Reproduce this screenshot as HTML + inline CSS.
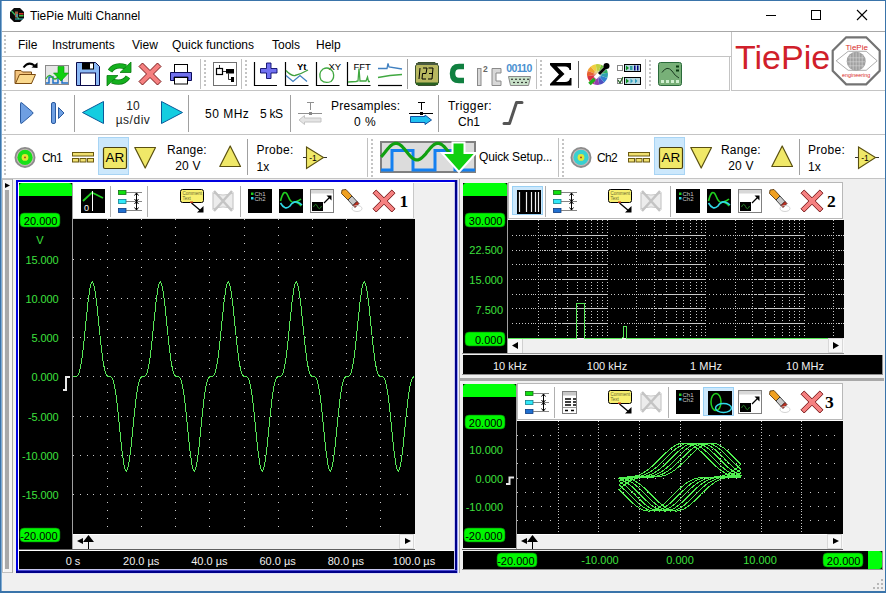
<!DOCTYPE html><html><head><meta charset="utf-8"><style>html,body{margin:0;padding:0;width:886px;height:593px;overflow:hidden;background:#f0f0f0}svg{display:block;font-family:"Liberation Sans",sans-serif}</style></head><body>
<svg width="886" height="593" viewBox="0 0 886 593">
<rect x="0" y="0" width="886" height="593" fill="#f0f0f0" />
<rect x="0" y="0" width="886" height="31" fill="#ffffff" />
<rect x="0" y="31" width="886" height="1" fill="#a8a8a8" />
<rect x="0" y="32" width="886" height="146" fill="#ffffff" />
<rect x="0" y="56" width="887" height="1" fill="#c4c4c4" />
<rect x="0" y="90" width="730" height="1" fill="#c4c4c4" />
<rect x="0" y="134" width="887" height="1" fill="#c4c4c4" />
<rect x="0" y="178" width="887" height="1" fill="#c4c4c4" />
<rect x="4" y="35" width="2" height="2" fill="#c4c4c4" />
<rect x="4" y="39" width="2" height="2" fill="#c4c4c4" />
<rect x="4" y="43" width="2" height="2" fill="#c4c4c4" />
<rect x="4" y="47" width="2" height="2" fill="#c4c4c4" />
<rect x="4" y="51" width="2" height="2" fill="#c4c4c4" />
<rect x="4" y="60" width="2" height="2" fill="#c4c4c4" />
<rect x="4" y="64" width="2" height="2" fill="#c4c4c4" />
<rect x="4" y="68" width="2" height="2" fill="#c4c4c4" />
<rect x="4" y="72" width="2" height="2" fill="#c4c4c4" />
<rect x="4" y="76" width="2" height="2" fill="#c4c4c4" />
<rect x="4" y="80" width="2" height="2" fill="#c4c4c4" />
<rect x="4" y="84" width="2" height="2" fill="#c4c4c4" />
<rect x="4" y="93" width="2" height="2" fill="#c4c4c4" />
<rect x="4" y="97" width="2" height="2" fill="#c4c4c4" />
<rect x="4" y="101" width="2" height="2" fill="#c4c4c4" />
<rect x="4" y="105" width="2" height="2" fill="#c4c4c4" />
<rect x="4" y="109" width="2" height="2" fill="#c4c4c4" />
<rect x="4" y="113" width="2" height="2" fill="#c4c4c4" />
<rect x="4" y="117" width="2" height="2" fill="#c4c4c4" />
<rect x="4" y="121" width="2" height="2" fill="#c4c4c4" />
<rect x="4" y="125" width="2" height="2" fill="#c4c4c4" />
<rect x="4" y="129" width="2" height="2" fill="#c4c4c4" />
<rect x="4" y="137" width="2" height="2" fill="#c4c4c4" />
<rect x="4" y="141" width="2" height="2" fill="#c4c4c4" />
<rect x="4" y="145" width="2" height="2" fill="#c4c4c4" />
<rect x="4" y="149" width="2" height="2" fill="#c4c4c4" />
<rect x="4" y="153" width="2" height="2" fill="#c4c4c4" />
<rect x="4" y="157" width="2" height="2" fill="#c4c4c4" />
<rect x="4" y="161" width="2" height="2" fill="#c4c4c4" />
<rect x="4" y="165" width="2" height="2" fill="#c4c4c4" />
<rect x="4" y="169" width="2" height="2" fill="#c4c4c4" />
<rect x="4" y="173" width="2" height="2" fill="#c4c4c4" />
<g transform="translate(10,8)"><polygon points="4,0 10,0 14,4 14,10 10,14 4,14 0,10 0,4" fill="#0a0a0a"/><path d="M1.5,3 L9,11" stroke="#30c060" stroke-width="1.2"/><rect x="5" y="3.5" width="3" height="6" fill="#a06040"/><rect x="6" y="6" width="2" height="3" fill="#5090a0"/><rect x="9" y="5" width="4.5" height="1.5" fill="#d03020"/><rect x="9" y="7" width="4.5" height="1.5" fill="#40c040"/><path d="M5,11 H13" stroke="#40c0c0" stroke-width="1"/></g>
<text x="30" y="20" font-size="12" fill="#000" text-anchor="start" >TiePie Multi Channel</text>
<rect x="766" y="15" width="10" height="1" fill="#000" />
<rect x="811.5" y="10.5" width="9" height="9" fill="none" stroke="#000" stroke-width="1"/>
<path d="M857,10 L867,20 M867,10 L857,20" stroke="#000" stroke-width="1.1"/>
<text x="18" y="49" font-size="12" fill="#000" text-anchor="start" >File</text>
<text x="52" y="49" font-size="12" fill="#000" text-anchor="start" >Instruments</text>
<text x="132" y="49" font-size="12" fill="#000" text-anchor="start" >View</text>
<text x="172" y="49" font-size="12" fill="#000" text-anchor="start" >Quick functions</text>
<text x="272" y="49" font-size="12" fill="#000" text-anchor="start" >Tools</text>
<text x="316" y="49" font-size="12" fill="#000" text-anchor="start" >Help</text>
<rect x="731" y="32" width="154" height="58" fill="#ffffff" />
<rect x="729" y="57" width="1" height="33" fill="#c4c4c4" />
<rect x="731" y="32" width="1" height="59" fill="#c4c4c4" />
<rect x="731" y="90" width="154" height="1" fill="#c4c4c4" />
<text x="735" y="69" font-size="34" fill="#d0202a" text-anchor="start" >TiePie</text>
<g transform="translate(856.2,60.8)"><polygon points="-10,-23.5 10,-23.5 23.5,-10 23.5,10 10,23.5 -10,23.5 -23.5,10 -23.5,-10" fill="#fff" stroke="#737373" stroke-width="2.2"/><path d="M-20,0 L-8,-9.5 L10,-9.5 L21,0 L10,9.5 L-8,9.5 Z" fill="none" stroke="#8a8a8a" stroke-width="0.7"/><circle cx="0" cy="0.5" r="9.5" fill="#a0a0a0"/><path d="M-6,-6 V7 M-3,-8 V9 M0,-8.5 V9.5 M3,-8 V9 M6,-6 V7 M-8,-3 H8 M-9,1 H9 M-8,5 H8" stroke="#d8d8d8" stroke-width="0.6"/><text x="0.5" y="-11" font-size="8" fill="#d82a2a" text-anchor="middle">TiePie</text><text x="0" y="16" font-size="5.4" fill="#d82a2a" text-anchor="middle">engineering</text></g>
<g transform="translate(14,62)"><path d="M1,8.5 H7 L8.5,10 H17.5 V21.5 H1 Z" fill="#f2c37e" stroke="#7a4a10" stroke-width="1"/><path d="M1.5,21.5 L5.5,12.5 H21.5 L17.5,21.5 Z" fill="#fad98e" stroke="#7a4a10" stroke-width="1"/><path d="M9.5,5.5 Q14.5,-1 20.5,3.5" fill="none" stroke="#000" stroke-width="2"/><path d="M17.5,5.5 L23.5,0.5 L23.5,6 Z" fill="#000"/></g>
<g transform="translate(45,65)"><rect x="0.5" y="0.5" width="23" height="19" fill="#e6e6e6" stroke="#8a8a8a"/><path d="M1,18 H4 V12 H8 V18 H13 V12 H17 V18 H23" fill="none" stroke="#2070c8" stroke-width="1.5"/><path d="M1,14 Q4,8 7,12 T13,12" fill="none" stroke="#30b030" stroke-width="1.3"/><path d="M13,1.5 H19 V8 H23.5 L16,16 L8.5,8 H13 Z" fill="#10d010" stroke="#0a900a" stroke-width="0.6"/></g>
<g transform="translate(76,62)"><path d="M0.5,0.5 H19.5 L23.5,4.5 V23.5 H0.5 Z" fill="#8ab8f4" stroke="#0a0a4a" stroke-width="1"/><rect x="6" y="0.5" width="12" height="7" fill="#000"/><rect x="14" y="1.5" width="3" height="5" fill="#fff"/><rect x="4.5" y="11" width="15" height="12.5" fill="#fff" stroke="#0a0a4a" stroke-width="1"/></g>
<g transform="translate(107,62)"><path d="M3,9 Q8,1.5 19,5" fill="none" stroke="#0a7a10" stroke-width="5.2"/><path d="M3,9 Q8,1.5 19,5" fill="none" stroke="#14b01e" stroke-width="3.6"/><path d="M13,10.5 L24,10.5 L24,0 Z" fill="#14b01e" stroke="#0a7a10" stroke-width="0.8"/><path d="M21,15 Q16,22.5 5,19" fill="none" stroke="#0a7a10" stroke-width="5.2"/><path d="M21,15 Q16,22.5 5,19" fill="none" stroke="#14b01e" stroke-width="3.6"/><path d="M11,13.5 L0,13.5 L0,24 Z" fill="#14b01e" stroke="#0a7a10" stroke-width="0.8"/></g>
<g transform="translate(139,63)"><path d="M0,3.5 L3.5,0 L11,7.5 L18.5,0 L22,3.5 L14.5,11 L22,18.5 L18.5,22 L11,14.5 L3.5,22 L0,18.5 L7.5,11 Z" fill="#f58080" stroke="#7a1a1a" stroke-width="1"/></g>
<g transform="translate(170,64)"><rect x="4.5" y="0.5" width="13" height="8" fill="#fff" stroke="#000"/><path d="M0.5,8.5 H21.5 V16.5 H18 V13 H4 V16.5 H0.5 Z" fill="#7070ec" stroke="#0a0a5a"/><rect x="4.5" y="13.5" width="13" height="6.5" fill="#fff" stroke="#000"/></g>
<rect x="200" y="59" width="1" height="30" fill="#c0c0c0" />
<rect x="204" y="60" width="2" height="2" fill="#c4c4c4" />
<rect x="204" y="64" width="2" height="2" fill="#c4c4c4" />
<rect x="204" y="68" width="2" height="2" fill="#c4c4c4" />
<rect x="204" y="72" width="2" height="2" fill="#c4c4c4" />
<rect x="204" y="76" width="2" height="2" fill="#c4c4c4" />
<rect x="204" y="80" width="2" height="2" fill="#c4c4c4" />
<rect x="204" y="84" width="2" height="2" fill="#c4c4c4" />
<g transform="translate(213,62)"><rect x="0.5" y="0.5" width="23" height="23" fill="#fff" stroke="#707070"/><rect x="3.5" y="6.5" width="6" height="6" fill="#fff" stroke="#000" stroke-width="1.2"/><path d="M6.5,3 V6.5 M9.5,9.5 H13 M15.5,11.5 V17.5 H18" fill="none" stroke="#000" stroke-width="0.8"/><rect x="13" y="7" width="8" height="4.5" fill="#000"/><rect x="18" y="15" width="3" height="5" fill="#000"/></g>
<rect x="241" y="59" width="1" height="30" fill="#c0c0c0" />
<rect x="245" y="60" width="2" height="2" fill="#c4c4c4" />
<rect x="245" y="64" width="2" height="2" fill="#c4c4c4" />
<rect x="245" y="68" width="2" height="2" fill="#c4c4c4" />
<rect x="245" y="72" width="2" height="2" fill="#c4c4c4" />
<rect x="245" y="76" width="2" height="2" fill="#c4c4c4" />
<rect x="245" y="80" width="2" height="2" fill="#c4c4c4" />
<rect x="245" y="84" width="2" height="2" fill="#c4c4c4" />
<g transform="translate(254,62)"><path d="M0.5,0 V23.5 H23" fill="none" stroke="#000" stroke-width="1.2"/><path d="M12.5,1 H17 V6.5 H23 V11 H17 V16.5 H12.5 V11 H6.5 V6.5 H12.5 Z" fill="#7070f0" stroke="#0a0a6a" stroke-width="0.9"/></g>
<g transform="translate(285,62)"><path d="M0.5,0 V23.5 H23.5" fill="none" stroke="#000" stroke-width="1.2"/><text x="12" y="7.5" font-size="9.5" font-weight="bold" fill="#000">Yt</text><path d="M1,8.5 Q6,14 10,13.5 Q16,12 23,8" fill="none" stroke="#40a040" stroke-width="1.3"/><path d="M1,13.5 L8,19.5 L15,13.5 L22,19.5" fill="none" stroke="#4080c0" stroke-width="1.3"/></g>
<g transform="translate(316,62)"><path d="M0.5,0 V23.5 H23.5" fill="none" stroke="#000" stroke-width="1.2"/><text x="12.5" y="7.5" font-size="9.5" fill="#000">XY</text><path d="M7,7 Q13,4 17,10 Q19,16 15,19.5 Q9,22 5,18 Q2,11 7,7 Z" fill="none" stroke="#40a840" stroke-width="1.3"/></g>
<g transform="translate(347,62)"><path d="M0.5,0 V23.5 H23.5" fill="none" stroke="#000" stroke-width="1.2"/><text x="6.5" y="7.5" font-size="9.5" fill="#000">FFT</text><path d="M1,20 L9,19.5 L11,19 L12,6.5 L13,19 L19,19 L20.5,15 L21.5,19.5 L23,19.5" fill="none" stroke="#40a840" stroke-width="1.3"/></g>
<g transform="translate(378,62)"><path d="M0,23.5 H24" stroke="#000" stroke-width="1.2"/><path d="M0,6.5 H9 L10,1.5 L11,5 L24,7" fill="none" stroke="#4080c0" stroke-width="1.3"/><path d="M0,15.5 Q12,13 24,12.5" fill="none" stroke="#40a840" stroke-width="1.3"/></g>
<rect x="407" y="59" width="1" height="30" fill="#a0a0a0" />
<g transform="translate(415,62)"><path d="M3,0.5 H20 L23.5,4 V21 L20.5,23.5 H3 L0.5,21 V4 Z" fill="#b8b860" stroke="#3a5030" stroke-width="1"/><rect x="1" y="1" width="22" height="2" fill="#4a5a40"/><rect x="1" y="20.5" width="22" height="2.5" fill="#2a6020"/><path d="M5,6 L4,17 M8,6 H12 L11,11.5 H7.5 L7,17 H11 M13.5,6 H18 L17,17 H13 M14,11.5 H17.5" fill="none" stroke="#000" stroke-width="1"/></g>
<g transform="translate(450,62)"><path d="M14,4.5 H9 Q2.5,4.5 2.5,11.5 Q2.5,18.5 9,18.5 H14" fill="none" stroke="#108040" stroke-width="5.5"/></g>
<g transform="translate(477,62)"><rect x="0.5" y="6.5" width="3.5" height="17" fill="#d8d8d8" stroke="#8a8a8a"/><text x="6" y="9.5" font-size="8.5" font-weight="bold" fill="#666">2</text><path d="M15,6.5 H24 V11 H19 V19 H24 V23.5 H15 Z" fill="#d8d8d8" stroke="#8a8a8a"/></g>
<g transform="translate(508,62)"><text x="11" y="10" font-size="10.5" font-weight="bold" fill="#4a90d0" text-anchor="middle" letter-spacing="-0.6">00110</text><path d="M0.5,14.5 H22.5 L20.5,23.5 H2.5 Z" fill="#c8e0c8" stroke="#8a8a8a"/><circle cx="4" cy="17.3" r="0.8" fill="#000"/><circle cx="8" cy="17.3" r="0.8" fill="#000"/><circle cx="12" cy="17.3" r="0.8" fill="#000"/><circle cx="16" cy="17.3" r="0.8" fill="#000"/><circle cx="20" cy="17.3" r="0.8" fill="#000"/><circle cx="6" cy="20.5" r="0.8" fill="#000"/><circle cx="10" cy="20.5" r="0.8" fill="#000"/><circle cx="14" cy="20.5" r="0.8" fill="#000"/><circle cx="18" cy="20.5" r="0.8" fill="#000"/></g>
<rect x="536" y="59" width="1" height="30" fill="#c0c0c0" />
<rect x="540" y="60" width="2" height="2" fill="#c4c4c4" />
<rect x="540" y="64" width="2" height="2" fill="#c4c4c4" />
<rect x="540" y="68" width="2" height="2" fill="#c4c4c4" />
<rect x="540" y="72" width="2" height="2" fill="#c4c4c4" />
<rect x="540" y="76" width="2" height="2" fill="#c4c4c4" />
<rect x="540" y="80" width="2" height="2" fill="#c4c4c4" />
<rect x="540" y="84" width="2" height="2" fill="#c4c4c4" />
<g transform="translate(549,62)"><path d="M1,1 H22 V8 H20.5 Q20,4.5 16,4.5 H8 L15.5,12 L7,20 H16 Q20.5,20 21,16 H22.5 V23.5 H1 V22 L10,12.5 L1,3 Z" fill="#000"/></g>
<rect x="578" y="61" width="1" height="27" fill="#606060" />
<g transform="translate(586,62)"><path d="M11.5,12.5 L9.68,2.16 A10.5,10.5 0 0 0 4.75,4.46 Z" fill="#f0d040"/><path d="M11.5,12.5 L4.75,4.46 A10.5,10.5 0 0 0 1.63,8.91 Z" fill="#f0a030"/><path d="M11.5,12.5 L1.63,8.91 A10.5,10.5 0 0 0 1.16,14.32 Z" fill="#e86030"/><path d="M11.5,12.5 L1.16,14.32 A10.5,10.5 0 0 0 3.46,19.25 Z" fill="#d83040"/><path d="M11.5,12.5 L3.46,19.25 A10.5,10.5 0 0 0 7.91,22.37 Z" fill="#c03080"/><path d="M11.5,12.5 L7.91,22.37 A10.5,10.5 0 0 0 13.32,22.84 Z" fill="#9040b0"/><path d="M11.5,12.5 L13.32,22.84 A10.5,10.5 0 0 0 18.25,20.54 Z" fill="#5050c0"/><path d="M11.5,12.5 L18.25,20.54 A10.5,10.5 0 0 0 21.37,16.09 Z" fill="#3080d0"/><path d="M11.5,12.5 L21.37,16.09 A10.5,10.5 0 0 0 21.84,10.68 Z" fill="#30a0b0"/><path d="M11.5,12.5 L21.84,10.68 A10.5,10.5 0 0 0 19.54,5.75 Z" fill="#30b060"/><path d="M11.5,12.5 L19.54,5.75 A10.5,10.5 0 0 0 15.09,2.63 Z" fill="#70c040"/><path d="M11.5,12.5 L15.09,2.63 A10.5,10.5 0 0 0 9.68,2.16 Z" fill="#c0d040"/><circle cx="11.5" cy="12.5" r="4" fill="#e0e0e0" opacity="0.4"/><path d="M9,16 L20,5" stroke="#fff" stroke-width="3.5"/><path d="M13,12 L20,5" stroke="#000" stroke-width="3"/><circle cx="20.5" cy="4" r="3" fill="#000"/><path d="M3.5,22 L8.5,17" stroke="#20b020" stroke-width="3.5"/></g>
<g transform="translate(617,62)"><rect x="0.5" y="3.5" width="5" height="5" fill="#fff" stroke="#888"/><rect x="7.5" y="2.5" width="16" height="7" fill="#b8d8e0" stroke="#000"/><path d="M9,3.5 L12,6 L9,8.5 Z" fill="#109020"/><rect x="13" y="4" width="2.5" height="4" fill="#30a0a0"/><rect x="17" y="3.5" width="1.5" height="5" fill="#000080"/><rect x="20" y="3.5" width="1.5" height="5" fill="#000080"/><rect x="0.5" y="16.5" width="5" height="5" fill="#fff" stroke="#888"/><path d="M1,18 L3,21 L6,15" fill="none" stroke="#206020" stroke-width="1.2"/><rect x="7.5" y="15.5" width="16" height="7" fill="#b8d8e0" stroke="#000"/><path d="M9,16.5 L12,19 L9,21.5 Z" fill="#109020"/><path d="M13.5,16.5 L16,19 L13.5,21.5 Z" fill="#30a0c0"/><path d="M18,16.5 L20.5,19 L18,21.5 Z" fill="#30a0c0"/></g>
<rect x="645" y="59" width="1" height="30" fill="#c0c0c0" />
<rect x="649" y="60" width="2" height="2" fill="#c4c4c4" />
<rect x="649" y="64" width="2" height="2" fill="#c4c4c4" />
<rect x="649" y="68" width="2" height="2" fill="#c4c4c4" />
<rect x="649" y="72" width="2" height="2" fill="#c4c4c4" />
<rect x="649" y="76" width="2" height="2" fill="#c4c4c4" />
<rect x="649" y="80" width="2" height="2" fill="#c4c4c4" />
<rect x="649" y="84" width="2" height="2" fill="#c4c4c4" />
<g transform="translate(658,62)"><rect x="0.5" y="0.5" width="23" height="23" rx="2" fill="#78b078" stroke="#2a6a3a"/><path d="M4,10.5 Q9,3 14,9 Q17,14 21,16" fill="none" stroke="#1a3a20" stroke-width="1"/><rect x="18" y="3.5" width="3" height="2" fill="#0a3a10"/><rect x="18" y="7.5" width="3" height="2" fill="#0a3a10"/><rect x="3" y="18" width="3" height="3" fill="#d0f0d0"/><rect x="8" y="18" width="3" height="3" fill="#d0f0d0"/><rect x="13" y="18" width="3" height="3" fill="#d0f0d0"/><rect x="18" y="18" width="3" height="3" fill="#d0f0d0"/></g>
<g transform="translate(20,102)"><path d="M0.5,1.5 Q0.5,0 2,1 L12.5,10 Q13.5,11 12.5,12 L2,21 Q0.5,22 0.5,20.5 Z" fill="#6e9fe2" stroke="#2a5aa0" stroke-width="1"/></g>
<g transform="translate(51,102)"><rect x="0.5" y="0.5" width="4" height="21" rx="1.5" fill="#6e9fe2" stroke="#2a5aa0"/><path d="M7.5,5.5 L13,11 L7.5,16.5 Z" fill="#6e9fe2" stroke="#2a5aa0"/></g>
<rect x="74" y="95" width="1" height="37" fill="#a0a0a0" />
<g transform="translate(82,101)"><path d="M0.5,11.5 L21.5,0.5 V22.5 Z" fill="#14cde0" stroke="#0a5a9a" stroke-width="1"/></g>
<text x="133" y="110" font-size="12" fill="#222" text-anchor="middle" >10</text>
<text x="133" y="124" font-size="12" fill="#222" text-anchor="middle" letter-spacing="0.5">µs/div</text>
<g transform="translate(161,101)"><path d="M21.5,11.5 L0.5,0.5 V22.5 Z" fill="#14cde0" stroke="#0a5a9a" stroke-width="1"/></g>
<rect x="188" y="95" width="1" height="37" fill="#a0a0a0" />
<text x="205" y="118" font-size="12" fill="#000" text-anchor="start" letter-spacing="0.5">50 MHz</text>
<text x="260" y="118" font-size="12" fill="#000" text-anchor="start" letter-spacing="-0.3">5 kS</text>
<rect x="290" y="95" width="1" height="37" fill="#a0a0a0" />
<g transform="translate(298,101)"><path d="M9,1.5 H16 M12.5,1.5 V9" stroke="#909090" stroke-width="1"/><path d="M0,12.5 H24" stroke="#909090" stroke-width="1"/><rect x="11" y="11" width="3" height="3" fill="#888"/><path d="M1,19 L6.5,14.5 V17 H23 V21 H6.5 V23.5 Z" fill="#e4e4e4" stroke="#c4c4c4" stroke-width="1"/></g>
<text x="331" y="110" font-size="12" fill="#000" text-anchor="start" letter-spacing="0.25">Presamples:</text>
<text x="365" y="126" font-size="12" fill="#000" text-anchor="middle" letter-spacing="0.5">0 %</text>
<g transform="translate(409,101)"><path d="M9,1.5 H16 M12.5,1.5 V9" stroke="#000" stroke-width="1"/><path d="M0,12.5 H24" stroke="#000" stroke-width="1"/><rect x="11" y="11" width="3" height="3" fill="#000"/><path d="M1.5,15.5 H16 V14 L22.5,19 L16,23.5 V21.5 H1.5 Z" fill="#20c0f0" stroke="#1050a0" stroke-width="1"/></g>
<rect x="438" y="95" width="1" height="37" fill="#a0a0a0" />
<text x="448" y="110" font-size="12" fill="#000" text-anchor="start" letter-spacing="0.4">Trigger:</text>
<text x="469" y="126" font-size="12" fill="#000" text-anchor="middle" >Ch1</text>
<g transform="translate(503,101)"><path d="M1,22.5 H6.5 L13.5,1.5 H19" fill="none" stroke="#555" stroke-width="3" stroke-linejoin="round" stroke-linecap="round"/></g>
<circle cx="25" cy="157.4" r="9.6" fill="#c8b8b8" stroke="#8c8c8c" stroke-width="1.8"/><circle cx="25" cy="157.4" r="7.6" fill="#18e018"/><circle cx="25" cy="157.4" r="3.4" fill="#e8e830" opacity="0.95"/><circle cx="25" cy="157.4" r="0.9" fill="#b03020"/>
<text x="42" y="162" font-size="12" fill="#000" text-anchor="start" letter-spacing="-0.7">Ch1</text>
<g transform="translate(72,152)"><rect x="0.5" y="0.5" width="21" height="3.5" fill="#f0e070" stroke="#6a5a10"/><rect x="0.5" y="6.5" width="6" height="3.5" fill="#f0e070" stroke="#6a5a10"/><rect x="8" y="6.5" width="6" height="3.5" fill="#f0e070" stroke="#6a5a10"/><rect x="15.5" y="6.5" width="6" height="3.5" fill="#f0e070" stroke="#6a5a10"/></g>
<rect x="98" y="137" width="31" height="38" fill="#cce8fc" />
<rect x="98.5" y="137.5" width="30" height="37" fill="none" stroke="#a8d4f4"/>
<g transform="translate(103,147)"><rect x="0.5" y="0.5" width="23" height="21" rx="1.5" fill="#f0e868" stroke="#4a4010" stroke-width="1.2"/><text x="12" y="15" font-size="13.5" fill="#000" text-anchor="middle">AR</text></g>
<g transform="translate(134,147)"><path d="M0.8,0.5 H21.5 L11.2,21 Z" fill="#f0e868" stroke="#5a5010" stroke-width="1.2" stroke-linejoin="round"/></g>
<text x="167" y="154" font-size="12" fill="#000" text-anchor="start" letter-spacing="0.2">Range:</text>
<text x="188" y="170" font-size="12" fill="#000" text-anchor="middle" letter-spacing="0.2">20 V</text>
<g transform="translate(219,145.5)"><path d="M0.8,21 H21.5 L11.2,0.5 Z" fill="#f0e868" stroke="#5a5010" stroke-width="1.2" stroke-linejoin="round"/></g>
<rect x="247" y="139" width="1" height="36" fill="#a0a0a0" />
<text x="256.5" y="154" font-size="12" fill="#000" text-anchor="start" letter-spacing="0.3">Probe:</text>
<text x="256.5" y="170.5" font-size="12" fill="#000" text-anchor="start" >1x</text>
<g transform="translate(303,146.5)"><path d="M0,11 H3.5 M20.5,11 H24" stroke="#333" stroke-width="1"/><path d="M3.5,0.5 L20.5,11 L3.5,22 Z" fill="#f0e868" stroke="#5a5010" stroke-width="1.1"/><text x="10" y="14.5" font-size="8.5" fill="#000" text-anchor="middle">-1</text></g>
<rect x="367" y="138" width="1" height="39" fill="#c0c0c0" />
<rect x="371" y="139" width="2" height="2" fill="#c4c4c4" />
<rect x="371" y="143" width="2" height="2" fill="#c4c4c4" />
<rect x="371" y="147" width="2" height="2" fill="#c4c4c4" />
<rect x="371" y="151" width="2" height="2" fill="#c4c4c4" />
<rect x="371" y="155" width="2" height="2" fill="#c4c4c4" />
<rect x="371" y="159" width="2" height="2" fill="#c4c4c4" />
<rect x="371" y="163" width="2" height="2" fill="#c4c4c4" />
<rect x="371" y="167" width="2" height="2" fill="#c4c4c4" />
<rect x="371" y="171" width="2" height="2" fill="#c4c4c4" />
<rect x="371" y="175" width="2" height="2" fill="#c4c4c4" />
<g transform="translate(380,141)"><rect x="1" y="1" width="94" height="30" fill="#dcdcdc" stroke="#808080" stroke-width="2"/><path d="M1,29 H12 V9.5 H33 V29 H55 V9.5 H75 V29 H95" fill="none" stroke="#1480f0" stroke-width="3"/><polyline points="1,15.8 2,14.8 3,13.7 4,12.5 5,11.3 6,10.0 7,8.8 8,7.6 9,6.5 10,5.4 11,4.5 12,3.7 13,3.1 14,2.7 15,2.4 16,2.3 17,2.4 18,2.7 19,3.1 20,3.7 21,4.5 22,5.4 23,6.5 24,7.6 25,8.8 26,10.0 27,11.3 28,12.5 29,13.7 30,14.8 31,15.8 32,16.7 33,17.5 34,18.1 35,18.5 36,18.8 37,18.9 38,18.8 39,18.5 40,18.0 41,17.4 42,16.6 43,15.7 44,14.7 45,13.6 46,12.4 47,11.1 48,9.9 49,8.7 50,7.5 51,6.4 52,5.3 53,4.4 54,3.7 55,3.1 56,2.6 57,2.4 58,2.3 59,2.4 60,2.7 61,3.2 62,3.8 63,4.6 64,5.5 65,6.6 66,7.7 67,8.9 68,10.1 69,11.4 70,12.6 71,13.8 72,14.9 73,15.9 74,16.8" fill="none" stroke="#10a010" stroke-width="3.2"/><path d="M72.5,1.5 H84.5 V12 H96 L79,31 L62,12 H72.5 Z" fill="#10d010" stroke="#fff" stroke-width="2"/></g>
<text x="479" y="160.5" font-size="12" fill="#000" text-anchor="start" letter-spacing="-0.15">Quick Setup...</text>
<rect x="558" y="138" width="1" height="39" fill="#c0c0c0" />
<rect x="562" y="139" width="2" height="2" fill="#c4c4c4" />
<rect x="562" y="143" width="2" height="2" fill="#c4c4c4" />
<rect x="562" y="147" width="2" height="2" fill="#c4c4c4" />
<rect x="562" y="151" width="2" height="2" fill="#c4c4c4" />
<rect x="562" y="155" width="2" height="2" fill="#c4c4c4" />
<rect x="562" y="159" width="2" height="2" fill="#c4c4c4" />
<rect x="562" y="163" width="2" height="2" fill="#c4c4c4" />
<rect x="562" y="167" width="2" height="2" fill="#c4c4c4" />
<rect x="562" y="171" width="2" height="2" fill="#c4c4c4" />
<rect x="562" y="175" width="2" height="2" fill="#c4c4c4" />
<circle cx="581" cy="157.4" r="9.6" fill="#c8b8b8" stroke="#8c8c8c" stroke-width="1.8"/><circle cx="581" cy="157.4" r="7.6" fill="#38d0d0"/><circle cx="581" cy="157.4" r="3.4" fill="#e8e830" opacity="0.95"/><circle cx="581" cy="157.4" r="0.9" fill="#b03020"/>
<text x="597" y="162" font-size="12" fill="#000" text-anchor="start" letter-spacing="-0.7">Ch2</text>
<g transform="translate(628,152)"><rect x="0.5" y="0.5" width="21" height="3.5" fill="#f0e070" stroke="#6a5a10"/><rect x="0.5" y="6.5" width="6" height="3.5" fill="#f0e070" stroke="#6a5a10"/><rect x="8" y="6.5" width="6" height="3.5" fill="#f0e070" stroke="#6a5a10"/><rect x="15.5" y="6.5" width="6" height="3.5" fill="#f0e070" stroke="#6a5a10"/></g>
<rect x="654" y="137" width="31" height="38" fill="#cce8fc" />
<rect x="654.5" y="137.5" width="30" height="37" fill="none" stroke="#a8d4f4"/>
<g transform="translate(659,147)"><rect x="0.5" y="0.5" width="23" height="21" rx="1.5" fill="#f0e868" stroke="#4a4010" stroke-width="1.2"/><text x="12" y="15" font-size="13.5" fill="#000" text-anchor="middle">AR</text></g>
<g transform="translate(690,147)"><path d="M0.8,0.5 H21.5 L11.2,21 Z" fill="#f0e868" stroke="#5a5010" stroke-width="1.2" stroke-linejoin="round"/></g>
<text x="721" y="154" font-size="12" fill="#000" text-anchor="start" letter-spacing="0.2">Range:</text>
<text x="741" y="170" font-size="12" fill="#000" text-anchor="middle" letter-spacing="0.2">20 V</text>
<g transform="translate(771,145.5)"><path d="M0.8,21 H21.5 L11.2,0.5 Z" fill="#f0e868" stroke="#5a5010" stroke-width="1.2" stroke-linejoin="round"/></g>
<rect x="799" y="139" width="1" height="36" fill="#a0a0a0" />
<text x="808" y="154" font-size="12" fill="#000" text-anchor="start" letter-spacing="0.3">Probe:</text>
<text x="808" y="170.5" font-size="12" fill="#000" text-anchor="start" >1x</text>
<g transform="translate(855,146.5)"><path d="M0,11 H3.5 M20.5,11 H24" stroke="#333" stroke-width="1"/><path d="M3.5,0.5 L20.5,11 L3.5,22 Z" fill="#f0e868" stroke="#5a5010" stroke-width="1.1"/><text x="10" y="14.5" font-size="8.5" fill="#000" text-anchor="middle">-1</text></g>
<rect x="2.5" y="179.5" width="10" height="393" fill="#f4f4f4" stroke="#c0c0c0" stroke-width="1"/>
<rect x="3" y="180" width="1" height="392" fill="#ffffff" />
<path d="M5,183 L10,185.5 L5,188 Z" fill="#000"/>
<rect x="5" y="190" width="4" height="379" fill="#a8a8a8" />
<rect x="12" y="179" width="1" height="394" fill="#a8a8a8" />
<rect x="16" y="180" width="441" height="2" fill="#0000e0" />
<rect x="16" y="180" width="2" height="393" fill="#0000e0" />
<rect x="455" y="180" width="2" height="393" fill="#000088" />
<rect x="16" y="571" width="441" height="2" fill="#000088" />
<rect x="18" y="570" width="439" height="1" fill="#4848d0" />
<rect x="457" y="180" width="1" height="394" fill="#98a0f8" />
<rect x="16" y="573" width="442" height="1" fill="#e0e0fa" />
<rect x="18" y="182" width="437" height="388" fill="#f0f0f0" />
<rect x="18" y="182" width="437" height="1" fill="#ffffff" />
<rect x="18" y="182" width="1" height="388" fill="#ffffff" />
<rect x="454" y="182" width="1" height="388" fill="#c8c8f0" />
<rect x="18" y="569" width="437" height="1" fill="#c8c8f0" />
<rect x="19" y="183" width="53" height="366" fill="#000000" />
<path d="M19,196 V186 Q19,183 22,183 H69 Q72,183 72,186 V196 Z" fill="#00ff08"/>
<rect x="72" y="183" width="1" height="366" fill="#a0a0a0" />
<rect x="73" y="183" width="341" height="36" fill="#ffffff" />
<rect x="413" y="183" width="1" height="36" fill="#c8c8c8" />
<rect x="73" y="218" width="341" height="1" fill="#e0e0e0" />
<rect x="73" y="219" width="342" height="315" fill="#000000" />
<rect x="107" y="219" width="1" height="1" fill="#c8c8c8" />
<rect x="107" y="227" width="1" height="1" fill="#c8c8c8" />
<rect x="107" y="235" width="1" height="1" fill="#c8c8c8" />
<rect x="107" y="243" width="1" height="1" fill="#c8c8c8" />
<rect x="107" y="251" width="1" height="1" fill="#c8c8c8" />
<rect x="107" y="259" width="1" height="1" fill="#c8c8c8" />
<rect x="107" y="267" width="1" height="1" fill="#c8c8c8" />
<rect x="107" y="275" width="1" height="1" fill="#c8c8c8" />
<rect x="107" y="282" width="1" height="1" fill="#c8c8c8" />
<rect x="107" y="290" width="1" height="1" fill="#c8c8c8" />
<rect x="107" y="298" width="1" height="1" fill="#c8c8c8" />
<rect x="107" y="306" width="1" height="1" fill="#c8c8c8" />
<rect x="107" y="314" width="1" height="1" fill="#c8c8c8" />
<rect x="107" y="321" width="1" height="1" fill="#c8c8c8" />
<rect x="107" y="329" width="1" height="1" fill="#c8c8c8" />
<rect x="107" y="337" width="1" height="1" fill="#c8c8c8" />
<rect x="107" y="345" width="1" height="1" fill="#c8c8c8" />
<rect x="107" y="353" width="1" height="1" fill="#c8c8c8" />
<rect x="107" y="360" width="1" height="1" fill="#c8c8c8" />
<rect x="107" y="368" width="1" height="1" fill="#c8c8c8" />
<rect x="107" y="376" width="1" height="1" fill="#c8c8c8" />
<rect x="107" y="384" width="1" height="1" fill="#c8c8c8" />
<rect x="107" y="392" width="1" height="1" fill="#c8c8c8" />
<rect x="107" y="400" width="1" height="1" fill="#c8c8c8" />
<rect x="107" y="408" width="1" height="1" fill="#c8c8c8" />
<rect x="107" y="416" width="1" height="1" fill="#c8c8c8" />
<rect x="107" y="424" width="1" height="1" fill="#c8c8c8" />
<rect x="107" y="432" width="1" height="1" fill="#c8c8c8" />
<rect x="107" y="439" width="1" height="1" fill="#c8c8c8" />
<rect x="107" y="447" width="1" height="1" fill="#c8c8c8" />
<rect x="107" y="455" width="1" height="1" fill="#c8c8c8" />
<rect x="107" y="463" width="1" height="1" fill="#c8c8c8" />
<rect x="107" y="471" width="1" height="1" fill="#c8c8c8" />
<rect x="107" y="478" width="1" height="1" fill="#c8c8c8" />
<rect x="107" y="486" width="1" height="1" fill="#c8c8c8" />
<rect x="107" y="494" width="1" height="1" fill="#c8c8c8" />
<rect x="107" y="502" width="1" height="1" fill="#c8c8c8" />
<rect x="107" y="510" width="1" height="1" fill="#c8c8c8" />
<rect x="107" y="518" width="1" height="1" fill="#c8c8c8" />
<rect x="107" y="526" width="1" height="1" fill="#c8c8c8" />
<rect x="141" y="219" width="1" height="1" fill="#c8c8c8" />
<rect x="141" y="227" width="1" height="1" fill="#c8c8c8" />
<rect x="141" y="235" width="1" height="1" fill="#c8c8c8" />
<rect x="141" y="243" width="1" height="1" fill="#c8c8c8" />
<rect x="141" y="251" width="1" height="1" fill="#c8c8c8" />
<rect x="141" y="259" width="1" height="1" fill="#c8c8c8" />
<rect x="141" y="267" width="1" height="1" fill="#c8c8c8" />
<rect x="141" y="275" width="1" height="1" fill="#c8c8c8" />
<rect x="141" y="282" width="1" height="1" fill="#c8c8c8" />
<rect x="141" y="290" width="1" height="1" fill="#c8c8c8" />
<rect x="141" y="298" width="1" height="1" fill="#c8c8c8" />
<rect x="141" y="306" width="1" height="1" fill="#c8c8c8" />
<rect x="141" y="314" width="1" height="1" fill="#c8c8c8" />
<rect x="141" y="321" width="1" height="1" fill="#c8c8c8" />
<rect x="141" y="329" width="1" height="1" fill="#c8c8c8" />
<rect x="141" y="337" width="1" height="1" fill="#c8c8c8" />
<rect x="141" y="345" width="1" height="1" fill="#c8c8c8" />
<rect x="141" y="353" width="1" height="1" fill="#c8c8c8" />
<rect x="141" y="360" width="1" height="1" fill="#c8c8c8" />
<rect x="141" y="368" width="1" height="1" fill="#c8c8c8" />
<rect x="141" y="376" width="1" height="1" fill="#c8c8c8" />
<rect x="141" y="384" width="1" height="1" fill="#c8c8c8" />
<rect x="141" y="392" width="1" height="1" fill="#c8c8c8" />
<rect x="141" y="400" width="1" height="1" fill="#c8c8c8" />
<rect x="141" y="408" width="1" height="1" fill="#c8c8c8" />
<rect x="141" y="416" width="1" height="1" fill="#c8c8c8" />
<rect x="141" y="424" width="1" height="1" fill="#c8c8c8" />
<rect x="141" y="432" width="1" height="1" fill="#c8c8c8" />
<rect x="141" y="439" width="1" height="1" fill="#c8c8c8" />
<rect x="141" y="447" width="1" height="1" fill="#c8c8c8" />
<rect x="141" y="455" width="1" height="1" fill="#c8c8c8" />
<rect x="141" y="463" width="1" height="1" fill="#c8c8c8" />
<rect x="141" y="471" width="1" height="1" fill="#c8c8c8" />
<rect x="141" y="478" width="1" height="1" fill="#c8c8c8" />
<rect x="141" y="486" width="1" height="1" fill="#c8c8c8" />
<rect x="141" y="494" width="1" height="1" fill="#c8c8c8" />
<rect x="141" y="502" width="1" height="1" fill="#c8c8c8" />
<rect x="141" y="510" width="1" height="1" fill="#c8c8c8" />
<rect x="141" y="518" width="1" height="1" fill="#c8c8c8" />
<rect x="141" y="526" width="1" height="1" fill="#c8c8c8" />
<rect x="175" y="219" width="1" height="1" fill="#c8c8c8" />
<rect x="175" y="227" width="1" height="1" fill="#c8c8c8" />
<rect x="175" y="235" width="1" height="1" fill="#c8c8c8" />
<rect x="175" y="243" width="1" height="1" fill="#c8c8c8" />
<rect x="175" y="251" width="1" height="1" fill="#c8c8c8" />
<rect x="175" y="259" width="1" height="1" fill="#c8c8c8" />
<rect x="175" y="267" width="1" height="1" fill="#c8c8c8" />
<rect x="175" y="275" width="1" height="1" fill="#c8c8c8" />
<rect x="175" y="282" width="1" height="1" fill="#c8c8c8" />
<rect x="175" y="290" width="1" height="1" fill="#c8c8c8" />
<rect x="175" y="298" width="1" height="1" fill="#c8c8c8" />
<rect x="175" y="306" width="1" height="1" fill="#c8c8c8" />
<rect x="175" y="314" width="1" height="1" fill="#c8c8c8" />
<rect x="175" y="321" width="1" height="1" fill="#c8c8c8" />
<rect x="175" y="329" width="1" height="1" fill="#c8c8c8" />
<rect x="175" y="337" width="1" height="1" fill="#c8c8c8" />
<rect x="175" y="345" width="1" height="1" fill="#c8c8c8" />
<rect x="175" y="353" width="1" height="1" fill="#c8c8c8" />
<rect x="175" y="360" width="1" height="1" fill="#c8c8c8" />
<rect x="175" y="368" width="1" height="1" fill="#c8c8c8" />
<rect x="175" y="376" width="1" height="1" fill="#c8c8c8" />
<rect x="175" y="384" width="1" height="1" fill="#c8c8c8" />
<rect x="175" y="392" width="1" height="1" fill="#c8c8c8" />
<rect x="175" y="400" width="1" height="1" fill="#c8c8c8" />
<rect x="175" y="408" width="1" height="1" fill="#c8c8c8" />
<rect x="175" y="416" width="1" height="1" fill="#c8c8c8" />
<rect x="175" y="424" width="1" height="1" fill="#c8c8c8" />
<rect x="175" y="432" width="1" height="1" fill="#c8c8c8" />
<rect x="175" y="439" width="1" height="1" fill="#c8c8c8" />
<rect x="175" y="447" width="1" height="1" fill="#c8c8c8" />
<rect x="175" y="455" width="1" height="1" fill="#c8c8c8" />
<rect x="175" y="463" width="1" height="1" fill="#c8c8c8" />
<rect x="175" y="471" width="1" height="1" fill="#c8c8c8" />
<rect x="175" y="478" width="1" height="1" fill="#c8c8c8" />
<rect x="175" y="486" width="1" height="1" fill="#c8c8c8" />
<rect x="175" y="494" width="1" height="1" fill="#c8c8c8" />
<rect x="175" y="502" width="1" height="1" fill="#c8c8c8" />
<rect x="175" y="510" width="1" height="1" fill="#c8c8c8" />
<rect x="175" y="518" width="1" height="1" fill="#c8c8c8" />
<rect x="175" y="526" width="1" height="1" fill="#c8c8c8" />
<rect x="209" y="219" width="1" height="1" fill="#c8c8c8" />
<rect x="209" y="227" width="1" height="1" fill="#c8c8c8" />
<rect x="209" y="235" width="1" height="1" fill="#c8c8c8" />
<rect x="209" y="243" width="1" height="1" fill="#c8c8c8" />
<rect x="209" y="251" width="1" height="1" fill="#c8c8c8" />
<rect x="209" y="259" width="1" height="1" fill="#c8c8c8" />
<rect x="209" y="267" width="1" height="1" fill="#c8c8c8" />
<rect x="209" y="275" width="1" height="1" fill="#c8c8c8" />
<rect x="209" y="282" width="1" height="1" fill="#c8c8c8" />
<rect x="209" y="290" width="1" height="1" fill="#c8c8c8" />
<rect x="209" y="298" width="1" height="1" fill="#c8c8c8" />
<rect x="209" y="306" width="1" height="1" fill="#c8c8c8" />
<rect x="209" y="314" width="1" height="1" fill="#c8c8c8" />
<rect x="209" y="321" width="1" height="1" fill="#c8c8c8" />
<rect x="209" y="329" width="1" height="1" fill="#c8c8c8" />
<rect x="209" y="337" width="1" height="1" fill="#c8c8c8" />
<rect x="209" y="345" width="1" height="1" fill="#c8c8c8" />
<rect x="209" y="353" width="1" height="1" fill="#c8c8c8" />
<rect x="209" y="360" width="1" height="1" fill="#c8c8c8" />
<rect x="209" y="368" width="1" height="1" fill="#c8c8c8" />
<rect x="209" y="376" width="1" height="1" fill="#c8c8c8" />
<rect x="209" y="384" width="1" height="1" fill="#c8c8c8" />
<rect x="209" y="392" width="1" height="1" fill="#c8c8c8" />
<rect x="209" y="400" width="1" height="1" fill="#c8c8c8" />
<rect x="209" y="408" width="1" height="1" fill="#c8c8c8" />
<rect x="209" y="416" width="1" height="1" fill="#c8c8c8" />
<rect x="209" y="424" width="1" height="1" fill="#c8c8c8" />
<rect x="209" y="432" width="1" height="1" fill="#c8c8c8" />
<rect x="209" y="439" width="1" height="1" fill="#c8c8c8" />
<rect x="209" y="447" width="1" height="1" fill="#c8c8c8" />
<rect x="209" y="455" width="1" height="1" fill="#c8c8c8" />
<rect x="209" y="463" width="1" height="1" fill="#c8c8c8" />
<rect x="209" y="471" width="1" height="1" fill="#c8c8c8" />
<rect x="209" y="478" width="1" height="1" fill="#c8c8c8" />
<rect x="209" y="486" width="1" height="1" fill="#c8c8c8" />
<rect x="209" y="494" width="1" height="1" fill="#c8c8c8" />
<rect x="209" y="502" width="1" height="1" fill="#c8c8c8" />
<rect x="209" y="510" width="1" height="1" fill="#c8c8c8" />
<rect x="209" y="518" width="1" height="1" fill="#c8c8c8" />
<rect x="209" y="526" width="1" height="1" fill="#c8c8c8" />
<rect x="244" y="219" width="1" height="1" fill="#c8c8c8" />
<rect x="244" y="227" width="1" height="1" fill="#c8c8c8" />
<rect x="244" y="235" width="1" height="1" fill="#c8c8c8" />
<rect x="244" y="243" width="1" height="1" fill="#c8c8c8" />
<rect x="244" y="251" width="1" height="1" fill="#c8c8c8" />
<rect x="244" y="259" width="1" height="1" fill="#c8c8c8" />
<rect x="244" y="267" width="1" height="1" fill="#c8c8c8" />
<rect x="244" y="275" width="1" height="1" fill="#c8c8c8" />
<rect x="244" y="282" width="1" height="1" fill="#c8c8c8" />
<rect x="244" y="290" width="1" height="1" fill="#c8c8c8" />
<rect x="244" y="298" width="1" height="1" fill="#c8c8c8" />
<rect x="244" y="306" width="1" height="1" fill="#c8c8c8" />
<rect x="244" y="314" width="1" height="1" fill="#c8c8c8" />
<rect x="244" y="321" width="1" height="1" fill="#c8c8c8" />
<rect x="244" y="329" width="1" height="1" fill="#c8c8c8" />
<rect x="244" y="337" width="1" height="1" fill="#c8c8c8" />
<rect x="244" y="345" width="1" height="1" fill="#c8c8c8" />
<rect x="244" y="353" width="1" height="1" fill="#c8c8c8" />
<rect x="244" y="360" width="1" height="1" fill="#c8c8c8" />
<rect x="244" y="368" width="1" height="1" fill="#c8c8c8" />
<rect x="244" y="376" width="1" height="1" fill="#c8c8c8" />
<rect x="244" y="384" width="1" height="1" fill="#c8c8c8" />
<rect x="244" y="392" width="1" height="1" fill="#c8c8c8" />
<rect x="244" y="400" width="1" height="1" fill="#c8c8c8" />
<rect x="244" y="408" width="1" height="1" fill="#c8c8c8" />
<rect x="244" y="416" width="1" height="1" fill="#c8c8c8" />
<rect x="244" y="424" width="1" height="1" fill="#c8c8c8" />
<rect x="244" y="432" width="1" height="1" fill="#c8c8c8" />
<rect x="244" y="439" width="1" height="1" fill="#c8c8c8" />
<rect x="244" y="447" width="1" height="1" fill="#c8c8c8" />
<rect x="244" y="455" width="1" height="1" fill="#c8c8c8" />
<rect x="244" y="463" width="1" height="1" fill="#c8c8c8" />
<rect x="244" y="471" width="1" height="1" fill="#c8c8c8" />
<rect x="244" y="478" width="1" height="1" fill="#c8c8c8" />
<rect x="244" y="486" width="1" height="1" fill="#c8c8c8" />
<rect x="244" y="494" width="1" height="1" fill="#c8c8c8" />
<rect x="244" y="502" width="1" height="1" fill="#c8c8c8" />
<rect x="244" y="510" width="1" height="1" fill="#c8c8c8" />
<rect x="244" y="518" width="1" height="1" fill="#c8c8c8" />
<rect x="244" y="526" width="1" height="1" fill="#c8c8c8" />
<rect x="278" y="219" width="1" height="1" fill="#c8c8c8" />
<rect x="278" y="227" width="1" height="1" fill="#c8c8c8" />
<rect x="278" y="235" width="1" height="1" fill="#c8c8c8" />
<rect x="278" y="243" width="1" height="1" fill="#c8c8c8" />
<rect x="278" y="251" width="1" height="1" fill="#c8c8c8" />
<rect x="278" y="259" width="1" height="1" fill="#c8c8c8" />
<rect x="278" y="267" width="1" height="1" fill="#c8c8c8" />
<rect x="278" y="275" width="1" height="1" fill="#c8c8c8" />
<rect x="278" y="282" width="1" height="1" fill="#c8c8c8" />
<rect x="278" y="290" width="1" height="1" fill="#c8c8c8" />
<rect x="278" y="298" width="1" height="1" fill="#c8c8c8" />
<rect x="278" y="306" width="1" height="1" fill="#c8c8c8" />
<rect x="278" y="314" width="1" height="1" fill="#c8c8c8" />
<rect x="278" y="321" width="1" height="1" fill="#c8c8c8" />
<rect x="278" y="329" width="1" height="1" fill="#c8c8c8" />
<rect x="278" y="337" width="1" height="1" fill="#c8c8c8" />
<rect x="278" y="345" width="1" height="1" fill="#c8c8c8" />
<rect x="278" y="353" width="1" height="1" fill="#c8c8c8" />
<rect x="278" y="360" width="1" height="1" fill="#c8c8c8" />
<rect x="278" y="368" width="1" height="1" fill="#c8c8c8" />
<rect x="278" y="376" width="1" height="1" fill="#c8c8c8" />
<rect x="278" y="384" width="1" height="1" fill="#c8c8c8" />
<rect x="278" y="392" width="1" height="1" fill="#c8c8c8" />
<rect x="278" y="400" width="1" height="1" fill="#c8c8c8" />
<rect x="278" y="408" width="1" height="1" fill="#c8c8c8" />
<rect x="278" y="416" width="1" height="1" fill="#c8c8c8" />
<rect x="278" y="424" width="1" height="1" fill="#c8c8c8" />
<rect x="278" y="432" width="1" height="1" fill="#c8c8c8" />
<rect x="278" y="439" width="1" height="1" fill="#c8c8c8" />
<rect x="278" y="447" width="1" height="1" fill="#c8c8c8" />
<rect x="278" y="455" width="1" height="1" fill="#c8c8c8" />
<rect x="278" y="463" width="1" height="1" fill="#c8c8c8" />
<rect x="278" y="471" width="1" height="1" fill="#c8c8c8" />
<rect x="278" y="478" width="1" height="1" fill="#c8c8c8" />
<rect x="278" y="486" width="1" height="1" fill="#c8c8c8" />
<rect x="278" y="494" width="1" height="1" fill="#c8c8c8" />
<rect x="278" y="502" width="1" height="1" fill="#c8c8c8" />
<rect x="278" y="510" width="1" height="1" fill="#c8c8c8" />
<rect x="278" y="518" width="1" height="1" fill="#c8c8c8" />
<rect x="278" y="526" width="1" height="1" fill="#c8c8c8" />
<rect x="312" y="219" width="1" height="1" fill="#c8c8c8" />
<rect x="312" y="227" width="1" height="1" fill="#c8c8c8" />
<rect x="312" y="235" width="1" height="1" fill="#c8c8c8" />
<rect x="312" y="243" width="1" height="1" fill="#c8c8c8" />
<rect x="312" y="251" width="1" height="1" fill="#c8c8c8" />
<rect x="312" y="259" width="1" height="1" fill="#c8c8c8" />
<rect x="312" y="267" width="1" height="1" fill="#c8c8c8" />
<rect x="312" y="275" width="1" height="1" fill="#c8c8c8" />
<rect x="312" y="282" width="1" height="1" fill="#c8c8c8" />
<rect x="312" y="290" width="1" height="1" fill="#c8c8c8" />
<rect x="312" y="298" width="1" height="1" fill="#c8c8c8" />
<rect x="312" y="306" width="1" height="1" fill="#c8c8c8" />
<rect x="312" y="314" width="1" height="1" fill="#c8c8c8" />
<rect x="312" y="321" width="1" height="1" fill="#c8c8c8" />
<rect x="312" y="329" width="1" height="1" fill="#c8c8c8" />
<rect x="312" y="337" width="1" height="1" fill="#c8c8c8" />
<rect x="312" y="345" width="1" height="1" fill="#c8c8c8" />
<rect x="312" y="353" width="1" height="1" fill="#c8c8c8" />
<rect x="312" y="360" width="1" height="1" fill="#c8c8c8" />
<rect x="312" y="368" width="1" height="1" fill="#c8c8c8" />
<rect x="312" y="376" width="1" height="1" fill="#c8c8c8" />
<rect x="312" y="384" width="1" height="1" fill="#c8c8c8" />
<rect x="312" y="392" width="1" height="1" fill="#c8c8c8" />
<rect x="312" y="400" width="1" height="1" fill="#c8c8c8" />
<rect x="312" y="408" width="1" height="1" fill="#c8c8c8" />
<rect x="312" y="416" width="1" height="1" fill="#c8c8c8" />
<rect x="312" y="424" width="1" height="1" fill="#c8c8c8" />
<rect x="312" y="432" width="1" height="1" fill="#c8c8c8" />
<rect x="312" y="439" width="1" height="1" fill="#c8c8c8" />
<rect x="312" y="447" width="1" height="1" fill="#c8c8c8" />
<rect x="312" y="455" width="1" height="1" fill="#c8c8c8" />
<rect x="312" y="463" width="1" height="1" fill="#c8c8c8" />
<rect x="312" y="471" width="1" height="1" fill="#c8c8c8" />
<rect x="312" y="478" width="1" height="1" fill="#c8c8c8" />
<rect x="312" y="486" width="1" height="1" fill="#c8c8c8" />
<rect x="312" y="494" width="1" height="1" fill="#c8c8c8" />
<rect x="312" y="502" width="1" height="1" fill="#c8c8c8" />
<rect x="312" y="510" width="1" height="1" fill="#c8c8c8" />
<rect x="312" y="518" width="1" height="1" fill="#c8c8c8" />
<rect x="312" y="526" width="1" height="1" fill="#c8c8c8" />
<rect x="346" y="219" width="1" height="1" fill="#c8c8c8" />
<rect x="346" y="227" width="1" height="1" fill="#c8c8c8" />
<rect x="346" y="235" width="1" height="1" fill="#c8c8c8" />
<rect x="346" y="243" width="1" height="1" fill="#c8c8c8" />
<rect x="346" y="251" width="1" height="1" fill="#c8c8c8" />
<rect x="346" y="259" width="1" height="1" fill="#c8c8c8" />
<rect x="346" y="267" width="1" height="1" fill="#c8c8c8" />
<rect x="346" y="275" width="1" height="1" fill="#c8c8c8" />
<rect x="346" y="282" width="1" height="1" fill="#c8c8c8" />
<rect x="346" y="290" width="1" height="1" fill="#c8c8c8" />
<rect x="346" y="298" width="1" height="1" fill="#c8c8c8" />
<rect x="346" y="306" width="1" height="1" fill="#c8c8c8" />
<rect x="346" y="314" width="1" height="1" fill="#c8c8c8" />
<rect x="346" y="321" width="1" height="1" fill="#c8c8c8" />
<rect x="346" y="329" width="1" height="1" fill="#c8c8c8" />
<rect x="346" y="337" width="1" height="1" fill="#c8c8c8" />
<rect x="346" y="345" width="1" height="1" fill="#c8c8c8" />
<rect x="346" y="353" width="1" height="1" fill="#c8c8c8" />
<rect x="346" y="360" width="1" height="1" fill="#c8c8c8" />
<rect x="346" y="368" width="1" height="1" fill="#c8c8c8" />
<rect x="346" y="376" width="1" height="1" fill="#c8c8c8" />
<rect x="346" y="384" width="1" height="1" fill="#c8c8c8" />
<rect x="346" y="392" width="1" height="1" fill="#c8c8c8" />
<rect x="346" y="400" width="1" height="1" fill="#c8c8c8" />
<rect x="346" y="408" width="1" height="1" fill="#c8c8c8" />
<rect x="346" y="416" width="1" height="1" fill="#c8c8c8" />
<rect x="346" y="424" width="1" height="1" fill="#c8c8c8" />
<rect x="346" y="432" width="1" height="1" fill="#c8c8c8" />
<rect x="346" y="439" width="1" height="1" fill="#c8c8c8" />
<rect x="346" y="447" width="1" height="1" fill="#c8c8c8" />
<rect x="346" y="455" width="1" height="1" fill="#c8c8c8" />
<rect x="346" y="463" width="1" height="1" fill="#c8c8c8" />
<rect x="346" y="471" width="1" height="1" fill="#c8c8c8" />
<rect x="346" y="478" width="1" height="1" fill="#c8c8c8" />
<rect x="346" y="486" width="1" height="1" fill="#c8c8c8" />
<rect x="346" y="494" width="1" height="1" fill="#c8c8c8" />
<rect x="346" y="502" width="1" height="1" fill="#c8c8c8" />
<rect x="346" y="510" width="1" height="1" fill="#c8c8c8" />
<rect x="346" y="518" width="1" height="1" fill="#c8c8c8" />
<rect x="346" y="526" width="1" height="1" fill="#c8c8c8" />
<rect x="380" y="219" width="1" height="1" fill="#c8c8c8" />
<rect x="380" y="227" width="1" height="1" fill="#c8c8c8" />
<rect x="380" y="235" width="1" height="1" fill="#c8c8c8" />
<rect x="380" y="243" width="1" height="1" fill="#c8c8c8" />
<rect x="380" y="251" width="1" height="1" fill="#c8c8c8" />
<rect x="380" y="259" width="1" height="1" fill="#c8c8c8" />
<rect x="380" y="267" width="1" height="1" fill="#c8c8c8" />
<rect x="380" y="275" width="1" height="1" fill="#c8c8c8" />
<rect x="380" y="282" width="1" height="1" fill="#c8c8c8" />
<rect x="380" y="290" width="1" height="1" fill="#c8c8c8" />
<rect x="380" y="298" width="1" height="1" fill="#c8c8c8" />
<rect x="380" y="306" width="1" height="1" fill="#c8c8c8" />
<rect x="380" y="314" width="1" height="1" fill="#c8c8c8" />
<rect x="380" y="321" width="1" height="1" fill="#c8c8c8" />
<rect x="380" y="329" width="1" height="1" fill="#c8c8c8" />
<rect x="380" y="337" width="1" height="1" fill="#c8c8c8" />
<rect x="380" y="345" width="1" height="1" fill="#c8c8c8" />
<rect x="380" y="353" width="1" height="1" fill="#c8c8c8" />
<rect x="380" y="360" width="1" height="1" fill="#c8c8c8" />
<rect x="380" y="368" width="1" height="1" fill="#c8c8c8" />
<rect x="380" y="376" width="1" height="1" fill="#c8c8c8" />
<rect x="380" y="384" width="1" height="1" fill="#c8c8c8" />
<rect x="380" y="392" width="1" height="1" fill="#c8c8c8" />
<rect x="380" y="400" width="1" height="1" fill="#c8c8c8" />
<rect x="380" y="408" width="1" height="1" fill="#c8c8c8" />
<rect x="380" y="416" width="1" height="1" fill="#c8c8c8" />
<rect x="380" y="424" width="1" height="1" fill="#c8c8c8" />
<rect x="380" y="432" width="1" height="1" fill="#c8c8c8" />
<rect x="380" y="439" width="1" height="1" fill="#c8c8c8" />
<rect x="380" y="447" width="1" height="1" fill="#c8c8c8" />
<rect x="380" y="455" width="1" height="1" fill="#c8c8c8" />
<rect x="380" y="463" width="1" height="1" fill="#c8c8c8" />
<rect x="380" y="471" width="1" height="1" fill="#c8c8c8" />
<rect x="380" y="478" width="1" height="1" fill="#c8c8c8" />
<rect x="380" y="486" width="1" height="1" fill="#c8c8c8" />
<rect x="380" y="494" width="1" height="1" fill="#c8c8c8" />
<rect x="380" y="502" width="1" height="1" fill="#c8c8c8" />
<rect x="380" y="510" width="1" height="1" fill="#c8c8c8" />
<rect x="380" y="518" width="1" height="1" fill="#c8c8c8" />
<rect x="380" y="526" width="1" height="1" fill="#c8c8c8" />
<rect x="73" y="259" width="1" height="1" fill="#c8c8c8" />
<rect x="80" y="259" width="1" height="1" fill="#c8c8c8" />
<rect x="87" y="259" width="1" height="1" fill="#c8c8c8" />
<rect x="93" y="259" width="1" height="1" fill="#c8c8c8" />
<rect x="100" y="259" width="1" height="1" fill="#c8c8c8" />
<rect x="107" y="259" width="1" height="1" fill="#c8c8c8" />
<rect x="114" y="259" width="1" height="1" fill="#c8c8c8" />
<rect x="121" y="259" width="1" height="1" fill="#c8c8c8" />
<rect x="127" y="259" width="1" height="1" fill="#c8c8c8" />
<rect x="134" y="259" width="1" height="1" fill="#c8c8c8" />
<rect x="141" y="259" width="1" height="1" fill="#c8c8c8" />
<rect x="148" y="259" width="1" height="1" fill="#c8c8c8" />
<rect x="155" y="259" width="1" height="1" fill="#c8c8c8" />
<rect x="161" y="259" width="1" height="1" fill="#c8c8c8" />
<rect x="168" y="259" width="1" height="1" fill="#c8c8c8" />
<rect x="175" y="259" width="1" height="1" fill="#c8c8c8" />
<rect x="182" y="259" width="1" height="1" fill="#c8c8c8" />
<rect x="189" y="259" width="1" height="1" fill="#c8c8c8" />
<rect x="195" y="259" width="1" height="1" fill="#c8c8c8" />
<rect x="202" y="259" width="1" height="1" fill="#c8c8c8" />
<rect x="209" y="259" width="1" height="1" fill="#c8c8c8" />
<rect x="216" y="259" width="1" height="1" fill="#c8c8c8" />
<rect x="223" y="259" width="1" height="1" fill="#c8c8c8" />
<rect x="230" y="259" width="1" height="1" fill="#c8c8c8" />
<rect x="237" y="259" width="1" height="1" fill="#c8c8c8" />
<rect x="244" y="259" width="1" height="1" fill="#c8c8c8" />
<rect x="251" y="259" width="1" height="1" fill="#c8c8c8" />
<rect x="258" y="259" width="1" height="1" fill="#c8c8c8" />
<rect x="264" y="259" width="1" height="1" fill="#c8c8c8" />
<rect x="271" y="259" width="1" height="1" fill="#c8c8c8" />
<rect x="278" y="259" width="1" height="1" fill="#c8c8c8" />
<rect x="285" y="259" width="1" height="1" fill="#c8c8c8" />
<rect x="292" y="259" width="1" height="1" fill="#c8c8c8" />
<rect x="298" y="259" width="1" height="1" fill="#c8c8c8" />
<rect x="305" y="259" width="1" height="1" fill="#c8c8c8" />
<rect x="312" y="259" width="1" height="1" fill="#c8c8c8" />
<rect x="319" y="259" width="1" height="1" fill="#c8c8c8" />
<rect x="326" y="259" width="1" height="1" fill="#c8c8c8" />
<rect x="332" y="259" width="1" height="1" fill="#c8c8c8" />
<rect x="339" y="259" width="1" height="1" fill="#c8c8c8" />
<rect x="346" y="259" width="1" height="1" fill="#c8c8c8" />
<rect x="353" y="259" width="1" height="1" fill="#c8c8c8" />
<rect x="360" y="259" width="1" height="1" fill="#c8c8c8" />
<rect x="366" y="259" width="1" height="1" fill="#c8c8c8" />
<rect x="373" y="259" width="1" height="1" fill="#c8c8c8" />
<rect x="380" y="259" width="1" height="1" fill="#c8c8c8" />
<rect x="387" y="259" width="1" height="1" fill="#c8c8c8" />
<rect x="394" y="259" width="1" height="1" fill="#c8c8c8" />
<rect x="400" y="259" width="1" height="1" fill="#c8c8c8" />
<rect x="407" y="259" width="1" height="1" fill="#c8c8c8" />
<rect x="73" y="298" width="1" height="1" fill="#c8c8c8" />
<rect x="80" y="298" width="1" height="1" fill="#c8c8c8" />
<rect x="87" y="298" width="1" height="1" fill="#c8c8c8" />
<rect x="93" y="298" width="1" height="1" fill="#c8c8c8" />
<rect x="100" y="298" width="1" height="1" fill="#c8c8c8" />
<rect x="107" y="298" width="1" height="1" fill="#c8c8c8" />
<rect x="114" y="298" width="1" height="1" fill="#c8c8c8" />
<rect x="121" y="298" width="1" height="1" fill="#c8c8c8" />
<rect x="127" y="298" width="1" height="1" fill="#c8c8c8" />
<rect x="134" y="298" width="1" height="1" fill="#c8c8c8" />
<rect x="141" y="298" width="1" height="1" fill="#c8c8c8" />
<rect x="148" y="298" width="1" height="1" fill="#c8c8c8" />
<rect x="155" y="298" width="1" height="1" fill="#c8c8c8" />
<rect x="161" y="298" width="1" height="1" fill="#c8c8c8" />
<rect x="168" y="298" width="1" height="1" fill="#c8c8c8" />
<rect x="175" y="298" width="1" height="1" fill="#c8c8c8" />
<rect x="182" y="298" width="1" height="1" fill="#c8c8c8" />
<rect x="189" y="298" width="1" height="1" fill="#c8c8c8" />
<rect x="195" y="298" width="1" height="1" fill="#c8c8c8" />
<rect x="202" y="298" width="1" height="1" fill="#c8c8c8" />
<rect x="209" y="298" width="1" height="1" fill="#c8c8c8" />
<rect x="216" y="298" width="1" height="1" fill="#c8c8c8" />
<rect x="223" y="298" width="1" height="1" fill="#c8c8c8" />
<rect x="230" y="298" width="1" height="1" fill="#c8c8c8" />
<rect x="237" y="298" width="1" height="1" fill="#c8c8c8" />
<rect x="244" y="298" width="1" height="1" fill="#c8c8c8" />
<rect x="251" y="298" width="1" height="1" fill="#c8c8c8" />
<rect x="258" y="298" width="1" height="1" fill="#c8c8c8" />
<rect x="264" y="298" width="1" height="1" fill="#c8c8c8" />
<rect x="271" y="298" width="1" height="1" fill="#c8c8c8" />
<rect x="278" y="298" width="1" height="1" fill="#c8c8c8" />
<rect x="285" y="298" width="1" height="1" fill="#c8c8c8" />
<rect x="292" y="298" width="1" height="1" fill="#c8c8c8" />
<rect x="298" y="298" width="1" height="1" fill="#c8c8c8" />
<rect x="305" y="298" width="1" height="1" fill="#c8c8c8" />
<rect x="312" y="298" width="1" height="1" fill="#c8c8c8" />
<rect x="319" y="298" width="1" height="1" fill="#c8c8c8" />
<rect x="326" y="298" width="1" height="1" fill="#c8c8c8" />
<rect x="332" y="298" width="1" height="1" fill="#c8c8c8" />
<rect x="339" y="298" width="1" height="1" fill="#c8c8c8" />
<rect x="346" y="298" width="1" height="1" fill="#c8c8c8" />
<rect x="353" y="298" width="1" height="1" fill="#c8c8c8" />
<rect x="360" y="298" width="1" height="1" fill="#c8c8c8" />
<rect x="366" y="298" width="1" height="1" fill="#c8c8c8" />
<rect x="373" y="298" width="1" height="1" fill="#c8c8c8" />
<rect x="380" y="298" width="1" height="1" fill="#c8c8c8" />
<rect x="387" y="298" width="1" height="1" fill="#c8c8c8" />
<rect x="394" y="298" width="1" height="1" fill="#c8c8c8" />
<rect x="400" y="298" width="1" height="1" fill="#c8c8c8" />
<rect x="407" y="298" width="1" height="1" fill="#c8c8c8" />
<rect x="73" y="337" width="1" height="1" fill="#c8c8c8" />
<rect x="80" y="337" width="1" height="1" fill="#c8c8c8" />
<rect x="87" y="337" width="1" height="1" fill="#c8c8c8" />
<rect x="93" y="337" width="1" height="1" fill="#c8c8c8" />
<rect x="100" y="337" width="1" height="1" fill="#c8c8c8" />
<rect x="107" y="337" width="1" height="1" fill="#c8c8c8" />
<rect x="114" y="337" width="1" height="1" fill="#c8c8c8" />
<rect x="121" y="337" width="1" height="1" fill="#c8c8c8" />
<rect x="127" y="337" width="1" height="1" fill="#c8c8c8" />
<rect x="134" y="337" width="1" height="1" fill="#c8c8c8" />
<rect x="141" y="337" width="1" height="1" fill="#c8c8c8" />
<rect x="148" y="337" width="1" height="1" fill="#c8c8c8" />
<rect x="155" y="337" width="1" height="1" fill="#c8c8c8" />
<rect x="161" y="337" width="1" height="1" fill="#c8c8c8" />
<rect x="168" y="337" width="1" height="1" fill="#c8c8c8" />
<rect x="175" y="337" width="1" height="1" fill="#c8c8c8" />
<rect x="182" y="337" width="1" height="1" fill="#c8c8c8" />
<rect x="189" y="337" width="1" height="1" fill="#c8c8c8" />
<rect x="195" y="337" width="1" height="1" fill="#c8c8c8" />
<rect x="202" y="337" width="1" height="1" fill="#c8c8c8" />
<rect x="209" y="337" width="1" height="1" fill="#c8c8c8" />
<rect x="216" y="337" width="1" height="1" fill="#c8c8c8" />
<rect x="223" y="337" width="1" height="1" fill="#c8c8c8" />
<rect x="230" y="337" width="1" height="1" fill="#c8c8c8" />
<rect x="237" y="337" width="1" height="1" fill="#c8c8c8" />
<rect x="244" y="337" width="1" height="1" fill="#c8c8c8" />
<rect x="251" y="337" width="1" height="1" fill="#c8c8c8" />
<rect x="258" y="337" width="1" height="1" fill="#c8c8c8" />
<rect x="264" y="337" width="1" height="1" fill="#c8c8c8" />
<rect x="271" y="337" width="1" height="1" fill="#c8c8c8" />
<rect x="278" y="337" width="1" height="1" fill="#c8c8c8" />
<rect x="285" y="337" width="1" height="1" fill="#c8c8c8" />
<rect x="292" y="337" width="1" height="1" fill="#c8c8c8" />
<rect x="298" y="337" width="1" height="1" fill="#c8c8c8" />
<rect x="305" y="337" width="1" height="1" fill="#c8c8c8" />
<rect x="312" y="337" width="1" height="1" fill="#c8c8c8" />
<rect x="319" y="337" width="1" height="1" fill="#c8c8c8" />
<rect x="326" y="337" width="1" height="1" fill="#c8c8c8" />
<rect x="332" y="337" width="1" height="1" fill="#c8c8c8" />
<rect x="339" y="337" width="1" height="1" fill="#c8c8c8" />
<rect x="346" y="337" width="1" height="1" fill="#c8c8c8" />
<rect x="353" y="337" width="1" height="1" fill="#c8c8c8" />
<rect x="360" y="337" width="1" height="1" fill="#c8c8c8" />
<rect x="366" y="337" width="1" height="1" fill="#c8c8c8" />
<rect x="373" y="337" width="1" height="1" fill="#c8c8c8" />
<rect x="380" y="337" width="1" height="1" fill="#c8c8c8" />
<rect x="387" y="337" width="1" height="1" fill="#c8c8c8" />
<rect x="394" y="337" width="1" height="1" fill="#c8c8c8" />
<rect x="400" y="337" width="1" height="1" fill="#c8c8c8" />
<rect x="407" y="337" width="1" height="1" fill="#c8c8c8" />
<rect x="73" y="376" width="1" height="1" fill="#c8c8c8" />
<rect x="80" y="376" width="1" height="1" fill="#c8c8c8" />
<rect x="87" y="376" width="1" height="1" fill="#c8c8c8" />
<rect x="93" y="376" width="1" height="1" fill="#c8c8c8" />
<rect x="100" y="376" width="1" height="1" fill="#c8c8c8" />
<rect x="107" y="376" width="1" height="1" fill="#c8c8c8" />
<rect x="114" y="376" width="1" height="1" fill="#c8c8c8" />
<rect x="121" y="376" width="1" height="1" fill="#c8c8c8" />
<rect x="127" y="376" width="1" height="1" fill="#c8c8c8" />
<rect x="134" y="376" width="1" height="1" fill="#c8c8c8" />
<rect x="141" y="376" width="1" height="1" fill="#c8c8c8" />
<rect x="148" y="376" width="1" height="1" fill="#c8c8c8" />
<rect x="155" y="376" width="1" height="1" fill="#c8c8c8" />
<rect x="161" y="376" width="1" height="1" fill="#c8c8c8" />
<rect x="168" y="376" width="1" height="1" fill="#c8c8c8" />
<rect x="175" y="376" width="1" height="1" fill="#c8c8c8" />
<rect x="182" y="376" width="1" height="1" fill="#c8c8c8" />
<rect x="189" y="376" width="1" height="1" fill="#c8c8c8" />
<rect x="195" y="376" width="1" height="1" fill="#c8c8c8" />
<rect x="202" y="376" width="1" height="1" fill="#c8c8c8" />
<rect x="209" y="376" width="1" height="1" fill="#c8c8c8" />
<rect x="216" y="376" width="1" height="1" fill="#c8c8c8" />
<rect x="223" y="376" width="1" height="1" fill="#c8c8c8" />
<rect x="230" y="376" width="1" height="1" fill="#c8c8c8" />
<rect x="237" y="376" width="1" height="1" fill="#c8c8c8" />
<rect x="244" y="376" width="1" height="1" fill="#c8c8c8" />
<rect x="251" y="376" width="1" height="1" fill="#c8c8c8" />
<rect x="258" y="376" width="1" height="1" fill="#c8c8c8" />
<rect x="264" y="376" width="1" height="1" fill="#c8c8c8" />
<rect x="271" y="376" width="1" height="1" fill="#c8c8c8" />
<rect x="278" y="376" width="1" height="1" fill="#c8c8c8" />
<rect x="285" y="376" width="1" height="1" fill="#c8c8c8" />
<rect x="292" y="376" width="1" height="1" fill="#c8c8c8" />
<rect x="298" y="376" width="1" height="1" fill="#c8c8c8" />
<rect x="305" y="376" width="1" height="1" fill="#c8c8c8" />
<rect x="312" y="376" width="1" height="1" fill="#c8c8c8" />
<rect x="319" y="376" width="1" height="1" fill="#c8c8c8" />
<rect x="326" y="376" width="1" height="1" fill="#c8c8c8" />
<rect x="332" y="376" width="1" height="1" fill="#c8c8c8" />
<rect x="339" y="376" width="1" height="1" fill="#c8c8c8" />
<rect x="346" y="376" width="1" height="1" fill="#c8c8c8" />
<rect x="353" y="376" width="1" height="1" fill="#c8c8c8" />
<rect x="360" y="376" width="1" height="1" fill="#c8c8c8" />
<rect x="366" y="376" width="1" height="1" fill="#c8c8c8" />
<rect x="373" y="376" width="1" height="1" fill="#c8c8c8" />
<rect x="380" y="376" width="1" height="1" fill="#c8c8c8" />
<rect x="387" y="376" width="1" height="1" fill="#c8c8c8" />
<rect x="394" y="376" width="1" height="1" fill="#c8c8c8" />
<rect x="400" y="376" width="1" height="1" fill="#c8c8c8" />
<rect x="407" y="376" width="1" height="1" fill="#c8c8c8" />
<rect x="73" y="416" width="1" height="1" fill="#c8c8c8" />
<rect x="80" y="416" width="1" height="1" fill="#c8c8c8" />
<rect x="87" y="416" width="1" height="1" fill="#c8c8c8" />
<rect x="93" y="416" width="1" height="1" fill="#c8c8c8" />
<rect x="100" y="416" width="1" height="1" fill="#c8c8c8" />
<rect x="107" y="416" width="1" height="1" fill="#c8c8c8" />
<rect x="114" y="416" width="1" height="1" fill="#c8c8c8" />
<rect x="121" y="416" width="1" height="1" fill="#c8c8c8" />
<rect x="127" y="416" width="1" height="1" fill="#c8c8c8" />
<rect x="134" y="416" width="1" height="1" fill="#c8c8c8" />
<rect x="141" y="416" width="1" height="1" fill="#c8c8c8" />
<rect x="148" y="416" width="1" height="1" fill="#c8c8c8" />
<rect x="155" y="416" width="1" height="1" fill="#c8c8c8" />
<rect x="161" y="416" width="1" height="1" fill="#c8c8c8" />
<rect x="168" y="416" width="1" height="1" fill="#c8c8c8" />
<rect x="175" y="416" width="1" height="1" fill="#c8c8c8" />
<rect x="182" y="416" width="1" height="1" fill="#c8c8c8" />
<rect x="189" y="416" width="1" height="1" fill="#c8c8c8" />
<rect x="195" y="416" width="1" height="1" fill="#c8c8c8" />
<rect x="202" y="416" width="1" height="1" fill="#c8c8c8" />
<rect x="209" y="416" width="1" height="1" fill="#c8c8c8" />
<rect x="216" y="416" width="1" height="1" fill="#c8c8c8" />
<rect x="223" y="416" width="1" height="1" fill="#c8c8c8" />
<rect x="230" y="416" width="1" height="1" fill="#c8c8c8" />
<rect x="237" y="416" width="1" height="1" fill="#c8c8c8" />
<rect x="244" y="416" width="1" height="1" fill="#c8c8c8" />
<rect x="251" y="416" width="1" height="1" fill="#c8c8c8" />
<rect x="258" y="416" width="1" height="1" fill="#c8c8c8" />
<rect x="264" y="416" width="1" height="1" fill="#c8c8c8" />
<rect x="271" y="416" width="1" height="1" fill="#c8c8c8" />
<rect x="278" y="416" width="1" height="1" fill="#c8c8c8" />
<rect x="285" y="416" width="1" height="1" fill="#c8c8c8" />
<rect x="292" y="416" width="1" height="1" fill="#c8c8c8" />
<rect x="298" y="416" width="1" height="1" fill="#c8c8c8" />
<rect x="305" y="416" width="1" height="1" fill="#c8c8c8" />
<rect x="312" y="416" width="1" height="1" fill="#c8c8c8" />
<rect x="319" y="416" width="1" height="1" fill="#c8c8c8" />
<rect x="326" y="416" width="1" height="1" fill="#c8c8c8" />
<rect x="332" y="416" width="1" height="1" fill="#c8c8c8" />
<rect x="339" y="416" width="1" height="1" fill="#c8c8c8" />
<rect x="346" y="416" width="1" height="1" fill="#c8c8c8" />
<rect x="353" y="416" width="1" height="1" fill="#c8c8c8" />
<rect x="360" y="416" width="1" height="1" fill="#c8c8c8" />
<rect x="366" y="416" width="1" height="1" fill="#c8c8c8" />
<rect x="373" y="416" width="1" height="1" fill="#c8c8c8" />
<rect x="380" y="416" width="1" height="1" fill="#c8c8c8" />
<rect x="387" y="416" width="1" height="1" fill="#c8c8c8" />
<rect x="394" y="416" width="1" height="1" fill="#c8c8c8" />
<rect x="400" y="416" width="1" height="1" fill="#c8c8c8" />
<rect x="407" y="416" width="1" height="1" fill="#c8c8c8" />
<rect x="73" y="455" width="1" height="1" fill="#c8c8c8" />
<rect x="80" y="455" width="1" height="1" fill="#c8c8c8" />
<rect x="87" y="455" width="1" height="1" fill="#c8c8c8" />
<rect x="93" y="455" width="1" height="1" fill="#c8c8c8" />
<rect x="100" y="455" width="1" height="1" fill="#c8c8c8" />
<rect x="107" y="455" width="1" height="1" fill="#c8c8c8" />
<rect x="114" y="455" width="1" height="1" fill="#c8c8c8" />
<rect x="121" y="455" width="1" height="1" fill="#c8c8c8" />
<rect x="127" y="455" width="1" height="1" fill="#c8c8c8" />
<rect x="134" y="455" width="1" height="1" fill="#c8c8c8" />
<rect x="141" y="455" width="1" height="1" fill="#c8c8c8" />
<rect x="148" y="455" width="1" height="1" fill="#c8c8c8" />
<rect x="155" y="455" width="1" height="1" fill="#c8c8c8" />
<rect x="161" y="455" width="1" height="1" fill="#c8c8c8" />
<rect x="168" y="455" width="1" height="1" fill="#c8c8c8" />
<rect x="175" y="455" width="1" height="1" fill="#c8c8c8" />
<rect x="182" y="455" width="1" height="1" fill="#c8c8c8" />
<rect x="189" y="455" width="1" height="1" fill="#c8c8c8" />
<rect x="195" y="455" width="1" height="1" fill="#c8c8c8" />
<rect x="202" y="455" width="1" height="1" fill="#c8c8c8" />
<rect x="209" y="455" width="1" height="1" fill="#c8c8c8" />
<rect x="216" y="455" width="1" height="1" fill="#c8c8c8" />
<rect x="223" y="455" width="1" height="1" fill="#c8c8c8" />
<rect x="230" y="455" width="1" height="1" fill="#c8c8c8" />
<rect x="237" y="455" width="1" height="1" fill="#c8c8c8" />
<rect x="244" y="455" width="1" height="1" fill="#c8c8c8" />
<rect x="251" y="455" width="1" height="1" fill="#c8c8c8" />
<rect x="258" y="455" width="1" height="1" fill="#c8c8c8" />
<rect x="264" y="455" width="1" height="1" fill="#c8c8c8" />
<rect x="271" y="455" width="1" height="1" fill="#c8c8c8" />
<rect x="278" y="455" width="1" height="1" fill="#c8c8c8" />
<rect x="285" y="455" width="1" height="1" fill="#c8c8c8" />
<rect x="292" y="455" width="1" height="1" fill="#c8c8c8" />
<rect x="298" y="455" width="1" height="1" fill="#c8c8c8" />
<rect x="305" y="455" width="1" height="1" fill="#c8c8c8" />
<rect x="312" y="455" width="1" height="1" fill="#c8c8c8" />
<rect x="319" y="455" width="1" height="1" fill="#c8c8c8" />
<rect x="326" y="455" width="1" height="1" fill="#c8c8c8" />
<rect x="332" y="455" width="1" height="1" fill="#c8c8c8" />
<rect x="339" y="455" width="1" height="1" fill="#c8c8c8" />
<rect x="346" y="455" width="1" height="1" fill="#c8c8c8" />
<rect x="353" y="455" width="1" height="1" fill="#c8c8c8" />
<rect x="360" y="455" width="1" height="1" fill="#c8c8c8" />
<rect x="366" y="455" width="1" height="1" fill="#c8c8c8" />
<rect x="373" y="455" width="1" height="1" fill="#c8c8c8" />
<rect x="380" y="455" width="1" height="1" fill="#c8c8c8" />
<rect x="387" y="455" width="1" height="1" fill="#c8c8c8" />
<rect x="394" y="455" width="1" height="1" fill="#c8c8c8" />
<rect x="400" y="455" width="1" height="1" fill="#c8c8c8" />
<rect x="407" y="455" width="1" height="1" fill="#c8c8c8" />
<rect x="73" y="494" width="1" height="1" fill="#c8c8c8" />
<rect x="80" y="494" width="1" height="1" fill="#c8c8c8" />
<rect x="87" y="494" width="1" height="1" fill="#c8c8c8" />
<rect x="93" y="494" width="1" height="1" fill="#c8c8c8" />
<rect x="100" y="494" width="1" height="1" fill="#c8c8c8" />
<rect x="107" y="494" width="1" height="1" fill="#c8c8c8" />
<rect x="114" y="494" width="1" height="1" fill="#c8c8c8" />
<rect x="121" y="494" width="1" height="1" fill="#c8c8c8" />
<rect x="127" y="494" width="1" height="1" fill="#c8c8c8" />
<rect x="134" y="494" width="1" height="1" fill="#c8c8c8" />
<rect x="141" y="494" width="1" height="1" fill="#c8c8c8" />
<rect x="148" y="494" width="1" height="1" fill="#c8c8c8" />
<rect x="155" y="494" width="1" height="1" fill="#c8c8c8" />
<rect x="161" y="494" width="1" height="1" fill="#c8c8c8" />
<rect x="168" y="494" width="1" height="1" fill="#c8c8c8" />
<rect x="175" y="494" width="1" height="1" fill="#c8c8c8" />
<rect x="182" y="494" width="1" height="1" fill="#c8c8c8" />
<rect x="189" y="494" width="1" height="1" fill="#c8c8c8" />
<rect x="195" y="494" width="1" height="1" fill="#c8c8c8" />
<rect x="202" y="494" width="1" height="1" fill="#c8c8c8" />
<rect x="209" y="494" width="1" height="1" fill="#c8c8c8" />
<rect x="216" y="494" width="1" height="1" fill="#c8c8c8" />
<rect x="223" y="494" width="1" height="1" fill="#c8c8c8" />
<rect x="230" y="494" width="1" height="1" fill="#c8c8c8" />
<rect x="237" y="494" width="1" height="1" fill="#c8c8c8" />
<rect x="244" y="494" width="1" height="1" fill="#c8c8c8" />
<rect x="251" y="494" width="1" height="1" fill="#c8c8c8" />
<rect x="258" y="494" width="1" height="1" fill="#c8c8c8" />
<rect x="264" y="494" width="1" height="1" fill="#c8c8c8" />
<rect x="271" y="494" width="1" height="1" fill="#c8c8c8" />
<rect x="278" y="494" width="1" height="1" fill="#c8c8c8" />
<rect x="285" y="494" width="1" height="1" fill="#c8c8c8" />
<rect x="292" y="494" width="1" height="1" fill="#c8c8c8" />
<rect x="298" y="494" width="1" height="1" fill="#c8c8c8" />
<rect x="305" y="494" width="1" height="1" fill="#c8c8c8" />
<rect x="312" y="494" width="1" height="1" fill="#c8c8c8" />
<rect x="319" y="494" width="1" height="1" fill="#c8c8c8" />
<rect x="326" y="494" width="1" height="1" fill="#c8c8c8" />
<rect x="332" y="494" width="1" height="1" fill="#c8c8c8" />
<rect x="339" y="494" width="1" height="1" fill="#c8c8c8" />
<rect x="346" y="494" width="1" height="1" fill="#c8c8c8" />
<rect x="353" y="494" width="1" height="1" fill="#c8c8c8" />
<rect x="360" y="494" width="1" height="1" fill="#c8c8c8" />
<rect x="366" y="494" width="1" height="1" fill="#c8c8c8" />
<rect x="373" y="494" width="1" height="1" fill="#c8c8c8" />
<rect x="380" y="494" width="1" height="1" fill="#c8c8c8" />
<rect x="387" y="494" width="1" height="1" fill="#c8c8c8" />
<rect x="394" y="494" width="1" height="1" fill="#c8c8c8" />
<rect x="400" y="494" width="1" height="1" fill="#c8c8c8" />
<rect x="407" y="494" width="1" height="1" fill="#c8c8c8" />
<polyline points="73.5,376.93 74.5,376.54 75.5,376.50 76.5,376.37 77.5,375.72 78.5,374.16 79.5,371.38 80.5,367.17 81.5,361.45 82.5,354.27 83.5,345.83 84.5,336.42 85.5,326.46 86.5,316.43 87.5,306.86 88.5,298.26 89.5,291.12 90.5,285.86 91.5,282.77 92.5,282.05 93.5,283.73 94.5,287.72 95.5,293.78 96.5,301.55 97.5,310.60 98.5,320.42 99.5,330.48 100.5,340.27 101.5,349.34 102.5,357.31 103.5,363.92 104.5,369.03 105.5,372.65 106.5,374.92 107.5,376.07 108.5,376.46 109.5,376.50 110.5,376.63 111.5,377.28 112.5,378.84 113.5,381.62 114.5,385.83 115.5,391.55 116.5,398.73 117.5,407.17 118.5,416.58 119.5,426.54 120.5,436.57 121.5,446.14 122.5,454.74 123.5,461.88 124.5,467.14 125.5,470.23 126.5,470.95 127.5,469.27 128.5,465.28 129.5,459.22 130.5,451.45 131.5,442.40 132.5,432.58 133.5,422.52 134.5,412.73 135.5,403.66 136.5,395.69 137.5,389.08 138.5,383.97 139.5,380.35 140.5,378.08 141.5,376.93 142.5,376.54 143.5,376.50 144.5,376.37 145.5,375.72 146.5,374.16 147.5,371.38 148.5,367.17 149.5,361.45 150.5,354.27 151.5,345.83 152.5,336.42 153.5,326.46 154.5,316.43 155.5,306.86 156.5,298.26 157.5,291.12 158.5,285.86 159.5,282.77 160.5,282.05 161.5,283.73 162.5,287.72 163.5,293.78 164.5,301.55 165.5,310.60 166.5,320.42 167.5,330.48 168.5,340.27 169.5,349.34 170.5,357.31 171.5,363.92 172.5,369.03 173.5,372.65 174.5,374.92 175.5,376.07 176.5,376.46 177.5,376.50 178.5,376.63 179.5,377.28 180.5,378.84 181.5,381.62 182.5,385.83 183.5,391.55 184.5,398.73 185.5,407.17 186.5,416.58 187.5,426.54 188.5,436.57 189.5,446.14 190.5,454.74 191.5,461.88 192.5,467.14 193.5,470.23 194.5,470.95 195.5,469.27 196.5,465.28 197.5,459.22 198.5,451.45 199.5,442.40 200.5,432.58 201.5,422.52 202.5,412.73 203.5,403.66 204.5,395.69 205.5,389.08 206.5,383.97 207.5,380.35 208.5,378.08 209.5,376.93 210.5,376.54 211.5,376.50 212.5,376.37 213.5,375.72 214.5,374.16 215.5,371.38 216.5,367.17 217.5,361.45 218.5,354.27 219.5,345.83 220.5,336.42 221.5,326.46 222.5,316.43 223.5,306.86 224.5,298.26 225.5,291.12 226.5,285.86 227.5,282.77 228.5,282.05 229.5,283.73 230.5,287.72 231.5,293.78 232.5,301.55 233.5,310.60 234.5,320.42 235.5,330.48 236.5,340.27 237.5,349.34 238.5,357.31 239.5,363.92 240.5,369.03 241.5,372.65 242.5,374.92 243.5,376.07 244.5,376.46 245.5,376.50 246.5,376.63 247.5,377.28 248.5,378.84 249.5,381.62 250.5,385.83 251.5,391.55 252.5,398.73 253.5,407.17 254.5,416.58 255.5,426.54 256.5,436.57 257.5,446.14 258.5,454.74 259.5,461.88 260.5,467.14 261.5,470.23 262.5,470.95 263.5,469.27 264.5,465.28 265.5,459.22 266.5,451.45 267.5,442.40 268.5,432.58 269.5,422.52 270.5,412.73 271.5,403.66 272.5,395.69 273.5,389.08 274.5,383.97 275.5,380.35 276.5,378.08 277.5,376.93 278.5,376.54 279.5,376.50 280.5,376.37 281.5,375.72 282.5,374.16 283.5,371.38 284.5,367.17 285.5,361.45 286.5,354.27 287.5,345.83 288.5,336.42 289.5,326.46 290.5,316.43 291.5,306.86 292.5,298.26 293.5,291.12 294.5,285.86 295.5,282.77 296.5,282.05 297.5,283.73 298.5,287.72 299.5,293.78 300.5,301.55 301.5,310.60 302.5,320.42 303.5,330.48 304.5,340.27 305.5,349.34 306.5,357.31 307.5,363.92 308.5,369.03 309.5,372.65 310.5,374.92 311.5,376.07 312.5,376.46 313.5,376.50 314.5,376.63 315.5,377.28 316.5,378.84 317.5,381.62 318.5,385.83 319.5,391.55 320.5,398.73 321.5,407.17 322.5,416.58 323.5,426.54 324.5,436.57 325.5,446.14 326.5,454.74 327.5,461.88 328.5,467.14 329.5,470.23 330.5,470.95 331.5,469.27 332.5,465.28 333.5,459.22 334.5,451.45 335.5,442.40 336.5,432.58 337.5,422.52 338.5,412.73 339.5,403.66 340.5,395.69 341.5,389.08 342.5,383.97 343.5,380.35 344.5,378.08 345.5,376.93 346.5,376.54 347.5,376.50 348.5,376.37 349.5,375.72 350.5,374.16 351.5,371.38 352.5,367.17 353.5,361.45 354.5,354.27 355.5,345.83 356.5,336.42 357.5,326.46 358.5,316.43 359.5,306.86 360.5,298.26 361.5,291.12 362.5,285.86 363.5,282.77 364.5,282.05 365.5,283.73 366.5,287.72 367.5,293.78 368.5,301.55 369.5,310.60 370.5,320.42 371.5,330.48 372.5,340.27 373.5,349.34 374.5,357.31 375.5,363.92 376.5,369.03 377.5,372.65 378.5,374.92 379.5,376.07 380.5,376.46 381.5,376.50 382.5,376.63 383.5,377.28 384.5,378.84 385.5,381.62 386.5,385.83 387.5,391.55 388.5,398.73 389.5,407.17 390.5,416.58 391.5,426.54 392.5,436.57 393.5,446.14 394.5,454.74 395.5,461.88 396.5,467.14 397.5,470.23 398.5,470.95 399.5,469.27 400.5,465.28 401.5,459.22 402.5,451.45 403.5,442.40 404.5,432.58 405.5,422.52 406.5,412.73 407.5,403.66 408.5,395.69 409.5,389.08 410.5,383.97 411.5,380.35 412.5,378.08 413.5,376.93 414.5,376.54" fill="none" stroke="#58e858" stroke-width="1" shape-rendering="crispEdges"/>
<rect x="73" y="534" width="342" height="15" fill="#f0f0f0" />
<rect x="73" y="534" width="342" height="1" fill="#ffffff" />
<path d="M77,541 L83,538 L83,544 Z" fill="#000"/>
<path d="M83,542 L88.5,535 L94,542 Z" fill="#000"/>
<rect x="88" y="541" width="1" height="8" fill="#000" />
<rect x="19" y="549" width="396" height="1" fill="#606060" />
<rect x="400" y="535" width="15" height="14" fill="#f8f8f8" />
<rect x="399" y="535" width="1" height="14" fill="#d0d0d0" />
<path d="M405,538 L411,541 L405,544 Z" fill="#000"/>
<rect x="19" y="551" width="435" height="18" fill="#000000" />
<rect x="19" y="550" width="435" height="1" fill="#ffffff" />
<text x="73.0" y="565" font-size="11" fill="#f0f0f0" text-anchor="middle" >0 s</text>
<text x="141.2" y="565" font-size="11" fill="#f0f0f0" text-anchor="middle" >20.0 µs</text>
<text x="209.4" y="565" font-size="11" fill="#f0f0f0" text-anchor="middle" >40.0 µs</text>
<text x="277.6" y="565" font-size="11" fill="#f0f0f0" text-anchor="middle" >60.0 µs</text>
<text x="345.8" y="565" font-size="11" fill="#f0f0f0" text-anchor="middle" >80.0 µs</text>
<text x="414.0" y="565" font-size="11" fill="#f0f0f0" text-anchor="middle" >100.0 µs</text>
<rect x="20.0" y="213" width="40" height="14" rx="4" fill="#00f800" stroke="#0a6a0a" stroke-width="0.6"/>
<text x="57.5" y="224.5" font-size="11" fill="#000" text-anchor="end" >20.000</text>
<text x="40" y="244" font-size="11" fill="#3ee03e" text-anchor="middle" >V</text>
<text x="58.5" y="264" font-size="11" fill="#3ee03e" text-anchor="end" letter-spacing="-0.1">15.000</text>
<text x="58.5" y="303" font-size="11" fill="#3ee03e" text-anchor="end" letter-spacing="-0.1">10.000</text>
<text x="58.5" y="342" font-size="11" fill="#3ee03e" text-anchor="end" letter-spacing="-0.1">5.000</text>
<text x="58.5" y="381" font-size="11" fill="#3ee03e" text-anchor="end" letter-spacing="-0.1">0.000</text>
<text x="58.5" y="421" font-size="11" fill="#3ee03e" text-anchor="end" letter-spacing="-0.1">-5.000</text>
<text x="58.5" y="460" font-size="11" fill="#3ee03e" text-anchor="end" letter-spacing="-0.1">-10.000</text>
<text x="58.5" y="499" font-size="11" fill="#3ee03e" text-anchor="end" letter-spacing="-0.1">-15.000</text>
<rect x="20.0" y="528" width="40" height="14" rx="4" fill="#00f800" stroke="#0a6a0a" stroke-width="0.6"/>
<text x="57.5" y="539.5" font-size="11" fill="#000" text-anchor="end" >-20.000</text>
<path d="M63,390 H66 V377 H70" fill="none" stroke="#e8e8e8" stroke-width="2"/>
<rect x="459" y="179" width="1" height="394" fill="#a8a8a8" />
<rect x="459" y="378" width="425" height="3" fill="#a8a8a8" />
<rect x="463" y="183" width="44" height="170" fill="#000" />
<path d="M463,196 V186 Q463,183 466,183 H504 Q507,183 507,186 V196 Z" fill="#00ff08"/>
<rect x="507" y="183" width="1" height="170" fill="#a0a0a0" />
<rect x="508" y="183" width="335" height="37" fill="#ffffff" />
<rect x="508.5" y="182.5" width="334" height="36" fill="none" stroke="#b8b8b8" stroke-width="1"/>
<rect x="508" y="220" width="336" height="118" fill="#000" />
<rect x="538" y="220" width="1" height="1" fill="#c8c8c8" />
<rect x="538" y="223" width="1" height="1" fill="#c8c8c8" />
<rect x="538" y="226" width="1" height="1" fill="#c8c8c8" />
<rect x="538" y="229" width="1" height="1" fill="#c8c8c8" />
<rect x="538" y="232" width="1" height="1" fill="#c8c8c8" />
<rect x="538" y="235" width="1" height="1" fill="#c8c8c8" />
<rect x="538" y="238" width="1" height="1" fill="#c8c8c8" />
<rect x="538" y="241" width="1" height="1" fill="#c8c8c8" />
<rect x="538" y="244" width="1" height="1" fill="#c8c8c8" />
<rect x="538" y="247" width="1" height="1" fill="#c8c8c8" />
<rect x="538" y="250" width="1" height="1" fill="#c8c8c8" />
<rect x="538" y="252" width="1" height="1" fill="#c8c8c8" />
<rect x="538" y="255" width="1" height="1" fill="#c8c8c8" />
<rect x="538" y="258" width="1" height="1" fill="#c8c8c8" />
<rect x="538" y="261" width="1" height="1" fill="#c8c8c8" />
<rect x="538" y="264" width="1" height="1" fill="#c8c8c8" />
<rect x="538" y="267" width="1" height="1" fill="#c8c8c8" />
<rect x="538" y="270" width="1" height="1" fill="#c8c8c8" />
<rect x="538" y="273" width="1" height="1" fill="#c8c8c8" />
<rect x="538" y="276" width="1" height="1" fill="#c8c8c8" />
<rect x="538" y="279" width="1" height="1" fill="#c8c8c8" />
<rect x="538" y="282" width="1" height="1" fill="#c8c8c8" />
<rect x="538" y="285" width="1" height="1" fill="#c8c8c8" />
<rect x="538" y="288" width="1" height="1" fill="#c8c8c8" />
<rect x="538" y="291" width="1" height="1" fill="#c8c8c8" />
<rect x="538" y="294" width="1" height="1" fill="#c8c8c8" />
<rect x="538" y="297" width="1" height="1" fill="#c8c8c8" />
<rect x="538" y="300" width="1" height="1" fill="#c8c8c8" />
<rect x="538" y="303" width="1" height="1" fill="#c8c8c8" />
<rect x="538" y="306" width="1" height="1" fill="#c8c8c8" />
<rect x="538" y="308" width="1" height="1" fill="#c8c8c8" />
<rect x="538" y="311" width="1" height="1" fill="#c8c8c8" />
<rect x="538" y="314" width="1" height="1" fill="#c8c8c8" />
<rect x="538" y="317" width="1" height="1" fill="#c8c8c8" />
<rect x="538" y="320" width="1" height="1" fill="#c8c8c8" />
<rect x="538" y="323" width="1" height="1" fill="#c8c8c8" />
<rect x="538" y="326" width="1" height="1" fill="#c8c8c8" />
<rect x="538" y="329" width="1" height="1" fill="#c8c8c8" />
<rect x="538" y="332" width="1" height="1" fill="#c8c8c8" />
<rect x="538" y="335" width="1" height="1" fill="#c8c8c8" />
<rect x="555" y="220" width="1" height="1" fill="#c8c8c8" />
<rect x="555" y="223" width="1" height="1" fill="#c8c8c8" />
<rect x="555" y="226" width="1" height="1" fill="#c8c8c8" />
<rect x="555" y="229" width="1" height="1" fill="#c8c8c8" />
<rect x="555" y="232" width="1" height="1" fill="#c8c8c8" />
<rect x="555" y="235" width="1" height="1" fill="#c8c8c8" />
<rect x="555" y="238" width="1" height="1" fill="#c8c8c8" />
<rect x="555" y="241" width="1" height="1" fill="#c8c8c8" />
<rect x="555" y="244" width="1" height="1" fill="#c8c8c8" />
<rect x="555" y="247" width="1" height="1" fill="#c8c8c8" />
<rect x="555" y="250" width="1" height="1" fill="#c8c8c8" />
<rect x="555" y="252" width="1" height="1" fill="#c8c8c8" />
<rect x="555" y="255" width="1" height="1" fill="#c8c8c8" />
<rect x="555" y="258" width="1" height="1" fill="#c8c8c8" />
<rect x="555" y="261" width="1" height="1" fill="#c8c8c8" />
<rect x="555" y="264" width="1" height="1" fill="#c8c8c8" />
<rect x="555" y="267" width="1" height="1" fill="#c8c8c8" />
<rect x="555" y="270" width="1" height="1" fill="#c8c8c8" />
<rect x="555" y="273" width="1" height="1" fill="#c8c8c8" />
<rect x="555" y="276" width="1" height="1" fill="#c8c8c8" />
<rect x="555" y="279" width="1" height="1" fill="#c8c8c8" />
<rect x="555" y="282" width="1" height="1" fill="#c8c8c8" />
<rect x="555" y="285" width="1" height="1" fill="#c8c8c8" />
<rect x="555" y="288" width="1" height="1" fill="#c8c8c8" />
<rect x="555" y="291" width="1" height="1" fill="#c8c8c8" />
<rect x="555" y="294" width="1" height="1" fill="#c8c8c8" />
<rect x="555" y="297" width="1" height="1" fill="#c8c8c8" />
<rect x="555" y="300" width="1" height="1" fill="#c8c8c8" />
<rect x="555" y="303" width="1" height="1" fill="#c8c8c8" />
<rect x="555" y="306" width="1" height="1" fill="#c8c8c8" />
<rect x="555" y="308" width="1" height="1" fill="#c8c8c8" />
<rect x="555" y="311" width="1" height="1" fill="#c8c8c8" />
<rect x="555" y="314" width="1" height="1" fill="#c8c8c8" />
<rect x="555" y="317" width="1" height="1" fill="#c8c8c8" />
<rect x="555" y="320" width="1" height="1" fill="#c8c8c8" />
<rect x="555" y="323" width="1" height="1" fill="#c8c8c8" />
<rect x="555" y="326" width="1" height="1" fill="#c8c8c8" />
<rect x="555" y="329" width="1" height="1" fill="#c8c8c8" />
<rect x="555" y="332" width="1" height="1" fill="#c8c8c8" />
<rect x="555" y="335" width="1" height="1" fill="#c8c8c8" />
<rect x="567" y="220" width="1" height="1" fill="#c8c8c8" />
<rect x="567" y="223" width="1" height="1" fill="#c8c8c8" />
<rect x="567" y="226" width="1" height="1" fill="#c8c8c8" />
<rect x="567" y="229" width="1" height="1" fill="#c8c8c8" />
<rect x="567" y="232" width="1" height="1" fill="#c8c8c8" />
<rect x="567" y="235" width="1" height="1" fill="#c8c8c8" />
<rect x="567" y="238" width="1" height="1" fill="#c8c8c8" />
<rect x="567" y="241" width="1" height="1" fill="#c8c8c8" />
<rect x="567" y="244" width="1" height="1" fill="#c8c8c8" />
<rect x="567" y="247" width="1" height="1" fill="#c8c8c8" />
<rect x="567" y="250" width="1" height="1" fill="#c8c8c8" />
<rect x="567" y="252" width="1" height="1" fill="#c8c8c8" />
<rect x="567" y="255" width="1" height="1" fill="#c8c8c8" />
<rect x="567" y="258" width="1" height="1" fill="#c8c8c8" />
<rect x="567" y="261" width="1" height="1" fill="#c8c8c8" />
<rect x="567" y="264" width="1" height="1" fill="#c8c8c8" />
<rect x="567" y="267" width="1" height="1" fill="#c8c8c8" />
<rect x="567" y="270" width="1" height="1" fill="#c8c8c8" />
<rect x="567" y="273" width="1" height="1" fill="#c8c8c8" />
<rect x="567" y="276" width="1" height="1" fill="#c8c8c8" />
<rect x="567" y="279" width="1" height="1" fill="#c8c8c8" />
<rect x="567" y="282" width="1" height="1" fill="#c8c8c8" />
<rect x="567" y="285" width="1" height="1" fill="#c8c8c8" />
<rect x="567" y="288" width="1" height="1" fill="#c8c8c8" />
<rect x="567" y="291" width="1" height="1" fill="#c8c8c8" />
<rect x="567" y="294" width="1" height="1" fill="#c8c8c8" />
<rect x="567" y="297" width="1" height="1" fill="#c8c8c8" />
<rect x="567" y="300" width="1" height="1" fill="#c8c8c8" />
<rect x="567" y="303" width="1" height="1" fill="#c8c8c8" />
<rect x="567" y="306" width="1" height="1" fill="#c8c8c8" />
<rect x="567" y="308" width="1" height="1" fill="#c8c8c8" />
<rect x="567" y="311" width="1" height="1" fill="#c8c8c8" />
<rect x="567" y="314" width="1" height="1" fill="#c8c8c8" />
<rect x="567" y="317" width="1" height="1" fill="#c8c8c8" />
<rect x="567" y="320" width="1" height="1" fill="#c8c8c8" />
<rect x="567" y="323" width="1" height="1" fill="#c8c8c8" />
<rect x="567" y="326" width="1" height="1" fill="#c8c8c8" />
<rect x="567" y="329" width="1" height="1" fill="#c8c8c8" />
<rect x="567" y="332" width="1" height="1" fill="#c8c8c8" />
<rect x="567" y="335" width="1" height="1" fill="#c8c8c8" />
<rect x="577" y="220" width="1" height="1" fill="#c8c8c8" />
<rect x="577" y="223" width="1" height="1" fill="#c8c8c8" />
<rect x="577" y="226" width="1" height="1" fill="#c8c8c8" />
<rect x="577" y="229" width="1" height="1" fill="#c8c8c8" />
<rect x="577" y="232" width="1" height="1" fill="#c8c8c8" />
<rect x="577" y="235" width="1" height="1" fill="#c8c8c8" />
<rect x="577" y="238" width="1" height="1" fill="#c8c8c8" />
<rect x="577" y="241" width="1" height="1" fill="#c8c8c8" />
<rect x="577" y="244" width="1" height="1" fill="#c8c8c8" />
<rect x="577" y="247" width="1" height="1" fill="#c8c8c8" />
<rect x="577" y="250" width="1" height="1" fill="#c8c8c8" />
<rect x="577" y="252" width="1" height="1" fill="#c8c8c8" />
<rect x="577" y="255" width="1" height="1" fill="#c8c8c8" />
<rect x="577" y="258" width="1" height="1" fill="#c8c8c8" />
<rect x="577" y="261" width="1" height="1" fill="#c8c8c8" />
<rect x="577" y="264" width="1" height="1" fill="#c8c8c8" />
<rect x="577" y="267" width="1" height="1" fill="#c8c8c8" />
<rect x="577" y="270" width="1" height="1" fill="#c8c8c8" />
<rect x="577" y="273" width="1" height="1" fill="#c8c8c8" />
<rect x="577" y="276" width="1" height="1" fill="#c8c8c8" />
<rect x="577" y="279" width="1" height="1" fill="#c8c8c8" />
<rect x="577" y="282" width="1" height="1" fill="#c8c8c8" />
<rect x="577" y="285" width="1" height="1" fill="#c8c8c8" />
<rect x="577" y="288" width="1" height="1" fill="#c8c8c8" />
<rect x="577" y="291" width="1" height="1" fill="#c8c8c8" />
<rect x="577" y="294" width="1" height="1" fill="#c8c8c8" />
<rect x="577" y="297" width="1" height="1" fill="#c8c8c8" />
<rect x="577" y="300" width="1" height="1" fill="#c8c8c8" />
<rect x="577" y="303" width="1" height="1" fill="#c8c8c8" />
<rect x="577" y="306" width="1" height="1" fill="#c8c8c8" />
<rect x="577" y="308" width="1" height="1" fill="#c8c8c8" />
<rect x="577" y="311" width="1" height="1" fill="#c8c8c8" />
<rect x="577" y="314" width="1" height="1" fill="#c8c8c8" />
<rect x="577" y="317" width="1" height="1" fill="#c8c8c8" />
<rect x="577" y="320" width="1" height="1" fill="#c8c8c8" />
<rect x="577" y="323" width="1" height="1" fill="#c8c8c8" />
<rect x="577" y="326" width="1" height="1" fill="#c8c8c8" />
<rect x="577" y="329" width="1" height="1" fill="#c8c8c8" />
<rect x="577" y="332" width="1" height="1" fill="#c8c8c8" />
<rect x="577" y="335" width="1" height="1" fill="#c8c8c8" />
<rect x="585" y="220" width="1" height="1" fill="#c8c8c8" />
<rect x="585" y="223" width="1" height="1" fill="#c8c8c8" />
<rect x="585" y="226" width="1" height="1" fill="#c8c8c8" />
<rect x="585" y="229" width="1" height="1" fill="#c8c8c8" />
<rect x="585" y="232" width="1" height="1" fill="#c8c8c8" />
<rect x="585" y="235" width="1" height="1" fill="#c8c8c8" />
<rect x="585" y="238" width="1" height="1" fill="#c8c8c8" />
<rect x="585" y="241" width="1" height="1" fill="#c8c8c8" />
<rect x="585" y="244" width="1" height="1" fill="#c8c8c8" />
<rect x="585" y="247" width="1" height="1" fill="#c8c8c8" />
<rect x="585" y="250" width="1" height="1" fill="#c8c8c8" />
<rect x="585" y="252" width="1" height="1" fill="#c8c8c8" />
<rect x="585" y="255" width="1" height="1" fill="#c8c8c8" />
<rect x="585" y="258" width="1" height="1" fill="#c8c8c8" />
<rect x="585" y="261" width="1" height="1" fill="#c8c8c8" />
<rect x="585" y="264" width="1" height="1" fill="#c8c8c8" />
<rect x="585" y="267" width="1" height="1" fill="#c8c8c8" />
<rect x="585" y="270" width="1" height="1" fill="#c8c8c8" />
<rect x="585" y="273" width="1" height="1" fill="#c8c8c8" />
<rect x="585" y="276" width="1" height="1" fill="#c8c8c8" />
<rect x="585" y="279" width="1" height="1" fill="#c8c8c8" />
<rect x="585" y="282" width="1" height="1" fill="#c8c8c8" />
<rect x="585" y="285" width="1" height="1" fill="#c8c8c8" />
<rect x="585" y="288" width="1" height="1" fill="#c8c8c8" />
<rect x="585" y="291" width="1" height="1" fill="#c8c8c8" />
<rect x="585" y="294" width="1" height="1" fill="#c8c8c8" />
<rect x="585" y="297" width="1" height="1" fill="#c8c8c8" />
<rect x="585" y="300" width="1" height="1" fill="#c8c8c8" />
<rect x="585" y="303" width="1" height="1" fill="#c8c8c8" />
<rect x="585" y="306" width="1" height="1" fill="#c8c8c8" />
<rect x="585" y="308" width="1" height="1" fill="#c8c8c8" />
<rect x="585" y="311" width="1" height="1" fill="#c8c8c8" />
<rect x="585" y="314" width="1" height="1" fill="#c8c8c8" />
<rect x="585" y="317" width="1" height="1" fill="#c8c8c8" />
<rect x="585" y="320" width="1" height="1" fill="#c8c8c8" />
<rect x="585" y="323" width="1" height="1" fill="#c8c8c8" />
<rect x="585" y="326" width="1" height="1" fill="#c8c8c8" />
<rect x="585" y="329" width="1" height="1" fill="#c8c8c8" />
<rect x="585" y="332" width="1" height="1" fill="#c8c8c8" />
<rect x="585" y="335" width="1" height="1" fill="#c8c8c8" />
<rect x="591" y="220" width="1" height="1" fill="#c8c8c8" />
<rect x="591" y="223" width="1" height="1" fill="#c8c8c8" />
<rect x="591" y="226" width="1" height="1" fill="#c8c8c8" />
<rect x="591" y="229" width="1" height="1" fill="#c8c8c8" />
<rect x="591" y="232" width="1" height="1" fill="#c8c8c8" />
<rect x="591" y="235" width="1" height="1" fill="#c8c8c8" />
<rect x="591" y="238" width="1" height="1" fill="#c8c8c8" />
<rect x="591" y="241" width="1" height="1" fill="#c8c8c8" />
<rect x="591" y="244" width="1" height="1" fill="#c8c8c8" />
<rect x="591" y="247" width="1" height="1" fill="#c8c8c8" />
<rect x="591" y="250" width="1" height="1" fill="#c8c8c8" />
<rect x="591" y="252" width="1" height="1" fill="#c8c8c8" />
<rect x="591" y="255" width="1" height="1" fill="#c8c8c8" />
<rect x="591" y="258" width="1" height="1" fill="#c8c8c8" />
<rect x="591" y="261" width="1" height="1" fill="#c8c8c8" />
<rect x="591" y="264" width="1" height="1" fill="#c8c8c8" />
<rect x="591" y="267" width="1" height="1" fill="#c8c8c8" />
<rect x="591" y="270" width="1" height="1" fill="#c8c8c8" />
<rect x="591" y="273" width="1" height="1" fill="#c8c8c8" />
<rect x="591" y="276" width="1" height="1" fill="#c8c8c8" />
<rect x="591" y="279" width="1" height="1" fill="#c8c8c8" />
<rect x="591" y="282" width="1" height="1" fill="#c8c8c8" />
<rect x="591" y="285" width="1" height="1" fill="#c8c8c8" />
<rect x="591" y="288" width="1" height="1" fill="#c8c8c8" />
<rect x="591" y="291" width="1" height="1" fill="#c8c8c8" />
<rect x="591" y="294" width="1" height="1" fill="#c8c8c8" />
<rect x="591" y="297" width="1" height="1" fill="#c8c8c8" />
<rect x="591" y="300" width="1" height="1" fill="#c8c8c8" />
<rect x="591" y="303" width="1" height="1" fill="#c8c8c8" />
<rect x="591" y="306" width="1" height="1" fill="#c8c8c8" />
<rect x="591" y="308" width="1" height="1" fill="#c8c8c8" />
<rect x="591" y="311" width="1" height="1" fill="#c8c8c8" />
<rect x="591" y="314" width="1" height="1" fill="#c8c8c8" />
<rect x="591" y="317" width="1" height="1" fill="#c8c8c8" />
<rect x="591" y="320" width="1" height="1" fill="#c8c8c8" />
<rect x="591" y="323" width="1" height="1" fill="#c8c8c8" />
<rect x="591" y="326" width="1" height="1" fill="#c8c8c8" />
<rect x="591" y="329" width="1" height="1" fill="#c8c8c8" />
<rect x="591" y="332" width="1" height="1" fill="#c8c8c8" />
<rect x="591" y="335" width="1" height="1" fill="#c8c8c8" />
<rect x="597" y="220" width="1" height="1" fill="#c8c8c8" />
<rect x="597" y="223" width="1" height="1" fill="#c8c8c8" />
<rect x="597" y="226" width="1" height="1" fill="#c8c8c8" />
<rect x="597" y="229" width="1" height="1" fill="#c8c8c8" />
<rect x="597" y="232" width="1" height="1" fill="#c8c8c8" />
<rect x="597" y="235" width="1" height="1" fill="#c8c8c8" />
<rect x="597" y="238" width="1" height="1" fill="#c8c8c8" />
<rect x="597" y="241" width="1" height="1" fill="#c8c8c8" />
<rect x="597" y="244" width="1" height="1" fill="#c8c8c8" />
<rect x="597" y="247" width="1" height="1" fill="#c8c8c8" />
<rect x="597" y="250" width="1" height="1" fill="#c8c8c8" />
<rect x="597" y="252" width="1" height="1" fill="#c8c8c8" />
<rect x="597" y="255" width="1" height="1" fill="#c8c8c8" />
<rect x="597" y="258" width="1" height="1" fill="#c8c8c8" />
<rect x="597" y="261" width="1" height="1" fill="#c8c8c8" />
<rect x="597" y="264" width="1" height="1" fill="#c8c8c8" />
<rect x="597" y="267" width="1" height="1" fill="#c8c8c8" />
<rect x="597" y="270" width="1" height="1" fill="#c8c8c8" />
<rect x="597" y="273" width="1" height="1" fill="#c8c8c8" />
<rect x="597" y="276" width="1" height="1" fill="#c8c8c8" />
<rect x="597" y="279" width="1" height="1" fill="#c8c8c8" />
<rect x="597" y="282" width="1" height="1" fill="#c8c8c8" />
<rect x="597" y="285" width="1" height="1" fill="#c8c8c8" />
<rect x="597" y="288" width="1" height="1" fill="#c8c8c8" />
<rect x="597" y="291" width="1" height="1" fill="#c8c8c8" />
<rect x="597" y="294" width="1" height="1" fill="#c8c8c8" />
<rect x="597" y="297" width="1" height="1" fill="#c8c8c8" />
<rect x="597" y="300" width="1" height="1" fill="#c8c8c8" />
<rect x="597" y="303" width="1" height="1" fill="#c8c8c8" />
<rect x="597" y="306" width="1" height="1" fill="#c8c8c8" />
<rect x="597" y="308" width="1" height="1" fill="#c8c8c8" />
<rect x="597" y="311" width="1" height="1" fill="#c8c8c8" />
<rect x="597" y="314" width="1" height="1" fill="#c8c8c8" />
<rect x="597" y="317" width="1" height="1" fill="#c8c8c8" />
<rect x="597" y="320" width="1" height="1" fill="#c8c8c8" />
<rect x="597" y="323" width="1" height="1" fill="#c8c8c8" />
<rect x="597" y="326" width="1" height="1" fill="#c8c8c8" />
<rect x="597" y="329" width="1" height="1" fill="#c8c8c8" />
<rect x="597" y="332" width="1" height="1" fill="#c8c8c8" />
<rect x="597" y="335" width="1" height="1" fill="#c8c8c8" />
<rect x="602" y="220" width="1" height="1" fill="#c8c8c8" />
<rect x="602" y="223" width="1" height="1" fill="#c8c8c8" />
<rect x="602" y="226" width="1" height="1" fill="#c8c8c8" />
<rect x="602" y="229" width="1" height="1" fill="#c8c8c8" />
<rect x="602" y="232" width="1" height="1" fill="#c8c8c8" />
<rect x="602" y="235" width="1" height="1" fill="#c8c8c8" />
<rect x="602" y="238" width="1" height="1" fill="#c8c8c8" />
<rect x="602" y="241" width="1" height="1" fill="#c8c8c8" />
<rect x="602" y="244" width="1" height="1" fill="#c8c8c8" />
<rect x="602" y="247" width="1" height="1" fill="#c8c8c8" />
<rect x="602" y="250" width="1" height="1" fill="#c8c8c8" />
<rect x="602" y="252" width="1" height="1" fill="#c8c8c8" />
<rect x="602" y="255" width="1" height="1" fill="#c8c8c8" />
<rect x="602" y="258" width="1" height="1" fill="#c8c8c8" />
<rect x="602" y="261" width="1" height="1" fill="#c8c8c8" />
<rect x="602" y="264" width="1" height="1" fill="#c8c8c8" />
<rect x="602" y="267" width="1" height="1" fill="#c8c8c8" />
<rect x="602" y="270" width="1" height="1" fill="#c8c8c8" />
<rect x="602" y="273" width="1" height="1" fill="#c8c8c8" />
<rect x="602" y="276" width="1" height="1" fill="#c8c8c8" />
<rect x="602" y="279" width="1" height="1" fill="#c8c8c8" />
<rect x="602" y="282" width="1" height="1" fill="#c8c8c8" />
<rect x="602" y="285" width="1" height="1" fill="#c8c8c8" />
<rect x="602" y="288" width="1" height="1" fill="#c8c8c8" />
<rect x="602" y="291" width="1" height="1" fill="#c8c8c8" />
<rect x="602" y="294" width="1" height="1" fill="#c8c8c8" />
<rect x="602" y="297" width="1" height="1" fill="#c8c8c8" />
<rect x="602" y="300" width="1" height="1" fill="#c8c8c8" />
<rect x="602" y="303" width="1" height="1" fill="#c8c8c8" />
<rect x="602" y="306" width="1" height="1" fill="#c8c8c8" />
<rect x="602" y="308" width="1" height="1" fill="#c8c8c8" />
<rect x="602" y="311" width="1" height="1" fill="#c8c8c8" />
<rect x="602" y="314" width="1" height="1" fill="#c8c8c8" />
<rect x="602" y="317" width="1" height="1" fill="#c8c8c8" />
<rect x="602" y="320" width="1" height="1" fill="#c8c8c8" />
<rect x="602" y="323" width="1" height="1" fill="#c8c8c8" />
<rect x="602" y="326" width="1" height="1" fill="#c8c8c8" />
<rect x="602" y="329" width="1" height="1" fill="#c8c8c8" />
<rect x="602" y="332" width="1" height="1" fill="#c8c8c8" />
<rect x="602" y="335" width="1" height="1" fill="#c8c8c8" />
<rect x="607" y="220" width="1" height="1" fill="#c8c8c8" />
<rect x="607" y="223" width="1" height="1" fill="#c8c8c8" />
<rect x="607" y="226" width="1" height="1" fill="#c8c8c8" />
<rect x="607" y="229" width="1" height="1" fill="#c8c8c8" />
<rect x="607" y="232" width="1" height="1" fill="#c8c8c8" />
<rect x="607" y="235" width="1" height="1" fill="#c8c8c8" />
<rect x="607" y="238" width="1" height="1" fill="#c8c8c8" />
<rect x="607" y="241" width="1" height="1" fill="#c8c8c8" />
<rect x="607" y="244" width="1" height="1" fill="#c8c8c8" />
<rect x="607" y="247" width="1" height="1" fill="#c8c8c8" />
<rect x="607" y="250" width="1" height="1" fill="#c8c8c8" />
<rect x="607" y="252" width="1" height="1" fill="#c8c8c8" />
<rect x="607" y="255" width="1" height="1" fill="#c8c8c8" />
<rect x="607" y="258" width="1" height="1" fill="#c8c8c8" />
<rect x="607" y="261" width="1" height="1" fill="#c8c8c8" />
<rect x="607" y="264" width="1" height="1" fill="#c8c8c8" />
<rect x="607" y="267" width="1" height="1" fill="#c8c8c8" />
<rect x="607" y="270" width="1" height="1" fill="#c8c8c8" />
<rect x="607" y="273" width="1" height="1" fill="#c8c8c8" />
<rect x="607" y="276" width="1" height="1" fill="#c8c8c8" />
<rect x="607" y="279" width="1" height="1" fill="#c8c8c8" />
<rect x="607" y="282" width="1" height="1" fill="#c8c8c8" />
<rect x="607" y="285" width="1" height="1" fill="#c8c8c8" />
<rect x="607" y="288" width="1" height="1" fill="#c8c8c8" />
<rect x="607" y="291" width="1" height="1" fill="#c8c8c8" />
<rect x="607" y="294" width="1" height="1" fill="#c8c8c8" />
<rect x="607" y="297" width="1" height="1" fill="#c8c8c8" />
<rect x="607" y="300" width="1" height="1" fill="#c8c8c8" />
<rect x="607" y="303" width="1" height="1" fill="#c8c8c8" />
<rect x="607" y="306" width="1" height="1" fill="#c8c8c8" />
<rect x="607" y="308" width="1" height="1" fill="#c8c8c8" />
<rect x="607" y="311" width="1" height="1" fill="#c8c8c8" />
<rect x="607" y="314" width="1" height="1" fill="#c8c8c8" />
<rect x="607" y="317" width="1" height="1" fill="#c8c8c8" />
<rect x="607" y="320" width="1" height="1" fill="#c8c8c8" />
<rect x="607" y="323" width="1" height="1" fill="#c8c8c8" />
<rect x="607" y="326" width="1" height="1" fill="#c8c8c8" />
<rect x="607" y="329" width="1" height="1" fill="#c8c8c8" />
<rect x="607" y="332" width="1" height="1" fill="#c8c8c8" />
<rect x="607" y="335" width="1" height="1" fill="#c8c8c8" />
<rect x="636" y="220" width="1" height="1" fill="#c8c8c8" />
<rect x="636" y="223" width="1" height="1" fill="#c8c8c8" />
<rect x="636" y="226" width="1" height="1" fill="#c8c8c8" />
<rect x="636" y="229" width="1" height="1" fill="#c8c8c8" />
<rect x="636" y="232" width="1" height="1" fill="#c8c8c8" />
<rect x="636" y="235" width="1" height="1" fill="#c8c8c8" />
<rect x="636" y="238" width="1" height="1" fill="#c8c8c8" />
<rect x="636" y="241" width="1" height="1" fill="#c8c8c8" />
<rect x="636" y="244" width="1" height="1" fill="#c8c8c8" />
<rect x="636" y="247" width="1" height="1" fill="#c8c8c8" />
<rect x="636" y="250" width="1" height="1" fill="#c8c8c8" />
<rect x="636" y="252" width="1" height="1" fill="#c8c8c8" />
<rect x="636" y="255" width="1" height="1" fill="#c8c8c8" />
<rect x="636" y="258" width="1" height="1" fill="#c8c8c8" />
<rect x="636" y="261" width="1" height="1" fill="#c8c8c8" />
<rect x="636" y="264" width="1" height="1" fill="#c8c8c8" />
<rect x="636" y="267" width="1" height="1" fill="#c8c8c8" />
<rect x="636" y="270" width="1" height="1" fill="#c8c8c8" />
<rect x="636" y="273" width="1" height="1" fill="#c8c8c8" />
<rect x="636" y="276" width="1" height="1" fill="#c8c8c8" />
<rect x="636" y="279" width="1" height="1" fill="#c8c8c8" />
<rect x="636" y="282" width="1" height="1" fill="#c8c8c8" />
<rect x="636" y="285" width="1" height="1" fill="#c8c8c8" />
<rect x="636" y="288" width="1" height="1" fill="#c8c8c8" />
<rect x="636" y="291" width="1" height="1" fill="#c8c8c8" />
<rect x="636" y="294" width="1" height="1" fill="#c8c8c8" />
<rect x="636" y="297" width="1" height="1" fill="#c8c8c8" />
<rect x="636" y="300" width="1" height="1" fill="#c8c8c8" />
<rect x="636" y="303" width="1" height="1" fill="#c8c8c8" />
<rect x="636" y="306" width="1" height="1" fill="#c8c8c8" />
<rect x="636" y="308" width="1" height="1" fill="#c8c8c8" />
<rect x="636" y="311" width="1" height="1" fill="#c8c8c8" />
<rect x="636" y="314" width="1" height="1" fill="#c8c8c8" />
<rect x="636" y="317" width="1" height="1" fill="#c8c8c8" />
<rect x="636" y="320" width="1" height="1" fill="#c8c8c8" />
<rect x="636" y="323" width="1" height="1" fill="#c8c8c8" />
<rect x="636" y="326" width="1" height="1" fill="#c8c8c8" />
<rect x="636" y="329" width="1" height="1" fill="#c8c8c8" />
<rect x="636" y="332" width="1" height="1" fill="#c8c8c8" />
<rect x="636" y="335" width="1" height="1" fill="#c8c8c8" />
<rect x="654" y="220" width="1" height="1" fill="#c8c8c8" />
<rect x="654" y="223" width="1" height="1" fill="#c8c8c8" />
<rect x="654" y="226" width="1" height="1" fill="#c8c8c8" />
<rect x="654" y="229" width="1" height="1" fill="#c8c8c8" />
<rect x="654" y="232" width="1" height="1" fill="#c8c8c8" />
<rect x="654" y="235" width="1" height="1" fill="#c8c8c8" />
<rect x="654" y="238" width="1" height="1" fill="#c8c8c8" />
<rect x="654" y="241" width="1" height="1" fill="#c8c8c8" />
<rect x="654" y="244" width="1" height="1" fill="#c8c8c8" />
<rect x="654" y="247" width="1" height="1" fill="#c8c8c8" />
<rect x="654" y="250" width="1" height="1" fill="#c8c8c8" />
<rect x="654" y="252" width="1" height="1" fill="#c8c8c8" />
<rect x="654" y="255" width="1" height="1" fill="#c8c8c8" />
<rect x="654" y="258" width="1" height="1" fill="#c8c8c8" />
<rect x="654" y="261" width="1" height="1" fill="#c8c8c8" />
<rect x="654" y="264" width="1" height="1" fill="#c8c8c8" />
<rect x="654" y="267" width="1" height="1" fill="#c8c8c8" />
<rect x="654" y="270" width="1" height="1" fill="#c8c8c8" />
<rect x="654" y="273" width="1" height="1" fill="#c8c8c8" />
<rect x="654" y="276" width="1" height="1" fill="#c8c8c8" />
<rect x="654" y="279" width="1" height="1" fill="#c8c8c8" />
<rect x="654" y="282" width="1" height="1" fill="#c8c8c8" />
<rect x="654" y="285" width="1" height="1" fill="#c8c8c8" />
<rect x="654" y="288" width="1" height="1" fill="#c8c8c8" />
<rect x="654" y="291" width="1" height="1" fill="#c8c8c8" />
<rect x="654" y="294" width="1" height="1" fill="#c8c8c8" />
<rect x="654" y="297" width="1" height="1" fill="#c8c8c8" />
<rect x="654" y="300" width="1" height="1" fill="#c8c8c8" />
<rect x="654" y="303" width="1" height="1" fill="#c8c8c8" />
<rect x="654" y="306" width="1" height="1" fill="#c8c8c8" />
<rect x="654" y="308" width="1" height="1" fill="#c8c8c8" />
<rect x="654" y="311" width="1" height="1" fill="#c8c8c8" />
<rect x="654" y="314" width="1" height="1" fill="#c8c8c8" />
<rect x="654" y="317" width="1" height="1" fill="#c8c8c8" />
<rect x="654" y="320" width="1" height="1" fill="#c8c8c8" />
<rect x="654" y="323" width="1" height="1" fill="#c8c8c8" />
<rect x="654" y="326" width="1" height="1" fill="#c8c8c8" />
<rect x="654" y="329" width="1" height="1" fill="#c8c8c8" />
<rect x="654" y="332" width="1" height="1" fill="#c8c8c8" />
<rect x="654" y="335" width="1" height="1" fill="#c8c8c8" />
<rect x="666" y="220" width="1" height="1" fill="#c8c8c8" />
<rect x="666" y="223" width="1" height="1" fill="#c8c8c8" />
<rect x="666" y="226" width="1" height="1" fill="#c8c8c8" />
<rect x="666" y="229" width="1" height="1" fill="#c8c8c8" />
<rect x="666" y="232" width="1" height="1" fill="#c8c8c8" />
<rect x="666" y="235" width="1" height="1" fill="#c8c8c8" />
<rect x="666" y="238" width="1" height="1" fill="#c8c8c8" />
<rect x="666" y="241" width="1" height="1" fill="#c8c8c8" />
<rect x="666" y="244" width="1" height="1" fill="#c8c8c8" />
<rect x="666" y="247" width="1" height="1" fill="#c8c8c8" />
<rect x="666" y="250" width="1" height="1" fill="#c8c8c8" />
<rect x="666" y="252" width="1" height="1" fill="#c8c8c8" />
<rect x="666" y="255" width="1" height="1" fill="#c8c8c8" />
<rect x="666" y="258" width="1" height="1" fill="#c8c8c8" />
<rect x="666" y="261" width="1" height="1" fill="#c8c8c8" />
<rect x="666" y="264" width="1" height="1" fill="#c8c8c8" />
<rect x="666" y="267" width="1" height="1" fill="#c8c8c8" />
<rect x="666" y="270" width="1" height="1" fill="#c8c8c8" />
<rect x="666" y="273" width="1" height="1" fill="#c8c8c8" />
<rect x="666" y="276" width="1" height="1" fill="#c8c8c8" />
<rect x="666" y="279" width="1" height="1" fill="#c8c8c8" />
<rect x="666" y="282" width="1" height="1" fill="#c8c8c8" />
<rect x="666" y="285" width="1" height="1" fill="#c8c8c8" />
<rect x="666" y="288" width="1" height="1" fill="#c8c8c8" />
<rect x="666" y="291" width="1" height="1" fill="#c8c8c8" />
<rect x="666" y="294" width="1" height="1" fill="#c8c8c8" />
<rect x="666" y="297" width="1" height="1" fill="#c8c8c8" />
<rect x="666" y="300" width="1" height="1" fill="#c8c8c8" />
<rect x="666" y="303" width="1" height="1" fill="#c8c8c8" />
<rect x="666" y="306" width="1" height="1" fill="#c8c8c8" />
<rect x="666" y="308" width="1" height="1" fill="#c8c8c8" />
<rect x="666" y="311" width="1" height="1" fill="#c8c8c8" />
<rect x="666" y="314" width="1" height="1" fill="#c8c8c8" />
<rect x="666" y="317" width="1" height="1" fill="#c8c8c8" />
<rect x="666" y="320" width="1" height="1" fill="#c8c8c8" />
<rect x="666" y="323" width="1" height="1" fill="#c8c8c8" />
<rect x="666" y="326" width="1" height="1" fill="#c8c8c8" />
<rect x="666" y="329" width="1" height="1" fill="#c8c8c8" />
<rect x="666" y="332" width="1" height="1" fill="#c8c8c8" />
<rect x="666" y="335" width="1" height="1" fill="#c8c8c8" />
<rect x="676" y="220" width="1" height="1" fill="#c8c8c8" />
<rect x="676" y="223" width="1" height="1" fill="#c8c8c8" />
<rect x="676" y="226" width="1" height="1" fill="#c8c8c8" />
<rect x="676" y="229" width="1" height="1" fill="#c8c8c8" />
<rect x="676" y="232" width="1" height="1" fill="#c8c8c8" />
<rect x="676" y="235" width="1" height="1" fill="#c8c8c8" />
<rect x="676" y="238" width="1" height="1" fill="#c8c8c8" />
<rect x="676" y="241" width="1" height="1" fill="#c8c8c8" />
<rect x="676" y="244" width="1" height="1" fill="#c8c8c8" />
<rect x="676" y="247" width="1" height="1" fill="#c8c8c8" />
<rect x="676" y="250" width="1" height="1" fill="#c8c8c8" />
<rect x="676" y="252" width="1" height="1" fill="#c8c8c8" />
<rect x="676" y="255" width="1" height="1" fill="#c8c8c8" />
<rect x="676" y="258" width="1" height="1" fill="#c8c8c8" />
<rect x="676" y="261" width="1" height="1" fill="#c8c8c8" />
<rect x="676" y="264" width="1" height="1" fill="#c8c8c8" />
<rect x="676" y="267" width="1" height="1" fill="#c8c8c8" />
<rect x="676" y="270" width="1" height="1" fill="#c8c8c8" />
<rect x="676" y="273" width="1" height="1" fill="#c8c8c8" />
<rect x="676" y="276" width="1" height="1" fill="#c8c8c8" />
<rect x="676" y="279" width="1" height="1" fill="#c8c8c8" />
<rect x="676" y="282" width="1" height="1" fill="#c8c8c8" />
<rect x="676" y="285" width="1" height="1" fill="#c8c8c8" />
<rect x="676" y="288" width="1" height="1" fill="#c8c8c8" />
<rect x="676" y="291" width="1" height="1" fill="#c8c8c8" />
<rect x="676" y="294" width="1" height="1" fill="#c8c8c8" />
<rect x="676" y="297" width="1" height="1" fill="#c8c8c8" />
<rect x="676" y="300" width="1" height="1" fill="#c8c8c8" />
<rect x="676" y="303" width="1" height="1" fill="#c8c8c8" />
<rect x="676" y="306" width="1" height="1" fill="#c8c8c8" />
<rect x="676" y="308" width="1" height="1" fill="#c8c8c8" />
<rect x="676" y="311" width="1" height="1" fill="#c8c8c8" />
<rect x="676" y="314" width="1" height="1" fill="#c8c8c8" />
<rect x="676" y="317" width="1" height="1" fill="#c8c8c8" />
<rect x="676" y="320" width="1" height="1" fill="#c8c8c8" />
<rect x="676" y="323" width="1" height="1" fill="#c8c8c8" />
<rect x="676" y="326" width="1" height="1" fill="#c8c8c8" />
<rect x="676" y="329" width="1" height="1" fill="#c8c8c8" />
<rect x="676" y="332" width="1" height="1" fill="#c8c8c8" />
<rect x="676" y="335" width="1" height="1" fill="#c8c8c8" />
<rect x="683" y="220" width="1" height="1" fill="#c8c8c8" />
<rect x="683" y="223" width="1" height="1" fill="#c8c8c8" />
<rect x="683" y="226" width="1" height="1" fill="#c8c8c8" />
<rect x="683" y="229" width="1" height="1" fill="#c8c8c8" />
<rect x="683" y="232" width="1" height="1" fill="#c8c8c8" />
<rect x="683" y="235" width="1" height="1" fill="#c8c8c8" />
<rect x="683" y="238" width="1" height="1" fill="#c8c8c8" />
<rect x="683" y="241" width="1" height="1" fill="#c8c8c8" />
<rect x="683" y="244" width="1" height="1" fill="#c8c8c8" />
<rect x="683" y="247" width="1" height="1" fill="#c8c8c8" />
<rect x="683" y="250" width="1" height="1" fill="#c8c8c8" />
<rect x="683" y="252" width="1" height="1" fill="#c8c8c8" />
<rect x="683" y="255" width="1" height="1" fill="#c8c8c8" />
<rect x="683" y="258" width="1" height="1" fill="#c8c8c8" />
<rect x="683" y="261" width="1" height="1" fill="#c8c8c8" />
<rect x="683" y="264" width="1" height="1" fill="#c8c8c8" />
<rect x="683" y="267" width="1" height="1" fill="#c8c8c8" />
<rect x="683" y="270" width="1" height="1" fill="#c8c8c8" />
<rect x="683" y="273" width="1" height="1" fill="#c8c8c8" />
<rect x="683" y="276" width="1" height="1" fill="#c8c8c8" />
<rect x="683" y="279" width="1" height="1" fill="#c8c8c8" />
<rect x="683" y="282" width="1" height="1" fill="#c8c8c8" />
<rect x="683" y="285" width="1" height="1" fill="#c8c8c8" />
<rect x="683" y="288" width="1" height="1" fill="#c8c8c8" />
<rect x="683" y="291" width="1" height="1" fill="#c8c8c8" />
<rect x="683" y="294" width="1" height="1" fill="#c8c8c8" />
<rect x="683" y="297" width="1" height="1" fill="#c8c8c8" />
<rect x="683" y="300" width="1" height="1" fill="#c8c8c8" />
<rect x="683" y="303" width="1" height="1" fill="#c8c8c8" />
<rect x="683" y="306" width="1" height="1" fill="#c8c8c8" />
<rect x="683" y="308" width="1" height="1" fill="#c8c8c8" />
<rect x="683" y="311" width="1" height="1" fill="#c8c8c8" />
<rect x="683" y="314" width="1" height="1" fill="#c8c8c8" />
<rect x="683" y="317" width="1" height="1" fill="#c8c8c8" />
<rect x="683" y="320" width="1" height="1" fill="#c8c8c8" />
<rect x="683" y="323" width="1" height="1" fill="#c8c8c8" />
<rect x="683" y="326" width="1" height="1" fill="#c8c8c8" />
<rect x="683" y="329" width="1" height="1" fill="#c8c8c8" />
<rect x="683" y="332" width="1" height="1" fill="#c8c8c8" />
<rect x="683" y="335" width="1" height="1" fill="#c8c8c8" />
<rect x="690" y="220" width="1" height="1" fill="#c8c8c8" />
<rect x="690" y="223" width="1" height="1" fill="#c8c8c8" />
<rect x="690" y="226" width="1" height="1" fill="#c8c8c8" />
<rect x="690" y="229" width="1" height="1" fill="#c8c8c8" />
<rect x="690" y="232" width="1" height="1" fill="#c8c8c8" />
<rect x="690" y="235" width="1" height="1" fill="#c8c8c8" />
<rect x="690" y="238" width="1" height="1" fill="#c8c8c8" />
<rect x="690" y="241" width="1" height="1" fill="#c8c8c8" />
<rect x="690" y="244" width="1" height="1" fill="#c8c8c8" />
<rect x="690" y="247" width="1" height="1" fill="#c8c8c8" />
<rect x="690" y="250" width="1" height="1" fill="#c8c8c8" />
<rect x="690" y="252" width="1" height="1" fill="#c8c8c8" />
<rect x="690" y="255" width="1" height="1" fill="#c8c8c8" />
<rect x="690" y="258" width="1" height="1" fill="#c8c8c8" />
<rect x="690" y="261" width="1" height="1" fill="#c8c8c8" />
<rect x="690" y="264" width="1" height="1" fill="#c8c8c8" />
<rect x="690" y="267" width="1" height="1" fill="#c8c8c8" />
<rect x="690" y="270" width="1" height="1" fill="#c8c8c8" />
<rect x="690" y="273" width="1" height="1" fill="#c8c8c8" />
<rect x="690" y="276" width="1" height="1" fill="#c8c8c8" />
<rect x="690" y="279" width="1" height="1" fill="#c8c8c8" />
<rect x="690" y="282" width="1" height="1" fill="#c8c8c8" />
<rect x="690" y="285" width="1" height="1" fill="#c8c8c8" />
<rect x="690" y="288" width="1" height="1" fill="#c8c8c8" />
<rect x="690" y="291" width="1" height="1" fill="#c8c8c8" />
<rect x="690" y="294" width="1" height="1" fill="#c8c8c8" />
<rect x="690" y="297" width="1" height="1" fill="#c8c8c8" />
<rect x="690" y="300" width="1" height="1" fill="#c8c8c8" />
<rect x="690" y="303" width="1" height="1" fill="#c8c8c8" />
<rect x="690" y="306" width="1" height="1" fill="#c8c8c8" />
<rect x="690" y="308" width="1" height="1" fill="#c8c8c8" />
<rect x="690" y="311" width="1" height="1" fill="#c8c8c8" />
<rect x="690" y="314" width="1" height="1" fill="#c8c8c8" />
<rect x="690" y="317" width="1" height="1" fill="#c8c8c8" />
<rect x="690" y="320" width="1" height="1" fill="#c8c8c8" />
<rect x="690" y="323" width="1" height="1" fill="#c8c8c8" />
<rect x="690" y="326" width="1" height="1" fill="#c8c8c8" />
<rect x="690" y="329" width="1" height="1" fill="#c8c8c8" />
<rect x="690" y="332" width="1" height="1" fill="#c8c8c8" />
<rect x="690" y="335" width="1" height="1" fill="#c8c8c8" />
<rect x="696" y="220" width="1" height="1" fill="#c8c8c8" />
<rect x="696" y="223" width="1" height="1" fill="#c8c8c8" />
<rect x="696" y="226" width="1" height="1" fill="#c8c8c8" />
<rect x="696" y="229" width="1" height="1" fill="#c8c8c8" />
<rect x="696" y="232" width="1" height="1" fill="#c8c8c8" />
<rect x="696" y="235" width="1" height="1" fill="#c8c8c8" />
<rect x="696" y="238" width="1" height="1" fill="#c8c8c8" />
<rect x="696" y="241" width="1" height="1" fill="#c8c8c8" />
<rect x="696" y="244" width="1" height="1" fill="#c8c8c8" />
<rect x="696" y="247" width="1" height="1" fill="#c8c8c8" />
<rect x="696" y="250" width="1" height="1" fill="#c8c8c8" />
<rect x="696" y="252" width="1" height="1" fill="#c8c8c8" />
<rect x="696" y="255" width="1" height="1" fill="#c8c8c8" />
<rect x="696" y="258" width="1" height="1" fill="#c8c8c8" />
<rect x="696" y="261" width="1" height="1" fill="#c8c8c8" />
<rect x="696" y="264" width="1" height="1" fill="#c8c8c8" />
<rect x="696" y="267" width="1" height="1" fill="#c8c8c8" />
<rect x="696" y="270" width="1" height="1" fill="#c8c8c8" />
<rect x="696" y="273" width="1" height="1" fill="#c8c8c8" />
<rect x="696" y="276" width="1" height="1" fill="#c8c8c8" />
<rect x="696" y="279" width="1" height="1" fill="#c8c8c8" />
<rect x="696" y="282" width="1" height="1" fill="#c8c8c8" />
<rect x="696" y="285" width="1" height="1" fill="#c8c8c8" />
<rect x="696" y="288" width="1" height="1" fill="#c8c8c8" />
<rect x="696" y="291" width="1" height="1" fill="#c8c8c8" />
<rect x="696" y="294" width="1" height="1" fill="#c8c8c8" />
<rect x="696" y="297" width="1" height="1" fill="#c8c8c8" />
<rect x="696" y="300" width="1" height="1" fill="#c8c8c8" />
<rect x="696" y="303" width="1" height="1" fill="#c8c8c8" />
<rect x="696" y="306" width="1" height="1" fill="#c8c8c8" />
<rect x="696" y="308" width="1" height="1" fill="#c8c8c8" />
<rect x="696" y="311" width="1" height="1" fill="#c8c8c8" />
<rect x="696" y="314" width="1" height="1" fill="#c8c8c8" />
<rect x="696" y="317" width="1" height="1" fill="#c8c8c8" />
<rect x="696" y="320" width="1" height="1" fill="#c8c8c8" />
<rect x="696" y="323" width="1" height="1" fill="#c8c8c8" />
<rect x="696" y="326" width="1" height="1" fill="#c8c8c8" />
<rect x="696" y="329" width="1" height="1" fill="#c8c8c8" />
<rect x="696" y="332" width="1" height="1" fill="#c8c8c8" />
<rect x="696" y="335" width="1" height="1" fill="#c8c8c8" />
<rect x="701" y="220" width="1" height="1" fill="#c8c8c8" />
<rect x="701" y="223" width="1" height="1" fill="#c8c8c8" />
<rect x="701" y="226" width="1" height="1" fill="#c8c8c8" />
<rect x="701" y="229" width="1" height="1" fill="#c8c8c8" />
<rect x="701" y="232" width="1" height="1" fill="#c8c8c8" />
<rect x="701" y="235" width="1" height="1" fill="#c8c8c8" />
<rect x="701" y="238" width="1" height="1" fill="#c8c8c8" />
<rect x="701" y="241" width="1" height="1" fill="#c8c8c8" />
<rect x="701" y="244" width="1" height="1" fill="#c8c8c8" />
<rect x="701" y="247" width="1" height="1" fill="#c8c8c8" />
<rect x="701" y="250" width="1" height="1" fill="#c8c8c8" />
<rect x="701" y="252" width="1" height="1" fill="#c8c8c8" />
<rect x="701" y="255" width="1" height="1" fill="#c8c8c8" />
<rect x="701" y="258" width="1" height="1" fill="#c8c8c8" />
<rect x="701" y="261" width="1" height="1" fill="#c8c8c8" />
<rect x="701" y="264" width="1" height="1" fill="#c8c8c8" />
<rect x="701" y="267" width="1" height="1" fill="#c8c8c8" />
<rect x="701" y="270" width="1" height="1" fill="#c8c8c8" />
<rect x="701" y="273" width="1" height="1" fill="#c8c8c8" />
<rect x="701" y="276" width="1" height="1" fill="#c8c8c8" />
<rect x="701" y="279" width="1" height="1" fill="#c8c8c8" />
<rect x="701" y="282" width="1" height="1" fill="#c8c8c8" />
<rect x="701" y="285" width="1" height="1" fill="#c8c8c8" />
<rect x="701" y="288" width="1" height="1" fill="#c8c8c8" />
<rect x="701" y="291" width="1" height="1" fill="#c8c8c8" />
<rect x="701" y="294" width="1" height="1" fill="#c8c8c8" />
<rect x="701" y="297" width="1" height="1" fill="#c8c8c8" />
<rect x="701" y="300" width="1" height="1" fill="#c8c8c8" />
<rect x="701" y="303" width="1" height="1" fill="#c8c8c8" />
<rect x="701" y="306" width="1" height="1" fill="#c8c8c8" />
<rect x="701" y="308" width="1" height="1" fill="#c8c8c8" />
<rect x="701" y="311" width="1" height="1" fill="#c8c8c8" />
<rect x="701" y="314" width="1" height="1" fill="#c8c8c8" />
<rect x="701" y="317" width="1" height="1" fill="#c8c8c8" />
<rect x="701" y="320" width="1" height="1" fill="#c8c8c8" />
<rect x="701" y="323" width="1" height="1" fill="#c8c8c8" />
<rect x="701" y="326" width="1" height="1" fill="#c8c8c8" />
<rect x="701" y="329" width="1" height="1" fill="#c8c8c8" />
<rect x="701" y="332" width="1" height="1" fill="#c8c8c8" />
<rect x="701" y="335" width="1" height="1" fill="#c8c8c8" />
<rect x="705" y="220" width="1" height="1" fill="#c8c8c8" />
<rect x="705" y="223" width="1" height="1" fill="#c8c8c8" />
<rect x="705" y="226" width="1" height="1" fill="#c8c8c8" />
<rect x="705" y="229" width="1" height="1" fill="#c8c8c8" />
<rect x="705" y="232" width="1" height="1" fill="#c8c8c8" />
<rect x="705" y="235" width="1" height="1" fill="#c8c8c8" />
<rect x="705" y="238" width="1" height="1" fill="#c8c8c8" />
<rect x="705" y="241" width="1" height="1" fill="#c8c8c8" />
<rect x="705" y="244" width="1" height="1" fill="#c8c8c8" />
<rect x="705" y="247" width="1" height="1" fill="#c8c8c8" />
<rect x="705" y="250" width="1" height="1" fill="#c8c8c8" />
<rect x="705" y="252" width="1" height="1" fill="#c8c8c8" />
<rect x="705" y="255" width="1" height="1" fill="#c8c8c8" />
<rect x="705" y="258" width="1" height="1" fill="#c8c8c8" />
<rect x="705" y="261" width="1" height="1" fill="#c8c8c8" />
<rect x="705" y="264" width="1" height="1" fill="#c8c8c8" />
<rect x="705" y="267" width="1" height="1" fill="#c8c8c8" />
<rect x="705" y="270" width="1" height="1" fill="#c8c8c8" />
<rect x="705" y="273" width="1" height="1" fill="#c8c8c8" />
<rect x="705" y="276" width="1" height="1" fill="#c8c8c8" />
<rect x="705" y="279" width="1" height="1" fill="#c8c8c8" />
<rect x="705" y="282" width="1" height="1" fill="#c8c8c8" />
<rect x="705" y="285" width="1" height="1" fill="#c8c8c8" />
<rect x="705" y="288" width="1" height="1" fill="#c8c8c8" />
<rect x="705" y="291" width="1" height="1" fill="#c8c8c8" />
<rect x="705" y="294" width="1" height="1" fill="#c8c8c8" />
<rect x="705" y="297" width="1" height="1" fill="#c8c8c8" />
<rect x="705" y="300" width="1" height="1" fill="#c8c8c8" />
<rect x="705" y="303" width="1" height="1" fill="#c8c8c8" />
<rect x="705" y="306" width="1" height="1" fill="#c8c8c8" />
<rect x="705" y="308" width="1" height="1" fill="#c8c8c8" />
<rect x="705" y="311" width="1" height="1" fill="#c8c8c8" />
<rect x="705" y="314" width="1" height="1" fill="#c8c8c8" />
<rect x="705" y="317" width="1" height="1" fill="#c8c8c8" />
<rect x="705" y="320" width="1" height="1" fill="#c8c8c8" />
<rect x="705" y="323" width="1" height="1" fill="#c8c8c8" />
<rect x="705" y="326" width="1" height="1" fill="#c8c8c8" />
<rect x="705" y="329" width="1" height="1" fill="#c8c8c8" />
<rect x="705" y="332" width="1" height="1" fill="#c8c8c8" />
<rect x="705" y="335" width="1" height="1" fill="#c8c8c8" />
<rect x="735" y="220" width="1" height="1" fill="#c8c8c8" />
<rect x="735" y="223" width="1" height="1" fill="#c8c8c8" />
<rect x="735" y="226" width="1" height="1" fill="#c8c8c8" />
<rect x="735" y="229" width="1" height="1" fill="#c8c8c8" />
<rect x="735" y="232" width="1" height="1" fill="#c8c8c8" />
<rect x="735" y="235" width="1" height="1" fill="#c8c8c8" />
<rect x="735" y="238" width="1" height="1" fill="#c8c8c8" />
<rect x="735" y="241" width="1" height="1" fill="#c8c8c8" />
<rect x="735" y="244" width="1" height="1" fill="#c8c8c8" />
<rect x="735" y="247" width="1" height="1" fill="#c8c8c8" />
<rect x="735" y="250" width="1" height="1" fill="#c8c8c8" />
<rect x="735" y="252" width="1" height="1" fill="#c8c8c8" />
<rect x="735" y="255" width="1" height="1" fill="#c8c8c8" />
<rect x="735" y="258" width="1" height="1" fill="#c8c8c8" />
<rect x="735" y="261" width="1" height="1" fill="#c8c8c8" />
<rect x="735" y="264" width="1" height="1" fill="#c8c8c8" />
<rect x="735" y="267" width="1" height="1" fill="#c8c8c8" />
<rect x="735" y="270" width="1" height="1" fill="#c8c8c8" />
<rect x="735" y="273" width="1" height="1" fill="#c8c8c8" />
<rect x="735" y="276" width="1" height="1" fill="#c8c8c8" />
<rect x="735" y="279" width="1" height="1" fill="#c8c8c8" />
<rect x="735" y="282" width="1" height="1" fill="#c8c8c8" />
<rect x="735" y="285" width="1" height="1" fill="#c8c8c8" />
<rect x="735" y="288" width="1" height="1" fill="#c8c8c8" />
<rect x="735" y="291" width="1" height="1" fill="#c8c8c8" />
<rect x="735" y="294" width="1" height="1" fill="#c8c8c8" />
<rect x="735" y="297" width="1" height="1" fill="#c8c8c8" />
<rect x="735" y="300" width="1" height="1" fill="#c8c8c8" />
<rect x="735" y="303" width="1" height="1" fill="#c8c8c8" />
<rect x="735" y="306" width="1" height="1" fill="#c8c8c8" />
<rect x="735" y="308" width="1" height="1" fill="#c8c8c8" />
<rect x="735" y="311" width="1" height="1" fill="#c8c8c8" />
<rect x="735" y="314" width="1" height="1" fill="#c8c8c8" />
<rect x="735" y="317" width="1" height="1" fill="#c8c8c8" />
<rect x="735" y="320" width="1" height="1" fill="#c8c8c8" />
<rect x="735" y="323" width="1" height="1" fill="#c8c8c8" />
<rect x="735" y="326" width="1" height="1" fill="#c8c8c8" />
<rect x="735" y="329" width="1" height="1" fill="#c8c8c8" />
<rect x="735" y="332" width="1" height="1" fill="#c8c8c8" />
<rect x="735" y="335" width="1" height="1" fill="#c8c8c8" />
<rect x="752" y="220" width="1" height="1" fill="#c8c8c8" />
<rect x="752" y="223" width="1" height="1" fill="#c8c8c8" />
<rect x="752" y="226" width="1" height="1" fill="#c8c8c8" />
<rect x="752" y="229" width="1" height="1" fill="#c8c8c8" />
<rect x="752" y="232" width="1" height="1" fill="#c8c8c8" />
<rect x="752" y="235" width="1" height="1" fill="#c8c8c8" />
<rect x="752" y="238" width="1" height="1" fill="#c8c8c8" />
<rect x="752" y="241" width="1" height="1" fill="#c8c8c8" />
<rect x="752" y="244" width="1" height="1" fill="#c8c8c8" />
<rect x="752" y="247" width="1" height="1" fill="#c8c8c8" />
<rect x="752" y="250" width="1" height="1" fill="#c8c8c8" />
<rect x="752" y="252" width="1" height="1" fill="#c8c8c8" />
<rect x="752" y="255" width="1" height="1" fill="#c8c8c8" />
<rect x="752" y="258" width="1" height="1" fill="#c8c8c8" />
<rect x="752" y="261" width="1" height="1" fill="#c8c8c8" />
<rect x="752" y="264" width="1" height="1" fill="#c8c8c8" />
<rect x="752" y="267" width="1" height="1" fill="#c8c8c8" />
<rect x="752" y="270" width="1" height="1" fill="#c8c8c8" />
<rect x="752" y="273" width="1" height="1" fill="#c8c8c8" />
<rect x="752" y="276" width="1" height="1" fill="#c8c8c8" />
<rect x="752" y="279" width="1" height="1" fill="#c8c8c8" />
<rect x="752" y="282" width="1" height="1" fill="#c8c8c8" />
<rect x="752" y="285" width="1" height="1" fill="#c8c8c8" />
<rect x="752" y="288" width="1" height="1" fill="#c8c8c8" />
<rect x="752" y="291" width="1" height="1" fill="#c8c8c8" />
<rect x="752" y="294" width="1" height="1" fill="#c8c8c8" />
<rect x="752" y="297" width="1" height="1" fill="#c8c8c8" />
<rect x="752" y="300" width="1" height="1" fill="#c8c8c8" />
<rect x="752" y="303" width="1" height="1" fill="#c8c8c8" />
<rect x="752" y="306" width="1" height="1" fill="#c8c8c8" />
<rect x="752" y="308" width="1" height="1" fill="#c8c8c8" />
<rect x="752" y="311" width="1" height="1" fill="#c8c8c8" />
<rect x="752" y="314" width="1" height="1" fill="#c8c8c8" />
<rect x="752" y="317" width="1" height="1" fill="#c8c8c8" />
<rect x="752" y="320" width="1" height="1" fill="#c8c8c8" />
<rect x="752" y="323" width="1" height="1" fill="#c8c8c8" />
<rect x="752" y="326" width="1" height="1" fill="#c8c8c8" />
<rect x="752" y="329" width="1" height="1" fill="#c8c8c8" />
<rect x="752" y="332" width="1" height="1" fill="#c8c8c8" />
<rect x="752" y="335" width="1" height="1" fill="#c8c8c8" />
<rect x="765" y="220" width="1" height="1" fill="#c8c8c8" />
<rect x="765" y="223" width="1" height="1" fill="#c8c8c8" />
<rect x="765" y="226" width="1" height="1" fill="#c8c8c8" />
<rect x="765" y="229" width="1" height="1" fill="#c8c8c8" />
<rect x="765" y="232" width="1" height="1" fill="#c8c8c8" />
<rect x="765" y="235" width="1" height="1" fill="#c8c8c8" />
<rect x="765" y="238" width="1" height="1" fill="#c8c8c8" />
<rect x="765" y="241" width="1" height="1" fill="#c8c8c8" />
<rect x="765" y="244" width="1" height="1" fill="#c8c8c8" />
<rect x="765" y="247" width="1" height="1" fill="#c8c8c8" />
<rect x="765" y="250" width="1" height="1" fill="#c8c8c8" />
<rect x="765" y="252" width="1" height="1" fill="#c8c8c8" />
<rect x="765" y="255" width="1" height="1" fill="#c8c8c8" />
<rect x="765" y="258" width="1" height="1" fill="#c8c8c8" />
<rect x="765" y="261" width="1" height="1" fill="#c8c8c8" />
<rect x="765" y="264" width="1" height="1" fill="#c8c8c8" />
<rect x="765" y="267" width="1" height="1" fill="#c8c8c8" />
<rect x="765" y="270" width="1" height="1" fill="#c8c8c8" />
<rect x="765" y="273" width="1" height="1" fill="#c8c8c8" />
<rect x="765" y="276" width="1" height="1" fill="#c8c8c8" />
<rect x="765" y="279" width="1" height="1" fill="#c8c8c8" />
<rect x="765" y="282" width="1" height="1" fill="#c8c8c8" />
<rect x="765" y="285" width="1" height="1" fill="#c8c8c8" />
<rect x="765" y="288" width="1" height="1" fill="#c8c8c8" />
<rect x="765" y="291" width="1" height="1" fill="#c8c8c8" />
<rect x="765" y="294" width="1" height="1" fill="#c8c8c8" />
<rect x="765" y="297" width="1" height="1" fill="#c8c8c8" />
<rect x="765" y="300" width="1" height="1" fill="#c8c8c8" />
<rect x="765" y="303" width="1" height="1" fill="#c8c8c8" />
<rect x="765" y="306" width="1" height="1" fill="#c8c8c8" />
<rect x="765" y="308" width="1" height="1" fill="#c8c8c8" />
<rect x="765" y="311" width="1" height="1" fill="#c8c8c8" />
<rect x="765" y="314" width="1" height="1" fill="#c8c8c8" />
<rect x="765" y="317" width="1" height="1" fill="#c8c8c8" />
<rect x="765" y="320" width="1" height="1" fill="#c8c8c8" />
<rect x="765" y="323" width="1" height="1" fill="#c8c8c8" />
<rect x="765" y="326" width="1" height="1" fill="#c8c8c8" />
<rect x="765" y="329" width="1" height="1" fill="#c8c8c8" />
<rect x="765" y="332" width="1" height="1" fill="#c8c8c8" />
<rect x="765" y="335" width="1" height="1" fill="#c8c8c8" />
<rect x="774" y="220" width="1" height="1" fill="#c8c8c8" />
<rect x="774" y="223" width="1" height="1" fill="#c8c8c8" />
<rect x="774" y="226" width="1" height="1" fill="#c8c8c8" />
<rect x="774" y="229" width="1" height="1" fill="#c8c8c8" />
<rect x="774" y="232" width="1" height="1" fill="#c8c8c8" />
<rect x="774" y="235" width="1" height="1" fill="#c8c8c8" />
<rect x="774" y="238" width="1" height="1" fill="#c8c8c8" />
<rect x="774" y="241" width="1" height="1" fill="#c8c8c8" />
<rect x="774" y="244" width="1" height="1" fill="#c8c8c8" />
<rect x="774" y="247" width="1" height="1" fill="#c8c8c8" />
<rect x="774" y="250" width="1" height="1" fill="#c8c8c8" />
<rect x="774" y="252" width="1" height="1" fill="#c8c8c8" />
<rect x="774" y="255" width="1" height="1" fill="#c8c8c8" />
<rect x="774" y="258" width="1" height="1" fill="#c8c8c8" />
<rect x="774" y="261" width="1" height="1" fill="#c8c8c8" />
<rect x="774" y="264" width="1" height="1" fill="#c8c8c8" />
<rect x="774" y="267" width="1" height="1" fill="#c8c8c8" />
<rect x="774" y="270" width="1" height="1" fill="#c8c8c8" />
<rect x="774" y="273" width="1" height="1" fill="#c8c8c8" />
<rect x="774" y="276" width="1" height="1" fill="#c8c8c8" />
<rect x="774" y="279" width="1" height="1" fill="#c8c8c8" />
<rect x="774" y="282" width="1" height="1" fill="#c8c8c8" />
<rect x="774" y="285" width="1" height="1" fill="#c8c8c8" />
<rect x="774" y="288" width="1" height="1" fill="#c8c8c8" />
<rect x="774" y="291" width="1" height="1" fill="#c8c8c8" />
<rect x="774" y="294" width="1" height="1" fill="#c8c8c8" />
<rect x="774" y="297" width="1" height="1" fill="#c8c8c8" />
<rect x="774" y="300" width="1" height="1" fill="#c8c8c8" />
<rect x="774" y="303" width="1" height="1" fill="#c8c8c8" />
<rect x="774" y="306" width="1" height="1" fill="#c8c8c8" />
<rect x="774" y="308" width="1" height="1" fill="#c8c8c8" />
<rect x="774" y="311" width="1" height="1" fill="#c8c8c8" />
<rect x="774" y="314" width="1" height="1" fill="#c8c8c8" />
<rect x="774" y="317" width="1" height="1" fill="#c8c8c8" />
<rect x="774" y="320" width="1" height="1" fill="#c8c8c8" />
<rect x="774" y="323" width="1" height="1" fill="#c8c8c8" />
<rect x="774" y="326" width="1" height="1" fill="#c8c8c8" />
<rect x="774" y="329" width="1" height="1" fill="#c8c8c8" />
<rect x="774" y="332" width="1" height="1" fill="#c8c8c8" />
<rect x="774" y="335" width="1" height="1" fill="#c8c8c8" />
<rect x="782" y="220" width="1" height="1" fill="#c8c8c8" />
<rect x="782" y="223" width="1" height="1" fill="#c8c8c8" />
<rect x="782" y="226" width="1" height="1" fill="#c8c8c8" />
<rect x="782" y="229" width="1" height="1" fill="#c8c8c8" />
<rect x="782" y="232" width="1" height="1" fill="#c8c8c8" />
<rect x="782" y="235" width="1" height="1" fill="#c8c8c8" />
<rect x="782" y="238" width="1" height="1" fill="#c8c8c8" />
<rect x="782" y="241" width="1" height="1" fill="#c8c8c8" />
<rect x="782" y="244" width="1" height="1" fill="#c8c8c8" />
<rect x="782" y="247" width="1" height="1" fill="#c8c8c8" />
<rect x="782" y="250" width="1" height="1" fill="#c8c8c8" />
<rect x="782" y="252" width="1" height="1" fill="#c8c8c8" />
<rect x="782" y="255" width="1" height="1" fill="#c8c8c8" />
<rect x="782" y="258" width="1" height="1" fill="#c8c8c8" />
<rect x="782" y="261" width="1" height="1" fill="#c8c8c8" />
<rect x="782" y="264" width="1" height="1" fill="#c8c8c8" />
<rect x="782" y="267" width="1" height="1" fill="#c8c8c8" />
<rect x="782" y="270" width="1" height="1" fill="#c8c8c8" />
<rect x="782" y="273" width="1" height="1" fill="#c8c8c8" />
<rect x="782" y="276" width="1" height="1" fill="#c8c8c8" />
<rect x="782" y="279" width="1" height="1" fill="#c8c8c8" />
<rect x="782" y="282" width="1" height="1" fill="#c8c8c8" />
<rect x="782" y="285" width="1" height="1" fill="#c8c8c8" />
<rect x="782" y="288" width="1" height="1" fill="#c8c8c8" />
<rect x="782" y="291" width="1" height="1" fill="#c8c8c8" />
<rect x="782" y="294" width="1" height="1" fill="#c8c8c8" />
<rect x="782" y="297" width="1" height="1" fill="#c8c8c8" />
<rect x="782" y="300" width="1" height="1" fill="#c8c8c8" />
<rect x="782" y="303" width="1" height="1" fill="#c8c8c8" />
<rect x="782" y="306" width="1" height="1" fill="#c8c8c8" />
<rect x="782" y="308" width="1" height="1" fill="#c8c8c8" />
<rect x="782" y="311" width="1" height="1" fill="#c8c8c8" />
<rect x="782" y="314" width="1" height="1" fill="#c8c8c8" />
<rect x="782" y="317" width="1" height="1" fill="#c8c8c8" />
<rect x="782" y="320" width="1" height="1" fill="#c8c8c8" />
<rect x="782" y="323" width="1" height="1" fill="#c8c8c8" />
<rect x="782" y="326" width="1" height="1" fill="#c8c8c8" />
<rect x="782" y="329" width="1" height="1" fill="#c8c8c8" />
<rect x="782" y="332" width="1" height="1" fill="#c8c8c8" />
<rect x="782" y="335" width="1" height="1" fill="#c8c8c8" />
<rect x="789" y="220" width="1" height="1" fill="#c8c8c8" />
<rect x="789" y="223" width="1" height="1" fill="#c8c8c8" />
<rect x="789" y="226" width="1" height="1" fill="#c8c8c8" />
<rect x="789" y="229" width="1" height="1" fill="#c8c8c8" />
<rect x="789" y="232" width="1" height="1" fill="#c8c8c8" />
<rect x="789" y="235" width="1" height="1" fill="#c8c8c8" />
<rect x="789" y="238" width="1" height="1" fill="#c8c8c8" />
<rect x="789" y="241" width="1" height="1" fill="#c8c8c8" />
<rect x="789" y="244" width="1" height="1" fill="#c8c8c8" />
<rect x="789" y="247" width="1" height="1" fill="#c8c8c8" />
<rect x="789" y="250" width="1" height="1" fill="#c8c8c8" />
<rect x="789" y="252" width="1" height="1" fill="#c8c8c8" />
<rect x="789" y="255" width="1" height="1" fill="#c8c8c8" />
<rect x="789" y="258" width="1" height="1" fill="#c8c8c8" />
<rect x="789" y="261" width="1" height="1" fill="#c8c8c8" />
<rect x="789" y="264" width="1" height="1" fill="#c8c8c8" />
<rect x="789" y="267" width="1" height="1" fill="#c8c8c8" />
<rect x="789" y="270" width="1" height="1" fill="#c8c8c8" />
<rect x="789" y="273" width="1" height="1" fill="#c8c8c8" />
<rect x="789" y="276" width="1" height="1" fill="#c8c8c8" />
<rect x="789" y="279" width="1" height="1" fill="#c8c8c8" />
<rect x="789" y="282" width="1" height="1" fill="#c8c8c8" />
<rect x="789" y="285" width="1" height="1" fill="#c8c8c8" />
<rect x="789" y="288" width="1" height="1" fill="#c8c8c8" />
<rect x="789" y="291" width="1" height="1" fill="#c8c8c8" />
<rect x="789" y="294" width="1" height="1" fill="#c8c8c8" />
<rect x="789" y="297" width="1" height="1" fill="#c8c8c8" />
<rect x="789" y="300" width="1" height="1" fill="#c8c8c8" />
<rect x="789" y="303" width="1" height="1" fill="#c8c8c8" />
<rect x="789" y="306" width="1" height="1" fill="#c8c8c8" />
<rect x="789" y="308" width="1" height="1" fill="#c8c8c8" />
<rect x="789" y="311" width="1" height="1" fill="#c8c8c8" />
<rect x="789" y="314" width="1" height="1" fill="#c8c8c8" />
<rect x="789" y="317" width="1" height="1" fill="#c8c8c8" />
<rect x="789" y="320" width="1" height="1" fill="#c8c8c8" />
<rect x="789" y="323" width="1" height="1" fill="#c8c8c8" />
<rect x="789" y="326" width="1" height="1" fill="#c8c8c8" />
<rect x="789" y="329" width="1" height="1" fill="#c8c8c8" />
<rect x="789" y="332" width="1" height="1" fill="#c8c8c8" />
<rect x="789" y="335" width="1" height="1" fill="#c8c8c8" />
<rect x="794" y="220" width="1" height="1" fill="#c8c8c8" />
<rect x="794" y="223" width="1" height="1" fill="#c8c8c8" />
<rect x="794" y="226" width="1" height="1" fill="#c8c8c8" />
<rect x="794" y="229" width="1" height="1" fill="#c8c8c8" />
<rect x="794" y="232" width="1" height="1" fill="#c8c8c8" />
<rect x="794" y="235" width="1" height="1" fill="#c8c8c8" />
<rect x="794" y="238" width="1" height="1" fill="#c8c8c8" />
<rect x="794" y="241" width="1" height="1" fill="#c8c8c8" />
<rect x="794" y="244" width="1" height="1" fill="#c8c8c8" />
<rect x="794" y="247" width="1" height="1" fill="#c8c8c8" />
<rect x="794" y="250" width="1" height="1" fill="#c8c8c8" />
<rect x="794" y="252" width="1" height="1" fill="#c8c8c8" />
<rect x="794" y="255" width="1" height="1" fill="#c8c8c8" />
<rect x="794" y="258" width="1" height="1" fill="#c8c8c8" />
<rect x="794" y="261" width="1" height="1" fill="#c8c8c8" />
<rect x="794" y="264" width="1" height="1" fill="#c8c8c8" />
<rect x="794" y="267" width="1" height="1" fill="#c8c8c8" />
<rect x="794" y="270" width="1" height="1" fill="#c8c8c8" />
<rect x="794" y="273" width="1" height="1" fill="#c8c8c8" />
<rect x="794" y="276" width="1" height="1" fill="#c8c8c8" />
<rect x="794" y="279" width="1" height="1" fill="#c8c8c8" />
<rect x="794" y="282" width="1" height="1" fill="#c8c8c8" />
<rect x="794" y="285" width="1" height="1" fill="#c8c8c8" />
<rect x="794" y="288" width="1" height="1" fill="#c8c8c8" />
<rect x="794" y="291" width="1" height="1" fill="#c8c8c8" />
<rect x="794" y="294" width="1" height="1" fill="#c8c8c8" />
<rect x="794" y="297" width="1" height="1" fill="#c8c8c8" />
<rect x="794" y="300" width="1" height="1" fill="#c8c8c8" />
<rect x="794" y="303" width="1" height="1" fill="#c8c8c8" />
<rect x="794" y="306" width="1" height="1" fill="#c8c8c8" />
<rect x="794" y="308" width="1" height="1" fill="#c8c8c8" />
<rect x="794" y="311" width="1" height="1" fill="#c8c8c8" />
<rect x="794" y="314" width="1" height="1" fill="#c8c8c8" />
<rect x="794" y="317" width="1" height="1" fill="#c8c8c8" />
<rect x="794" y="320" width="1" height="1" fill="#c8c8c8" />
<rect x="794" y="323" width="1" height="1" fill="#c8c8c8" />
<rect x="794" y="326" width="1" height="1" fill="#c8c8c8" />
<rect x="794" y="329" width="1" height="1" fill="#c8c8c8" />
<rect x="794" y="332" width="1" height="1" fill="#c8c8c8" />
<rect x="794" y="335" width="1" height="1" fill="#c8c8c8" />
<rect x="799" y="220" width="1" height="1" fill="#c8c8c8" />
<rect x="799" y="223" width="1" height="1" fill="#c8c8c8" />
<rect x="799" y="226" width="1" height="1" fill="#c8c8c8" />
<rect x="799" y="229" width="1" height="1" fill="#c8c8c8" />
<rect x="799" y="232" width="1" height="1" fill="#c8c8c8" />
<rect x="799" y="235" width="1" height="1" fill="#c8c8c8" />
<rect x="799" y="238" width="1" height="1" fill="#c8c8c8" />
<rect x="799" y="241" width="1" height="1" fill="#c8c8c8" />
<rect x="799" y="244" width="1" height="1" fill="#c8c8c8" />
<rect x="799" y="247" width="1" height="1" fill="#c8c8c8" />
<rect x="799" y="250" width="1" height="1" fill="#c8c8c8" />
<rect x="799" y="252" width="1" height="1" fill="#c8c8c8" />
<rect x="799" y="255" width="1" height="1" fill="#c8c8c8" />
<rect x="799" y="258" width="1" height="1" fill="#c8c8c8" />
<rect x="799" y="261" width="1" height="1" fill="#c8c8c8" />
<rect x="799" y="264" width="1" height="1" fill="#c8c8c8" />
<rect x="799" y="267" width="1" height="1" fill="#c8c8c8" />
<rect x="799" y="270" width="1" height="1" fill="#c8c8c8" />
<rect x="799" y="273" width="1" height="1" fill="#c8c8c8" />
<rect x="799" y="276" width="1" height="1" fill="#c8c8c8" />
<rect x="799" y="279" width="1" height="1" fill="#c8c8c8" />
<rect x="799" y="282" width="1" height="1" fill="#c8c8c8" />
<rect x="799" y="285" width="1" height="1" fill="#c8c8c8" />
<rect x="799" y="288" width="1" height="1" fill="#c8c8c8" />
<rect x="799" y="291" width="1" height="1" fill="#c8c8c8" />
<rect x="799" y="294" width="1" height="1" fill="#c8c8c8" />
<rect x="799" y="297" width="1" height="1" fill="#c8c8c8" />
<rect x="799" y="300" width="1" height="1" fill="#c8c8c8" />
<rect x="799" y="303" width="1" height="1" fill="#c8c8c8" />
<rect x="799" y="306" width="1" height="1" fill="#c8c8c8" />
<rect x="799" y="308" width="1" height="1" fill="#c8c8c8" />
<rect x="799" y="311" width="1" height="1" fill="#c8c8c8" />
<rect x="799" y="314" width="1" height="1" fill="#c8c8c8" />
<rect x="799" y="317" width="1" height="1" fill="#c8c8c8" />
<rect x="799" y="320" width="1" height="1" fill="#c8c8c8" />
<rect x="799" y="323" width="1" height="1" fill="#c8c8c8" />
<rect x="799" y="326" width="1" height="1" fill="#c8c8c8" />
<rect x="799" y="329" width="1" height="1" fill="#c8c8c8" />
<rect x="799" y="332" width="1" height="1" fill="#c8c8c8" />
<rect x="799" y="335" width="1" height="1" fill="#c8c8c8" />
<rect x="804" y="220" width="1" height="1" fill="#c8c8c8" />
<rect x="804" y="223" width="1" height="1" fill="#c8c8c8" />
<rect x="804" y="226" width="1" height="1" fill="#c8c8c8" />
<rect x="804" y="229" width="1" height="1" fill="#c8c8c8" />
<rect x="804" y="232" width="1" height="1" fill="#c8c8c8" />
<rect x="804" y="235" width="1" height="1" fill="#c8c8c8" />
<rect x="804" y="238" width="1" height="1" fill="#c8c8c8" />
<rect x="804" y="241" width="1" height="1" fill="#c8c8c8" />
<rect x="804" y="244" width="1" height="1" fill="#c8c8c8" />
<rect x="804" y="247" width="1" height="1" fill="#c8c8c8" />
<rect x="804" y="250" width="1" height="1" fill="#c8c8c8" />
<rect x="804" y="252" width="1" height="1" fill="#c8c8c8" />
<rect x="804" y="255" width="1" height="1" fill="#c8c8c8" />
<rect x="804" y="258" width="1" height="1" fill="#c8c8c8" />
<rect x="804" y="261" width="1" height="1" fill="#c8c8c8" />
<rect x="804" y="264" width="1" height="1" fill="#c8c8c8" />
<rect x="804" y="267" width="1" height="1" fill="#c8c8c8" />
<rect x="804" y="270" width="1" height="1" fill="#c8c8c8" />
<rect x="804" y="273" width="1" height="1" fill="#c8c8c8" />
<rect x="804" y="276" width="1" height="1" fill="#c8c8c8" />
<rect x="804" y="279" width="1" height="1" fill="#c8c8c8" />
<rect x="804" y="282" width="1" height="1" fill="#c8c8c8" />
<rect x="804" y="285" width="1" height="1" fill="#c8c8c8" />
<rect x="804" y="288" width="1" height="1" fill="#c8c8c8" />
<rect x="804" y="291" width="1" height="1" fill="#c8c8c8" />
<rect x="804" y="294" width="1" height="1" fill="#c8c8c8" />
<rect x="804" y="297" width="1" height="1" fill="#c8c8c8" />
<rect x="804" y="300" width="1" height="1" fill="#c8c8c8" />
<rect x="804" y="303" width="1" height="1" fill="#c8c8c8" />
<rect x="804" y="306" width="1" height="1" fill="#c8c8c8" />
<rect x="804" y="308" width="1" height="1" fill="#c8c8c8" />
<rect x="804" y="311" width="1" height="1" fill="#c8c8c8" />
<rect x="804" y="314" width="1" height="1" fill="#c8c8c8" />
<rect x="804" y="317" width="1" height="1" fill="#c8c8c8" />
<rect x="804" y="320" width="1" height="1" fill="#c8c8c8" />
<rect x="804" y="323" width="1" height="1" fill="#c8c8c8" />
<rect x="804" y="326" width="1" height="1" fill="#c8c8c8" />
<rect x="804" y="329" width="1" height="1" fill="#c8c8c8" />
<rect x="804" y="332" width="1" height="1" fill="#c8c8c8" />
<rect x="804" y="335" width="1" height="1" fill="#c8c8c8" />
<rect x="833" y="220" width="1" height="1" fill="#c8c8c8" />
<rect x="833" y="223" width="1" height="1" fill="#c8c8c8" />
<rect x="833" y="226" width="1" height="1" fill="#c8c8c8" />
<rect x="833" y="229" width="1" height="1" fill="#c8c8c8" />
<rect x="833" y="232" width="1" height="1" fill="#c8c8c8" />
<rect x="833" y="235" width="1" height="1" fill="#c8c8c8" />
<rect x="833" y="238" width="1" height="1" fill="#c8c8c8" />
<rect x="833" y="241" width="1" height="1" fill="#c8c8c8" />
<rect x="833" y="244" width="1" height="1" fill="#c8c8c8" />
<rect x="833" y="247" width="1" height="1" fill="#c8c8c8" />
<rect x="833" y="250" width="1" height="1" fill="#c8c8c8" />
<rect x="833" y="252" width="1" height="1" fill="#c8c8c8" />
<rect x="833" y="255" width="1" height="1" fill="#c8c8c8" />
<rect x="833" y="258" width="1" height="1" fill="#c8c8c8" />
<rect x="833" y="261" width="1" height="1" fill="#c8c8c8" />
<rect x="833" y="264" width="1" height="1" fill="#c8c8c8" />
<rect x="833" y="267" width="1" height="1" fill="#c8c8c8" />
<rect x="833" y="270" width="1" height="1" fill="#c8c8c8" />
<rect x="833" y="273" width="1" height="1" fill="#c8c8c8" />
<rect x="833" y="276" width="1" height="1" fill="#c8c8c8" />
<rect x="833" y="279" width="1" height="1" fill="#c8c8c8" />
<rect x="833" y="282" width="1" height="1" fill="#c8c8c8" />
<rect x="833" y="285" width="1" height="1" fill="#c8c8c8" />
<rect x="833" y="288" width="1" height="1" fill="#c8c8c8" />
<rect x="833" y="291" width="1" height="1" fill="#c8c8c8" />
<rect x="833" y="294" width="1" height="1" fill="#c8c8c8" />
<rect x="833" y="297" width="1" height="1" fill="#c8c8c8" />
<rect x="833" y="300" width="1" height="1" fill="#c8c8c8" />
<rect x="833" y="303" width="1" height="1" fill="#c8c8c8" />
<rect x="833" y="306" width="1" height="1" fill="#c8c8c8" />
<rect x="833" y="308" width="1" height="1" fill="#c8c8c8" />
<rect x="833" y="311" width="1" height="1" fill="#c8c8c8" />
<rect x="833" y="314" width="1" height="1" fill="#c8c8c8" />
<rect x="833" y="317" width="1" height="1" fill="#c8c8c8" />
<rect x="833" y="320" width="1" height="1" fill="#c8c8c8" />
<rect x="833" y="323" width="1" height="1" fill="#c8c8c8" />
<rect x="833" y="326" width="1" height="1" fill="#c8c8c8" />
<rect x="833" y="329" width="1" height="1" fill="#c8c8c8" />
<rect x="833" y="332" width="1" height="1" fill="#c8c8c8" />
<rect x="833" y="335" width="1" height="1" fill="#c8c8c8" />
<rect x="512" y="235" width="1" height="1" fill="#c8c8c8" />
<rect x="516" y="235" width="1" height="1" fill="#c8c8c8" />
<rect x="519" y="235" width="1" height="1" fill="#c8c8c8" />
<rect x="522" y="235" width="1" height="1" fill="#c8c8c8" />
<rect x="525" y="235" width="1" height="1" fill="#c8c8c8" />
<rect x="528" y="235" width="1" height="1" fill="#c8c8c8" />
<rect x="531" y="235" width="1" height="1" fill="#c8c8c8" />
<rect x="533" y="235" width="1" height="1" fill="#c8c8c8" />
<rect x="535" y="235" width="1" height="1" fill="#c8c8c8" />
<rect x="538" y="235" width="1" height="1" fill="#c8c8c8" />
<rect x="540" y="235" width="1" height="1" fill="#c8c8c8" />
<rect x="542" y="235" width="1" height="1" fill="#c8c8c8" />
<rect x="544" y="235" width="1" height="1" fill="#c8c8c8" />
<rect x="545" y="235" width="1" height="1" fill="#c8c8c8" />
<rect x="547" y="235" width="1" height="1" fill="#c8c8c8" />
<rect x="549" y="235" width="1" height="1" fill="#c8c8c8" />
<rect x="551" y="235" width="1" height="1" fill="#c8c8c8" />
<rect x="552" y="235" width="1" height="1" fill="#c8c8c8" />
<rect x="554" y="235" width="1" height="1" fill="#c8c8c8" />
<rect x="555" y="235" width="1" height="1" fill="#c8c8c8" />
<rect x="556" y="235" width="1" height="1" fill="#c8c8c8" />
<rect x="558" y="235" width="1" height="1" fill="#c8c8c8" />
<rect x="559" y="235" width="1" height="1" fill="#c8c8c8" />
<rect x="560" y="235" width="1" height="1" fill="#c8c8c8" />
<rect x="562" y="235" width="1" height="1" fill="#c8c8c8" />
<rect x="563" y="235" width="1" height="1" fill="#c8c8c8" />
<rect x="564" y="235" width="1" height="1" fill="#c8c8c8" />
<rect x="565" y="235" width="1" height="1" fill="#c8c8c8" />
<rect x="566" y="235" width="1" height="1" fill="#c8c8c8" />
<rect x="567" y="235" width="1" height="1" fill="#c8c8c8" />
<rect x="568" y="235" width="1" height="1" fill="#c8c8c8" />
<rect x="569" y="235" width="1" height="1" fill="#c8c8c8" />
<rect x="570" y="235" width="1" height="1" fill="#c8c8c8" />
<rect x="571" y="235" width="1" height="1" fill="#c8c8c8" />
<rect x="572" y="235" width="1" height="1" fill="#c8c8c8" />
<rect x="573" y="235" width="1" height="1" fill="#c8c8c8" />
<rect x="574" y="235" width="1" height="1" fill="#c8c8c8" />
<rect x="575" y="235" width="1" height="1" fill="#c8c8c8" />
<rect x="576" y="235" width="1" height="1" fill="#c8c8c8" />
<rect x="577" y="235" width="1" height="1" fill="#c8c8c8" />
<rect x="578" y="235" width="1" height="1" fill="#c8c8c8" />
<rect x="579" y="235" width="1" height="1" fill="#c8c8c8" />
<rect x="580" y="235" width="1" height="1" fill="#c8c8c8" />
<rect x="581" y="235" width="1" height="1" fill="#c8c8c8" />
<rect x="582" y="235" width="1" height="1" fill="#c8c8c8" />
<rect x="583" y="235" width="1" height="1" fill="#c8c8c8" />
<rect x="584" y="235" width="1" height="1" fill="#c8c8c8" />
<rect x="585" y="235" width="1" height="1" fill="#c8c8c8" />
<rect x="586" y="235" width="1" height="1" fill="#c8c8c8" />
<rect x="587" y="235" width="1" height="1" fill="#c8c8c8" />
<rect x="588" y="235" width="1" height="1" fill="#c8c8c8" />
<rect x="589" y="235" width="1" height="1" fill="#c8c8c8" />
<rect x="590" y="235" width="1" height="1" fill="#c8c8c8" />
<rect x="591" y="235" width="1" height="1" fill="#c8c8c8" />
<rect x="592" y="235" width="1" height="1" fill="#c8c8c8" />
<rect x="593" y="235" width="1" height="1" fill="#c8c8c8" />
<rect x="594" y="235" width="1" height="1" fill="#c8c8c8" />
<rect x="595" y="235" width="1" height="1" fill="#c8c8c8" />
<rect x="596" y="235" width="1" height="1" fill="#c8c8c8" />
<rect x="597" y="235" width="1" height="1" fill="#c8c8c8" />
<rect x="598" y="235" width="1" height="1" fill="#c8c8c8" />
<rect x="599" y="235" width="1" height="1" fill="#c8c8c8" />
<rect x="600" y="235" width="1" height="1" fill="#c8c8c8" />
<rect x="601" y="235" width="1" height="1" fill="#c8c8c8" />
<rect x="602" y="235" width="1" height="1" fill="#c8c8c8" />
<rect x="603" y="235" width="1" height="1" fill="#c8c8c8" />
<rect x="604" y="235" width="1" height="1" fill="#c8c8c8" />
<rect x="605" y="235" width="1" height="1" fill="#c8c8c8" />
<rect x="606" y="235" width="1" height="1" fill="#c8c8c8" />
<rect x="607" y="235" width="1" height="1" fill="#c8c8c8" />
<rect x="611" y="235" width="1" height="1" fill="#c8c8c8" />
<rect x="614" y="235" width="1" height="1" fill="#c8c8c8" />
<rect x="618" y="235" width="1" height="1" fill="#c8c8c8" />
<rect x="621" y="235" width="1" height="1" fill="#c8c8c8" />
<rect x="624" y="235" width="1" height="1" fill="#c8c8c8" />
<rect x="627" y="235" width="1" height="1" fill="#c8c8c8" />
<rect x="629" y="235" width="1" height="1" fill="#c8c8c8" />
<rect x="632" y="235" width="1" height="1" fill="#c8c8c8" />
<rect x="634" y="235" width="1" height="1" fill="#c8c8c8" />
<rect x="636" y="235" width="1" height="1" fill="#c8c8c8" />
<rect x="638" y="235" width="1" height="1" fill="#c8c8c8" />
<rect x="640" y="235" width="1" height="1" fill="#c8c8c8" />
<rect x="642" y="235" width="1" height="1" fill="#c8c8c8" />
<rect x="644" y="235" width="1" height="1" fill="#c8c8c8" />
<rect x="646" y="235" width="1" height="1" fill="#c8c8c8" />
<rect x="648" y="235" width="1" height="1" fill="#c8c8c8" />
<rect x="649" y="235" width="1" height="1" fill="#c8c8c8" />
<rect x="651" y="235" width="1" height="1" fill="#c8c8c8" />
<rect x="652" y="235" width="1" height="1" fill="#c8c8c8" />
<rect x="654" y="235" width="1" height="1" fill="#c8c8c8" />
<rect x="655" y="235" width="1" height="1" fill="#c8c8c8" />
<rect x="656" y="235" width="1" height="1" fill="#c8c8c8" />
<rect x="658" y="235" width="1" height="1" fill="#c8c8c8" />
<rect x="659" y="235" width="1" height="1" fill="#c8c8c8" />
<rect x="660" y="235" width="1" height="1" fill="#c8c8c8" />
<rect x="661" y="235" width="1" height="1" fill="#c8c8c8" />
<rect x="663" y="235" width="1" height="1" fill="#c8c8c8" />
<rect x="664" y="235" width="1" height="1" fill="#c8c8c8" />
<rect x="665" y="235" width="1" height="1" fill="#c8c8c8" />
<rect x="666" y="235" width="1" height="1" fill="#c8c8c8" />
<rect x="667" y="235" width="1" height="1" fill="#c8c8c8" />
<rect x="668" y="235" width="1" height="1" fill="#c8c8c8" />
<rect x="669" y="235" width="1" height="1" fill="#c8c8c8" />
<rect x="670" y="235" width="1" height="1" fill="#c8c8c8" />
<rect x="671" y="235" width="1" height="1" fill="#c8c8c8" />
<rect x="672" y="235" width="1" height="1" fill="#c8c8c8" />
<rect x="673" y="235" width="1" height="1" fill="#c8c8c8" />
<rect x="674" y="235" width="1" height="1" fill="#c8c8c8" />
<rect x="675" y="235" width="1" height="1" fill="#c8c8c8" />
<rect x="676" y="235" width="1" height="1" fill="#c8c8c8" />
<rect x="677" y="235" width="1" height="1" fill="#c8c8c8" />
<rect x="678" y="235" width="1" height="1" fill="#c8c8c8" />
<rect x="679" y="235" width="1" height="1" fill="#c8c8c8" />
<rect x="680" y="235" width="1" height="1" fill="#c8c8c8" />
<rect x="681" y="235" width="1" height="1" fill="#c8c8c8" />
<rect x="682" y="235" width="1" height="1" fill="#c8c8c8" />
<rect x="683" y="235" width="1" height="1" fill="#c8c8c8" />
<rect x="684" y="235" width="1" height="1" fill="#c8c8c8" />
<rect x="685" y="235" width="1" height="1" fill="#c8c8c8" />
<rect x="686" y="235" width="1" height="1" fill="#c8c8c8" />
<rect x="687" y="235" width="1" height="1" fill="#c8c8c8" />
<rect x="688" y="235" width="1" height="1" fill="#c8c8c8" />
<rect x="689" y="235" width="1" height="1" fill="#c8c8c8" />
<rect x="690" y="235" width="1" height="1" fill="#c8c8c8" />
<rect x="691" y="235" width="1" height="1" fill="#c8c8c8" />
<rect x="692" y="235" width="1" height="1" fill="#c8c8c8" />
<rect x="693" y="235" width="1" height="1" fill="#c8c8c8" />
<rect x="694" y="235" width="1" height="1" fill="#c8c8c8" />
<rect x="695" y="235" width="1" height="1" fill="#c8c8c8" />
<rect x="696" y="235" width="1" height="1" fill="#c8c8c8" />
<rect x="697" y="235" width="1" height="1" fill="#c8c8c8" />
<rect x="698" y="235" width="1" height="1" fill="#c8c8c8" />
<rect x="699" y="235" width="1" height="1" fill="#c8c8c8" />
<rect x="700" y="235" width="1" height="1" fill="#c8c8c8" />
<rect x="701" y="235" width="1" height="1" fill="#c8c8c8" />
<rect x="702" y="235" width="1" height="1" fill="#c8c8c8" />
<rect x="703" y="235" width="1" height="1" fill="#c8c8c8" />
<rect x="704" y="235" width="1" height="1" fill="#c8c8c8" />
<rect x="705" y="235" width="1" height="1" fill="#c8c8c8" />
<rect x="709" y="235" width="1" height="1" fill="#c8c8c8" />
<rect x="713" y="235" width="1" height="1" fill="#c8c8c8" />
<rect x="716" y="235" width="1" height="1" fill="#c8c8c8" />
<rect x="720" y="235" width="1" height="1" fill="#c8c8c8" />
<rect x="723" y="235" width="1" height="1" fill="#c8c8c8" />
<rect x="725" y="235" width="1" height="1" fill="#c8c8c8" />
<rect x="728" y="235" width="1" height="1" fill="#c8c8c8" />
<rect x="730" y="235" width="1" height="1" fill="#c8c8c8" />
<rect x="733" y="235" width="1" height="1" fill="#c8c8c8" />
<rect x="735" y="235" width="1" height="1" fill="#c8c8c8" />
<rect x="737" y="235" width="1" height="1" fill="#c8c8c8" />
<rect x="739" y="235" width="1" height="1" fill="#c8c8c8" />
<rect x="741" y="235" width="1" height="1" fill="#c8c8c8" />
<rect x="743" y="235" width="1" height="1" fill="#c8c8c8" />
<rect x="744" y="235" width="1" height="1" fill="#c8c8c8" />
<rect x="746" y="235" width="1" height="1" fill="#c8c8c8" />
<rect x="748" y="235" width="1" height="1" fill="#c8c8c8" />
<rect x="749" y="235" width="1" height="1" fill="#c8c8c8" />
<rect x="751" y="235" width="1" height="1" fill="#c8c8c8" />
<rect x="752" y="235" width="1" height="1" fill="#c8c8c8" />
<rect x="754" y="235" width="1" height="1" fill="#c8c8c8" />
<rect x="755" y="235" width="1" height="1" fill="#c8c8c8" />
<rect x="756" y="235" width="1" height="1" fill="#c8c8c8" />
<rect x="758" y="235" width="1" height="1" fill="#c8c8c8" />
<rect x="759" y="235" width="1" height="1" fill="#c8c8c8" />
<rect x="760" y="235" width="1" height="1" fill="#c8c8c8" />
<rect x="761" y="235" width="1" height="1" fill="#c8c8c8" />
<rect x="762" y="235" width="1" height="1" fill="#c8c8c8" />
<rect x="763" y="235" width="1" height="1" fill="#c8c8c8" />
<rect x="765" y="235" width="1" height="1" fill="#c8c8c8" />
<rect x="766" y="235" width="1" height="1" fill="#c8c8c8" />
<rect x="767" y="235" width="1" height="1" fill="#c8c8c8" />
<rect x="768" y="235" width="1" height="1" fill="#c8c8c8" />
<rect x="769" y="235" width="1" height="1" fill="#c8c8c8" />
<rect x="770" y="235" width="1" height="1" fill="#c8c8c8" />
<rect x="771" y="235" width="1" height="1" fill="#c8c8c8" />
<rect x="772" y="235" width="1" height="1" fill="#c8c8c8" />
<rect x="773" y="235" width="1" height="1" fill="#c8c8c8" />
<rect x="774" y="235" width="1" height="1" fill="#c8c8c8" />
<rect x="775" y="235" width="1" height="1" fill="#c8c8c8" />
<rect x="776" y="235" width="1" height="1" fill="#c8c8c8" />
<rect x="777" y="235" width="1" height="1" fill="#c8c8c8" />
<rect x="778" y="235" width="1" height="1" fill="#c8c8c8" />
<rect x="779" y="235" width="1" height="1" fill="#c8c8c8" />
<rect x="780" y="235" width="1" height="1" fill="#c8c8c8" />
<rect x="781" y="235" width="1" height="1" fill="#c8c8c8" />
<rect x="782" y="235" width="1" height="1" fill="#c8c8c8" />
<rect x="783" y="235" width="1" height="1" fill="#c8c8c8" />
<rect x="784" y="235" width="1" height="1" fill="#c8c8c8" />
<rect x="785" y="235" width="1" height="1" fill="#c8c8c8" />
<rect x="786" y="235" width="1" height="1" fill="#c8c8c8" />
<rect x="787" y="235" width="1" height="1" fill="#c8c8c8" />
<rect x="788" y="235" width="1" height="1" fill="#c8c8c8" />
<rect x="789" y="235" width="1" height="1" fill="#c8c8c8" />
<rect x="790" y="235" width="1" height="1" fill="#c8c8c8" />
<rect x="791" y="235" width="1" height="1" fill="#c8c8c8" />
<rect x="792" y="235" width="1" height="1" fill="#c8c8c8" />
<rect x="793" y="235" width="1" height="1" fill="#c8c8c8" />
<rect x="794" y="235" width="1" height="1" fill="#c8c8c8" />
<rect x="795" y="235" width="1" height="1" fill="#c8c8c8" />
<rect x="796" y="235" width="1" height="1" fill="#c8c8c8" />
<rect x="797" y="235" width="1" height="1" fill="#c8c8c8" />
<rect x="798" y="235" width="1" height="1" fill="#c8c8c8" />
<rect x="799" y="235" width="1" height="1" fill="#c8c8c8" />
<rect x="800" y="235" width="1" height="1" fill="#c8c8c8" />
<rect x="801" y="235" width="1" height="1" fill="#c8c8c8" />
<rect x="802" y="235" width="1" height="1" fill="#c8c8c8" />
<rect x="803" y="235" width="1" height="1" fill="#c8c8c8" />
<rect x="804" y="235" width="1" height="1" fill="#c8c8c8" />
<rect x="808" y="235" width="1" height="1" fill="#c8c8c8" />
<rect x="812" y="235" width="1" height="1" fill="#c8c8c8" />
<rect x="815" y="235" width="1" height="1" fill="#c8c8c8" />
<rect x="818" y="235" width="1" height="1" fill="#c8c8c8" />
<rect x="821" y="235" width="1" height="1" fill="#c8c8c8" />
<rect x="824" y="235" width="1" height="1" fill="#c8c8c8" />
<rect x="827" y="235" width="1" height="1" fill="#c8c8c8" />
<rect x="829" y="235" width="1" height="1" fill="#c8c8c8" />
<rect x="831" y="235" width="1" height="1" fill="#c8c8c8" />
<rect x="833" y="235" width="1" height="1" fill="#c8c8c8" />
<rect x="836" y="235" width="1" height="1" fill="#c8c8c8" />
<rect x="838" y="235" width="1" height="1" fill="#c8c8c8" />
<rect x="839" y="235" width="1" height="1" fill="#c8c8c8" />
<rect x="841" y="235" width="1" height="1" fill="#c8c8c8" />
<rect x="843" y="235" width="1" height="1" fill="#c8c8c8" />
<rect x="512" y="250" width="1" height="1" fill="#c8c8c8" />
<rect x="516" y="250" width="1" height="1" fill="#c8c8c8" />
<rect x="519" y="250" width="1" height="1" fill="#c8c8c8" />
<rect x="522" y="250" width="1" height="1" fill="#c8c8c8" />
<rect x="525" y="250" width="1" height="1" fill="#c8c8c8" />
<rect x="528" y="250" width="1" height="1" fill="#c8c8c8" />
<rect x="531" y="250" width="1" height="1" fill="#c8c8c8" />
<rect x="533" y="250" width="1" height="1" fill="#c8c8c8" />
<rect x="535" y="250" width="1" height="1" fill="#c8c8c8" />
<rect x="538" y="250" width="1" height="1" fill="#c8c8c8" />
<rect x="540" y="250" width="1" height="1" fill="#c8c8c8" />
<rect x="542" y="250" width="1" height="1" fill="#c8c8c8" />
<rect x="544" y="250" width="1" height="1" fill="#c8c8c8" />
<rect x="545" y="250" width="1" height="1" fill="#c8c8c8" />
<rect x="547" y="250" width="1" height="1" fill="#c8c8c8" />
<rect x="549" y="250" width="1" height="1" fill="#c8c8c8" />
<rect x="551" y="250" width="1" height="1" fill="#c8c8c8" />
<rect x="552" y="250" width="1" height="1" fill="#c8c8c8" />
<rect x="554" y="250" width="1" height="1" fill="#c8c8c8" />
<rect x="555" y="250" width="1" height="1" fill="#c8c8c8" />
<rect x="556" y="250" width="1" height="1" fill="#c8c8c8" />
<rect x="558" y="250" width="1" height="1" fill="#c8c8c8" />
<rect x="559" y="250" width="1" height="1" fill="#c8c8c8" />
<rect x="560" y="250" width="1" height="1" fill="#c8c8c8" />
<rect x="562" y="250" width="1" height="1" fill="#c8c8c8" />
<rect x="563" y="250" width="1" height="1" fill="#c8c8c8" />
<rect x="564" y="250" width="1" height="1" fill="#c8c8c8" />
<rect x="565" y="250" width="1" height="1" fill="#c8c8c8" />
<rect x="566" y="250" width="1" height="1" fill="#c8c8c8" />
<rect x="567" y="250" width="1" height="1" fill="#c8c8c8" />
<rect x="568" y="250" width="1" height="1" fill="#c8c8c8" />
<rect x="569" y="250" width="1" height="1" fill="#c8c8c8" />
<rect x="570" y="250" width="1" height="1" fill="#c8c8c8" />
<rect x="571" y="250" width="1" height="1" fill="#c8c8c8" />
<rect x="572" y="250" width="1" height="1" fill="#c8c8c8" />
<rect x="573" y="250" width="1" height="1" fill="#c8c8c8" />
<rect x="574" y="250" width="1" height="1" fill="#c8c8c8" />
<rect x="575" y="250" width="1" height="1" fill="#c8c8c8" />
<rect x="576" y="250" width="1" height="1" fill="#c8c8c8" />
<rect x="577" y="250" width="1" height="1" fill="#c8c8c8" />
<rect x="578" y="250" width="1" height="1" fill="#c8c8c8" />
<rect x="579" y="250" width="1" height="1" fill="#c8c8c8" />
<rect x="580" y="250" width="1" height="1" fill="#c8c8c8" />
<rect x="581" y="250" width="1" height="1" fill="#c8c8c8" />
<rect x="582" y="250" width="1" height="1" fill="#c8c8c8" />
<rect x="583" y="250" width="1" height="1" fill="#c8c8c8" />
<rect x="584" y="250" width="1" height="1" fill="#c8c8c8" />
<rect x="585" y="250" width="1" height="1" fill="#c8c8c8" />
<rect x="586" y="250" width="1" height="1" fill="#c8c8c8" />
<rect x="587" y="250" width="1" height="1" fill="#c8c8c8" />
<rect x="588" y="250" width="1" height="1" fill="#c8c8c8" />
<rect x="589" y="250" width="1" height="1" fill="#c8c8c8" />
<rect x="590" y="250" width="1" height="1" fill="#c8c8c8" />
<rect x="591" y="250" width="1" height="1" fill="#c8c8c8" />
<rect x="592" y="250" width="1" height="1" fill="#c8c8c8" />
<rect x="593" y="250" width="1" height="1" fill="#c8c8c8" />
<rect x="594" y="250" width="1" height="1" fill="#c8c8c8" />
<rect x="595" y="250" width="1" height="1" fill="#c8c8c8" />
<rect x="596" y="250" width="1" height="1" fill="#c8c8c8" />
<rect x="597" y="250" width="1" height="1" fill="#c8c8c8" />
<rect x="598" y="250" width="1" height="1" fill="#c8c8c8" />
<rect x="599" y="250" width="1" height="1" fill="#c8c8c8" />
<rect x="600" y="250" width="1" height="1" fill="#c8c8c8" />
<rect x="601" y="250" width="1" height="1" fill="#c8c8c8" />
<rect x="602" y="250" width="1" height="1" fill="#c8c8c8" />
<rect x="603" y="250" width="1" height="1" fill="#c8c8c8" />
<rect x="604" y="250" width="1" height="1" fill="#c8c8c8" />
<rect x="605" y="250" width="1" height="1" fill="#c8c8c8" />
<rect x="606" y="250" width="1" height="1" fill="#c8c8c8" />
<rect x="607" y="250" width="1" height="1" fill="#c8c8c8" />
<rect x="611" y="250" width="1" height="1" fill="#c8c8c8" />
<rect x="614" y="250" width="1" height="1" fill="#c8c8c8" />
<rect x="618" y="250" width="1" height="1" fill="#c8c8c8" />
<rect x="621" y="250" width="1" height="1" fill="#c8c8c8" />
<rect x="624" y="250" width="1" height="1" fill="#c8c8c8" />
<rect x="627" y="250" width="1" height="1" fill="#c8c8c8" />
<rect x="629" y="250" width="1" height="1" fill="#c8c8c8" />
<rect x="632" y="250" width="1" height="1" fill="#c8c8c8" />
<rect x="634" y="250" width="1" height="1" fill="#c8c8c8" />
<rect x="636" y="250" width="1" height="1" fill="#c8c8c8" />
<rect x="638" y="250" width="1" height="1" fill="#c8c8c8" />
<rect x="640" y="250" width="1" height="1" fill="#c8c8c8" />
<rect x="642" y="250" width="1" height="1" fill="#c8c8c8" />
<rect x="644" y="250" width="1" height="1" fill="#c8c8c8" />
<rect x="646" y="250" width="1" height="1" fill="#c8c8c8" />
<rect x="648" y="250" width="1" height="1" fill="#c8c8c8" />
<rect x="649" y="250" width="1" height="1" fill="#c8c8c8" />
<rect x="651" y="250" width="1" height="1" fill="#c8c8c8" />
<rect x="652" y="250" width="1" height="1" fill="#c8c8c8" />
<rect x="654" y="250" width="1" height="1" fill="#c8c8c8" />
<rect x="655" y="250" width="1" height="1" fill="#c8c8c8" />
<rect x="656" y="250" width="1" height="1" fill="#c8c8c8" />
<rect x="658" y="250" width="1" height="1" fill="#c8c8c8" />
<rect x="659" y="250" width="1" height="1" fill="#c8c8c8" />
<rect x="660" y="250" width="1" height="1" fill="#c8c8c8" />
<rect x="661" y="250" width="1" height="1" fill="#c8c8c8" />
<rect x="663" y="250" width="1" height="1" fill="#c8c8c8" />
<rect x="664" y="250" width="1" height="1" fill="#c8c8c8" />
<rect x="665" y="250" width="1" height="1" fill="#c8c8c8" />
<rect x="666" y="250" width="1" height="1" fill="#c8c8c8" />
<rect x="667" y="250" width="1" height="1" fill="#c8c8c8" />
<rect x="668" y="250" width="1" height="1" fill="#c8c8c8" />
<rect x="669" y="250" width="1" height="1" fill="#c8c8c8" />
<rect x="670" y="250" width="1" height="1" fill="#c8c8c8" />
<rect x="671" y="250" width="1" height="1" fill="#c8c8c8" />
<rect x="672" y="250" width="1" height="1" fill="#c8c8c8" />
<rect x="673" y="250" width="1" height="1" fill="#c8c8c8" />
<rect x="674" y="250" width="1" height="1" fill="#c8c8c8" />
<rect x="675" y="250" width="1" height="1" fill="#c8c8c8" />
<rect x="676" y="250" width="1" height="1" fill="#c8c8c8" />
<rect x="677" y="250" width="1" height="1" fill="#c8c8c8" />
<rect x="678" y="250" width="1" height="1" fill="#c8c8c8" />
<rect x="679" y="250" width="1" height="1" fill="#c8c8c8" />
<rect x="680" y="250" width="1" height="1" fill="#c8c8c8" />
<rect x="681" y="250" width="1" height="1" fill="#c8c8c8" />
<rect x="682" y="250" width="1" height="1" fill="#c8c8c8" />
<rect x="683" y="250" width="1" height="1" fill="#c8c8c8" />
<rect x="684" y="250" width="1" height="1" fill="#c8c8c8" />
<rect x="685" y="250" width="1" height="1" fill="#c8c8c8" />
<rect x="686" y="250" width="1" height="1" fill="#c8c8c8" />
<rect x="687" y="250" width="1" height="1" fill="#c8c8c8" />
<rect x="688" y="250" width="1" height="1" fill="#c8c8c8" />
<rect x="689" y="250" width="1" height="1" fill="#c8c8c8" />
<rect x="690" y="250" width="1" height="1" fill="#c8c8c8" />
<rect x="691" y="250" width="1" height="1" fill="#c8c8c8" />
<rect x="692" y="250" width="1" height="1" fill="#c8c8c8" />
<rect x="693" y="250" width="1" height="1" fill="#c8c8c8" />
<rect x="694" y="250" width="1" height="1" fill="#c8c8c8" />
<rect x="695" y="250" width="1" height="1" fill="#c8c8c8" />
<rect x="696" y="250" width="1" height="1" fill="#c8c8c8" />
<rect x="697" y="250" width="1" height="1" fill="#c8c8c8" />
<rect x="698" y="250" width="1" height="1" fill="#c8c8c8" />
<rect x="699" y="250" width="1" height="1" fill="#c8c8c8" />
<rect x="700" y="250" width="1" height="1" fill="#c8c8c8" />
<rect x="701" y="250" width="1" height="1" fill="#c8c8c8" />
<rect x="702" y="250" width="1" height="1" fill="#c8c8c8" />
<rect x="703" y="250" width="1" height="1" fill="#c8c8c8" />
<rect x="704" y="250" width="1" height="1" fill="#c8c8c8" />
<rect x="705" y="250" width="1" height="1" fill="#c8c8c8" />
<rect x="709" y="250" width="1" height="1" fill="#c8c8c8" />
<rect x="713" y="250" width="1" height="1" fill="#c8c8c8" />
<rect x="716" y="250" width="1" height="1" fill="#c8c8c8" />
<rect x="720" y="250" width="1" height="1" fill="#c8c8c8" />
<rect x="723" y="250" width="1" height="1" fill="#c8c8c8" />
<rect x="725" y="250" width="1" height="1" fill="#c8c8c8" />
<rect x="728" y="250" width="1" height="1" fill="#c8c8c8" />
<rect x="730" y="250" width="1" height="1" fill="#c8c8c8" />
<rect x="733" y="250" width="1" height="1" fill="#c8c8c8" />
<rect x="735" y="250" width="1" height="1" fill="#c8c8c8" />
<rect x="737" y="250" width="1" height="1" fill="#c8c8c8" />
<rect x="739" y="250" width="1" height="1" fill="#c8c8c8" />
<rect x="741" y="250" width="1" height="1" fill="#c8c8c8" />
<rect x="743" y="250" width="1" height="1" fill="#c8c8c8" />
<rect x="744" y="250" width="1" height="1" fill="#c8c8c8" />
<rect x="746" y="250" width="1" height="1" fill="#c8c8c8" />
<rect x="748" y="250" width="1" height="1" fill="#c8c8c8" />
<rect x="749" y="250" width="1" height="1" fill="#c8c8c8" />
<rect x="751" y="250" width="1" height="1" fill="#c8c8c8" />
<rect x="752" y="250" width="1" height="1" fill="#c8c8c8" />
<rect x="754" y="250" width="1" height="1" fill="#c8c8c8" />
<rect x="755" y="250" width="1" height="1" fill="#c8c8c8" />
<rect x="756" y="250" width="1" height="1" fill="#c8c8c8" />
<rect x="758" y="250" width="1" height="1" fill="#c8c8c8" />
<rect x="759" y="250" width="1" height="1" fill="#c8c8c8" />
<rect x="760" y="250" width="1" height="1" fill="#c8c8c8" />
<rect x="761" y="250" width="1" height="1" fill="#c8c8c8" />
<rect x="762" y="250" width="1" height="1" fill="#c8c8c8" />
<rect x="763" y="250" width="1" height="1" fill="#c8c8c8" />
<rect x="765" y="250" width="1" height="1" fill="#c8c8c8" />
<rect x="766" y="250" width="1" height="1" fill="#c8c8c8" />
<rect x="767" y="250" width="1" height="1" fill="#c8c8c8" />
<rect x="768" y="250" width="1" height="1" fill="#c8c8c8" />
<rect x="769" y="250" width="1" height="1" fill="#c8c8c8" />
<rect x="770" y="250" width="1" height="1" fill="#c8c8c8" />
<rect x="771" y="250" width="1" height="1" fill="#c8c8c8" />
<rect x="772" y="250" width="1" height="1" fill="#c8c8c8" />
<rect x="773" y="250" width="1" height="1" fill="#c8c8c8" />
<rect x="774" y="250" width="1" height="1" fill="#c8c8c8" />
<rect x="775" y="250" width="1" height="1" fill="#c8c8c8" />
<rect x="776" y="250" width="1" height="1" fill="#c8c8c8" />
<rect x="777" y="250" width="1" height="1" fill="#c8c8c8" />
<rect x="778" y="250" width="1" height="1" fill="#c8c8c8" />
<rect x="779" y="250" width="1" height="1" fill="#c8c8c8" />
<rect x="780" y="250" width="1" height="1" fill="#c8c8c8" />
<rect x="781" y="250" width="1" height="1" fill="#c8c8c8" />
<rect x="782" y="250" width="1" height="1" fill="#c8c8c8" />
<rect x="783" y="250" width="1" height="1" fill="#c8c8c8" />
<rect x="784" y="250" width="1" height="1" fill="#c8c8c8" />
<rect x="785" y="250" width="1" height="1" fill="#c8c8c8" />
<rect x="786" y="250" width="1" height="1" fill="#c8c8c8" />
<rect x="787" y="250" width="1" height="1" fill="#c8c8c8" />
<rect x="788" y="250" width="1" height="1" fill="#c8c8c8" />
<rect x="789" y="250" width="1" height="1" fill="#c8c8c8" />
<rect x="790" y="250" width="1" height="1" fill="#c8c8c8" />
<rect x="791" y="250" width="1" height="1" fill="#c8c8c8" />
<rect x="792" y="250" width="1" height="1" fill="#c8c8c8" />
<rect x="793" y="250" width="1" height="1" fill="#c8c8c8" />
<rect x="794" y="250" width="1" height="1" fill="#c8c8c8" />
<rect x="795" y="250" width="1" height="1" fill="#c8c8c8" />
<rect x="796" y="250" width="1" height="1" fill="#c8c8c8" />
<rect x="797" y="250" width="1" height="1" fill="#c8c8c8" />
<rect x="798" y="250" width="1" height="1" fill="#c8c8c8" />
<rect x="799" y="250" width="1" height="1" fill="#c8c8c8" />
<rect x="800" y="250" width="1" height="1" fill="#c8c8c8" />
<rect x="801" y="250" width="1" height="1" fill="#c8c8c8" />
<rect x="802" y="250" width="1" height="1" fill="#c8c8c8" />
<rect x="803" y="250" width="1" height="1" fill="#c8c8c8" />
<rect x="804" y="250" width="1" height="1" fill="#c8c8c8" />
<rect x="808" y="250" width="1" height="1" fill="#c8c8c8" />
<rect x="812" y="250" width="1" height="1" fill="#c8c8c8" />
<rect x="815" y="250" width="1" height="1" fill="#c8c8c8" />
<rect x="818" y="250" width="1" height="1" fill="#c8c8c8" />
<rect x="821" y="250" width="1" height="1" fill="#c8c8c8" />
<rect x="824" y="250" width="1" height="1" fill="#c8c8c8" />
<rect x="827" y="250" width="1" height="1" fill="#c8c8c8" />
<rect x="829" y="250" width="1" height="1" fill="#c8c8c8" />
<rect x="831" y="250" width="1" height="1" fill="#c8c8c8" />
<rect x="833" y="250" width="1" height="1" fill="#c8c8c8" />
<rect x="836" y="250" width="1" height="1" fill="#c8c8c8" />
<rect x="838" y="250" width="1" height="1" fill="#c8c8c8" />
<rect x="839" y="250" width="1" height="1" fill="#c8c8c8" />
<rect x="841" y="250" width="1" height="1" fill="#c8c8c8" />
<rect x="843" y="250" width="1" height="1" fill="#c8c8c8" />
<rect x="512" y="264" width="1" height="1" fill="#c8c8c8" />
<rect x="516" y="264" width="1" height="1" fill="#c8c8c8" />
<rect x="519" y="264" width="1" height="1" fill="#c8c8c8" />
<rect x="522" y="264" width="1" height="1" fill="#c8c8c8" />
<rect x="525" y="264" width="1" height="1" fill="#c8c8c8" />
<rect x="528" y="264" width="1" height="1" fill="#c8c8c8" />
<rect x="531" y="264" width="1" height="1" fill="#c8c8c8" />
<rect x="533" y="264" width="1" height="1" fill="#c8c8c8" />
<rect x="535" y="264" width="1" height="1" fill="#c8c8c8" />
<rect x="538" y="264" width="1" height="1" fill="#c8c8c8" />
<rect x="540" y="264" width="1" height="1" fill="#c8c8c8" />
<rect x="542" y="264" width="1" height="1" fill="#c8c8c8" />
<rect x="544" y="264" width="1" height="1" fill="#c8c8c8" />
<rect x="545" y="264" width="1" height="1" fill="#c8c8c8" />
<rect x="547" y="264" width="1" height="1" fill="#c8c8c8" />
<rect x="549" y="264" width="1" height="1" fill="#c8c8c8" />
<rect x="551" y="264" width="1" height="1" fill="#c8c8c8" />
<rect x="552" y="264" width="1" height="1" fill="#c8c8c8" />
<rect x="554" y="264" width="1" height="1" fill="#c8c8c8" />
<rect x="555" y="264" width="1" height="1" fill="#c8c8c8" />
<rect x="556" y="264" width="1" height="1" fill="#c8c8c8" />
<rect x="558" y="264" width="1" height="1" fill="#c8c8c8" />
<rect x="559" y="264" width="1" height="1" fill="#c8c8c8" />
<rect x="560" y="264" width="1" height="1" fill="#c8c8c8" />
<rect x="562" y="264" width="1" height="1" fill="#c8c8c8" />
<rect x="563" y="264" width="1" height="1" fill="#c8c8c8" />
<rect x="564" y="264" width="1" height="1" fill="#c8c8c8" />
<rect x="565" y="264" width="1" height="1" fill="#c8c8c8" />
<rect x="566" y="264" width="1" height="1" fill="#c8c8c8" />
<rect x="567" y="264" width="1" height="1" fill="#c8c8c8" />
<rect x="568" y="264" width="1" height="1" fill="#c8c8c8" />
<rect x="569" y="264" width="1" height="1" fill="#c8c8c8" />
<rect x="570" y="264" width="1" height="1" fill="#c8c8c8" />
<rect x="571" y="264" width="1" height="1" fill="#c8c8c8" />
<rect x="572" y="264" width="1" height="1" fill="#c8c8c8" />
<rect x="573" y="264" width="1" height="1" fill="#c8c8c8" />
<rect x="574" y="264" width="1" height="1" fill="#c8c8c8" />
<rect x="575" y="264" width="1" height="1" fill="#c8c8c8" />
<rect x="576" y="264" width="1" height="1" fill="#c8c8c8" />
<rect x="577" y="264" width="1" height="1" fill="#c8c8c8" />
<rect x="578" y="264" width="1" height="1" fill="#c8c8c8" />
<rect x="579" y="264" width="1" height="1" fill="#c8c8c8" />
<rect x="580" y="264" width="1" height="1" fill="#c8c8c8" />
<rect x="581" y="264" width="1" height="1" fill="#c8c8c8" />
<rect x="582" y="264" width="1" height="1" fill="#c8c8c8" />
<rect x="583" y="264" width="1" height="1" fill="#c8c8c8" />
<rect x="584" y="264" width="1" height="1" fill="#c8c8c8" />
<rect x="585" y="264" width="1" height="1" fill="#c8c8c8" />
<rect x="586" y="264" width="1" height="1" fill="#c8c8c8" />
<rect x="587" y="264" width="1" height="1" fill="#c8c8c8" />
<rect x="588" y="264" width="1" height="1" fill="#c8c8c8" />
<rect x="589" y="264" width="1" height="1" fill="#c8c8c8" />
<rect x="590" y="264" width="1" height="1" fill="#c8c8c8" />
<rect x="591" y="264" width="1" height="1" fill="#c8c8c8" />
<rect x="592" y="264" width="1" height="1" fill="#c8c8c8" />
<rect x="593" y="264" width="1" height="1" fill="#c8c8c8" />
<rect x="594" y="264" width="1" height="1" fill="#c8c8c8" />
<rect x="595" y="264" width="1" height="1" fill="#c8c8c8" />
<rect x="596" y="264" width="1" height="1" fill="#c8c8c8" />
<rect x="597" y="264" width="1" height="1" fill="#c8c8c8" />
<rect x="598" y="264" width="1" height="1" fill="#c8c8c8" />
<rect x="599" y="264" width="1" height="1" fill="#c8c8c8" />
<rect x="600" y="264" width="1" height="1" fill="#c8c8c8" />
<rect x="601" y="264" width="1" height="1" fill="#c8c8c8" />
<rect x="602" y="264" width="1" height="1" fill="#c8c8c8" />
<rect x="603" y="264" width="1" height="1" fill="#c8c8c8" />
<rect x="604" y="264" width="1" height="1" fill="#c8c8c8" />
<rect x="605" y="264" width="1" height="1" fill="#c8c8c8" />
<rect x="606" y="264" width="1" height="1" fill="#c8c8c8" />
<rect x="607" y="264" width="1" height="1" fill="#c8c8c8" />
<rect x="611" y="264" width="1" height="1" fill="#c8c8c8" />
<rect x="614" y="264" width="1" height="1" fill="#c8c8c8" />
<rect x="618" y="264" width="1" height="1" fill="#c8c8c8" />
<rect x="621" y="264" width="1" height="1" fill="#c8c8c8" />
<rect x="624" y="264" width="1" height="1" fill="#c8c8c8" />
<rect x="627" y="264" width="1" height="1" fill="#c8c8c8" />
<rect x="629" y="264" width="1" height="1" fill="#c8c8c8" />
<rect x="632" y="264" width="1" height="1" fill="#c8c8c8" />
<rect x="634" y="264" width="1" height="1" fill="#c8c8c8" />
<rect x="636" y="264" width="1" height="1" fill="#c8c8c8" />
<rect x="638" y="264" width="1" height="1" fill="#c8c8c8" />
<rect x="640" y="264" width="1" height="1" fill="#c8c8c8" />
<rect x="642" y="264" width="1" height="1" fill="#c8c8c8" />
<rect x="644" y="264" width="1" height="1" fill="#c8c8c8" />
<rect x="646" y="264" width="1" height="1" fill="#c8c8c8" />
<rect x="648" y="264" width="1" height="1" fill="#c8c8c8" />
<rect x="649" y="264" width="1" height="1" fill="#c8c8c8" />
<rect x="651" y="264" width="1" height="1" fill="#c8c8c8" />
<rect x="652" y="264" width="1" height="1" fill="#c8c8c8" />
<rect x="654" y="264" width="1" height="1" fill="#c8c8c8" />
<rect x="655" y="264" width="1" height="1" fill="#c8c8c8" />
<rect x="656" y="264" width="1" height="1" fill="#c8c8c8" />
<rect x="658" y="264" width="1" height="1" fill="#c8c8c8" />
<rect x="659" y="264" width="1" height="1" fill="#c8c8c8" />
<rect x="660" y="264" width="1" height="1" fill="#c8c8c8" />
<rect x="661" y="264" width="1" height="1" fill="#c8c8c8" />
<rect x="663" y="264" width="1" height="1" fill="#c8c8c8" />
<rect x="664" y="264" width="1" height="1" fill="#c8c8c8" />
<rect x="665" y="264" width="1" height="1" fill="#c8c8c8" />
<rect x="666" y="264" width="1" height="1" fill="#c8c8c8" />
<rect x="667" y="264" width="1" height="1" fill="#c8c8c8" />
<rect x="668" y="264" width="1" height="1" fill="#c8c8c8" />
<rect x="669" y="264" width="1" height="1" fill="#c8c8c8" />
<rect x="670" y="264" width="1" height="1" fill="#c8c8c8" />
<rect x="671" y="264" width="1" height="1" fill="#c8c8c8" />
<rect x="672" y="264" width="1" height="1" fill="#c8c8c8" />
<rect x="673" y="264" width="1" height="1" fill="#c8c8c8" />
<rect x="674" y="264" width="1" height="1" fill="#c8c8c8" />
<rect x="675" y="264" width="1" height="1" fill="#c8c8c8" />
<rect x="676" y="264" width="1" height="1" fill="#c8c8c8" />
<rect x="677" y="264" width="1" height="1" fill="#c8c8c8" />
<rect x="678" y="264" width="1" height="1" fill="#c8c8c8" />
<rect x="679" y="264" width="1" height="1" fill="#c8c8c8" />
<rect x="680" y="264" width="1" height="1" fill="#c8c8c8" />
<rect x="681" y="264" width="1" height="1" fill="#c8c8c8" />
<rect x="682" y="264" width="1" height="1" fill="#c8c8c8" />
<rect x="683" y="264" width="1" height="1" fill="#c8c8c8" />
<rect x="684" y="264" width="1" height="1" fill="#c8c8c8" />
<rect x="685" y="264" width="1" height="1" fill="#c8c8c8" />
<rect x="686" y="264" width="1" height="1" fill="#c8c8c8" />
<rect x="687" y="264" width="1" height="1" fill="#c8c8c8" />
<rect x="688" y="264" width="1" height="1" fill="#c8c8c8" />
<rect x="689" y="264" width="1" height="1" fill="#c8c8c8" />
<rect x="690" y="264" width="1" height="1" fill="#c8c8c8" />
<rect x="691" y="264" width="1" height="1" fill="#c8c8c8" />
<rect x="692" y="264" width="1" height="1" fill="#c8c8c8" />
<rect x="693" y="264" width="1" height="1" fill="#c8c8c8" />
<rect x="694" y="264" width="1" height="1" fill="#c8c8c8" />
<rect x="695" y="264" width="1" height="1" fill="#c8c8c8" />
<rect x="696" y="264" width="1" height="1" fill="#c8c8c8" />
<rect x="697" y="264" width="1" height="1" fill="#c8c8c8" />
<rect x="698" y="264" width="1" height="1" fill="#c8c8c8" />
<rect x="699" y="264" width="1" height="1" fill="#c8c8c8" />
<rect x="700" y="264" width="1" height="1" fill="#c8c8c8" />
<rect x="701" y="264" width="1" height="1" fill="#c8c8c8" />
<rect x="702" y="264" width="1" height="1" fill="#c8c8c8" />
<rect x="703" y="264" width="1" height="1" fill="#c8c8c8" />
<rect x="704" y="264" width="1" height="1" fill="#c8c8c8" />
<rect x="705" y="264" width="1" height="1" fill="#c8c8c8" />
<rect x="709" y="264" width="1" height="1" fill="#c8c8c8" />
<rect x="713" y="264" width="1" height="1" fill="#c8c8c8" />
<rect x="716" y="264" width="1" height="1" fill="#c8c8c8" />
<rect x="720" y="264" width="1" height="1" fill="#c8c8c8" />
<rect x="723" y="264" width="1" height="1" fill="#c8c8c8" />
<rect x="725" y="264" width="1" height="1" fill="#c8c8c8" />
<rect x="728" y="264" width="1" height="1" fill="#c8c8c8" />
<rect x="730" y="264" width="1" height="1" fill="#c8c8c8" />
<rect x="733" y="264" width="1" height="1" fill="#c8c8c8" />
<rect x="735" y="264" width="1" height="1" fill="#c8c8c8" />
<rect x="737" y="264" width="1" height="1" fill="#c8c8c8" />
<rect x="739" y="264" width="1" height="1" fill="#c8c8c8" />
<rect x="741" y="264" width="1" height="1" fill="#c8c8c8" />
<rect x="743" y="264" width="1" height="1" fill="#c8c8c8" />
<rect x="744" y="264" width="1" height="1" fill="#c8c8c8" />
<rect x="746" y="264" width="1" height="1" fill="#c8c8c8" />
<rect x="748" y="264" width="1" height="1" fill="#c8c8c8" />
<rect x="749" y="264" width="1" height="1" fill="#c8c8c8" />
<rect x="751" y="264" width="1" height="1" fill="#c8c8c8" />
<rect x="752" y="264" width="1" height="1" fill="#c8c8c8" />
<rect x="754" y="264" width="1" height="1" fill="#c8c8c8" />
<rect x="755" y="264" width="1" height="1" fill="#c8c8c8" />
<rect x="756" y="264" width="1" height="1" fill="#c8c8c8" />
<rect x="758" y="264" width="1" height="1" fill="#c8c8c8" />
<rect x="759" y="264" width="1" height="1" fill="#c8c8c8" />
<rect x="760" y="264" width="1" height="1" fill="#c8c8c8" />
<rect x="761" y="264" width="1" height="1" fill="#c8c8c8" />
<rect x="762" y="264" width="1" height="1" fill="#c8c8c8" />
<rect x="763" y="264" width="1" height="1" fill="#c8c8c8" />
<rect x="765" y="264" width="1" height="1" fill="#c8c8c8" />
<rect x="766" y="264" width="1" height="1" fill="#c8c8c8" />
<rect x="767" y="264" width="1" height="1" fill="#c8c8c8" />
<rect x="768" y="264" width="1" height="1" fill="#c8c8c8" />
<rect x="769" y="264" width="1" height="1" fill="#c8c8c8" />
<rect x="770" y="264" width="1" height="1" fill="#c8c8c8" />
<rect x="771" y="264" width="1" height="1" fill="#c8c8c8" />
<rect x="772" y="264" width="1" height="1" fill="#c8c8c8" />
<rect x="773" y="264" width="1" height="1" fill="#c8c8c8" />
<rect x="774" y="264" width="1" height="1" fill="#c8c8c8" />
<rect x="775" y="264" width="1" height="1" fill="#c8c8c8" />
<rect x="776" y="264" width="1" height="1" fill="#c8c8c8" />
<rect x="777" y="264" width="1" height="1" fill="#c8c8c8" />
<rect x="778" y="264" width="1" height="1" fill="#c8c8c8" />
<rect x="779" y="264" width="1" height="1" fill="#c8c8c8" />
<rect x="780" y="264" width="1" height="1" fill="#c8c8c8" />
<rect x="781" y="264" width="1" height="1" fill="#c8c8c8" />
<rect x="782" y="264" width="1" height="1" fill="#c8c8c8" />
<rect x="783" y="264" width="1" height="1" fill="#c8c8c8" />
<rect x="784" y="264" width="1" height="1" fill="#c8c8c8" />
<rect x="785" y="264" width="1" height="1" fill="#c8c8c8" />
<rect x="786" y="264" width="1" height="1" fill="#c8c8c8" />
<rect x="787" y="264" width="1" height="1" fill="#c8c8c8" />
<rect x="788" y="264" width="1" height="1" fill="#c8c8c8" />
<rect x="789" y="264" width="1" height="1" fill="#c8c8c8" />
<rect x="790" y="264" width="1" height="1" fill="#c8c8c8" />
<rect x="791" y="264" width="1" height="1" fill="#c8c8c8" />
<rect x="792" y="264" width="1" height="1" fill="#c8c8c8" />
<rect x="793" y="264" width="1" height="1" fill="#c8c8c8" />
<rect x="794" y="264" width="1" height="1" fill="#c8c8c8" />
<rect x="795" y="264" width="1" height="1" fill="#c8c8c8" />
<rect x="796" y="264" width="1" height="1" fill="#c8c8c8" />
<rect x="797" y="264" width="1" height="1" fill="#c8c8c8" />
<rect x="798" y="264" width="1" height="1" fill="#c8c8c8" />
<rect x="799" y="264" width="1" height="1" fill="#c8c8c8" />
<rect x="800" y="264" width="1" height="1" fill="#c8c8c8" />
<rect x="801" y="264" width="1" height="1" fill="#c8c8c8" />
<rect x="802" y="264" width="1" height="1" fill="#c8c8c8" />
<rect x="803" y="264" width="1" height="1" fill="#c8c8c8" />
<rect x="804" y="264" width="1" height="1" fill="#c8c8c8" />
<rect x="808" y="264" width="1" height="1" fill="#c8c8c8" />
<rect x="812" y="264" width="1" height="1" fill="#c8c8c8" />
<rect x="815" y="264" width="1" height="1" fill="#c8c8c8" />
<rect x="818" y="264" width="1" height="1" fill="#c8c8c8" />
<rect x="821" y="264" width="1" height="1" fill="#c8c8c8" />
<rect x="824" y="264" width="1" height="1" fill="#c8c8c8" />
<rect x="827" y="264" width="1" height="1" fill="#c8c8c8" />
<rect x="829" y="264" width="1" height="1" fill="#c8c8c8" />
<rect x="831" y="264" width="1" height="1" fill="#c8c8c8" />
<rect x="833" y="264" width="1" height="1" fill="#c8c8c8" />
<rect x="836" y="264" width="1" height="1" fill="#c8c8c8" />
<rect x="838" y="264" width="1" height="1" fill="#c8c8c8" />
<rect x="839" y="264" width="1" height="1" fill="#c8c8c8" />
<rect x="841" y="264" width="1" height="1" fill="#c8c8c8" />
<rect x="843" y="264" width="1" height="1" fill="#c8c8c8" />
<rect x="512" y="279" width="1" height="1" fill="#c8c8c8" />
<rect x="516" y="279" width="1" height="1" fill="#c8c8c8" />
<rect x="519" y="279" width="1" height="1" fill="#c8c8c8" />
<rect x="522" y="279" width="1" height="1" fill="#c8c8c8" />
<rect x="525" y="279" width="1" height="1" fill="#c8c8c8" />
<rect x="528" y="279" width="1" height="1" fill="#c8c8c8" />
<rect x="531" y="279" width="1" height="1" fill="#c8c8c8" />
<rect x="533" y="279" width="1" height="1" fill="#c8c8c8" />
<rect x="535" y="279" width="1" height="1" fill="#c8c8c8" />
<rect x="538" y="279" width="1" height="1" fill="#c8c8c8" />
<rect x="540" y="279" width="1" height="1" fill="#c8c8c8" />
<rect x="542" y="279" width="1" height="1" fill="#c8c8c8" />
<rect x="544" y="279" width="1" height="1" fill="#c8c8c8" />
<rect x="545" y="279" width="1" height="1" fill="#c8c8c8" />
<rect x="547" y="279" width="1" height="1" fill="#c8c8c8" />
<rect x="549" y="279" width="1" height="1" fill="#c8c8c8" />
<rect x="551" y="279" width="1" height="1" fill="#c8c8c8" />
<rect x="552" y="279" width="1" height="1" fill="#c8c8c8" />
<rect x="554" y="279" width="1" height="1" fill="#c8c8c8" />
<rect x="555" y="279" width="1" height="1" fill="#c8c8c8" />
<rect x="556" y="279" width="1" height="1" fill="#c8c8c8" />
<rect x="558" y="279" width="1" height="1" fill="#c8c8c8" />
<rect x="559" y="279" width="1" height="1" fill="#c8c8c8" />
<rect x="560" y="279" width="1" height="1" fill="#c8c8c8" />
<rect x="562" y="279" width="1" height="1" fill="#c8c8c8" />
<rect x="563" y="279" width="1" height="1" fill="#c8c8c8" />
<rect x="564" y="279" width="1" height="1" fill="#c8c8c8" />
<rect x="565" y="279" width="1" height="1" fill="#c8c8c8" />
<rect x="566" y="279" width="1" height="1" fill="#c8c8c8" />
<rect x="567" y="279" width="1" height="1" fill="#c8c8c8" />
<rect x="568" y="279" width="1" height="1" fill="#c8c8c8" />
<rect x="569" y="279" width="1" height="1" fill="#c8c8c8" />
<rect x="570" y="279" width="1" height="1" fill="#c8c8c8" />
<rect x="571" y="279" width="1" height="1" fill="#c8c8c8" />
<rect x="572" y="279" width="1" height="1" fill="#c8c8c8" />
<rect x="573" y="279" width="1" height="1" fill="#c8c8c8" />
<rect x="574" y="279" width="1" height="1" fill="#c8c8c8" />
<rect x="575" y="279" width="1" height="1" fill="#c8c8c8" />
<rect x="576" y="279" width="1" height="1" fill="#c8c8c8" />
<rect x="577" y="279" width="1" height="1" fill="#c8c8c8" />
<rect x="578" y="279" width="1" height="1" fill="#c8c8c8" />
<rect x="579" y="279" width="1" height="1" fill="#c8c8c8" />
<rect x="580" y="279" width="1" height="1" fill="#c8c8c8" />
<rect x="581" y="279" width="1" height="1" fill="#c8c8c8" />
<rect x="582" y="279" width="1" height="1" fill="#c8c8c8" />
<rect x="583" y="279" width="1" height="1" fill="#c8c8c8" />
<rect x="584" y="279" width="1" height="1" fill="#c8c8c8" />
<rect x="585" y="279" width="1" height="1" fill="#c8c8c8" />
<rect x="586" y="279" width="1" height="1" fill="#c8c8c8" />
<rect x="587" y="279" width="1" height="1" fill="#c8c8c8" />
<rect x="588" y="279" width="1" height="1" fill="#c8c8c8" />
<rect x="589" y="279" width="1" height="1" fill="#c8c8c8" />
<rect x="590" y="279" width="1" height="1" fill="#c8c8c8" />
<rect x="591" y="279" width="1" height="1" fill="#c8c8c8" />
<rect x="592" y="279" width="1" height="1" fill="#c8c8c8" />
<rect x="593" y="279" width="1" height="1" fill="#c8c8c8" />
<rect x="594" y="279" width="1" height="1" fill="#c8c8c8" />
<rect x="595" y="279" width="1" height="1" fill="#c8c8c8" />
<rect x="596" y="279" width="1" height="1" fill="#c8c8c8" />
<rect x="597" y="279" width="1" height="1" fill="#c8c8c8" />
<rect x="598" y="279" width="1" height="1" fill="#c8c8c8" />
<rect x="599" y="279" width="1" height="1" fill="#c8c8c8" />
<rect x="600" y="279" width="1" height="1" fill="#c8c8c8" />
<rect x="601" y="279" width="1" height="1" fill="#c8c8c8" />
<rect x="602" y="279" width="1" height="1" fill="#c8c8c8" />
<rect x="603" y="279" width="1" height="1" fill="#c8c8c8" />
<rect x="604" y="279" width="1" height="1" fill="#c8c8c8" />
<rect x="605" y="279" width="1" height="1" fill="#c8c8c8" />
<rect x="606" y="279" width="1" height="1" fill="#c8c8c8" />
<rect x="607" y="279" width="1" height="1" fill="#c8c8c8" />
<rect x="611" y="279" width="1" height="1" fill="#c8c8c8" />
<rect x="614" y="279" width="1" height="1" fill="#c8c8c8" />
<rect x="618" y="279" width="1" height="1" fill="#c8c8c8" />
<rect x="621" y="279" width="1" height="1" fill="#c8c8c8" />
<rect x="624" y="279" width="1" height="1" fill="#c8c8c8" />
<rect x="627" y="279" width="1" height="1" fill="#c8c8c8" />
<rect x="629" y="279" width="1" height="1" fill="#c8c8c8" />
<rect x="632" y="279" width="1" height="1" fill="#c8c8c8" />
<rect x="634" y="279" width="1" height="1" fill="#c8c8c8" />
<rect x="636" y="279" width="1" height="1" fill="#c8c8c8" />
<rect x="638" y="279" width="1" height="1" fill="#c8c8c8" />
<rect x="640" y="279" width="1" height="1" fill="#c8c8c8" />
<rect x="642" y="279" width="1" height="1" fill="#c8c8c8" />
<rect x="644" y="279" width="1" height="1" fill="#c8c8c8" />
<rect x="646" y="279" width="1" height="1" fill="#c8c8c8" />
<rect x="648" y="279" width="1" height="1" fill="#c8c8c8" />
<rect x="649" y="279" width="1" height="1" fill="#c8c8c8" />
<rect x="651" y="279" width="1" height="1" fill="#c8c8c8" />
<rect x="652" y="279" width="1" height="1" fill="#c8c8c8" />
<rect x="654" y="279" width="1" height="1" fill="#c8c8c8" />
<rect x="655" y="279" width="1" height="1" fill="#c8c8c8" />
<rect x="656" y="279" width="1" height="1" fill="#c8c8c8" />
<rect x="658" y="279" width="1" height="1" fill="#c8c8c8" />
<rect x="659" y="279" width="1" height="1" fill="#c8c8c8" />
<rect x="660" y="279" width="1" height="1" fill="#c8c8c8" />
<rect x="661" y="279" width="1" height="1" fill="#c8c8c8" />
<rect x="663" y="279" width="1" height="1" fill="#c8c8c8" />
<rect x="664" y="279" width="1" height="1" fill="#c8c8c8" />
<rect x="665" y="279" width="1" height="1" fill="#c8c8c8" />
<rect x="666" y="279" width="1" height="1" fill="#c8c8c8" />
<rect x="667" y="279" width="1" height="1" fill="#c8c8c8" />
<rect x="668" y="279" width="1" height="1" fill="#c8c8c8" />
<rect x="669" y="279" width="1" height="1" fill="#c8c8c8" />
<rect x="670" y="279" width="1" height="1" fill="#c8c8c8" />
<rect x="671" y="279" width="1" height="1" fill="#c8c8c8" />
<rect x="672" y="279" width="1" height="1" fill="#c8c8c8" />
<rect x="673" y="279" width="1" height="1" fill="#c8c8c8" />
<rect x="674" y="279" width="1" height="1" fill="#c8c8c8" />
<rect x="675" y="279" width="1" height="1" fill="#c8c8c8" />
<rect x="676" y="279" width="1" height="1" fill="#c8c8c8" />
<rect x="677" y="279" width="1" height="1" fill="#c8c8c8" />
<rect x="678" y="279" width="1" height="1" fill="#c8c8c8" />
<rect x="679" y="279" width="1" height="1" fill="#c8c8c8" />
<rect x="680" y="279" width="1" height="1" fill="#c8c8c8" />
<rect x="681" y="279" width="1" height="1" fill="#c8c8c8" />
<rect x="682" y="279" width="1" height="1" fill="#c8c8c8" />
<rect x="683" y="279" width="1" height="1" fill="#c8c8c8" />
<rect x="684" y="279" width="1" height="1" fill="#c8c8c8" />
<rect x="685" y="279" width="1" height="1" fill="#c8c8c8" />
<rect x="686" y="279" width="1" height="1" fill="#c8c8c8" />
<rect x="687" y="279" width="1" height="1" fill="#c8c8c8" />
<rect x="688" y="279" width="1" height="1" fill="#c8c8c8" />
<rect x="689" y="279" width="1" height="1" fill="#c8c8c8" />
<rect x="690" y="279" width="1" height="1" fill="#c8c8c8" />
<rect x="691" y="279" width="1" height="1" fill="#c8c8c8" />
<rect x="692" y="279" width="1" height="1" fill="#c8c8c8" />
<rect x="693" y="279" width="1" height="1" fill="#c8c8c8" />
<rect x="694" y="279" width="1" height="1" fill="#c8c8c8" />
<rect x="695" y="279" width="1" height="1" fill="#c8c8c8" />
<rect x="696" y="279" width="1" height="1" fill="#c8c8c8" />
<rect x="697" y="279" width="1" height="1" fill="#c8c8c8" />
<rect x="698" y="279" width="1" height="1" fill="#c8c8c8" />
<rect x="699" y="279" width="1" height="1" fill="#c8c8c8" />
<rect x="700" y="279" width="1" height="1" fill="#c8c8c8" />
<rect x="701" y="279" width="1" height="1" fill="#c8c8c8" />
<rect x="702" y="279" width="1" height="1" fill="#c8c8c8" />
<rect x="703" y="279" width="1" height="1" fill="#c8c8c8" />
<rect x="704" y="279" width="1" height="1" fill="#c8c8c8" />
<rect x="705" y="279" width="1" height="1" fill="#c8c8c8" />
<rect x="709" y="279" width="1" height="1" fill="#c8c8c8" />
<rect x="713" y="279" width="1" height="1" fill="#c8c8c8" />
<rect x="716" y="279" width="1" height="1" fill="#c8c8c8" />
<rect x="720" y="279" width="1" height="1" fill="#c8c8c8" />
<rect x="723" y="279" width="1" height="1" fill="#c8c8c8" />
<rect x="725" y="279" width="1" height="1" fill="#c8c8c8" />
<rect x="728" y="279" width="1" height="1" fill="#c8c8c8" />
<rect x="730" y="279" width="1" height="1" fill="#c8c8c8" />
<rect x="733" y="279" width="1" height="1" fill="#c8c8c8" />
<rect x="735" y="279" width="1" height="1" fill="#c8c8c8" />
<rect x="737" y="279" width="1" height="1" fill="#c8c8c8" />
<rect x="739" y="279" width="1" height="1" fill="#c8c8c8" />
<rect x="741" y="279" width="1" height="1" fill="#c8c8c8" />
<rect x="743" y="279" width="1" height="1" fill="#c8c8c8" />
<rect x="744" y="279" width="1" height="1" fill="#c8c8c8" />
<rect x="746" y="279" width="1" height="1" fill="#c8c8c8" />
<rect x="748" y="279" width="1" height="1" fill="#c8c8c8" />
<rect x="749" y="279" width="1" height="1" fill="#c8c8c8" />
<rect x="751" y="279" width="1" height="1" fill="#c8c8c8" />
<rect x="752" y="279" width="1" height="1" fill="#c8c8c8" />
<rect x="754" y="279" width="1" height="1" fill="#c8c8c8" />
<rect x="755" y="279" width="1" height="1" fill="#c8c8c8" />
<rect x="756" y="279" width="1" height="1" fill="#c8c8c8" />
<rect x="758" y="279" width="1" height="1" fill="#c8c8c8" />
<rect x="759" y="279" width="1" height="1" fill="#c8c8c8" />
<rect x="760" y="279" width="1" height="1" fill="#c8c8c8" />
<rect x="761" y="279" width="1" height="1" fill="#c8c8c8" />
<rect x="762" y="279" width="1" height="1" fill="#c8c8c8" />
<rect x="763" y="279" width="1" height="1" fill="#c8c8c8" />
<rect x="765" y="279" width="1" height="1" fill="#c8c8c8" />
<rect x="766" y="279" width="1" height="1" fill="#c8c8c8" />
<rect x="767" y="279" width="1" height="1" fill="#c8c8c8" />
<rect x="768" y="279" width="1" height="1" fill="#c8c8c8" />
<rect x="769" y="279" width="1" height="1" fill="#c8c8c8" />
<rect x="770" y="279" width="1" height="1" fill="#c8c8c8" />
<rect x="771" y="279" width="1" height="1" fill="#c8c8c8" />
<rect x="772" y="279" width="1" height="1" fill="#c8c8c8" />
<rect x="773" y="279" width="1" height="1" fill="#c8c8c8" />
<rect x="774" y="279" width="1" height="1" fill="#c8c8c8" />
<rect x="775" y="279" width="1" height="1" fill="#c8c8c8" />
<rect x="776" y="279" width="1" height="1" fill="#c8c8c8" />
<rect x="777" y="279" width="1" height="1" fill="#c8c8c8" />
<rect x="778" y="279" width="1" height="1" fill="#c8c8c8" />
<rect x="779" y="279" width="1" height="1" fill="#c8c8c8" />
<rect x="780" y="279" width="1" height="1" fill="#c8c8c8" />
<rect x="781" y="279" width="1" height="1" fill="#c8c8c8" />
<rect x="782" y="279" width="1" height="1" fill="#c8c8c8" />
<rect x="783" y="279" width="1" height="1" fill="#c8c8c8" />
<rect x="784" y="279" width="1" height="1" fill="#c8c8c8" />
<rect x="785" y="279" width="1" height="1" fill="#c8c8c8" />
<rect x="786" y="279" width="1" height="1" fill="#c8c8c8" />
<rect x="787" y="279" width="1" height="1" fill="#c8c8c8" />
<rect x="788" y="279" width="1" height="1" fill="#c8c8c8" />
<rect x="789" y="279" width="1" height="1" fill="#c8c8c8" />
<rect x="790" y="279" width="1" height="1" fill="#c8c8c8" />
<rect x="791" y="279" width="1" height="1" fill="#c8c8c8" />
<rect x="792" y="279" width="1" height="1" fill="#c8c8c8" />
<rect x="793" y="279" width="1" height="1" fill="#c8c8c8" />
<rect x="794" y="279" width="1" height="1" fill="#c8c8c8" />
<rect x="795" y="279" width="1" height="1" fill="#c8c8c8" />
<rect x="796" y="279" width="1" height="1" fill="#c8c8c8" />
<rect x="797" y="279" width="1" height="1" fill="#c8c8c8" />
<rect x="798" y="279" width="1" height="1" fill="#c8c8c8" />
<rect x="799" y="279" width="1" height="1" fill="#c8c8c8" />
<rect x="800" y="279" width="1" height="1" fill="#c8c8c8" />
<rect x="801" y="279" width="1" height="1" fill="#c8c8c8" />
<rect x="802" y="279" width="1" height="1" fill="#c8c8c8" />
<rect x="803" y="279" width="1" height="1" fill="#c8c8c8" />
<rect x="804" y="279" width="1" height="1" fill="#c8c8c8" />
<rect x="808" y="279" width="1" height="1" fill="#c8c8c8" />
<rect x="812" y="279" width="1" height="1" fill="#c8c8c8" />
<rect x="815" y="279" width="1" height="1" fill="#c8c8c8" />
<rect x="818" y="279" width="1" height="1" fill="#c8c8c8" />
<rect x="821" y="279" width="1" height="1" fill="#c8c8c8" />
<rect x="824" y="279" width="1" height="1" fill="#c8c8c8" />
<rect x="827" y="279" width="1" height="1" fill="#c8c8c8" />
<rect x="829" y="279" width="1" height="1" fill="#c8c8c8" />
<rect x="831" y="279" width="1" height="1" fill="#c8c8c8" />
<rect x="833" y="279" width="1" height="1" fill="#c8c8c8" />
<rect x="836" y="279" width="1" height="1" fill="#c8c8c8" />
<rect x="838" y="279" width="1" height="1" fill="#c8c8c8" />
<rect x="839" y="279" width="1" height="1" fill="#c8c8c8" />
<rect x="841" y="279" width="1" height="1" fill="#c8c8c8" />
<rect x="843" y="279" width="1" height="1" fill="#c8c8c8" />
<rect x="512" y="294" width="1" height="1" fill="#c8c8c8" />
<rect x="516" y="294" width="1" height="1" fill="#c8c8c8" />
<rect x="519" y="294" width="1" height="1" fill="#c8c8c8" />
<rect x="522" y="294" width="1" height="1" fill="#c8c8c8" />
<rect x="525" y="294" width="1" height="1" fill="#c8c8c8" />
<rect x="528" y="294" width="1" height="1" fill="#c8c8c8" />
<rect x="531" y="294" width="1" height="1" fill="#c8c8c8" />
<rect x="533" y="294" width="1" height="1" fill="#c8c8c8" />
<rect x="535" y="294" width="1" height="1" fill="#c8c8c8" />
<rect x="538" y="294" width="1" height="1" fill="#c8c8c8" />
<rect x="540" y="294" width="1" height="1" fill="#c8c8c8" />
<rect x="542" y="294" width="1" height="1" fill="#c8c8c8" />
<rect x="544" y="294" width="1" height="1" fill="#c8c8c8" />
<rect x="545" y="294" width="1" height="1" fill="#c8c8c8" />
<rect x="547" y="294" width="1" height="1" fill="#c8c8c8" />
<rect x="549" y="294" width="1" height="1" fill="#c8c8c8" />
<rect x="551" y="294" width="1" height="1" fill="#c8c8c8" />
<rect x="552" y="294" width="1" height="1" fill="#c8c8c8" />
<rect x="554" y="294" width="1" height="1" fill="#c8c8c8" />
<rect x="555" y="294" width="1" height="1" fill="#c8c8c8" />
<rect x="556" y="294" width="1" height="1" fill="#c8c8c8" />
<rect x="558" y="294" width="1" height="1" fill="#c8c8c8" />
<rect x="559" y="294" width="1" height="1" fill="#c8c8c8" />
<rect x="560" y="294" width="1" height="1" fill="#c8c8c8" />
<rect x="562" y="294" width="1" height="1" fill="#c8c8c8" />
<rect x="563" y="294" width="1" height="1" fill="#c8c8c8" />
<rect x="564" y="294" width="1" height="1" fill="#c8c8c8" />
<rect x="565" y="294" width="1" height="1" fill="#c8c8c8" />
<rect x="566" y="294" width="1" height="1" fill="#c8c8c8" />
<rect x="567" y="294" width="1" height="1" fill="#c8c8c8" />
<rect x="568" y="294" width="1" height="1" fill="#c8c8c8" />
<rect x="569" y="294" width="1" height="1" fill="#c8c8c8" />
<rect x="570" y="294" width="1" height="1" fill="#c8c8c8" />
<rect x="571" y="294" width="1" height="1" fill="#c8c8c8" />
<rect x="572" y="294" width="1" height="1" fill="#c8c8c8" />
<rect x="573" y="294" width="1" height="1" fill="#c8c8c8" />
<rect x="574" y="294" width="1" height="1" fill="#c8c8c8" />
<rect x="575" y="294" width="1" height="1" fill="#c8c8c8" />
<rect x="576" y="294" width="1" height="1" fill="#c8c8c8" />
<rect x="577" y="294" width="1" height="1" fill="#c8c8c8" />
<rect x="578" y="294" width="1" height="1" fill="#c8c8c8" />
<rect x="579" y="294" width="1" height="1" fill="#c8c8c8" />
<rect x="580" y="294" width="1" height="1" fill="#c8c8c8" />
<rect x="581" y="294" width="1" height="1" fill="#c8c8c8" />
<rect x="582" y="294" width="1" height="1" fill="#c8c8c8" />
<rect x="583" y="294" width="1" height="1" fill="#c8c8c8" />
<rect x="584" y="294" width="1" height="1" fill="#c8c8c8" />
<rect x="585" y="294" width="1" height="1" fill="#c8c8c8" />
<rect x="586" y="294" width="1" height="1" fill="#c8c8c8" />
<rect x="587" y="294" width="1" height="1" fill="#c8c8c8" />
<rect x="588" y="294" width="1" height="1" fill="#c8c8c8" />
<rect x="589" y="294" width="1" height="1" fill="#c8c8c8" />
<rect x="590" y="294" width="1" height="1" fill="#c8c8c8" />
<rect x="591" y="294" width="1" height="1" fill="#c8c8c8" />
<rect x="592" y="294" width="1" height="1" fill="#c8c8c8" />
<rect x="593" y="294" width="1" height="1" fill="#c8c8c8" />
<rect x="594" y="294" width="1" height="1" fill="#c8c8c8" />
<rect x="595" y="294" width="1" height="1" fill="#c8c8c8" />
<rect x="596" y="294" width="1" height="1" fill="#c8c8c8" />
<rect x="597" y="294" width="1" height="1" fill="#c8c8c8" />
<rect x="598" y="294" width="1" height="1" fill="#c8c8c8" />
<rect x="599" y="294" width="1" height="1" fill="#c8c8c8" />
<rect x="600" y="294" width="1" height="1" fill="#c8c8c8" />
<rect x="601" y="294" width="1" height="1" fill="#c8c8c8" />
<rect x="602" y="294" width="1" height="1" fill="#c8c8c8" />
<rect x="603" y="294" width="1" height="1" fill="#c8c8c8" />
<rect x="604" y="294" width="1" height="1" fill="#c8c8c8" />
<rect x="605" y="294" width="1" height="1" fill="#c8c8c8" />
<rect x="606" y="294" width="1" height="1" fill="#c8c8c8" />
<rect x="607" y="294" width="1" height="1" fill="#c8c8c8" />
<rect x="611" y="294" width="1" height="1" fill="#c8c8c8" />
<rect x="614" y="294" width="1" height="1" fill="#c8c8c8" />
<rect x="618" y="294" width="1" height="1" fill="#c8c8c8" />
<rect x="621" y="294" width="1" height="1" fill="#c8c8c8" />
<rect x="624" y="294" width="1" height="1" fill="#c8c8c8" />
<rect x="627" y="294" width="1" height="1" fill="#c8c8c8" />
<rect x="629" y="294" width="1" height="1" fill="#c8c8c8" />
<rect x="632" y="294" width="1" height="1" fill="#c8c8c8" />
<rect x="634" y="294" width="1" height="1" fill="#c8c8c8" />
<rect x="636" y="294" width="1" height="1" fill="#c8c8c8" />
<rect x="638" y="294" width="1" height="1" fill="#c8c8c8" />
<rect x="640" y="294" width="1" height="1" fill="#c8c8c8" />
<rect x="642" y="294" width="1" height="1" fill="#c8c8c8" />
<rect x="644" y="294" width="1" height="1" fill="#c8c8c8" />
<rect x="646" y="294" width="1" height="1" fill="#c8c8c8" />
<rect x="648" y="294" width="1" height="1" fill="#c8c8c8" />
<rect x="649" y="294" width="1" height="1" fill="#c8c8c8" />
<rect x="651" y="294" width="1" height="1" fill="#c8c8c8" />
<rect x="652" y="294" width="1" height="1" fill="#c8c8c8" />
<rect x="654" y="294" width="1" height="1" fill="#c8c8c8" />
<rect x="655" y="294" width="1" height="1" fill="#c8c8c8" />
<rect x="656" y="294" width="1" height="1" fill="#c8c8c8" />
<rect x="658" y="294" width="1" height="1" fill="#c8c8c8" />
<rect x="659" y="294" width="1" height="1" fill="#c8c8c8" />
<rect x="660" y="294" width="1" height="1" fill="#c8c8c8" />
<rect x="661" y="294" width="1" height="1" fill="#c8c8c8" />
<rect x="663" y="294" width="1" height="1" fill="#c8c8c8" />
<rect x="664" y="294" width="1" height="1" fill="#c8c8c8" />
<rect x="665" y="294" width="1" height="1" fill="#c8c8c8" />
<rect x="666" y="294" width="1" height="1" fill="#c8c8c8" />
<rect x="667" y="294" width="1" height="1" fill="#c8c8c8" />
<rect x="668" y="294" width="1" height="1" fill="#c8c8c8" />
<rect x="669" y="294" width="1" height="1" fill="#c8c8c8" />
<rect x="670" y="294" width="1" height="1" fill="#c8c8c8" />
<rect x="671" y="294" width="1" height="1" fill="#c8c8c8" />
<rect x="672" y="294" width="1" height="1" fill="#c8c8c8" />
<rect x="673" y="294" width="1" height="1" fill="#c8c8c8" />
<rect x="674" y="294" width="1" height="1" fill="#c8c8c8" />
<rect x="675" y="294" width="1" height="1" fill="#c8c8c8" />
<rect x="676" y="294" width="1" height="1" fill="#c8c8c8" />
<rect x="677" y="294" width="1" height="1" fill="#c8c8c8" />
<rect x="678" y="294" width="1" height="1" fill="#c8c8c8" />
<rect x="679" y="294" width="1" height="1" fill="#c8c8c8" />
<rect x="680" y="294" width="1" height="1" fill="#c8c8c8" />
<rect x="681" y="294" width="1" height="1" fill="#c8c8c8" />
<rect x="682" y="294" width="1" height="1" fill="#c8c8c8" />
<rect x="683" y="294" width="1" height="1" fill="#c8c8c8" />
<rect x="684" y="294" width="1" height="1" fill="#c8c8c8" />
<rect x="685" y="294" width="1" height="1" fill="#c8c8c8" />
<rect x="686" y="294" width="1" height="1" fill="#c8c8c8" />
<rect x="687" y="294" width="1" height="1" fill="#c8c8c8" />
<rect x="688" y="294" width="1" height="1" fill="#c8c8c8" />
<rect x="689" y="294" width="1" height="1" fill="#c8c8c8" />
<rect x="690" y="294" width="1" height="1" fill="#c8c8c8" />
<rect x="691" y="294" width="1" height="1" fill="#c8c8c8" />
<rect x="692" y="294" width="1" height="1" fill="#c8c8c8" />
<rect x="693" y="294" width="1" height="1" fill="#c8c8c8" />
<rect x="694" y="294" width="1" height="1" fill="#c8c8c8" />
<rect x="695" y="294" width="1" height="1" fill="#c8c8c8" />
<rect x="696" y="294" width="1" height="1" fill="#c8c8c8" />
<rect x="697" y="294" width="1" height="1" fill="#c8c8c8" />
<rect x="698" y="294" width="1" height="1" fill="#c8c8c8" />
<rect x="699" y="294" width="1" height="1" fill="#c8c8c8" />
<rect x="700" y="294" width="1" height="1" fill="#c8c8c8" />
<rect x="701" y="294" width="1" height="1" fill="#c8c8c8" />
<rect x="702" y="294" width="1" height="1" fill="#c8c8c8" />
<rect x="703" y="294" width="1" height="1" fill="#c8c8c8" />
<rect x="704" y="294" width="1" height="1" fill="#c8c8c8" />
<rect x="705" y="294" width="1" height="1" fill="#c8c8c8" />
<rect x="709" y="294" width="1" height="1" fill="#c8c8c8" />
<rect x="713" y="294" width="1" height="1" fill="#c8c8c8" />
<rect x="716" y="294" width="1" height="1" fill="#c8c8c8" />
<rect x="720" y="294" width="1" height="1" fill="#c8c8c8" />
<rect x="723" y="294" width="1" height="1" fill="#c8c8c8" />
<rect x="725" y="294" width="1" height="1" fill="#c8c8c8" />
<rect x="728" y="294" width="1" height="1" fill="#c8c8c8" />
<rect x="730" y="294" width="1" height="1" fill="#c8c8c8" />
<rect x="733" y="294" width="1" height="1" fill="#c8c8c8" />
<rect x="735" y="294" width="1" height="1" fill="#c8c8c8" />
<rect x="737" y="294" width="1" height="1" fill="#c8c8c8" />
<rect x="739" y="294" width="1" height="1" fill="#c8c8c8" />
<rect x="741" y="294" width="1" height="1" fill="#c8c8c8" />
<rect x="743" y="294" width="1" height="1" fill="#c8c8c8" />
<rect x="744" y="294" width="1" height="1" fill="#c8c8c8" />
<rect x="746" y="294" width="1" height="1" fill="#c8c8c8" />
<rect x="748" y="294" width="1" height="1" fill="#c8c8c8" />
<rect x="749" y="294" width="1" height="1" fill="#c8c8c8" />
<rect x="751" y="294" width="1" height="1" fill="#c8c8c8" />
<rect x="752" y="294" width="1" height="1" fill="#c8c8c8" />
<rect x="754" y="294" width="1" height="1" fill="#c8c8c8" />
<rect x="755" y="294" width="1" height="1" fill="#c8c8c8" />
<rect x="756" y="294" width="1" height="1" fill="#c8c8c8" />
<rect x="758" y="294" width="1" height="1" fill="#c8c8c8" />
<rect x="759" y="294" width="1" height="1" fill="#c8c8c8" />
<rect x="760" y="294" width="1" height="1" fill="#c8c8c8" />
<rect x="761" y="294" width="1" height="1" fill="#c8c8c8" />
<rect x="762" y="294" width="1" height="1" fill="#c8c8c8" />
<rect x="763" y="294" width="1" height="1" fill="#c8c8c8" />
<rect x="765" y="294" width="1" height="1" fill="#c8c8c8" />
<rect x="766" y="294" width="1" height="1" fill="#c8c8c8" />
<rect x="767" y="294" width="1" height="1" fill="#c8c8c8" />
<rect x="768" y="294" width="1" height="1" fill="#c8c8c8" />
<rect x="769" y="294" width="1" height="1" fill="#c8c8c8" />
<rect x="770" y="294" width="1" height="1" fill="#c8c8c8" />
<rect x="771" y="294" width="1" height="1" fill="#c8c8c8" />
<rect x="772" y="294" width="1" height="1" fill="#c8c8c8" />
<rect x="773" y="294" width="1" height="1" fill="#c8c8c8" />
<rect x="774" y="294" width="1" height="1" fill="#c8c8c8" />
<rect x="775" y="294" width="1" height="1" fill="#c8c8c8" />
<rect x="776" y="294" width="1" height="1" fill="#c8c8c8" />
<rect x="777" y="294" width="1" height="1" fill="#c8c8c8" />
<rect x="778" y="294" width="1" height="1" fill="#c8c8c8" />
<rect x="779" y="294" width="1" height="1" fill="#c8c8c8" />
<rect x="780" y="294" width="1" height="1" fill="#c8c8c8" />
<rect x="781" y="294" width="1" height="1" fill="#c8c8c8" />
<rect x="782" y="294" width="1" height="1" fill="#c8c8c8" />
<rect x="783" y="294" width="1" height="1" fill="#c8c8c8" />
<rect x="784" y="294" width="1" height="1" fill="#c8c8c8" />
<rect x="785" y="294" width="1" height="1" fill="#c8c8c8" />
<rect x="786" y="294" width="1" height="1" fill="#c8c8c8" />
<rect x="787" y="294" width="1" height="1" fill="#c8c8c8" />
<rect x="788" y="294" width="1" height="1" fill="#c8c8c8" />
<rect x="789" y="294" width="1" height="1" fill="#c8c8c8" />
<rect x="790" y="294" width="1" height="1" fill="#c8c8c8" />
<rect x="791" y="294" width="1" height="1" fill="#c8c8c8" />
<rect x="792" y="294" width="1" height="1" fill="#c8c8c8" />
<rect x="793" y="294" width="1" height="1" fill="#c8c8c8" />
<rect x="794" y="294" width="1" height="1" fill="#c8c8c8" />
<rect x="795" y="294" width="1" height="1" fill="#c8c8c8" />
<rect x="796" y="294" width="1" height="1" fill="#c8c8c8" />
<rect x="797" y="294" width="1" height="1" fill="#c8c8c8" />
<rect x="798" y="294" width="1" height="1" fill="#c8c8c8" />
<rect x="799" y="294" width="1" height="1" fill="#c8c8c8" />
<rect x="800" y="294" width="1" height="1" fill="#c8c8c8" />
<rect x="801" y="294" width="1" height="1" fill="#c8c8c8" />
<rect x="802" y="294" width="1" height="1" fill="#c8c8c8" />
<rect x="803" y="294" width="1" height="1" fill="#c8c8c8" />
<rect x="804" y="294" width="1" height="1" fill="#c8c8c8" />
<rect x="808" y="294" width="1" height="1" fill="#c8c8c8" />
<rect x="812" y="294" width="1" height="1" fill="#c8c8c8" />
<rect x="815" y="294" width="1" height="1" fill="#c8c8c8" />
<rect x="818" y="294" width="1" height="1" fill="#c8c8c8" />
<rect x="821" y="294" width="1" height="1" fill="#c8c8c8" />
<rect x="824" y="294" width="1" height="1" fill="#c8c8c8" />
<rect x="827" y="294" width="1" height="1" fill="#c8c8c8" />
<rect x="829" y="294" width="1" height="1" fill="#c8c8c8" />
<rect x="831" y="294" width="1" height="1" fill="#c8c8c8" />
<rect x="833" y="294" width="1" height="1" fill="#c8c8c8" />
<rect x="836" y="294" width="1" height="1" fill="#c8c8c8" />
<rect x="838" y="294" width="1" height="1" fill="#c8c8c8" />
<rect x="839" y="294" width="1" height="1" fill="#c8c8c8" />
<rect x="841" y="294" width="1" height="1" fill="#c8c8c8" />
<rect x="843" y="294" width="1" height="1" fill="#c8c8c8" />
<rect x="512" y="308" width="1" height="1" fill="#c8c8c8" />
<rect x="516" y="308" width="1" height="1" fill="#c8c8c8" />
<rect x="519" y="308" width="1" height="1" fill="#c8c8c8" />
<rect x="522" y="308" width="1" height="1" fill="#c8c8c8" />
<rect x="525" y="308" width="1" height="1" fill="#c8c8c8" />
<rect x="528" y="308" width="1" height="1" fill="#c8c8c8" />
<rect x="531" y="308" width="1" height="1" fill="#c8c8c8" />
<rect x="533" y="308" width="1" height="1" fill="#c8c8c8" />
<rect x="535" y="308" width="1" height="1" fill="#c8c8c8" />
<rect x="538" y="308" width="1" height="1" fill="#c8c8c8" />
<rect x="540" y="308" width="1" height="1" fill="#c8c8c8" />
<rect x="542" y="308" width="1" height="1" fill="#c8c8c8" />
<rect x="544" y="308" width="1" height="1" fill="#c8c8c8" />
<rect x="545" y="308" width="1" height="1" fill="#c8c8c8" />
<rect x="547" y="308" width="1" height="1" fill="#c8c8c8" />
<rect x="549" y="308" width="1" height="1" fill="#c8c8c8" />
<rect x="551" y="308" width="1" height="1" fill="#c8c8c8" />
<rect x="552" y="308" width="1" height="1" fill="#c8c8c8" />
<rect x="554" y="308" width="1" height="1" fill="#c8c8c8" />
<rect x="555" y="308" width="1" height="1" fill="#c8c8c8" />
<rect x="556" y="308" width="1" height="1" fill="#c8c8c8" />
<rect x="558" y="308" width="1" height="1" fill="#c8c8c8" />
<rect x="559" y="308" width="1" height="1" fill="#c8c8c8" />
<rect x="560" y="308" width="1" height="1" fill="#c8c8c8" />
<rect x="562" y="308" width="1" height="1" fill="#c8c8c8" />
<rect x="563" y="308" width="1" height="1" fill="#c8c8c8" />
<rect x="564" y="308" width="1" height="1" fill="#c8c8c8" />
<rect x="565" y="308" width="1" height="1" fill="#c8c8c8" />
<rect x="566" y="308" width="1" height="1" fill="#c8c8c8" />
<rect x="567" y="308" width="1" height="1" fill="#c8c8c8" />
<rect x="568" y="308" width="1" height="1" fill="#c8c8c8" />
<rect x="569" y="308" width="1" height="1" fill="#c8c8c8" />
<rect x="570" y="308" width="1" height="1" fill="#c8c8c8" />
<rect x="571" y="308" width="1" height="1" fill="#c8c8c8" />
<rect x="572" y="308" width="1" height="1" fill="#c8c8c8" />
<rect x="573" y="308" width="1" height="1" fill="#c8c8c8" />
<rect x="574" y="308" width="1" height="1" fill="#c8c8c8" />
<rect x="575" y="308" width="1" height="1" fill="#c8c8c8" />
<rect x="576" y="308" width="1" height="1" fill="#c8c8c8" />
<rect x="577" y="308" width="1" height="1" fill="#c8c8c8" />
<rect x="578" y="308" width="1" height="1" fill="#c8c8c8" />
<rect x="579" y="308" width="1" height="1" fill="#c8c8c8" />
<rect x="580" y="308" width="1" height="1" fill="#c8c8c8" />
<rect x="581" y="308" width="1" height="1" fill="#c8c8c8" />
<rect x="582" y="308" width="1" height="1" fill="#c8c8c8" />
<rect x="583" y="308" width="1" height="1" fill="#c8c8c8" />
<rect x="584" y="308" width="1" height="1" fill="#c8c8c8" />
<rect x="585" y="308" width="1" height="1" fill="#c8c8c8" />
<rect x="586" y="308" width="1" height="1" fill="#c8c8c8" />
<rect x="587" y="308" width="1" height="1" fill="#c8c8c8" />
<rect x="588" y="308" width="1" height="1" fill="#c8c8c8" />
<rect x="589" y="308" width="1" height="1" fill="#c8c8c8" />
<rect x="590" y="308" width="1" height="1" fill="#c8c8c8" />
<rect x="591" y="308" width="1" height="1" fill="#c8c8c8" />
<rect x="592" y="308" width="1" height="1" fill="#c8c8c8" />
<rect x="593" y="308" width="1" height="1" fill="#c8c8c8" />
<rect x="594" y="308" width="1" height="1" fill="#c8c8c8" />
<rect x="595" y="308" width="1" height="1" fill="#c8c8c8" />
<rect x="596" y="308" width="1" height="1" fill="#c8c8c8" />
<rect x="597" y="308" width="1" height="1" fill="#c8c8c8" />
<rect x="598" y="308" width="1" height="1" fill="#c8c8c8" />
<rect x="599" y="308" width="1" height="1" fill="#c8c8c8" />
<rect x="600" y="308" width="1" height="1" fill="#c8c8c8" />
<rect x="601" y="308" width="1" height="1" fill="#c8c8c8" />
<rect x="602" y="308" width="1" height="1" fill="#c8c8c8" />
<rect x="603" y="308" width="1" height="1" fill="#c8c8c8" />
<rect x="604" y="308" width="1" height="1" fill="#c8c8c8" />
<rect x="605" y="308" width="1" height="1" fill="#c8c8c8" />
<rect x="606" y="308" width="1" height="1" fill="#c8c8c8" />
<rect x="607" y="308" width="1" height="1" fill="#c8c8c8" />
<rect x="611" y="308" width="1" height="1" fill="#c8c8c8" />
<rect x="614" y="308" width="1" height="1" fill="#c8c8c8" />
<rect x="618" y="308" width="1" height="1" fill="#c8c8c8" />
<rect x="621" y="308" width="1" height="1" fill="#c8c8c8" />
<rect x="624" y="308" width="1" height="1" fill="#c8c8c8" />
<rect x="627" y="308" width="1" height="1" fill="#c8c8c8" />
<rect x="629" y="308" width="1" height="1" fill="#c8c8c8" />
<rect x="632" y="308" width="1" height="1" fill="#c8c8c8" />
<rect x="634" y="308" width="1" height="1" fill="#c8c8c8" />
<rect x="636" y="308" width="1" height="1" fill="#c8c8c8" />
<rect x="638" y="308" width="1" height="1" fill="#c8c8c8" />
<rect x="640" y="308" width="1" height="1" fill="#c8c8c8" />
<rect x="642" y="308" width="1" height="1" fill="#c8c8c8" />
<rect x="644" y="308" width="1" height="1" fill="#c8c8c8" />
<rect x="646" y="308" width="1" height="1" fill="#c8c8c8" />
<rect x="648" y="308" width="1" height="1" fill="#c8c8c8" />
<rect x="649" y="308" width="1" height="1" fill="#c8c8c8" />
<rect x="651" y="308" width="1" height="1" fill="#c8c8c8" />
<rect x="652" y="308" width="1" height="1" fill="#c8c8c8" />
<rect x="654" y="308" width="1" height="1" fill="#c8c8c8" />
<rect x="655" y="308" width="1" height="1" fill="#c8c8c8" />
<rect x="656" y="308" width="1" height="1" fill="#c8c8c8" />
<rect x="658" y="308" width="1" height="1" fill="#c8c8c8" />
<rect x="659" y="308" width="1" height="1" fill="#c8c8c8" />
<rect x="660" y="308" width="1" height="1" fill="#c8c8c8" />
<rect x="661" y="308" width="1" height="1" fill="#c8c8c8" />
<rect x="663" y="308" width="1" height="1" fill="#c8c8c8" />
<rect x="664" y="308" width="1" height="1" fill="#c8c8c8" />
<rect x="665" y="308" width="1" height="1" fill="#c8c8c8" />
<rect x="666" y="308" width="1" height="1" fill="#c8c8c8" />
<rect x="667" y="308" width="1" height="1" fill="#c8c8c8" />
<rect x="668" y="308" width="1" height="1" fill="#c8c8c8" />
<rect x="669" y="308" width="1" height="1" fill="#c8c8c8" />
<rect x="670" y="308" width="1" height="1" fill="#c8c8c8" />
<rect x="671" y="308" width="1" height="1" fill="#c8c8c8" />
<rect x="672" y="308" width="1" height="1" fill="#c8c8c8" />
<rect x="673" y="308" width="1" height="1" fill="#c8c8c8" />
<rect x="674" y="308" width="1" height="1" fill="#c8c8c8" />
<rect x="675" y="308" width="1" height="1" fill="#c8c8c8" />
<rect x="676" y="308" width="1" height="1" fill="#c8c8c8" />
<rect x="677" y="308" width="1" height="1" fill="#c8c8c8" />
<rect x="678" y="308" width="1" height="1" fill="#c8c8c8" />
<rect x="679" y="308" width="1" height="1" fill="#c8c8c8" />
<rect x="680" y="308" width="1" height="1" fill="#c8c8c8" />
<rect x="681" y="308" width="1" height="1" fill="#c8c8c8" />
<rect x="682" y="308" width="1" height="1" fill="#c8c8c8" />
<rect x="683" y="308" width="1" height="1" fill="#c8c8c8" />
<rect x="684" y="308" width="1" height="1" fill="#c8c8c8" />
<rect x="685" y="308" width="1" height="1" fill="#c8c8c8" />
<rect x="686" y="308" width="1" height="1" fill="#c8c8c8" />
<rect x="687" y="308" width="1" height="1" fill="#c8c8c8" />
<rect x="688" y="308" width="1" height="1" fill="#c8c8c8" />
<rect x="689" y="308" width="1" height="1" fill="#c8c8c8" />
<rect x="690" y="308" width="1" height="1" fill="#c8c8c8" />
<rect x="691" y="308" width="1" height="1" fill="#c8c8c8" />
<rect x="692" y="308" width="1" height="1" fill="#c8c8c8" />
<rect x="693" y="308" width="1" height="1" fill="#c8c8c8" />
<rect x="694" y="308" width="1" height="1" fill="#c8c8c8" />
<rect x="695" y="308" width="1" height="1" fill="#c8c8c8" />
<rect x="696" y="308" width="1" height="1" fill="#c8c8c8" />
<rect x="697" y="308" width="1" height="1" fill="#c8c8c8" />
<rect x="698" y="308" width="1" height="1" fill="#c8c8c8" />
<rect x="699" y="308" width="1" height="1" fill="#c8c8c8" />
<rect x="700" y="308" width="1" height="1" fill="#c8c8c8" />
<rect x="701" y="308" width="1" height="1" fill="#c8c8c8" />
<rect x="702" y="308" width="1" height="1" fill="#c8c8c8" />
<rect x="703" y="308" width="1" height="1" fill="#c8c8c8" />
<rect x="704" y="308" width="1" height="1" fill="#c8c8c8" />
<rect x="705" y="308" width="1" height="1" fill="#c8c8c8" />
<rect x="709" y="308" width="1" height="1" fill="#c8c8c8" />
<rect x="713" y="308" width="1" height="1" fill="#c8c8c8" />
<rect x="716" y="308" width="1" height="1" fill="#c8c8c8" />
<rect x="720" y="308" width="1" height="1" fill="#c8c8c8" />
<rect x="723" y="308" width="1" height="1" fill="#c8c8c8" />
<rect x="725" y="308" width="1" height="1" fill="#c8c8c8" />
<rect x="728" y="308" width="1" height="1" fill="#c8c8c8" />
<rect x="730" y="308" width="1" height="1" fill="#c8c8c8" />
<rect x="733" y="308" width="1" height="1" fill="#c8c8c8" />
<rect x="735" y="308" width="1" height="1" fill="#c8c8c8" />
<rect x="737" y="308" width="1" height="1" fill="#c8c8c8" />
<rect x="739" y="308" width="1" height="1" fill="#c8c8c8" />
<rect x="741" y="308" width="1" height="1" fill="#c8c8c8" />
<rect x="743" y="308" width="1" height="1" fill="#c8c8c8" />
<rect x="744" y="308" width="1" height="1" fill="#c8c8c8" />
<rect x="746" y="308" width="1" height="1" fill="#c8c8c8" />
<rect x="748" y="308" width="1" height="1" fill="#c8c8c8" />
<rect x="749" y="308" width="1" height="1" fill="#c8c8c8" />
<rect x="751" y="308" width="1" height="1" fill="#c8c8c8" />
<rect x="752" y="308" width="1" height="1" fill="#c8c8c8" />
<rect x="754" y="308" width="1" height="1" fill="#c8c8c8" />
<rect x="755" y="308" width="1" height="1" fill="#c8c8c8" />
<rect x="756" y="308" width="1" height="1" fill="#c8c8c8" />
<rect x="758" y="308" width="1" height="1" fill="#c8c8c8" />
<rect x="759" y="308" width="1" height="1" fill="#c8c8c8" />
<rect x="760" y="308" width="1" height="1" fill="#c8c8c8" />
<rect x="761" y="308" width="1" height="1" fill="#c8c8c8" />
<rect x="762" y="308" width="1" height="1" fill="#c8c8c8" />
<rect x="763" y="308" width="1" height="1" fill="#c8c8c8" />
<rect x="765" y="308" width="1" height="1" fill="#c8c8c8" />
<rect x="766" y="308" width="1" height="1" fill="#c8c8c8" />
<rect x="767" y="308" width="1" height="1" fill="#c8c8c8" />
<rect x="768" y="308" width="1" height="1" fill="#c8c8c8" />
<rect x="769" y="308" width="1" height="1" fill="#c8c8c8" />
<rect x="770" y="308" width="1" height="1" fill="#c8c8c8" />
<rect x="771" y="308" width="1" height="1" fill="#c8c8c8" />
<rect x="772" y="308" width="1" height="1" fill="#c8c8c8" />
<rect x="773" y="308" width="1" height="1" fill="#c8c8c8" />
<rect x="774" y="308" width="1" height="1" fill="#c8c8c8" />
<rect x="775" y="308" width="1" height="1" fill="#c8c8c8" />
<rect x="776" y="308" width="1" height="1" fill="#c8c8c8" />
<rect x="777" y="308" width="1" height="1" fill="#c8c8c8" />
<rect x="778" y="308" width="1" height="1" fill="#c8c8c8" />
<rect x="779" y="308" width="1" height="1" fill="#c8c8c8" />
<rect x="780" y="308" width="1" height="1" fill="#c8c8c8" />
<rect x="781" y="308" width="1" height="1" fill="#c8c8c8" />
<rect x="782" y="308" width="1" height="1" fill="#c8c8c8" />
<rect x="783" y="308" width="1" height="1" fill="#c8c8c8" />
<rect x="784" y="308" width="1" height="1" fill="#c8c8c8" />
<rect x="785" y="308" width="1" height="1" fill="#c8c8c8" />
<rect x="786" y="308" width="1" height="1" fill="#c8c8c8" />
<rect x="787" y="308" width="1" height="1" fill="#c8c8c8" />
<rect x="788" y="308" width="1" height="1" fill="#c8c8c8" />
<rect x="789" y="308" width="1" height="1" fill="#c8c8c8" />
<rect x="790" y="308" width="1" height="1" fill="#c8c8c8" />
<rect x="791" y="308" width="1" height="1" fill="#c8c8c8" />
<rect x="792" y="308" width="1" height="1" fill="#c8c8c8" />
<rect x="793" y="308" width="1" height="1" fill="#c8c8c8" />
<rect x="794" y="308" width="1" height="1" fill="#c8c8c8" />
<rect x="795" y="308" width="1" height="1" fill="#c8c8c8" />
<rect x="796" y="308" width="1" height="1" fill="#c8c8c8" />
<rect x="797" y="308" width="1" height="1" fill="#c8c8c8" />
<rect x="798" y="308" width="1" height="1" fill="#c8c8c8" />
<rect x="799" y="308" width="1" height="1" fill="#c8c8c8" />
<rect x="800" y="308" width="1" height="1" fill="#c8c8c8" />
<rect x="801" y="308" width="1" height="1" fill="#c8c8c8" />
<rect x="802" y="308" width="1" height="1" fill="#c8c8c8" />
<rect x="803" y="308" width="1" height="1" fill="#c8c8c8" />
<rect x="804" y="308" width="1" height="1" fill="#c8c8c8" />
<rect x="808" y="308" width="1" height="1" fill="#c8c8c8" />
<rect x="812" y="308" width="1" height="1" fill="#c8c8c8" />
<rect x="815" y="308" width="1" height="1" fill="#c8c8c8" />
<rect x="818" y="308" width="1" height="1" fill="#c8c8c8" />
<rect x="821" y="308" width="1" height="1" fill="#c8c8c8" />
<rect x="824" y="308" width="1" height="1" fill="#c8c8c8" />
<rect x="827" y="308" width="1" height="1" fill="#c8c8c8" />
<rect x="829" y="308" width="1" height="1" fill="#c8c8c8" />
<rect x="831" y="308" width="1" height="1" fill="#c8c8c8" />
<rect x="833" y="308" width="1" height="1" fill="#c8c8c8" />
<rect x="836" y="308" width="1" height="1" fill="#c8c8c8" />
<rect x="838" y="308" width="1" height="1" fill="#c8c8c8" />
<rect x="839" y="308" width="1" height="1" fill="#c8c8c8" />
<rect x="841" y="308" width="1" height="1" fill="#c8c8c8" />
<rect x="843" y="308" width="1" height="1" fill="#c8c8c8" />
<rect x="512" y="323" width="1" height="1" fill="#c8c8c8" />
<rect x="516" y="323" width="1" height="1" fill="#c8c8c8" />
<rect x="519" y="323" width="1" height="1" fill="#c8c8c8" />
<rect x="522" y="323" width="1" height="1" fill="#c8c8c8" />
<rect x="525" y="323" width="1" height="1" fill="#c8c8c8" />
<rect x="528" y="323" width="1" height="1" fill="#c8c8c8" />
<rect x="531" y="323" width="1" height="1" fill="#c8c8c8" />
<rect x="533" y="323" width="1" height="1" fill="#c8c8c8" />
<rect x="535" y="323" width="1" height="1" fill="#c8c8c8" />
<rect x="538" y="323" width="1" height="1" fill="#c8c8c8" />
<rect x="540" y="323" width="1" height="1" fill="#c8c8c8" />
<rect x="542" y="323" width="1" height="1" fill="#c8c8c8" />
<rect x="544" y="323" width="1" height="1" fill="#c8c8c8" />
<rect x="545" y="323" width="1" height="1" fill="#c8c8c8" />
<rect x="547" y="323" width="1" height="1" fill="#c8c8c8" />
<rect x="549" y="323" width="1" height="1" fill="#c8c8c8" />
<rect x="551" y="323" width="1" height="1" fill="#c8c8c8" />
<rect x="552" y="323" width="1" height="1" fill="#c8c8c8" />
<rect x="554" y="323" width="1" height="1" fill="#c8c8c8" />
<rect x="555" y="323" width="1" height="1" fill="#c8c8c8" />
<rect x="556" y="323" width="1" height="1" fill="#c8c8c8" />
<rect x="558" y="323" width="1" height="1" fill="#c8c8c8" />
<rect x="559" y="323" width="1" height="1" fill="#c8c8c8" />
<rect x="560" y="323" width="1" height="1" fill="#c8c8c8" />
<rect x="562" y="323" width="1" height="1" fill="#c8c8c8" />
<rect x="563" y="323" width="1" height="1" fill="#c8c8c8" />
<rect x="564" y="323" width="1" height="1" fill="#c8c8c8" />
<rect x="565" y="323" width="1" height="1" fill="#c8c8c8" />
<rect x="566" y="323" width="1" height="1" fill="#c8c8c8" />
<rect x="567" y="323" width="1" height="1" fill="#c8c8c8" />
<rect x="568" y="323" width="1" height="1" fill="#c8c8c8" />
<rect x="569" y="323" width="1" height="1" fill="#c8c8c8" />
<rect x="570" y="323" width="1" height="1" fill="#c8c8c8" />
<rect x="571" y="323" width="1" height="1" fill="#c8c8c8" />
<rect x="572" y="323" width="1" height="1" fill="#c8c8c8" />
<rect x="573" y="323" width="1" height="1" fill="#c8c8c8" />
<rect x="574" y="323" width="1" height="1" fill="#c8c8c8" />
<rect x="575" y="323" width="1" height="1" fill="#c8c8c8" />
<rect x="576" y="323" width="1" height="1" fill="#c8c8c8" />
<rect x="577" y="323" width="1" height="1" fill="#c8c8c8" />
<rect x="578" y="323" width="1" height="1" fill="#c8c8c8" />
<rect x="579" y="323" width="1" height="1" fill="#c8c8c8" />
<rect x="580" y="323" width="1" height="1" fill="#c8c8c8" />
<rect x="581" y="323" width="1" height="1" fill="#c8c8c8" />
<rect x="582" y="323" width="1" height="1" fill="#c8c8c8" />
<rect x="583" y="323" width="1" height="1" fill="#c8c8c8" />
<rect x="584" y="323" width="1" height="1" fill="#c8c8c8" />
<rect x="585" y="323" width="1" height="1" fill="#c8c8c8" />
<rect x="586" y="323" width="1" height="1" fill="#c8c8c8" />
<rect x="587" y="323" width="1" height="1" fill="#c8c8c8" />
<rect x="588" y="323" width="1" height="1" fill="#c8c8c8" />
<rect x="589" y="323" width="1" height="1" fill="#c8c8c8" />
<rect x="590" y="323" width="1" height="1" fill="#c8c8c8" />
<rect x="591" y="323" width="1" height="1" fill="#c8c8c8" />
<rect x="592" y="323" width="1" height="1" fill="#c8c8c8" />
<rect x="593" y="323" width="1" height="1" fill="#c8c8c8" />
<rect x="594" y="323" width="1" height="1" fill="#c8c8c8" />
<rect x="595" y="323" width="1" height="1" fill="#c8c8c8" />
<rect x="596" y="323" width="1" height="1" fill="#c8c8c8" />
<rect x="597" y="323" width="1" height="1" fill="#c8c8c8" />
<rect x="598" y="323" width="1" height="1" fill="#c8c8c8" />
<rect x="599" y="323" width="1" height="1" fill="#c8c8c8" />
<rect x="600" y="323" width="1" height="1" fill="#c8c8c8" />
<rect x="601" y="323" width="1" height="1" fill="#c8c8c8" />
<rect x="602" y="323" width="1" height="1" fill="#c8c8c8" />
<rect x="603" y="323" width="1" height="1" fill="#c8c8c8" />
<rect x="604" y="323" width="1" height="1" fill="#c8c8c8" />
<rect x="605" y="323" width="1" height="1" fill="#c8c8c8" />
<rect x="606" y="323" width="1" height="1" fill="#c8c8c8" />
<rect x="607" y="323" width="1" height="1" fill="#c8c8c8" />
<rect x="611" y="323" width="1" height="1" fill="#c8c8c8" />
<rect x="614" y="323" width="1" height="1" fill="#c8c8c8" />
<rect x="618" y="323" width="1" height="1" fill="#c8c8c8" />
<rect x="621" y="323" width="1" height="1" fill="#c8c8c8" />
<rect x="624" y="323" width="1" height="1" fill="#c8c8c8" />
<rect x="627" y="323" width="1" height="1" fill="#c8c8c8" />
<rect x="629" y="323" width="1" height="1" fill="#c8c8c8" />
<rect x="632" y="323" width="1" height="1" fill="#c8c8c8" />
<rect x="634" y="323" width="1" height="1" fill="#c8c8c8" />
<rect x="636" y="323" width="1" height="1" fill="#c8c8c8" />
<rect x="638" y="323" width="1" height="1" fill="#c8c8c8" />
<rect x="640" y="323" width="1" height="1" fill="#c8c8c8" />
<rect x="642" y="323" width="1" height="1" fill="#c8c8c8" />
<rect x="644" y="323" width="1" height="1" fill="#c8c8c8" />
<rect x="646" y="323" width="1" height="1" fill="#c8c8c8" />
<rect x="648" y="323" width="1" height="1" fill="#c8c8c8" />
<rect x="649" y="323" width="1" height="1" fill="#c8c8c8" />
<rect x="651" y="323" width="1" height="1" fill="#c8c8c8" />
<rect x="652" y="323" width="1" height="1" fill="#c8c8c8" />
<rect x="654" y="323" width="1" height="1" fill="#c8c8c8" />
<rect x="655" y="323" width="1" height="1" fill="#c8c8c8" />
<rect x="656" y="323" width="1" height="1" fill="#c8c8c8" />
<rect x="658" y="323" width="1" height="1" fill="#c8c8c8" />
<rect x="659" y="323" width="1" height="1" fill="#c8c8c8" />
<rect x="660" y="323" width="1" height="1" fill="#c8c8c8" />
<rect x="661" y="323" width="1" height="1" fill="#c8c8c8" />
<rect x="663" y="323" width="1" height="1" fill="#c8c8c8" />
<rect x="664" y="323" width="1" height="1" fill="#c8c8c8" />
<rect x="665" y="323" width="1" height="1" fill="#c8c8c8" />
<rect x="666" y="323" width="1" height="1" fill="#c8c8c8" />
<rect x="667" y="323" width="1" height="1" fill="#c8c8c8" />
<rect x="668" y="323" width="1" height="1" fill="#c8c8c8" />
<rect x="669" y="323" width="1" height="1" fill="#c8c8c8" />
<rect x="670" y="323" width="1" height="1" fill="#c8c8c8" />
<rect x="671" y="323" width="1" height="1" fill="#c8c8c8" />
<rect x="672" y="323" width="1" height="1" fill="#c8c8c8" />
<rect x="673" y="323" width="1" height="1" fill="#c8c8c8" />
<rect x="674" y="323" width="1" height="1" fill="#c8c8c8" />
<rect x="675" y="323" width="1" height="1" fill="#c8c8c8" />
<rect x="676" y="323" width="1" height="1" fill="#c8c8c8" />
<rect x="677" y="323" width="1" height="1" fill="#c8c8c8" />
<rect x="678" y="323" width="1" height="1" fill="#c8c8c8" />
<rect x="679" y="323" width="1" height="1" fill="#c8c8c8" />
<rect x="680" y="323" width="1" height="1" fill="#c8c8c8" />
<rect x="681" y="323" width="1" height="1" fill="#c8c8c8" />
<rect x="682" y="323" width="1" height="1" fill="#c8c8c8" />
<rect x="683" y="323" width="1" height="1" fill="#c8c8c8" />
<rect x="684" y="323" width="1" height="1" fill="#c8c8c8" />
<rect x="685" y="323" width="1" height="1" fill="#c8c8c8" />
<rect x="686" y="323" width="1" height="1" fill="#c8c8c8" />
<rect x="687" y="323" width="1" height="1" fill="#c8c8c8" />
<rect x="688" y="323" width="1" height="1" fill="#c8c8c8" />
<rect x="689" y="323" width="1" height="1" fill="#c8c8c8" />
<rect x="690" y="323" width="1" height="1" fill="#c8c8c8" />
<rect x="691" y="323" width="1" height="1" fill="#c8c8c8" />
<rect x="692" y="323" width="1" height="1" fill="#c8c8c8" />
<rect x="693" y="323" width="1" height="1" fill="#c8c8c8" />
<rect x="694" y="323" width="1" height="1" fill="#c8c8c8" />
<rect x="695" y="323" width="1" height="1" fill="#c8c8c8" />
<rect x="696" y="323" width="1" height="1" fill="#c8c8c8" />
<rect x="697" y="323" width="1" height="1" fill="#c8c8c8" />
<rect x="698" y="323" width="1" height="1" fill="#c8c8c8" />
<rect x="699" y="323" width="1" height="1" fill="#c8c8c8" />
<rect x="700" y="323" width="1" height="1" fill="#c8c8c8" />
<rect x="701" y="323" width="1" height="1" fill="#c8c8c8" />
<rect x="702" y="323" width="1" height="1" fill="#c8c8c8" />
<rect x="703" y="323" width="1" height="1" fill="#c8c8c8" />
<rect x="704" y="323" width="1" height="1" fill="#c8c8c8" />
<rect x="705" y="323" width="1" height="1" fill="#c8c8c8" />
<rect x="709" y="323" width="1" height="1" fill="#c8c8c8" />
<rect x="713" y="323" width="1" height="1" fill="#c8c8c8" />
<rect x="716" y="323" width="1" height="1" fill="#c8c8c8" />
<rect x="720" y="323" width="1" height="1" fill="#c8c8c8" />
<rect x="723" y="323" width="1" height="1" fill="#c8c8c8" />
<rect x="725" y="323" width="1" height="1" fill="#c8c8c8" />
<rect x="728" y="323" width="1" height="1" fill="#c8c8c8" />
<rect x="730" y="323" width="1" height="1" fill="#c8c8c8" />
<rect x="733" y="323" width="1" height="1" fill="#c8c8c8" />
<rect x="735" y="323" width="1" height="1" fill="#c8c8c8" />
<rect x="737" y="323" width="1" height="1" fill="#c8c8c8" />
<rect x="739" y="323" width="1" height="1" fill="#c8c8c8" />
<rect x="741" y="323" width="1" height="1" fill="#c8c8c8" />
<rect x="743" y="323" width="1" height="1" fill="#c8c8c8" />
<rect x="744" y="323" width="1" height="1" fill="#c8c8c8" />
<rect x="746" y="323" width="1" height="1" fill="#c8c8c8" />
<rect x="748" y="323" width="1" height="1" fill="#c8c8c8" />
<rect x="749" y="323" width="1" height="1" fill="#c8c8c8" />
<rect x="751" y="323" width="1" height="1" fill="#c8c8c8" />
<rect x="752" y="323" width="1" height="1" fill="#c8c8c8" />
<rect x="754" y="323" width="1" height="1" fill="#c8c8c8" />
<rect x="755" y="323" width="1" height="1" fill="#c8c8c8" />
<rect x="756" y="323" width="1" height="1" fill="#c8c8c8" />
<rect x="758" y="323" width="1" height="1" fill="#c8c8c8" />
<rect x="759" y="323" width="1" height="1" fill="#c8c8c8" />
<rect x="760" y="323" width="1" height="1" fill="#c8c8c8" />
<rect x="761" y="323" width="1" height="1" fill="#c8c8c8" />
<rect x="762" y="323" width="1" height="1" fill="#c8c8c8" />
<rect x="763" y="323" width="1" height="1" fill="#c8c8c8" />
<rect x="765" y="323" width="1" height="1" fill="#c8c8c8" />
<rect x="766" y="323" width="1" height="1" fill="#c8c8c8" />
<rect x="767" y="323" width="1" height="1" fill="#c8c8c8" />
<rect x="768" y="323" width="1" height="1" fill="#c8c8c8" />
<rect x="769" y="323" width="1" height="1" fill="#c8c8c8" />
<rect x="770" y="323" width="1" height="1" fill="#c8c8c8" />
<rect x="771" y="323" width="1" height="1" fill="#c8c8c8" />
<rect x="772" y="323" width="1" height="1" fill="#c8c8c8" />
<rect x="773" y="323" width="1" height="1" fill="#c8c8c8" />
<rect x="774" y="323" width="1" height="1" fill="#c8c8c8" />
<rect x="775" y="323" width="1" height="1" fill="#c8c8c8" />
<rect x="776" y="323" width="1" height="1" fill="#c8c8c8" />
<rect x="777" y="323" width="1" height="1" fill="#c8c8c8" />
<rect x="778" y="323" width="1" height="1" fill="#c8c8c8" />
<rect x="779" y="323" width="1" height="1" fill="#c8c8c8" />
<rect x="780" y="323" width="1" height="1" fill="#c8c8c8" />
<rect x="781" y="323" width="1" height="1" fill="#c8c8c8" />
<rect x="782" y="323" width="1" height="1" fill="#c8c8c8" />
<rect x="783" y="323" width="1" height="1" fill="#c8c8c8" />
<rect x="784" y="323" width="1" height="1" fill="#c8c8c8" />
<rect x="785" y="323" width="1" height="1" fill="#c8c8c8" />
<rect x="786" y="323" width="1" height="1" fill="#c8c8c8" />
<rect x="787" y="323" width="1" height="1" fill="#c8c8c8" />
<rect x="788" y="323" width="1" height="1" fill="#c8c8c8" />
<rect x="789" y="323" width="1" height="1" fill="#c8c8c8" />
<rect x="790" y="323" width="1" height="1" fill="#c8c8c8" />
<rect x="791" y="323" width="1" height="1" fill="#c8c8c8" />
<rect x="792" y="323" width="1" height="1" fill="#c8c8c8" />
<rect x="793" y="323" width="1" height="1" fill="#c8c8c8" />
<rect x="794" y="323" width="1" height="1" fill="#c8c8c8" />
<rect x="795" y="323" width="1" height="1" fill="#c8c8c8" />
<rect x="796" y="323" width="1" height="1" fill="#c8c8c8" />
<rect x="797" y="323" width="1" height="1" fill="#c8c8c8" />
<rect x="798" y="323" width="1" height="1" fill="#c8c8c8" />
<rect x="799" y="323" width="1" height="1" fill="#c8c8c8" />
<rect x="800" y="323" width="1" height="1" fill="#c8c8c8" />
<rect x="801" y="323" width="1" height="1" fill="#c8c8c8" />
<rect x="802" y="323" width="1" height="1" fill="#c8c8c8" />
<rect x="803" y="323" width="1" height="1" fill="#c8c8c8" />
<rect x="804" y="323" width="1" height="1" fill="#c8c8c8" />
<rect x="808" y="323" width="1" height="1" fill="#c8c8c8" />
<rect x="812" y="323" width="1" height="1" fill="#c8c8c8" />
<rect x="815" y="323" width="1" height="1" fill="#c8c8c8" />
<rect x="818" y="323" width="1" height="1" fill="#c8c8c8" />
<rect x="821" y="323" width="1" height="1" fill="#c8c8c8" />
<rect x="824" y="323" width="1" height="1" fill="#c8c8c8" />
<rect x="827" y="323" width="1" height="1" fill="#c8c8c8" />
<rect x="829" y="323" width="1" height="1" fill="#c8c8c8" />
<rect x="831" y="323" width="1" height="1" fill="#c8c8c8" />
<rect x="833" y="323" width="1" height="1" fill="#c8c8c8" />
<rect x="836" y="323" width="1" height="1" fill="#c8c8c8" />
<rect x="838" y="323" width="1" height="1" fill="#c8c8c8" />
<rect x="839" y="323" width="1" height="1" fill="#c8c8c8" />
<rect x="841" y="323" width="1" height="1" fill="#c8c8c8" />
<rect x="843" y="323" width="1" height="1" fill="#c8c8c8" />
<path d="M508,338.5 H576.5 V303.5 H584.5 V338.5 H620.5 L623.5,337.5 V326.5 H626.5 V338.5 H843" fill="none" stroke="#58e858" stroke-width="1" shape-rendering="crispEdges"/>
<rect x="508" y="339" width="336" height="14" fill="#f0f0f0" />
<rect x="508" y="339" width="14" height="14" fill="#f8f8f8" />
<rect x="522" y="339" width="1" height="14" fill="#d0d0d0" />
<path d="M512,345.5 L518,342 L518,349 Z" fill="#000"/>
<rect x="829" y="339" width="15" height="14" fill="#f8f8f8" />
<rect x="828" y="339" width="1" height="14" fill="#d0d0d0" />
<path d="M833,342 L839,345.5 L833,349 Z" fill="#000"/>
<rect x="462" y="353" width="382" height="1" fill="#909090" />
<rect x="463" y="355" width="419" height="19" fill="#000" />
<rect x="882" y="355" width="1" height="20" fill="#909090" />
<rect x="462" y="374" width="421" height="1" fill="#909090" />
<text x="510" y="370" font-size="11" fill="#f0f0f0" text-anchor="middle" >10 kHz</text>
<text x="607" y="370" font-size="11" fill="#f0f0f0" text-anchor="middle" >100 kHz</text>
<text x="706" y="370" font-size="11" fill="#f0f0f0" text-anchor="middle" >1 MHz</text>
<text x="805" y="370" font-size="11" fill="#f0f0f0" text-anchor="middle" >10 MHz</text>
<rect x="465.0" y="213" width="40" height="14" rx="4" fill="#00f800" stroke="#0a6a0a" stroke-width="0.6"/>
<text x="502.5" y="224.5" font-size="11" fill="#000" text-anchor="end" >30.000</text>
<text x="503" y="254.0" font-size="11" fill="#3ee03e" text-anchor="end" >22.500</text>
<text x="503" y="283.75" font-size="11" fill="#3ee03e" text-anchor="end" >15.000</text>
<text x="503" y="313.5" font-size="11" fill="#3ee03e" text-anchor="end" >7.500</text>
<rect x="465.0" y="332" width="40" height="14" rx="4" fill="#00f800" stroke="#0a6a0a" stroke-width="0.6"/>
<text x="502.5" y="343.5" font-size="11" fill="#000" text-anchor="end" >0.000</text>
<rect x="463" y="384" width="53" height="164" fill="#000" />
<path d="M463,397 V387 Q463,384 466,384 H513 Q516,384 516,387 V397 Z" fill="#00ff08"/>
<rect x="516" y="384" width="1" height="165" fill="#a0a0a0" />
<rect x="517" y="384" width="326" height="37" fill="#ffffff" />
<rect x="517.5" y="383.5" width="325" height="36" fill="none" stroke="#b8b8b8" stroke-width="1"/>
<rect x="517" y="421" width="326" height="113" fill="#000" />
<rect x="558" y="421" width="1" height="1" fill="#c8c8c8" />
<rect x="558" y="424" width="1" height="1" fill="#c8c8c8" />
<rect x="558" y="427" width="1" height="1" fill="#c8c8c8" />
<rect x="558" y="429" width="1" height="1" fill="#c8c8c8" />
<rect x="558" y="432" width="1" height="1" fill="#c8c8c8" />
<rect x="558" y="435" width="1" height="1" fill="#c8c8c8" />
<rect x="558" y="438" width="1" height="1" fill="#c8c8c8" />
<rect x="558" y="441" width="1" height="1" fill="#c8c8c8" />
<rect x="558" y="444" width="1" height="1" fill="#c8c8c8" />
<rect x="558" y="446" width="1" height="1" fill="#c8c8c8" />
<rect x="558" y="449" width="1" height="1" fill="#c8c8c8" />
<rect x="558" y="452" width="1" height="1" fill="#c8c8c8" />
<rect x="558" y="455" width="1" height="1" fill="#c8c8c8" />
<rect x="558" y="458" width="1" height="1" fill="#c8c8c8" />
<rect x="558" y="461" width="1" height="1" fill="#c8c8c8" />
<rect x="558" y="463" width="1" height="1" fill="#c8c8c8" />
<rect x="558" y="466" width="1" height="1" fill="#c8c8c8" />
<rect x="558" y="469" width="1" height="1" fill="#c8c8c8" />
<rect x="558" y="472" width="1" height="1" fill="#c8c8c8" />
<rect x="558" y="475" width="1" height="1" fill="#c8c8c8" />
<rect x="558" y="478" width="1" height="1" fill="#c8c8c8" />
<rect x="558" y="480" width="1" height="1" fill="#c8c8c8" />
<rect x="558" y="483" width="1" height="1" fill="#c8c8c8" />
<rect x="558" y="486" width="1" height="1" fill="#c8c8c8" />
<rect x="558" y="489" width="1" height="1" fill="#c8c8c8" />
<rect x="558" y="492" width="1" height="1" fill="#c8c8c8" />
<rect x="558" y="494" width="1" height="1" fill="#c8c8c8" />
<rect x="558" y="497" width="1" height="1" fill="#c8c8c8" />
<rect x="558" y="500" width="1" height="1" fill="#c8c8c8" />
<rect x="558" y="503" width="1" height="1" fill="#c8c8c8" />
<rect x="558" y="506" width="1" height="1" fill="#c8c8c8" />
<rect x="558" y="509" width="1" height="1" fill="#c8c8c8" />
<rect x="558" y="511" width="1" height="1" fill="#c8c8c8" />
<rect x="558" y="514" width="1" height="1" fill="#c8c8c8" />
<rect x="558" y="517" width="1" height="1" fill="#c8c8c8" />
<rect x="558" y="520" width="1" height="1" fill="#c8c8c8" />
<rect x="558" y="523" width="1" height="1" fill="#c8c8c8" />
<rect x="558" y="526" width="1" height="1" fill="#c8c8c8" />
<rect x="558" y="528" width="1" height="1" fill="#c8c8c8" />
<rect x="558" y="531" width="1" height="1" fill="#c8c8c8" />
<rect x="598" y="421" width="1" height="1" fill="#c8c8c8" />
<rect x="598" y="424" width="1" height="1" fill="#c8c8c8" />
<rect x="598" y="427" width="1" height="1" fill="#c8c8c8" />
<rect x="598" y="429" width="1" height="1" fill="#c8c8c8" />
<rect x="598" y="432" width="1" height="1" fill="#c8c8c8" />
<rect x="598" y="435" width="1" height="1" fill="#c8c8c8" />
<rect x="598" y="438" width="1" height="1" fill="#c8c8c8" />
<rect x="598" y="441" width="1" height="1" fill="#c8c8c8" />
<rect x="598" y="444" width="1" height="1" fill="#c8c8c8" />
<rect x="598" y="446" width="1" height="1" fill="#c8c8c8" />
<rect x="598" y="449" width="1" height="1" fill="#c8c8c8" />
<rect x="598" y="452" width="1" height="1" fill="#c8c8c8" />
<rect x="598" y="455" width="1" height="1" fill="#c8c8c8" />
<rect x="598" y="458" width="1" height="1" fill="#c8c8c8" />
<rect x="598" y="461" width="1" height="1" fill="#c8c8c8" />
<rect x="598" y="463" width="1" height="1" fill="#c8c8c8" />
<rect x="598" y="466" width="1" height="1" fill="#c8c8c8" />
<rect x="598" y="469" width="1" height="1" fill="#c8c8c8" />
<rect x="598" y="472" width="1" height="1" fill="#c8c8c8" />
<rect x="598" y="475" width="1" height="1" fill="#c8c8c8" />
<rect x="598" y="478" width="1" height="1" fill="#c8c8c8" />
<rect x="598" y="480" width="1" height="1" fill="#c8c8c8" />
<rect x="598" y="483" width="1" height="1" fill="#c8c8c8" />
<rect x="598" y="486" width="1" height="1" fill="#c8c8c8" />
<rect x="598" y="489" width="1" height="1" fill="#c8c8c8" />
<rect x="598" y="492" width="1" height="1" fill="#c8c8c8" />
<rect x="598" y="494" width="1" height="1" fill="#c8c8c8" />
<rect x="598" y="497" width="1" height="1" fill="#c8c8c8" />
<rect x="598" y="500" width="1" height="1" fill="#c8c8c8" />
<rect x="598" y="503" width="1" height="1" fill="#c8c8c8" />
<rect x="598" y="506" width="1" height="1" fill="#c8c8c8" />
<rect x="598" y="509" width="1" height="1" fill="#c8c8c8" />
<rect x="598" y="511" width="1" height="1" fill="#c8c8c8" />
<rect x="598" y="514" width="1" height="1" fill="#c8c8c8" />
<rect x="598" y="517" width="1" height="1" fill="#c8c8c8" />
<rect x="598" y="520" width="1" height="1" fill="#c8c8c8" />
<rect x="598" y="523" width="1" height="1" fill="#c8c8c8" />
<rect x="598" y="526" width="1" height="1" fill="#c8c8c8" />
<rect x="598" y="528" width="1" height="1" fill="#c8c8c8" />
<rect x="598" y="531" width="1" height="1" fill="#c8c8c8" />
<rect x="639" y="421" width="1" height="1" fill="#c8c8c8" />
<rect x="639" y="424" width="1" height="1" fill="#c8c8c8" />
<rect x="639" y="427" width="1" height="1" fill="#c8c8c8" />
<rect x="639" y="429" width="1" height="1" fill="#c8c8c8" />
<rect x="639" y="432" width="1" height="1" fill="#c8c8c8" />
<rect x="639" y="435" width="1" height="1" fill="#c8c8c8" />
<rect x="639" y="438" width="1" height="1" fill="#c8c8c8" />
<rect x="639" y="441" width="1" height="1" fill="#c8c8c8" />
<rect x="639" y="444" width="1" height="1" fill="#c8c8c8" />
<rect x="639" y="446" width="1" height="1" fill="#c8c8c8" />
<rect x="639" y="449" width="1" height="1" fill="#c8c8c8" />
<rect x="639" y="452" width="1" height="1" fill="#c8c8c8" />
<rect x="639" y="455" width="1" height="1" fill="#c8c8c8" />
<rect x="639" y="458" width="1" height="1" fill="#c8c8c8" />
<rect x="639" y="461" width="1" height="1" fill="#c8c8c8" />
<rect x="639" y="463" width="1" height="1" fill="#c8c8c8" />
<rect x="639" y="466" width="1" height="1" fill="#c8c8c8" />
<rect x="639" y="469" width="1" height="1" fill="#c8c8c8" />
<rect x="639" y="472" width="1" height="1" fill="#c8c8c8" />
<rect x="639" y="475" width="1" height="1" fill="#c8c8c8" />
<rect x="639" y="478" width="1" height="1" fill="#c8c8c8" />
<rect x="639" y="480" width="1" height="1" fill="#c8c8c8" />
<rect x="639" y="483" width="1" height="1" fill="#c8c8c8" />
<rect x="639" y="486" width="1" height="1" fill="#c8c8c8" />
<rect x="639" y="489" width="1" height="1" fill="#c8c8c8" />
<rect x="639" y="492" width="1" height="1" fill="#c8c8c8" />
<rect x="639" y="494" width="1" height="1" fill="#c8c8c8" />
<rect x="639" y="497" width="1" height="1" fill="#c8c8c8" />
<rect x="639" y="500" width="1" height="1" fill="#c8c8c8" />
<rect x="639" y="503" width="1" height="1" fill="#c8c8c8" />
<rect x="639" y="506" width="1" height="1" fill="#c8c8c8" />
<rect x="639" y="509" width="1" height="1" fill="#c8c8c8" />
<rect x="639" y="511" width="1" height="1" fill="#c8c8c8" />
<rect x="639" y="514" width="1" height="1" fill="#c8c8c8" />
<rect x="639" y="517" width="1" height="1" fill="#c8c8c8" />
<rect x="639" y="520" width="1" height="1" fill="#c8c8c8" />
<rect x="639" y="523" width="1" height="1" fill="#c8c8c8" />
<rect x="639" y="526" width="1" height="1" fill="#c8c8c8" />
<rect x="639" y="528" width="1" height="1" fill="#c8c8c8" />
<rect x="639" y="531" width="1" height="1" fill="#c8c8c8" />
<rect x="680" y="421" width="1" height="1" fill="#c8c8c8" />
<rect x="680" y="424" width="1" height="1" fill="#c8c8c8" />
<rect x="680" y="427" width="1" height="1" fill="#c8c8c8" />
<rect x="680" y="429" width="1" height="1" fill="#c8c8c8" />
<rect x="680" y="432" width="1" height="1" fill="#c8c8c8" />
<rect x="680" y="435" width="1" height="1" fill="#c8c8c8" />
<rect x="680" y="438" width="1" height="1" fill="#c8c8c8" />
<rect x="680" y="441" width="1" height="1" fill="#c8c8c8" />
<rect x="680" y="444" width="1" height="1" fill="#c8c8c8" />
<rect x="680" y="446" width="1" height="1" fill="#c8c8c8" />
<rect x="680" y="449" width="1" height="1" fill="#c8c8c8" />
<rect x="680" y="452" width="1" height="1" fill="#c8c8c8" />
<rect x="680" y="455" width="1" height="1" fill="#c8c8c8" />
<rect x="680" y="458" width="1" height="1" fill="#c8c8c8" />
<rect x="680" y="461" width="1" height="1" fill="#c8c8c8" />
<rect x="680" y="463" width="1" height="1" fill="#c8c8c8" />
<rect x="680" y="466" width="1" height="1" fill="#c8c8c8" />
<rect x="680" y="469" width="1" height="1" fill="#c8c8c8" />
<rect x="680" y="472" width="1" height="1" fill="#c8c8c8" />
<rect x="680" y="475" width="1" height="1" fill="#c8c8c8" />
<rect x="680" y="478" width="1" height="1" fill="#c8c8c8" />
<rect x="680" y="480" width="1" height="1" fill="#c8c8c8" />
<rect x="680" y="483" width="1" height="1" fill="#c8c8c8" />
<rect x="680" y="486" width="1" height="1" fill="#c8c8c8" />
<rect x="680" y="489" width="1" height="1" fill="#c8c8c8" />
<rect x="680" y="492" width="1" height="1" fill="#c8c8c8" />
<rect x="680" y="494" width="1" height="1" fill="#c8c8c8" />
<rect x="680" y="497" width="1" height="1" fill="#c8c8c8" />
<rect x="680" y="500" width="1" height="1" fill="#c8c8c8" />
<rect x="680" y="503" width="1" height="1" fill="#c8c8c8" />
<rect x="680" y="506" width="1" height="1" fill="#c8c8c8" />
<rect x="680" y="509" width="1" height="1" fill="#c8c8c8" />
<rect x="680" y="511" width="1" height="1" fill="#c8c8c8" />
<rect x="680" y="514" width="1" height="1" fill="#c8c8c8" />
<rect x="680" y="517" width="1" height="1" fill="#c8c8c8" />
<rect x="680" y="520" width="1" height="1" fill="#c8c8c8" />
<rect x="680" y="523" width="1" height="1" fill="#c8c8c8" />
<rect x="680" y="526" width="1" height="1" fill="#c8c8c8" />
<rect x="680" y="528" width="1" height="1" fill="#c8c8c8" />
<rect x="680" y="531" width="1" height="1" fill="#c8c8c8" />
<rect x="720" y="421" width="1" height="1" fill="#c8c8c8" />
<rect x="720" y="424" width="1" height="1" fill="#c8c8c8" />
<rect x="720" y="427" width="1" height="1" fill="#c8c8c8" />
<rect x="720" y="429" width="1" height="1" fill="#c8c8c8" />
<rect x="720" y="432" width="1" height="1" fill="#c8c8c8" />
<rect x="720" y="435" width="1" height="1" fill="#c8c8c8" />
<rect x="720" y="438" width="1" height="1" fill="#c8c8c8" />
<rect x="720" y="441" width="1" height="1" fill="#c8c8c8" />
<rect x="720" y="444" width="1" height="1" fill="#c8c8c8" />
<rect x="720" y="446" width="1" height="1" fill="#c8c8c8" />
<rect x="720" y="449" width="1" height="1" fill="#c8c8c8" />
<rect x="720" y="452" width="1" height="1" fill="#c8c8c8" />
<rect x="720" y="455" width="1" height="1" fill="#c8c8c8" />
<rect x="720" y="458" width="1" height="1" fill="#c8c8c8" />
<rect x="720" y="461" width="1" height="1" fill="#c8c8c8" />
<rect x="720" y="463" width="1" height="1" fill="#c8c8c8" />
<rect x="720" y="466" width="1" height="1" fill="#c8c8c8" />
<rect x="720" y="469" width="1" height="1" fill="#c8c8c8" />
<rect x="720" y="472" width="1" height="1" fill="#c8c8c8" />
<rect x="720" y="475" width="1" height="1" fill="#c8c8c8" />
<rect x="720" y="478" width="1" height="1" fill="#c8c8c8" />
<rect x="720" y="480" width="1" height="1" fill="#c8c8c8" />
<rect x="720" y="483" width="1" height="1" fill="#c8c8c8" />
<rect x="720" y="486" width="1" height="1" fill="#c8c8c8" />
<rect x="720" y="489" width="1" height="1" fill="#c8c8c8" />
<rect x="720" y="492" width="1" height="1" fill="#c8c8c8" />
<rect x="720" y="494" width="1" height="1" fill="#c8c8c8" />
<rect x="720" y="497" width="1" height="1" fill="#c8c8c8" />
<rect x="720" y="500" width="1" height="1" fill="#c8c8c8" />
<rect x="720" y="503" width="1" height="1" fill="#c8c8c8" />
<rect x="720" y="506" width="1" height="1" fill="#c8c8c8" />
<rect x="720" y="509" width="1" height="1" fill="#c8c8c8" />
<rect x="720" y="511" width="1" height="1" fill="#c8c8c8" />
<rect x="720" y="514" width="1" height="1" fill="#c8c8c8" />
<rect x="720" y="517" width="1" height="1" fill="#c8c8c8" />
<rect x="720" y="520" width="1" height="1" fill="#c8c8c8" />
<rect x="720" y="523" width="1" height="1" fill="#c8c8c8" />
<rect x="720" y="526" width="1" height="1" fill="#c8c8c8" />
<rect x="720" y="528" width="1" height="1" fill="#c8c8c8" />
<rect x="720" y="531" width="1" height="1" fill="#c8c8c8" />
<rect x="761" y="421" width="1" height="1" fill="#c8c8c8" />
<rect x="761" y="424" width="1" height="1" fill="#c8c8c8" />
<rect x="761" y="427" width="1" height="1" fill="#c8c8c8" />
<rect x="761" y="429" width="1" height="1" fill="#c8c8c8" />
<rect x="761" y="432" width="1" height="1" fill="#c8c8c8" />
<rect x="761" y="435" width="1" height="1" fill="#c8c8c8" />
<rect x="761" y="438" width="1" height="1" fill="#c8c8c8" />
<rect x="761" y="441" width="1" height="1" fill="#c8c8c8" />
<rect x="761" y="444" width="1" height="1" fill="#c8c8c8" />
<rect x="761" y="446" width="1" height="1" fill="#c8c8c8" />
<rect x="761" y="449" width="1" height="1" fill="#c8c8c8" />
<rect x="761" y="452" width="1" height="1" fill="#c8c8c8" />
<rect x="761" y="455" width="1" height="1" fill="#c8c8c8" />
<rect x="761" y="458" width="1" height="1" fill="#c8c8c8" />
<rect x="761" y="461" width="1" height="1" fill="#c8c8c8" />
<rect x="761" y="463" width="1" height="1" fill="#c8c8c8" />
<rect x="761" y="466" width="1" height="1" fill="#c8c8c8" />
<rect x="761" y="469" width="1" height="1" fill="#c8c8c8" />
<rect x="761" y="472" width="1" height="1" fill="#c8c8c8" />
<rect x="761" y="475" width="1" height="1" fill="#c8c8c8" />
<rect x="761" y="478" width="1" height="1" fill="#c8c8c8" />
<rect x="761" y="480" width="1" height="1" fill="#c8c8c8" />
<rect x="761" y="483" width="1" height="1" fill="#c8c8c8" />
<rect x="761" y="486" width="1" height="1" fill="#c8c8c8" />
<rect x="761" y="489" width="1" height="1" fill="#c8c8c8" />
<rect x="761" y="492" width="1" height="1" fill="#c8c8c8" />
<rect x="761" y="494" width="1" height="1" fill="#c8c8c8" />
<rect x="761" y="497" width="1" height="1" fill="#c8c8c8" />
<rect x="761" y="500" width="1" height="1" fill="#c8c8c8" />
<rect x="761" y="503" width="1" height="1" fill="#c8c8c8" />
<rect x="761" y="506" width="1" height="1" fill="#c8c8c8" />
<rect x="761" y="509" width="1" height="1" fill="#c8c8c8" />
<rect x="761" y="511" width="1" height="1" fill="#c8c8c8" />
<rect x="761" y="514" width="1" height="1" fill="#c8c8c8" />
<rect x="761" y="517" width="1" height="1" fill="#c8c8c8" />
<rect x="761" y="520" width="1" height="1" fill="#c8c8c8" />
<rect x="761" y="523" width="1" height="1" fill="#c8c8c8" />
<rect x="761" y="526" width="1" height="1" fill="#c8c8c8" />
<rect x="761" y="528" width="1" height="1" fill="#c8c8c8" />
<rect x="761" y="531" width="1" height="1" fill="#c8c8c8" />
<rect x="801" y="421" width="1" height="1" fill="#c8c8c8" />
<rect x="801" y="424" width="1" height="1" fill="#c8c8c8" />
<rect x="801" y="427" width="1" height="1" fill="#c8c8c8" />
<rect x="801" y="429" width="1" height="1" fill="#c8c8c8" />
<rect x="801" y="432" width="1" height="1" fill="#c8c8c8" />
<rect x="801" y="435" width="1" height="1" fill="#c8c8c8" />
<rect x="801" y="438" width="1" height="1" fill="#c8c8c8" />
<rect x="801" y="441" width="1" height="1" fill="#c8c8c8" />
<rect x="801" y="444" width="1" height="1" fill="#c8c8c8" />
<rect x="801" y="446" width="1" height="1" fill="#c8c8c8" />
<rect x="801" y="449" width="1" height="1" fill="#c8c8c8" />
<rect x="801" y="452" width="1" height="1" fill="#c8c8c8" />
<rect x="801" y="455" width="1" height="1" fill="#c8c8c8" />
<rect x="801" y="458" width="1" height="1" fill="#c8c8c8" />
<rect x="801" y="461" width="1" height="1" fill="#c8c8c8" />
<rect x="801" y="463" width="1" height="1" fill="#c8c8c8" />
<rect x="801" y="466" width="1" height="1" fill="#c8c8c8" />
<rect x="801" y="469" width="1" height="1" fill="#c8c8c8" />
<rect x="801" y="472" width="1" height="1" fill="#c8c8c8" />
<rect x="801" y="475" width="1" height="1" fill="#c8c8c8" />
<rect x="801" y="478" width="1" height="1" fill="#c8c8c8" />
<rect x="801" y="480" width="1" height="1" fill="#c8c8c8" />
<rect x="801" y="483" width="1" height="1" fill="#c8c8c8" />
<rect x="801" y="486" width="1" height="1" fill="#c8c8c8" />
<rect x="801" y="489" width="1" height="1" fill="#c8c8c8" />
<rect x="801" y="492" width="1" height="1" fill="#c8c8c8" />
<rect x="801" y="494" width="1" height="1" fill="#c8c8c8" />
<rect x="801" y="497" width="1" height="1" fill="#c8c8c8" />
<rect x="801" y="500" width="1" height="1" fill="#c8c8c8" />
<rect x="801" y="503" width="1" height="1" fill="#c8c8c8" />
<rect x="801" y="506" width="1" height="1" fill="#c8c8c8" />
<rect x="801" y="509" width="1" height="1" fill="#c8c8c8" />
<rect x="801" y="511" width="1" height="1" fill="#c8c8c8" />
<rect x="801" y="514" width="1" height="1" fill="#c8c8c8" />
<rect x="801" y="517" width="1" height="1" fill="#c8c8c8" />
<rect x="801" y="520" width="1" height="1" fill="#c8c8c8" />
<rect x="801" y="523" width="1" height="1" fill="#c8c8c8" />
<rect x="801" y="526" width="1" height="1" fill="#c8c8c8" />
<rect x="801" y="528" width="1" height="1" fill="#c8c8c8" />
<rect x="801" y="531" width="1" height="1" fill="#c8c8c8" />
<rect x="517" y="435" width="1" height="1" fill="#c8c8c8" />
<rect x="525" y="435" width="1" height="1" fill="#c8c8c8" />
<rect x="533" y="435" width="1" height="1" fill="#c8c8c8" />
<rect x="541" y="435" width="1" height="1" fill="#c8c8c8" />
<rect x="550" y="435" width="1" height="1" fill="#c8c8c8" />
<rect x="558" y="435" width="1" height="1" fill="#c8c8c8" />
<rect x="566" y="435" width="1" height="1" fill="#c8c8c8" />
<rect x="574" y="435" width="1" height="1" fill="#c8c8c8" />
<rect x="582" y="435" width="1" height="1" fill="#c8c8c8" />
<rect x="590" y="435" width="1" height="1" fill="#c8c8c8" />
<rect x="598" y="435" width="1" height="1" fill="#c8c8c8" />
<rect x="606" y="435" width="1" height="1" fill="#c8c8c8" />
<rect x="614" y="435" width="1" height="1" fill="#c8c8c8" />
<rect x="623" y="435" width="1" height="1" fill="#c8c8c8" />
<rect x="631" y="435" width="1" height="1" fill="#c8c8c8" />
<rect x="639" y="435" width="1" height="1" fill="#c8c8c8" />
<rect x="647" y="435" width="1" height="1" fill="#c8c8c8" />
<rect x="655" y="435" width="1" height="1" fill="#c8c8c8" />
<rect x="663" y="435" width="1" height="1" fill="#c8c8c8" />
<rect x="671" y="435" width="1" height="1" fill="#c8c8c8" />
<rect x="680" y="435" width="1" height="1" fill="#c8c8c8" />
<rect x="688" y="435" width="1" height="1" fill="#c8c8c8" />
<rect x="696" y="435" width="1" height="1" fill="#c8c8c8" />
<rect x="704" y="435" width="1" height="1" fill="#c8c8c8" />
<rect x="712" y="435" width="1" height="1" fill="#c8c8c8" />
<rect x="720" y="435" width="1" height="1" fill="#c8c8c8" />
<rect x="728" y="435" width="1" height="1" fill="#c8c8c8" />
<rect x="736" y="435" width="1" height="1" fill="#c8c8c8" />
<rect x="744" y="435" width="1" height="1" fill="#c8c8c8" />
<rect x="753" y="435" width="1" height="1" fill="#c8c8c8" />
<rect x="761" y="435" width="1" height="1" fill="#c8c8c8" />
<rect x="769" y="435" width="1" height="1" fill="#c8c8c8" />
<rect x="777" y="435" width="1" height="1" fill="#c8c8c8" />
<rect x="785" y="435" width="1" height="1" fill="#c8c8c8" />
<rect x="793" y="435" width="1" height="1" fill="#c8c8c8" />
<rect x="801" y="435" width="1" height="1" fill="#c8c8c8" />
<rect x="810" y="435" width="1" height="1" fill="#c8c8c8" />
<rect x="818" y="435" width="1" height="1" fill="#c8c8c8" />
<rect x="826" y="435" width="1" height="1" fill="#c8c8c8" />
<rect x="834" y="435" width="1" height="1" fill="#c8c8c8" />
<rect x="517" y="449" width="1" height="1" fill="#c8c8c8" />
<rect x="525" y="449" width="1" height="1" fill="#c8c8c8" />
<rect x="533" y="449" width="1" height="1" fill="#c8c8c8" />
<rect x="541" y="449" width="1" height="1" fill="#c8c8c8" />
<rect x="550" y="449" width="1" height="1" fill="#c8c8c8" />
<rect x="558" y="449" width="1" height="1" fill="#c8c8c8" />
<rect x="566" y="449" width="1" height="1" fill="#c8c8c8" />
<rect x="574" y="449" width="1" height="1" fill="#c8c8c8" />
<rect x="582" y="449" width="1" height="1" fill="#c8c8c8" />
<rect x="590" y="449" width="1" height="1" fill="#c8c8c8" />
<rect x="598" y="449" width="1" height="1" fill="#c8c8c8" />
<rect x="606" y="449" width="1" height="1" fill="#c8c8c8" />
<rect x="614" y="449" width="1" height="1" fill="#c8c8c8" />
<rect x="623" y="449" width="1" height="1" fill="#c8c8c8" />
<rect x="631" y="449" width="1" height="1" fill="#c8c8c8" />
<rect x="639" y="449" width="1" height="1" fill="#c8c8c8" />
<rect x="647" y="449" width="1" height="1" fill="#c8c8c8" />
<rect x="655" y="449" width="1" height="1" fill="#c8c8c8" />
<rect x="663" y="449" width="1" height="1" fill="#c8c8c8" />
<rect x="671" y="449" width="1" height="1" fill="#c8c8c8" />
<rect x="680" y="449" width="1" height="1" fill="#c8c8c8" />
<rect x="688" y="449" width="1" height="1" fill="#c8c8c8" />
<rect x="696" y="449" width="1" height="1" fill="#c8c8c8" />
<rect x="704" y="449" width="1" height="1" fill="#c8c8c8" />
<rect x="712" y="449" width="1" height="1" fill="#c8c8c8" />
<rect x="720" y="449" width="1" height="1" fill="#c8c8c8" />
<rect x="728" y="449" width="1" height="1" fill="#c8c8c8" />
<rect x="736" y="449" width="1" height="1" fill="#c8c8c8" />
<rect x="744" y="449" width="1" height="1" fill="#c8c8c8" />
<rect x="753" y="449" width="1" height="1" fill="#c8c8c8" />
<rect x="761" y="449" width="1" height="1" fill="#c8c8c8" />
<rect x="769" y="449" width="1" height="1" fill="#c8c8c8" />
<rect x="777" y="449" width="1" height="1" fill="#c8c8c8" />
<rect x="785" y="449" width="1" height="1" fill="#c8c8c8" />
<rect x="793" y="449" width="1" height="1" fill="#c8c8c8" />
<rect x="801" y="449" width="1" height="1" fill="#c8c8c8" />
<rect x="810" y="449" width="1" height="1" fill="#c8c8c8" />
<rect x="818" y="449" width="1" height="1" fill="#c8c8c8" />
<rect x="826" y="449" width="1" height="1" fill="#c8c8c8" />
<rect x="834" y="449" width="1" height="1" fill="#c8c8c8" />
<rect x="517" y="463" width="1" height="1" fill="#c8c8c8" />
<rect x="525" y="463" width="1" height="1" fill="#c8c8c8" />
<rect x="533" y="463" width="1" height="1" fill="#c8c8c8" />
<rect x="541" y="463" width="1" height="1" fill="#c8c8c8" />
<rect x="550" y="463" width="1" height="1" fill="#c8c8c8" />
<rect x="558" y="463" width="1" height="1" fill="#c8c8c8" />
<rect x="566" y="463" width="1" height="1" fill="#c8c8c8" />
<rect x="574" y="463" width="1" height="1" fill="#c8c8c8" />
<rect x="582" y="463" width="1" height="1" fill="#c8c8c8" />
<rect x="590" y="463" width="1" height="1" fill="#c8c8c8" />
<rect x="598" y="463" width="1" height="1" fill="#c8c8c8" />
<rect x="606" y="463" width="1" height="1" fill="#c8c8c8" />
<rect x="614" y="463" width="1" height="1" fill="#c8c8c8" />
<rect x="623" y="463" width="1" height="1" fill="#c8c8c8" />
<rect x="631" y="463" width="1" height="1" fill="#c8c8c8" />
<rect x="639" y="463" width="1" height="1" fill="#c8c8c8" />
<rect x="647" y="463" width="1" height="1" fill="#c8c8c8" />
<rect x="655" y="463" width="1" height="1" fill="#c8c8c8" />
<rect x="663" y="463" width="1" height="1" fill="#c8c8c8" />
<rect x="671" y="463" width="1" height="1" fill="#c8c8c8" />
<rect x="680" y="463" width="1" height="1" fill="#c8c8c8" />
<rect x="688" y="463" width="1" height="1" fill="#c8c8c8" />
<rect x="696" y="463" width="1" height="1" fill="#c8c8c8" />
<rect x="704" y="463" width="1" height="1" fill="#c8c8c8" />
<rect x="712" y="463" width="1" height="1" fill="#c8c8c8" />
<rect x="720" y="463" width="1" height="1" fill="#c8c8c8" />
<rect x="728" y="463" width="1" height="1" fill="#c8c8c8" />
<rect x="736" y="463" width="1" height="1" fill="#c8c8c8" />
<rect x="744" y="463" width="1" height="1" fill="#c8c8c8" />
<rect x="753" y="463" width="1" height="1" fill="#c8c8c8" />
<rect x="761" y="463" width="1" height="1" fill="#c8c8c8" />
<rect x="769" y="463" width="1" height="1" fill="#c8c8c8" />
<rect x="777" y="463" width="1" height="1" fill="#c8c8c8" />
<rect x="785" y="463" width="1" height="1" fill="#c8c8c8" />
<rect x="793" y="463" width="1" height="1" fill="#c8c8c8" />
<rect x="801" y="463" width="1" height="1" fill="#c8c8c8" />
<rect x="810" y="463" width="1" height="1" fill="#c8c8c8" />
<rect x="818" y="463" width="1" height="1" fill="#c8c8c8" />
<rect x="826" y="463" width="1" height="1" fill="#c8c8c8" />
<rect x="834" y="463" width="1" height="1" fill="#c8c8c8" />
<rect x="517" y="478" width="1" height="1" fill="#c8c8c8" />
<rect x="525" y="478" width="1" height="1" fill="#c8c8c8" />
<rect x="533" y="478" width="1" height="1" fill="#c8c8c8" />
<rect x="541" y="478" width="1" height="1" fill="#c8c8c8" />
<rect x="550" y="478" width="1" height="1" fill="#c8c8c8" />
<rect x="558" y="478" width="1" height="1" fill="#c8c8c8" />
<rect x="566" y="478" width="1" height="1" fill="#c8c8c8" />
<rect x="574" y="478" width="1" height="1" fill="#c8c8c8" />
<rect x="582" y="478" width="1" height="1" fill="#c8c8c8" />
<rect x="590" y="478" width="1" height="1" fill="#c8c8c8" />
<rect x="598" y="478" width="1" height="1" fill="#c8c8c8" />
<rect x="606" y="478" width="1" height="1" fill="#c8c8c8" />
<rect x="614" y="478" width="1" height="1" fill="#c8c8c8" />
<rect x="623" y="478" width="1" height="1" fill="#c8c8c8" />
<rect x="631" y="478" width="1" height="1" fill="#c8c8c8" />
<rect x="639" y="478" width="1" height="1" fill="#c8c8c8" />
<rect x="647" y="478" width="1" height="1" fill="#c8c8c8" />
<rect x="655" y="478" width="1" height="1" fill="#c8c8c8" />
<rect x="663" y="478" width="1" height="1" fill="#c8c8c8" />
<rect x="671" y="478" width="1" height="1" fill="#c8c8c8" />
<rect x="680" y="478" width="1" height="1" fill="#c8c8c8" />
<rect x="688" y="478" width="1" height="1" fill="#c8c8c8" />
<rect x="696" y="478" width="1" height="1" fill="#c8c8c8" />
<rect x="704" y="478" width="1" height="1" fill="#c8c8c8" />
<rect x="712" y="478" width="1" height="1" fill="#c8c8c8" />
<rect x="720" y="478" width="1" height="1" fill="#c8c8c8" />
<rect x="728" y="478" width="1" height="1" fill="#c8c8c8" />
<rect x="736" y="478" width="1" height="1" fill="#c8c8c8" />
<rect x="744" y="478" width="1" height="1" fill="#c8c8c8" />
<rect x="753" y="478" width="1" height="1" fill="#c8c8c8" />
<rect x="761" y="478" width="1" height="1" fill="#c8c8c8" />
<rect x="769" y="478" width="1" height="1" fill="#c8c8c8" />
<rect x="777" y="478" width="1" height="1" fill="#c8c8c8" />
<rect x="785" y="478" width="1" height="1" fill="#c8c8c8" />
<rect x="793" y="478" width="1" height="1" fill="#c8c8c8" />
<rect x="801" y="478" width="1" height="1" fill="#c8c8c8" />
<rect x="810" y="478" width="1" height="1" fill="#c8c8c8" />
<rect x="818" y="478" width="1" height="1" fill="#c8c8c8" />
<rect x="826" y="478" width="1" height="1" fill="#c8c8c8" />
<rect x="834" y="478" width="1" height="1" fill="#c8c8c8" />
<rect x="517" y="492" width="1" height="1" fill="#c8c8c8" />
<rect x="525" y="492" width="1" height="1" fill="#c8c8c8" />
<rect x="533" y="492" width="1" height="1" fill="#c8c8c8" />
<rect x="541" y="492" width="1" height="1" fill="#c8c8c8" />
<rect x="550" y="492" width="1" height="1" fill="#c8c8c8" />
<rect x="558" y="492" width="1" height="1" fill="#c8c8c8" />
<rect x="566" y="492" width="1" height="1" fill="#c8c8c8" />
<rect x="574" y="492" width="1" height="1" fill="#c8c8c8" />
<rect x="582" y="492" width="1" height="1" fill="#c8c8c8" />
<rect x="590" y="492" width="1" height="1" fill="#c8c8c8" />
<rect x="598" y="492" width="1" height="1" fill="#c8c8c8" />
<rect x="606" y="492" width="1" height="1" fill="#c8c8c8" />
<rect x="614" y="492" width="1" height="1" fill="#c8c8c8" />
<rect x="623" y="492" width="1" height="1" fill="#c8c8c8" />
<rect x="631" y="492" width="1" height="1" fill="#c8c8c8" />
<rect x="639" y="492" width="1" height="1" fill="#c8c8c8" />
<rect x="647" y="492" width="1" height="1" fill="#c8c8c8" />
<rect x="655" y="492" width="1" height="1" fill="#c8c8c8" />
<rect x="663" y="492" width="1" height="1" fill="#c8c8c8" />
<rect x="671" y="492" width="1" height="1" fill="#c8c8c8" />
<rect x="680" y="492" width="1" height="1" fill="#c8c8c8" />
<rect x="688" y="492" width="1" height="1" fill="#c8c8c8" />
<rect x="696" y="492" width="1" height="1" fill="#c8c8c8" />
<rect x="704" y="492" width="1" height="1" fill="#c8c8c8" />
<rect x="712" y="492" width="1" height="1" fill="#c8c8c8" />
<rect x="720" y="492" width="1" height="1" fill="#c8c8c8" />
<rect x="728" y="492" width="1" height="1" fill="#c8c8c8" />
<rect x="736" y="492" width="1" height="1" fill="#c8c8c8" />
<rect x="744" y="492" width="1" height="1" fill="#c8c8c8" />
<rect x="753" y="492" width="1" height="1" fill="#c8c8c8" />
<rect x="761" y="492" width="1" height="1" fill="#c8c8c8" />
<rect x="769" y="492" width="1" height="1" fill="#c8c8c8" />
<rect x="777" y="492" width="1" height="1" fill="#c8c8c8" />
<rect x="785" y="492" width="1" height="1" fill="#c8c8c8" />
<rect x="793" y="492" width="1" height="1" fill="#c8c8c8" />
<rect x="801" y="492" width="1" height="1" fill="#c8c8c8" />
<rect x="810" y="492" width="1" height="1" fill="#c8c8c8" />
<rect x="818" y="492" width="1" height="1" fill="#c8c8c8" />
<rect x="826" y="492" width="1" height="1" fill="#c8c8c8" />
<rect x="834" y="492" width="1" height="1" fill="#c8c8c8" />
<rect x="517" y="506" width="1" height="1" fill="#c8c8c8" />
<rect x="525" y="506" width="1" height="1" fill="#c8c8c8" />
<rect x="533" y="506" width="1" height="1" fill="#c8c8c8" />
<rect x="541" y="506" width="1" height="1" fill="#c8c8c8" />
<rect x="550" y="506" width="1" height="1" fill="#c8c8c8" />
<rect x="558" y="506" width="1" height="1" fill="#c8c8c8" />
<rect x="566" y="506" width="1" height="1" fill="#c8c8c8" />
<rect x="574" y="506" width="1" height="1" fill="#c8c8c8" />
<rect x="582" y="506" width="1" height="1" fill="#c8c8c8" />
<rect x="590" y="506" width="1" height="1" fill="#c8c8c8" />
<rect x="598" y="506" width="1" height="1" fill="#c8c8c8" />
<rect x="606" y="506" width="1" height="1" fill="#c8c8c8" />
<rect x="614" y="506" width="1" height="1" fill="#c8c8c8" />
<rect x="623" y="506" width="1" height="1" fill="#c8c8c8" />
<rect x="631" y="506" width="1" height="1" fill="#c8c8c8" />
<rect x="639" y="506" width="1" height="1" fill="#c8c8c8" />
<rect x="647" y="506" width="1" height="1" fill="#c8c8c8" />
<rect x="655" y="506" width="1" height="1" fill="#c8c8c8" />
<rect x="663" y="506" width="1" height="1" fill="#c8c8c8" />
<rect x="671" y="506" width="1" height="1" fill="#c8c8c8" />
<rect x="680" y="506" width="1" height="1" fill="#c8c8c8" />
<rect x="688" y="506" width="1" height="1" fill="#c8c8c8" />
<rect x="696" y="506" width="1" height="1" fill="#c8c8c8" />
<rect x="704" y="506" width="1" height="1" fill="#c8c8c8" />
<rect x="712" y="506" width="1" height="1" fill="#c8c8c8" />
<rect x="720" y="506" width="1" height="1" fill="#c8c8c8" />
<rect x="728" y="506" width="1" height="1" fill="#c8c8c8" />
<rect x="736" y="506" width="1" height="1" fill="#c8c8c8" />
<rect x="744" y="506" width="1" height="1" fill="#c8c8c8" />
<rect x="753" y="506" width="1" height="1" fill="#c8c8c8" />
<rect x="761" y="506" width="1" height="1" fill="#c8c8c8" />
<rect x="769" y="506" width="1" height="1" fill="#c8c8c8" />
<rect x="777" y="506" width="1" height="1" fill="#c8c8c8" />
<rect x="785" y="506" width="1" height="1" fill="#c8c8c8" />
<rect x="793" y="506" width="1" height="1" fill="#c8c8c8" />
<rect x="801" y="506" width="1" height="1" fill="#c8c8c8" />
<rect x="810" y="506" width="1" height="1" fill="#c8c8c8" />
<rect x="818" y="506" width="1" height="1" fill="#c8c8c8" />
<rect x="826" y="506" width="1" height="1" fill="#c8c8c8" />
<rect x="834" y="506" width="1" height="1" fill="#c8c8c8" />
<rect x="517" y="520" width="1" height="1" fill="#c8c8c8" />
<rect x="525" y="520" width="1" height="1" fill="#c8c8c8" />
<rect x="533" y="520" width="1" height="1" fill="#c8c8c8" />
<rect x="541" y="520" width="1" height="1" fill="#c8c8c8" />
<rect x="550" y="520" width="1" height="1" fill="#c8c8c8" />
<rect x="558" y="520" width="1" height="1" fill="#c8c8c8" />
<rect x="566" y="520" width="1" height="1" fill="#c8c8c8" />
<rect x="574" y="520" width="1" height="1" fill="#c8c8c8" />
<rect x="582" y="520" width="1" height="1" fill="#c8c8c8" />
<rect x="590" y="520" width="1" height="1" fill="#c8c8c8" />
<rect x="598" y="520" width="1" height="1" fill="#c8c8c8" />
<rect x="606" y="520" width="1" height="1" fill="#c8c8c8" />
<rect x="614" y="520" width="1" height="1" fill="#c8c8c8" />
<rect x="623" y="520" width="1" height="1" fill="#c8c8c8" />
<rect x="631" y="520" width="1" height="1" fill="#c8c8c8" />
<rect x="639" y="520" width="1" height="1" fill="#c8c8c8" />
<rect x="647" y="520" width="1" height="1" fill="#c8c8c8" />
<rect x="655" y="520" width="1" height="1" fill="#c8c8c8" />
<rect x="663" y="520" width="1" height="1" fill="#c8c8c8" />
<rect x="671" y="520" width="1" height="1" fill="#c8c8c8" />
<rect x="680" y="520" width="1" height="1" fill="#c8c8c8" />
<rect x="688" y="520" width="1" height="1" fill="#c8c8c8" />
<rect x="696" y="520" width="1" height="1" fill="#c8c8c8" />
<rect x="704" y="520" width="1" height="1" fill="#c8c8c8" />
<rect x="712" y="520" width="1" height="1" fill="#c8c8c8" />
<rect x="720" y="520" width="1" height="1" fill="#c8c8c8" />
<rect x="728" y="520" width="1" height="1" fill="#c8c8c8" />
<rect x="736" y="520" width="1" height="1" fill="#c8c8c8" />
<rect x="744" y="520" width="1" height="1" fill="#c8c8c8" />
<rect x="753" y="520" width="1" height="1" fill="#c8c8c8" />
<rect x="761" y="520" width="1" height="1" fill="#c8c8c8" />
<rect x="769" y="520" width="1" height="1" fill="#c8c8c8" />
<rect x="777" y="520" width="1" height="1" fill="#c8c8c8" />
<rect x="785" y="520" width="1" height="1" fill="#c8c8c8" />
<rect x="793" y="520" width="1" height="1" fill="#c8c8c8" />
<rect x="801" y="520" width="1" height="1" fill="#c8c8c8" />
<rect x="810" y="520" width="1" height="1" fill="#c8c8c8" />
<rect x="818" y="520" width="1" height="1" fill="#c8c8c8" />
<rect x="826" y="520" width="1" height="1" fill="#c8c8c8" />
<rect x="834" y="520" width="1" height="1" fill="#c8c8c8" />
<polyline points="650.2,477.0 650.9,477.0 651.5,477.0 652.2,477.0 652.9,477.0 653.6,477.0 654.2,477.0 654.9,476.9 655.6,476.9 656.3,476.9 657.0,476.8 657.6,476.8 658.3,476.7 659.0,476.6 659.7,476.5 660.3,476.4 661.0,476.3 661.7,476.2 662.4,476.0 663.1,475.8 663.7,475.6 664.4,475.4 665.1,475.2 665.8,475.0 666.4,474.7 667.1,474.4 667.8,474.1 668.5,473.8 669.2,473.5 669.8,473.1 670.5,472.8 671.2,472.4 671.9,471.9 672.5,471.5 673.2,471.1 673.9,470.6 674.6,470.1 675.3,469.6 675.9,469.1 676.6,468.5 677.3,468.0 678.0,467.4 678.6,466.8 679.3,466.2 680.0,465.6 680.7,465.0 681.4,464.3 682.0,463.7 682.7,463.0 683.4,462.4 684.1,461.7 684.7,461.0 685.4,460.4 686.1,459.7 686.8,459.0 687.5,458.3 688.1,457.6 688.8,456.9 689.5,456.3 690.2,455.6 690.8,454.9 691.5,454.3 692.2,453.6 692.9,452.9 693.6,452.3 694.2,451.7 694.9,451.1 695.6,450.5 696.3,449.9 696.9,449.3 697.6,448.8 698.3,448.3 699.0,447.8 699.7,447.3 700.3,446.8 701.0,446.4 701.7,445.9 702.4,445.5 703.0,445.2 703.7,444.8 704.4,444.5 705.1,444.2 705.8,444.0 706.4,443.8 707.1,443.6 707.8,443.4 708.5,443.2 709.1,443.1 709.8,443.1 710.5,443.0 711.2,443.0 711.9,443.0 712.5,443.1 713.2,443.1 713.9,443.2 714.6,443.4 715.2,443.6 715.9,443.8 716.6,444.0 717.3,444.2 718.0,444.5 718.6,444.8 719.3,445.2 720.0,445.5 720.7,445.9 721.3,446.4 722.0,446.8 722.7,447.3 723.4,447.8 724.1,448.3 724.7,448.8 725.4,449.3 726.1,449.9 726.8,450.5 727.4,451.1 728.1,451.7 728.8,452.3 729.5,452.9 730.2,453.6 730.8,454.3 731.5,454.9 732.2,455.6 732.9,456.3 733.5,456.9 734.2,457.6 734.9,458.3 735.6,459.0 736.3,459.7 736.9,460.4 737.6,461.0 738.3,461.7 739.0,462.4 739.6,463.0 740.3,463.7 741.0,464.3 740.3,465.0 739.6,465.6 739.0,466.2 738.3,466.8 737.6,467.4 736.9,468.0 736.3,468.5 735.6,469.1 734.9,469.6 734.2,470.1 733.5,470.6 732.9,471.1 732.2,471.5 731.5,471.9 730.8,472.4 730.2,472.8 729.5,473.1 728.8,473.5 728.1,473.8 727.4,474.1 726.8,474.4 726.1,474.7 725.4,475.0 724.7,475.2 724.1,475.4 723.4,475.6 722.7,475.8 722.0,476.0 721.3,476.2 720.7,476.3 720.0,476.4 719.3,476.5 718.6,476.6 718.0,476.7 717.3,476.8 716.6,476.8 715.9,476.9 715.2,476.9 714.6,476.9 713.9,477.0 713.2,477.0 712.5,477.0 711.9,477.0 711.2,477.0 710.5,477.0 709.8,477.0 709.1,477.0 708.5,477.0 707.8,477.0 707.1,477.0 706.4,477.0 705.8,477.0 705.1,477.1 704.4,477.1 703.7,477.1 703.0,477.2 702.4,477.2 701.7,477.3 701.0,477.4 700.3,477.5 699.7,477.6 699.0,477.7 698.3,477.8 697.6,478.0 696.9,478.2 696.3,478.4 695.6,478.6 694.9,478.8 694.2,479.0 693.6,479.3 692.9,479.6 692.2,479.9 691.5,480.2 690.8,480.5 690.2,480.9 689.5,481.2 688.8,481.6 688.1,482.1 687.5,482.5 686.8,482.9 686.1,483.4 685.4,483.9 684.7,484.4 684.1,484.9 683.4,485.5 682.7,486.0 682.0,486.6 681.4,487.2 680.7,487.8 680.0,488.4 679.3,489.0 678.6,489.7 678.0,490.3 677.3,491.0 676.6,491.6 675.9,492.3 675.3,493.0 674.6,493.6 673.9,494.3 673.2,495.0 672.5,495.7 671.9,496.4 671.2,497.1 670.5,497.7 669.8,498.4 669.2,499.1 668.5,499.7 667.8,500.4 667.1,501.1 666.4,501.7 665.8,502.3 665.1,502.9 664.4,503.5 663.7,504.1 663.1,504.7 662.4,505.2 661.7,505.7 661.0,506.2 660.3,506.7 659.7,507.2 659.0,507.6 658.3,508.1 657.6,508.5 657.0,508.8 656.3,509.2 655.6,509.5 654.9,509.8 654.2,510.0 653.6,510.2 652.9,510.4 652.2,510.6 651.5,510.8 650.9,510.9 650.2,510.9 649.5,511.0 648.8,511.0 648.1,511.0 647.5,510.9 646.8,510.9 646.1,510.8 645.4,510.6 644.8,510.4 644.1,510.2 643.4,510.0 642.7,509.8 642.0,509.5 641.4,509.2 640.7,508.8 640.0,508.5 639.3,508.1 638.7,507.6 638.0,507.2 637.3,506.7 636.6,506.2 635.9,505.7 635.3,505.2 634.6,504.7 633.9,504.1 633.2,503.5 632.6,502.9 631.9,502.3 631.2,501.7 630.5,501.1 629.8,500.4 629.2,499.7 628.5,499.1 627.8,498.4 627.1,497.7 626.5,497.1 625.8,496.4 625.1,495.7 624.4,495.0 623.7,494.3 623.1,493.6 622.4,493.0 621.7,492.3 621.0,491.6 620.4,491.0 619.7,490.3 619.0,489.7 619.7,489.0 620.4,488.4 621.0,487.8 621.7,487.2 622.4,486.6 623.1,486.0 623.7,485.5 624.4,484.9 625.1,484.4 625.8,483.9 626.5,483.4 627.1,482.9 627.8,482.5 628.5,482.1 629.2,481.6 629.8,481.2 630.5,480.9 631.2,480.5 631.9,480.2 632.6,479.9 633.2,479.6 633.9,479.3 634.6,479.0 635.3,478.8 635.9,478.6 636.6,478.4 637.3,478.2 638.0,478.0 638.7,477.8 639.3,477.7 640.0,477.6 640.7,477.5 641.4,477.4 642.0,477.3 642.7,477.2 643.4,477.2 644.1,477.1 644.8,477.1 645.4,477.1 646.1,477.0 646.8,477.0 647.5,477.0 648.1,477.0 648.8,477.0 649.5,477.0 650.2,477.0" fill="none" stroke="#50f050" stroke-width="1" shape-rendering="crispEdges"/><polyline points="644.8,477.0 645.4,477.0 646.1,477.0 646.8,477.0 647.5,477.0 648.1,477.0 648.8,477.0 649.5,476.9 650.2,476.9 650.9,476.9 651.5,476.8 652.2,476.8 652.9,476.7 653.6,476.6 654.2,476.5 654.9,476.4 655.6,476.3 656.3,476.2 657.0,476.0 657.6,475.8 658.3,475.6 659.0,475.4 659.7,475.2 660.3,475.0 661.0,474.7 661.7,474.4 662.4,474.1 663.1,473.8 663.7,473.5 664.4,473.1 665.1,472.8 665.8,472.4 666.4,471.9 667.1,471.5 667.8,471.1 668.5,470.6 669.2,470.1 669.8,469.6 670.5,469.1 671.2,468.5 671.9,468.0 672.5,467.4 673.2,466.8 673.9,466.2 674.6,465.6 675.3,465.0 675.9,464.3 676.6,463.7 677.3,463.0 678.0,462.4 678.6,461.7 679.3,461.0 680.0,460.4 680.7,459.7 681.4,459.0 682.0,458.3 682.7,457.6 683.4,456.9 684.1,456.3 684.7,455.6 685.4,454.9 686.1,454.3 686.8,453.6 687.5,452.9 688.1,452.3 688.8,451.7 689.5,451.1 690.2,450.5 690.8,449.9 691.5,449.3 692.2,448.8 692.9,448.3 693.6,447.8 694.2,447.3 694.9,446.8 695.6,446.4 696.3,445.9 696.9,445.5 697.6,445.2 698.3,444.8 699.0,444.5 699.7,444.2 700.3,444.0 701.0,443.8 701.7,443.6 702.4,443.4 703.0,443.2 703.7,443.1 704.4,443.1 705.1,443.0 705.8,443.0 706.4,443.0 707.1,443.1 707.8,443.1 708.5,443.2 709.1,443.4 709.8,443.6 710.5,443.8 711.2,444.0 711.9,444.2 712.5,444.5 713.2,444.8 713.9,445.2 714.6,445.5 715.2,445.9 715.9,446.4 716.6,446.8 717.3,447.3 718.0,447.8 718.6,448.3 719.3,448.8 720.0,449.3 720.7,449.9 721.3,450.5 722.0,451.1 722.7,451.7 723.4,452.3 724.1,452.9 724.7,453.6 725.4,454.3 726.1,454.9 726.8,455.6 727.4,456.3 728.1,456.9 728.8,457.6 729.5,458.3 730.2,459.0 730.8,459.7 731.5,460.4 732.2,461.0 732.9,461.7 733.5,462.4 734.2,463.0 734.9,463.7 735.6,464.3 736.3,465.0 736.9,465.6 737.6,466.2 738.3,466.8 739.0,467.4 739.6,468.0 740.3,468.5 741.0,469.1 740.3,469.6 739.6,470.1 739.0,470.6 738.3,471.1 737.6,471.5 736.9,471.9 736.3,472.4 735.6,472.8 734.9,473.1 734.2,473.5 733.5,473.8 732.9,474.1 732.2,474.4 731.5,474.7 730.8,475.0 730.2,475.2 729.5,475.4 728.8,475.6 728.1,475.8 727.4,476.0 726.8,476.2 726.1,476.3 725.4,476.4 724.7,476.5 724.1,476.6 723.4,476.7 722.7,476.8 722.0,476.8 721.3,476.9 720.7,476.9 720.0,476.9 719.3,477.0 718.6,477.0 718.0,477.0 717.3,477.0 716.6,477.0 715.9,477.0 715.2,477.0 714.6,477.0 713.9,477.0 713.2,477.0 712.5,477.0 711.9,477.0 711.2,477.0 710.5,477.1 709.8,477.1 709.1,477.1 708.5,477.2 707.8,477.2 707.1,477.3 706.4,477.4 705.8,477.5 705.1,477.6 704.4,477.7 703.7,477.8 703.0,478.0 702.4,478.2 701.7,478.4 701.0,478.6 700.3,478.8 699.7,479.0 699.0,479.3 698.3,479.6 697.6,479.9 696.9,480.2 696.3,480.5 695.6,480.9 694.9,481.2 694.2,481.6 693.6,482.1 692.9,482.5 692.2,482.9 691.5,483.4 690.8,483.9 690.2,484.4 689.5,484.9 688.8,485.5 688.1,486.0 687.5,486.6 686.8,487.2 686.1,487.8 685.4,488.4 684.7,489.0 684.1,489.7 683.4,490.3 682.7,491.0 682.0,491.6 681.4,492.3 680.7,493.0 680.0,493.6 679.3,494.3 678.6,495.0 678.0,495.7 677.3,496.4 676.6,497.1 675.9,497.7 675.3,498.4 674.6,499.1 673.9,499.7 673.2,500.4 672.5,501.1 671.9,501.7 671.2,502.3 670.5,502.9 669.8,503.5 669.2,504.1 668.5,504.7 667.8,505.2 667.1,505.7 666.4,506.2 665.8,506.7 665.1,507.2 664.4,507.6 663.7,508.1 663.1,508.5 662.4,508.8 661.7,509.2 661.0,509.5 660.3,509.8 659.7,510.0 659.0,510.2 658.3,510.4 657.6,510.6 657.0,510.8 656.3,510.9 655.6,510.9 654.9,511.0 654.2,511.0 653.6,511.0 652.9,510.9 652.2,510.9 651.5,510.8 650.9,510.6 650.2,510.4 649.5,510.2 648.8,510.0 648.1,509.8 647.5,509.5 646.8,509.2 646.1,508.8 645.4,508.5 644.8,508.1 644.1,507.6 643.4,507.2 642.7,506.7 642.0,506.2 641.4,505.7 640.7,505.2 640.0,504.7 639.3,504.1 638.7,503.5 638.0,502.9 637.3,502.3 636.6,501.7 635.9,501.1 635.3,500.4 634.6,499.7 633.9,499.1 633.2,498.4 632.6,497.7 631.9,497.1 631.2,496.4 630.5,495.7 629.8,495.0 629.2,494.3 628.5,493.6 627.8,493.0 627.1,492.3 626.5,491.6 625.8,491.0 625.1,490.3 624.4,489.7 623.7,489.0 623.1,488.4 622.4,487.8 621.7,487.2 621.0,486.6 620.4,486.0 619.7,485.5 619.0,484.9 619.7,484.4 620.4,483.9 621.0,483.4 621.7,482.9 622.4,482.5 623.1,482.1 623.7,481.6 624.4,481.2 625.1,480.9 625.8,480.5 626.5,480.2 627.1,479.9 627.8,479.6 628.5,479.3 629.2,479.0 629.8,478.8 630.5,478.6 631.2,478.4 631.9,478.2 632.6,478.0 633.2,477.8 633.9,477.7 634.6,477.6 635.3,477.5 635.9,477.4 636.6,477.3 637.3,477.2 638.0,477.2 638.7,477.1 639.3,477.1 640.0,477.1 640.7,477.0 641.4,477.0 642.0,477.0 642.7,477.0 643.4,477.0 644.1,477.0 644.8,477.0" fill="none" stroke="#50f050" stroke-width="1" shape-rendering="crispEdges"/><polyline points="639.3,477.0 640.0,477.0 640.7,477.0 641.4,477.0 642.0,477.0 642.7,477.0 643.4,477.0 644.1,476.9 644.8,476.9 645.4,476.9 646.1,476.8 646.8,476.8 647.5,476.7 648.1,476.6 648.8,476.5 649.5,476.4 650.2,476.3 650.9,476.2 651.5,476.0 652.2,475.8 652.9,475.6 653.6,475.4 654.2,475.2 654.9,475.0 655.6,474.7 656.3,474.4 657.0,474.1 657.6,473.8 658.3,473.5 659.0,473.1 659.7,472.8 660.3,472.4 661.0,471.9 661.7,471.5 662.4,471.1 663.1,470.6 663.7,470.1 664.4,469.6 665.1,469.1 665.8,468.5 666.4,468.0 667.1,467.4 667.8,466.8 668.5,466.2 669.2,465.6 669.8,465.0 670.5,464.3 671.2,463.7 671.9,463.0 672.5,462.4 673.2,461.7 673.9,461.0 674.6,460.4 675.3,459.7 675.9,459.0 676.6,458.3 677.3,457.6 678.0,456.9 678.6,456.3 679.3,455.6 680.0,454.9 680.7,454.3 681.4,453.6 682.0,452.9 682.7,452.3 683.4,451.7 684.1,451.1 684.7,450.5 685.4,449.9 686.1,449.3 686.8,448.8 687.5,448.3 688.1,447.8 688.8,447.3 689.5,446.8 690.2,446.4 690.8,445.9 691.5,445.5 692.2,445.2 692.9,444.8 693.6,444.5 694.2,444.2 694.9,444.0 695.6,443.8 696.3,443.6 696.9,443.4 697.6,443.2 698.3,443.1 699.0,443.1 699.7,443.0 700.3,443.0 701.0,443.0 701.7,443.1 702.4,443.1 703.0,443.2 703.7,443.4 704.4,443.6 705.1,443.8 705.8,444.0 706.4,444.2 707.1,444.5 707.8,444.8 708.5,445.2 709.1,445.5 709.8,445.9 710.5,446.4 711.2,446.8 711.9,447.3 712.5,447.8 713.2,448.3 713.9,448.8 714.6,449.3 715.2,449.9 715.9,450.5 716.6,451.1 717.3,451.7 718.0,452.3 718.6,452.9 719.3,453.6 720.0,454.3 720.7,454.9 721.3,455.6 722.0,456.3 722.7,456.9 723.4,457.6 724.1,458.3 724.7,459.0 725.4,459.7 726.1,460.4 726.8,461.0 727.4,461.7 728.1,462.4 728.8,463.0 729.5,463.7 730.2,464.3 730.8,465.0 731.5,465.6 732.2,466.2 732.9,466.8 733.5,467.4 734.2,468.0 734.9,468.5 735.6,469.1 736.3,469.6 736.9,470.1 737.6,470.6 738.3,471.1 739.0,471.5 739.6,471.9 740.3,472.4 741.0,472.8 740.3,473.1 739.6,473.5 739.0,473.8 738.3,474.1 737.6,474.4 736.9,474.7 736.3,475.0 735.6,475.2 734.9,475.4 734.2,475.6 733.5,475.8 732.9,476.0 732.2,476.2 731.5,476.3 730.8,476.4 730.2,476.5 729.5,476.6 728.8,476.7 728.1,476.8 727.4,476.8 726.8,476.9 726.1,476.9 725.4,476.9 724.7,477.0 724.1,477.0 723.4,477.0 722.7,477.0 722.0,477.0 721.3,477.0 720.7,477.0 720.0,477.0 719.3,477.0 718.6,477.0 718.0,477.0 717.3,477.0 716.6,477.0 715.9,477.1 715.2,477.1 714.6,477.1 713.9,477.2 713.2,477.2 712.5,477.3 711.9,477.4 711.2,477.5 710.5,477.6 709.8,477.7 709.1,477.8 708.5,478.0 707.8,478.2 707.1,478.4 706.4,478.6 705.8,478.8 705.1,479.0 704.4,479.3 703.7,479.6 703.0,479.9 702.4,480.2 701.7,480.5 701.0,480.9 700.3,481.2 699.7,481.6 699.0,482.1 698.3,482.5 697.6,482.9 696.9,483.4 696.3,483.9 695.6,484.4 694.9,484.9 694.2,485.5 693.6,486.0 692.9,486.6 692.2,487.2 691.5,487.8 690.8,488.4 690.2,489.0 689.5,489.7 688.8,490.3 688.1,491.0 687.5,491.6 686.8,492.3 686.1,493.0 685.4,493.6 684.7,494.3 684.1,495.0 683.4,495.7 682.7,496.4 682.0,497.1 681.4,497.7 680.7,498.4 680.0,499.1 679.3,499.7 678.6,500.4 678.0,501.1 677.3,501.7 676.6,502.3 675.9,502.9 675.3,503.5 674.6,504.1 673.9,504.7 673.2,505.2 672.5,505.7 671.9,506.2 671.2,506.7 670.5,507.2 669.8,507.6 669.2,508.1 668.5,508.5 667.8,508.8 667.1,509.2 666.4,509.5 665.8,509.8 665.1,510.0 664.4,510.2 663.7,510.4 663.1,510.6 662.4,510.8 661.7,510.9 661.0,510.9 660.3,511.0 659.7,511.0 659.0,511.0 658.3,510.9 657.6,510.9 657.0,510.8 656.3,510.6 655.6,510.4 654.9,510.2 654.2,510.0 653.6,509.8 652.9,509.5 652.2,509.2 651.5,508.8 650.9,508.5 650.2,508.1 649.5,507.6 648.8,507.2 648.1,506.7 647.5,506.2 646.8,505.7 646.1,505.2 645.4,504.7 644.8,504.1 644.1,503.5 643.4,502.9 642.7,502.3 642.0,501.7 641.4,501.1 640.7,500.4 640.0,499.7 639.3,499.1 638.7,498.4 638.0,497.7 637.3,497.1 636.6,496.4 635.9,495.7 635.3,495.0 634.6,494.3 633.9,493.6 633.2,493.0 632.6,492.3 631.9,491.6 631.2,491.0 630.5,490.3 629.8,489.7 629.2,489.0 628.5,488.4 627.8,487.8 627.1,487.2 626.5,486.6 625.8,486.0 625.1,485.5 624.4,484.9 623.7,484.4 623.1,483.9 622.4,483.4 621.7,482.9 621.0,482.5 620.4,482.1 619.7,481.6 619.0,481.2 619.7,480.9 620.4,480.5 621.0,480.2 621.7,479.9 622.4,479.6 623.1,479.3 623.7,479.0 624.4,478.8 625.1,478.6 625.8,478.4 626.5,478.2 627.1,478.0 627.8,477.8 628.5,477.7 629.2,477.6 629.8,477.5 630.5,477.4 631.2,477.3 631.9,477.2 632.6,477.2 633.2,477.1 633.9,477.1 634.6,477.1 635.3,477.0 635.9,477.0 636.6,477.0 637.3,477.0 638.0,477.0 638.7,477.0 639.3,477.0" fill="none" stroke="#50f050" stroke-width="1" shape-rendering="crispEdges"/><polyline points="633.9,477.0 634.6,477.0 635.3,477.0 635.9,477.0 636.6,477.0 637.3,477.0 638.0,477.0 638.7,476.9 639.3,476.9 640.0,476.9 640.7,476.8 641.4,476.8 642.0,476.7 642.7,476.6 643.4,476.5 644.1,476.4 644.8,476.3 645.4,476.2 646.1,476.0 646.8,475.8 647.5,475.6 648.1,475.4 648.8,475.2 649.5,475.0 650.2,474.7 650.9,474.4 651.5,474.1 652.2,473.8 652.9,473.5 653.6,473.1 654.2,472.8 654.9,472.4 655.6,471.9 656.3,471.5 657.0,471.1 657.6,470.6 658.3,470.1 659.0,469.6 659.7,469.1 660.3,468.5 661.0,468.0 661.7,467.4 662.4,466.8 663.1,466.2 663.7,465.6 664.4,465.0 665.1,464.3 665.8,463.7 666.4,463.0 667.1,462.4 667.8,461.7 668.5,461.0 669.2,460.4 669.8,459.7 670.5,459.0 671.2,458.3 671.9,457.6 672.5,456.9 673.2,456.3 673.9,455.6 674.6,454.9 675.3,454.3 675.9,453.6 676.6,452.9 677.3,452.3 678.0,451.7 678.6,451.1 679.3,450.5 680.0,449.9 680.7,449.3 681.4,448.8 682.0,448.3 682.7,447.8 683.4,447.3 684.1,446.8 684.7,446.4 685.4,445.9 686.1,445.5 686.8,445.2 687.5,444.8 688.1,444.5 688.8,444.2 689.5,444.0 690.2,443.8 690.8,443.6 691.5,443.4 692.2,443.2 692.9,443.1 693.6,443.1 694.2,443.0 694.9,443.0 695.6,443.0 696.3,443.1 696.9,443.1 697.6,443.2 698.3,443.4 699.0,443.6 699.7,443.8 700.3,444.0 701.0,444.2 701.7,444.5 702.4,444.8 703.0,445.2 703.7,445.5 704.4,445.9 705.1,446.4 705.8,446.8 706.4,447.3 707.1,447.8 707.8,448.3 708.5,448.8 709.1,449.3 709.8,449.9 710.5,450.5 711.2,451.1 711.9,451.7 712.5,452.3 713.2,452.9 713.9,453.6 714.6,454.3 715.2,454.9 715.9,455.6 716.6,456.3 717.3,456.9 718.0,457.6 718.6,458.3 719.3,459.0 720.0,459.7 720.7,460.4 721.3,461.0 722.0,461.7 722.7,462.4 723.4,463.0 724.1,463.7 724.7,464.3 725.4,465.0 726.1,465.6 726.8,466.2 727.4,466.8 728.1,467.4 728.8,468.0 729.5,468.5 730.2,469.1 730.8,469.6 731.5,470.1 732.2,470.6 732.9,471.1 733.5,471.5 734.2,471.9 734.9,472.4 735.6,472.8 736.3,473.1 736.9,473.5 737.6,473.8 738.3,474.1 739.0,474.4 739.6,474.7 740.3,475.0 741.0,475.2 740.3,475.4 739.6,475.6 739.0,475.8 738.3,476.0 737.6,476.2 736.9,476.3 736.3,476.4 735.6,476.5 734.9,476.6 734.2,476.7 733.5,476.8 732.9,476.8 732.2,476.9 731.5,476.9 730.8,476.9 730.2,477.0 729.5,477.0 728.8,477.0 728.1,477.0 727.4,477.0 726.8,477.0 726.1,477.0 725.4,477.0 724.7,477.0 724.1,477.0 723.4,477.0 722.7,477.0 722.0,477.0 721.3,477.1 720.7,477.1 720.0,477.1 719.3,477.2 718.6,477.2 718.0,477.3 717.3,477.4 716.6,477.5 715.9,477.6 715.2,477.7 714.6,477.8 713.9,478.0 713.2,478.2 712.5,478.4 711.9,478.6 711.2,478.8 710.5,479.0 709.8,479.3 709.1,479.6 708.5,479.9 707.8,480.2 707.1,480.5 706.4,480.9 705.8,481.2 705.1,481.6 704.4,482.1 703.7,482.5 703.0,482.9 702.4,483.4 701.7,483.9 701.0,484.4 700.3,484.9 699.7,485.5 699.0,486.0 698.3,486.6 697.6,487.2 696.9,487.8 696.3,488.4 695.6,489.0 694.9,489.7 694.2,490.3 693.6,491.0 692.9,491.6 692.2,492.3 691.5,493.0 690.8,493.6 690.2,494.3 689.5,495.0 688.8,495.7 688.1,496.4 687.5,497.1 686.8,497.7 686.1,498.4 685.4,499.1 684.7,499.7 684.1,500.4 683.4,501.1 682.7,501.7 682.0,502.3 681.4,502.9 680.7,503.5 680.0,504.1 679.3,504.7 678.6,505.2 678.0,505.7 677.3,506.2 676.6,506.7 675.9,507.2 675.3,507.6 674.6,508.1 673.9,508.5 673.2,508.8 672.5,509.2 671.9,509.5 671.2,509.8 670.5,510.0 669.8,510.2 669.2,510.4 668.5,510.6 667.8,510.8 667.1,510.9 666.4,510.9 665.8,511.0 665.1,511.0 664.4,511.0 663.7,510.9 663.1,510.9 662.4,510.8 661.7,510.6 661.0,510.4 660.3,510.2 659.7,510.0 659.0,509.8 658.3,509.5 657.6,509.2 657.0,508.8 656.3,508.5 655.6,508.1 654.9,507.6 654.2,507.2 653.6,506.7 652.9,506.2 652.2,505.7 651.5,505.2 650.9,504.7 650.2,504.1 649.5,503.5 648.8,502.9 648.1,502.3 647.5,501.7 646.8,501.1 646.1,500.4 645.4,499.7 644.8,499.1 644.1,498.4 643.4,497.7 642.7,497.1 642.0,496.4 641.4,495.7 640.7,495.0 640.0,494.3 639.3,493.6 638.7,493.0 638.0,492.3 637.3,491.6 636.6,491.0 635.9,490.3 635.3,489.7 634.6,489.0 633.9,488.4 633.2,487.8 632.6,487.2 631.9,486.6 631.2,486.0 630.5,485.5 629.8,484.9 629.2,484.4 628.5,483.9 627.8,483.4 627.1,482.9 626.5,482.5 625.8,482.1 625.1,481.6 624.4,481.2 623.7,480.9 623.1,480.5 622.4,480.2 621.7,479.9 621.0,479.6 620.4,479.3 619.7,479.0 619.0,478.8 619.7,478.6 620.4,478.4 621.0,478.2 621.7,478.0 622.4,477.8 623.1,477.7 623.7,477.6 624.4,477.5 625.1,477.4 625.8,477.3 626.5,477.2 627.1,477.2 627.8,477.1 628.5,477.1 629.2,477.1 629.8,477.0 630.5,477.0 631.2,477.0 631.9,477.0 632.6,477.0 633.2,477.0 633.9,477.0" fill="none" stroke="#50f050" stroke-width="1" shape-rendering="crispEdges"/><polyline points="628.5,477.0 629.2,477.0 629.8,477.0 630.5,477.0 631.2,477.0 631.9,477.0 632.6,477.0 633.2,476.9 633.9,476.9 634.6,476.9 635.3,476.8 635.9,476.8 636.6,476.7 637.3,476.6 638.0,476.5 638.7,476.4 639.3,476.3 640.0,476.2 640.7,476.0 641.4,475.8 642.0,475.6 642.7,475.4 643.4,475.2 644.1,475.0 644.8,474.7 645.4,474.4 646.1,474.1 646.8,473.8 647.5,473.5 648.1,473.1 648.8,472.8 649.5,472.4 650.2,471.9 650.9,471.5 651.5,471.1 652.2,470.6 652.9,470.1 653.6,469.6 654.2,469.1 654.9,468.5 655.6,468.0 656.3,467.4 657.0,466.8 657.6,466.2 658.3,465.6 659.0,465.0 659.7,464.3 660.3,463.7 661.0,463.0 661.7,462.4 662.4,461.7 663.1,461.0 663.7,460.4 664.4,459.7 665.1,459.0 665.8,458.3 666.4,457.6 667.1,456.9 667.8,456.3 668.5,455.6 669.2,454.9 669.8,454.3 670.5,453.6 671.2,452.9 671.9,452.3 672.5,451.7 673.2,451.1 673.9,450.5 674.6,449.9 675.3,449.3 675.9,448.8 676.6,448.3 677.3,447.8 678.0,447.3 678.6,446.8 679.3,446.4 680.0,445.9 680.7,445.5 681.4,445.2 682.0,444.8 682.7,444.5 683.4,444.2 684.1,444.0 684.7,443.8 685.4,443.6 686.1,443.4 686.8,443.2 687.5,443.1 688.1,443.1 688.8,443.0 689.5,443.0 690.2,443.0 690.8,443.1 691.5,443.1 692.2,443.2 692.9,443.4 693.6,443.6 694.2,443.8 694.9,444.0 695.6,444.2 696.3,444.5 696.9,444.8 697.6,445.2 698.3,445.5 699.0,445.9 699.7,446.4 700.3,446.8 701.0,447.3 701.7,447.8 702.4,448.3 703.0,448.8 703.7,449.3 704.4,449.9 705.1,450.5 705.8,451.1 706.4,451.7 707.1,452.3 707.8,452.9 708.5,453.6 709.1,454.3 709.8,454.9 710.5,455.6 711.2,456.3 711.9,456.9 712.5,457.6 713.2,458.3 713.9,459.0 714.6,459.7 715.2,460.4 715.9,461.0 716.6,461.7 717.3,462.4 718.0,463.0 718.6,463.7 719.3,464.3 720.0,465.0 720.7,465.6 721.3,466.2 722.0,466.8 722.7,467.4 723.4,468.0 724.1,468.5 724.7,469.1 725.4,469.6 726.1,470.1 726.8,470.6 727.4,471.1 728.1,471.5 728.8,471.9 729.5,472.4 730.2,472.8 730.8,473.1 731.5,473.5 732.2,473.8 732.9,474.1 733.5,474.4 734.2,474.7 734.9,475.0 735.6,475.2 736.3,475.4 736.9,475.6 737.6,475.8 738.3,476.0 739.0,476.2 739.6,476.3 740.3,476.4 741.0,476.5 740.3,476.6 739.6,476.7 739.0,476.8 738.3,476.8 737.6,476.9 736.9,476.9 736.3,476.9 735.6,477.0 734.9,477.0 734.2,477.0 733.5,477.0 732.9,477.0 732.2,477.0 731.5,477.0 730.8,477.0 730.2,477.0 729.5,477.0 728.8,477.0 728.1,477.0 727.4,477.0 726.8,477.1 726.1,477.1 725.4,477.1 724.7,477.2 724.1,477.2 723.4,477.3 722.7,477.4 722.0,477.5 721.3,477.6 720.7,477.7 720.0,477.8 719.3,478.0 718.6,478.2 718.0,478.4 717.3,478.6 716.6,478.8 715.9,479.0 715.2,479.3 714.6,479.6 713.9,479.9 713.2,480.2 712.5,480.5 711.9,480.9 711.2,481.2 710.5,481.6 709.8,482.1 709.1,482.5 708.5,482.9 707.8,483.4 707.1,483.9 706.4,484.4 705.8,484.9 705.1,485.5 704.4,486.0 703.7,486.6 703.0,487.2 702.4,487.8 701.7,488.4 701.0,489.0 700.3,489.7 699.7,490.3 699.0,491.0 698.3,491.6 697.6,492.3 696.9,493.0 696.3,493.6 695.6,494.3 694.9,495.0 694.2,495.7 693.6,496.4 692.9,497.1 692.2,497.7 691.5,498.4 690.8,499.1 690.2,499.7 689.5,500.4 688.8,501.1 688.1,501.7 687.5,502.3 686.8,502.9 686.1,503.5 685.4,504.1 684.7,504.7 684.1,505.2 683.4,505.7 682.7,506.2 682.0,506.7 681.4,507.2 680.7,507.6 680.0,508.1 679.3,508.5 678.6,508.8 678.0,509.2 677.3,509.5 676.6,509.8 675.9,510.0 675.3,510.2 674.6,510.4 673.9,510.6 673.2,510.8 672.5,510.9 671.9,510.9 671.2,511.0 670.5,511.0 669.8,511.0 669.2,510.9 668.5,510.9 667.8,510.8 667.1,510.6 666.4,510.4 665.8,510.2 665.1,510.0 664.4,509.8 663.7,509.5 663.1,509.2 662.4,508.8 661.7,508.5 661.0,508.1 660.3,507.6 659.7,507.2 659.0,506.7 658.3,506.2 657.6,505.7 657.0,505.2 656.3,504.7 655.6,504.1 654.9,503.5 654.2,502.9 653.6,502.3 652.9,501.7 652.2,501.1 651.5,500.4 650.9,499.7 650.2,499.1 649.5,498.4 648.8,497.7 648.1,497.1 647.5,496.4 646.8,495.7 646.1,495.0 645.4,494.3 644.8,493.6 644.1,493.0 643.4,492.3 642.7,491.6 642.0,491.0 641.4,490.3 640.7,489.7 640.0,489.0 639.3,488.4 638.7,487.8 638.0,487.2 637.3,486.6 636.6,486.0 635.9,485.5 635.3,484.9 634.6,484.4 633.9,483.9 633.2,483.4 632.6,482.9 631.9,482.5 631.2,482.1 630.5,481.6 629.8,481.2 629.2,480.9 628.5,480.5 627.8,480.2 627.1,479.9 626.5,479.6 625.8,479.3 625.1,479.0 624.4,478.8 623.7,478.6 623.1,478.4 622.4,478.2 621.7,478.0 621.0,477.8 620.4,477.7 619.7,477.6 619.0,477.5 619.7,477.4 620.4,477.3 621.0,477.2 621.7,477.2 622.4,477.1 623.1,477.1 623.7,477.1 624.4,477.0 625.1,477.0 625.8,477.0 626.5,477.0 627.1,477.0 627.8,477.0 628.5,477.0" fill="none" stroke="#50f050" stroke-width="1" shape-rendering="crispEdges"/><polyline points="623.1,477.0 623.7,477.0 624.4,477.0 625.1,477.0 625.8,477.0 626.5,477.0 627.1,477.0 627.8,476.9 628.5,476.9 629.2,476.9 629.8,476.8 630.5,476.8 631.2,476.7 631.9,476.6 632.6,476.5 633.2,476.4 633.9,476.3 634.6,476.2 635.3,476.0 635.9,475.8 636.6,475.6 637.3,475.4 638.0,475.2 638.7,475.0 639.3,474.7 640.0,474.4 640.7,474.1 641.4,473.8 642.0,473.5 642.7,473.1 643.4,472.8 644.1,472.4 644.8,471.9 645.4,471.5 646.1,471.1 646.8,470.6 647.5,470.1 648.1,469.6 648.8,469.1 649.5,468.5 650.2,468.0 650.9,467.4 651.5,466.8 652.2,466.2 652.9,465.6 653.6,465.0 654.2,464.3 654.9,463.7 655.6,463.0 656.3,462.4 657.0,461.7 657.6,461.0 658.3,460.4 659.0,459.7 659.7,459.0 660.3,458.3 661.0,457.6 661.7,456.9 662.4,456.3 663.1,455.6 663.7,454.9 664.4,454.3 665.1,453.6 665.8,452.9 666.4,452.3 667.1,451.7 667.8,451.1 668.5,450.5 669.2,449.9 669.8,449.3 670.5,448.8 671.2,448.3 671.9,447.8 672.5,447.3 673.2,446.8 673.9,446.4 674.6,445.9 675.3,445.5 675.9,445.2 676.6,444.8 677.3,444.5 678.0,444.2 678.6,444.0 679.3,443.8 680.0,443.6 680.7,443.4 681.4,443.2 682.0,443.1 682.7,443.1 683.4,443.0 684.1,443.0 684.7,443.0 685.4,443.1 686.1,443.1 686.8,443.2 687.5,443.4 688.1,443.6 688.8,443.8 689.5,444.0 690.2,444.2 690.8,444.5 691.5,444.8 692.2,445.2 692.9,445.5 693.6,445.9 694.2,446.4 694.9,446.8 695.6,447.3 696.3,447.8 696.9,448.3 697.6,448.8 698.3,449.3 699.0,449.9 699.7,450.5 700.3,451.1 701.0,451.7 701.7,452.3 702.4,452.9 703.0,453.6 703.7,454.3 704.4,454.9 705.1,455.6 705.8,456.3 706.4,456.9 707.1,457.6 707.8,458.3 708.5,459.0 709.1,459.7 709.8,460.4 710.5,461.0 711.2,461.7 711.9,462.4 712.5,463.0 713.2,463.7 713.9,464.3 714.6,465.0 715.2,465.6 715.9,466.2 716.6,466.8 717.3,467.4 718.0,468.0 718.6,468.5 719.3,469.1 720.0,469.6 720.7,470.1 721.3,470.6 722.0,471.1 722.7,471.5 723.4,471.9 724.1,472.4 724.7,472.8 725.4,473.1 726.1,473.5 726.8,473.8 727.4,474.1 728.1,474.4 728.8,474.7 729.5,475.0 730.2,475.2 730.8,475.4 731.5,475.6 732.2,475.8 732.9,476.0 733.5,476.2 734.2,476.3 734.9,476.4 735.6,476.5 736.3,476.6 736.9,476.7 737.6,476.8 738.3,476.8 739.0,476.9 739.6,476.9 740.3,476.9 741.0,477.0 740.3,477.0 739.6,477.0 739.0,477.0 738.3,477.0 737.6,477.0 736.9,477.0 736.3,477.0 735.6,477.0 734.9,477.0 734.2,477.0 733.5,477.0 732.9,477.0 732.2,477.1 731.5,477.1 730.8,477.1 730.2,477.2 729.5,477.2 728.8,477.3 728.1,477.4 727.4,477.5 726.8,477.6 726.1,477.7 725.4,477.8 724.7,478.0 724.1,478.2 723.4,478.4 722.7,478.6 722.0,478.8 721.3,479.0 720.7,479.3 720.0,479.6 719.3,479.9 718.6,480.2 718.0,480.5 717.3,480.9 716.6,481.2 715.9,481.6 715.2,482.1 714.6,482.5 713.9,482.9 713.2,483.4 712.5,483.9 711.9,484.4 711.2,484.9 710.5,485.5 709.8,486.0 709.1,486.6 708.5,487.2 707.8,487.8 707.1,488.4 706.4,489.0 705.8,489.7 705.1,490.3 704.4,491.0 703.7,491.6 703.0,492.3 702.4,493.0 701.7,493.6 701.0,494.3 700.3,495.0 699.7,495.7 699.0,496.4 698.3,497.1 697.6,497.7 696.9,498.4 696.3,499.1 695.6,499.7 694.9,500.4 694.2,501.1 693.6,501.7 692.9,502.3 692.2,502.9 691.5,503.5 690.8,504.1 690.2,504.7 689.5,505.2 688.8,505.7 688.1,506.2 687.5,506.7 686.8,507.2 686.1,507.6 685.4,508.1 684.7,508.5 684.1,508.8 683.4,509.2 682.7,509.5 682.0,509.8 681.4,510.0 680.7,510.2 680.0,510.4 679.3,510.6 678.6,510.8 678.0,510.9 677.3,510.9 676.6,511.0 675.9,511.0 675.3,511.0 674.6,510.9 673.9,510.9 673.2,510.8 672.5,510.6 671.9,510.4 671.2,510.2 670.5,510.0 669.8,509.8 669.2,509.5 668.5,509.2 667.8,508.8 667.1,508.5 666.4,508.1 665.8,507.6 665.1,507.2 664.4,506.7 663.7,506.2 663.1,505.7 662.4,505.2 661.7,504.7 661.0,504.1 660.3,503.5 659.7,502.9 659.0,502.3 658.3,501.7 657.6,501.1 657.0,500.4 656.3,499.7 655.6,499.1 654.9,498.4 654.2,497.7 653.6,497.1 652.9,496.4 652.2,495.7 651.5,495.0 650.9,494.3 650.2,493.6 649.5,493.0 648.8,492.3 648.1,491.6 647.5,491.0 646.8,490.3 646.1,489.7 645.4,489.0 644.8,488.4 644.1,487.8 643.4,487.2 642.7,486.6 642.0,486.0 641.4,485.5 640.7,484.9 640.0,484.4 639.3,483.9 638.7,483.4 638.0,482.9 637.3,482.5 636.6,482.1 635.9,481.6 635.3,481.2 634.6,480.9 633.9,480.5 633.2,480.2 632.6,479.9 631.9,479.6 631.2,479.3 630.5,479.0 629.8,478.8 629.2,478.6 628.5,478.4 627.8,478.2 627.1,478.0 626.5,477.8 625.8,477.7 625.1,477.6 624.4,477.5 623.7,477.4 623.1,477.3 622.4,477.2 621.7,477.2 621.0,477.1 620.4,477.1 619.7,477.1 619.0,477.0 619.7,477.0 620.4,477.0 621.0,477.0 621.7,477.0 622.4,477.0 623.1,477.0" fill="none" stroke="#50f050" stroke-width="1" shape-rendering="crispEdges"/>
<rect x="517" y="534" width="326" height="15" fill="#f0f0f0" />
<rect x="517" y="534" width="326" height="1" fill="#ffffff" />
<path d="M521,541 L527,538 L527,544 Z" fill="#000"/>
<path d="M527,542 L532.5,535 L538,542 Z" fill="#000"/>
<rect x="532" y="541" width="1" height="8" fill="#000" />
<rect x="828" y="535" width="15" height="14" fill="#f8f8f8" />
<rect x="827" y="535" width="1" height="14" fill="#d0d0d0" />
<path d="M833,538 L839,541 L833,544 Z" fill="#000"/>
<rect x="462" y="549" width="381" height="1" fill="#606060" />
<rect x="463" y="551" width="419" height="18" fill="#000" />
<rect x="882" y="551" width="1" height="19" fill="#909090" />
<rect x="462" y="569" width="421" height="1" fill="#909090" />
<path d="M868,551 H879 Q882,551 882,554 V566 Q882,569 879,569 H868 Z" fill="#00ff08"/>
<rect x="497.0" y="553" width="40" height="14" rx="4" fill="#00f800" stroke="#0a6a0a" stroke-width="0.6"/>
<text x="534.5" y="564.5" font-size="11" fill="#000" text-anchor="end" >-20.000</text>
<text x="600" y="564" font-size="11" fill="#3ee03e" text-anchor="middle" >-10.000</text>
<text x="680" y="564" font-size="11" fill="#3ee03e" text-anchor="middle" >0.000</text>
<text x="760" y="564" font-size="11" fill="#3ee03e" text-anchor="middle" >10.000</text>
<rect x="823.0" y="553" width="40" height="14" rx="4" fill="#00f800" stroke="#0a6a0a" stroke-width="0.6"/>
<text x="860.5" y="564.5" font-size="11" fill="#000" text-anchor="end" >20.000</text>
<rect x="465.0" y="415" width="40" height="14" rx="4" fill="#00f800" stroke="#0a6a0a" stroke-width="0.6"/>
<text x="502.5" y="426.5" font-size="11" fill="#000" text-anchor="end" >20.000</text>
<text x="503" y="454.0" font-size="11" fill="#3ee03e" text-anchor="end" >10.000</text>
<text x="503" y="482.5" font-size="11" fill="#3ee03e" text-anchor="end" >0.000</text>
<text x="503" y="511.0" font-size="11" fill="#3ee03e" text-anchor="end" >-10.000</text>
<rect x="464.0" y="528" width="41" height="14" rx="4" fill="#00f800" stroke="#0a6a0a" stroke-width="0.6"/>
<text x="502.5" y="539.5" font-size="11" fill="#000" text-anchor="end" >-20.000</text>
<path d="M506,484 H509.5 V477.5 H514" fill="none" stroke="#e8e8e8" stroke-width="2"/>
<g transform="translate(81,189)"><rect x="0" y="0" width="24" height="24" fill="#000"/><path d="M2,12 L11,3.5 L22,9" fill="none" stroke="#20d020" stroke-width="1.8"/><path d="M11.5,2 V22" stroke="#fff" stroke-width="1"/><text x="3" y="21.5" font-size="9" fill="#fff">0</text></g>
<rect x="110" y="186" width="1" height="31" fill="#b0b0b0" />
<g transform="translate(118,190)"><rect x="0.5" y="0.5" width="7.5" height="4" fill="#10e010" stroke="#107010" stroke-width="0.8"/><rect x="0.5" y="9.5" width="7.5" height="4" fill="#30e8f8" stroke="#108090" stroke-width="0.8"/><rect x="0.5" y="18.5" width="7.5" height="4" fill="#2070d0" stroke="#0a3a80" stroke-width="0.8"/><path d="M8,2.5 H24 M8,11.5 H24 M8,20.5 H24" stroke="#666" stroke-width="0.8"/><path d="M18.5,3 V20" stroke="#000" stroke-width="1"/><path d="M16.5,5.5 L18.5,3 L20.5,5.5 M16.5,9 L18.5,11.5 L20.5,9 M16.5,14 L18.5,11.5 L20.5,14 M16.5,17.5 L18.5,20 L20.5,17.5" fill="none" stroke="#000" stroke-width="1"/></g>
<rect x="147" y="186" width="1" height="31" fill="#b0b0b0" />
<g transform="translate(180,189)"><rect x="0.5" y="0.5" width="23" height="13" rx="2" fill="#f8f070" stroke="#000" stroke-width="1"/><text x="2.5" y="6" font-size="4.5" fill="#6a6a30">Comment</text><text x="2.5" y="11" font-size="4.5" fill="#6a6a30">Text</text><rect x="10" y="12.5" width="3" height="1.5" fill="#c03010"/><path d="M11.5,14 L21,22" stroke="#000" stroke-width="1.3"/><path d="M17,23.5 H23.5 V17 Z" fill="#000"/></g>
<g transform="translate(211,190)"><path d="M2,3 Q12,7 22,3 V19 Q12,15 2,19 Z" fill="#ececec" stroke="#c8c8c8" stroke-width="1.2"/><path d="M3,1 L21,21 M21,1 L3,21" stroke="#c4c4c4" stroke-width="2.5"/></g>
<rect x="240" y="186" width="1" height="31" fill="#b0b0b0" />
<g transform="translate(248,189)"><rect x="0" y="0" width="24" height="24" fill="#000"/><rect x="3" y="3.5" width="2.5" height="2.5" fill="#20d020"/><rect x="3" y="8" width="2.5" height="2.5" fill="#30d8e8"/><text x="6.5" y="7.2" font-size="6" fill="#c8c8c8">Ch1</text><text x="6.5" y="11.7" font-size="6" fill="#c8c8c8">Ch2</text></g>
<g transform="translate(279,189)"><rect x="0" y="0" width="24" height="24" fill="#000"/><path d="M1.5,12 Q5,-2 9,7 Q12,15 16,13 Q20,12 22,10 M22,17 Q19,13 15,13" fill="none" stroke="#20d020" stroke-width="1.6"/><path d="M1.5,14 Q6,22 11,17 Q14,12 18,13 Q21,14 23,16" fill="none" stroke="#30d8e8" stroke-width="1.6"/></g>
<g transform="translate(310,189)"><rect x="0.5" y="0.5" width="23" height="23" fill="#fff" stroke="#808080"/><rect x="1" y="1" width="22" height="3.5" fill="#d8d8d8"/><rect x="2" y="13" width="11" height="9" fill="#000"/><path d="M3.5,18 Q5.5,13 7.5,17.5 T11.5,17" fill="none" stroke="#30a030" stroke-width="0.8"/><path d="M14,14 L20.5,7.5" stroke="#000" stroke-width="1.3"/><path d="M16.5,6.5 H21.5 V11.5 Z" fill="#000"/></g>
<g transform="translate(340,189)"><path d="M2,1 L6,0.5 L12,7 L8,11 L1.5,4.5 Z" fill="#f0a020" stroke="#4a2a00" stroke-width="0.8"/><path d="M8,11 L12,7 L17,12.5 L13,16.5 Z" fill="#c8c8c8" stroke="#222" stroke-width="0.8"/><path d="M13,16.5 L17,12.5 L19,14.5 L15,18.5 Z" fill="#c03020" stroke="#401010" stroke-width="0.8"/><ellipse cx="17" cy="19.5" rx="5" ry="3" fill="none" stroke="#c8c8c8" stroke-width="0.8"/></g>
<g transform="translate(373,190)"><path d="M0,3.2 L3.2,0 L11,7.8 L18.8,0 L22,3.2 L14.2,11 L22,18.8 L18.8,22 L11,14.2 L3.2,22 L0,18.8 L7.8,11 Z" fill="#f58080" stroke="#7a1a1a" stroke-width="1"/></g>
<text x="399.5" y="207" font-size="17.5" fill="#000" text-anchor="start" font-family="Liberation Serif" font-weight="bold">1</text>
<rect x="512.5" y="186.5" width="30" height="28" fill="#cce8fc" stroke="#99d0f4"/>
<g transform="translate(517,190)"><rect x="0" y="0" width="24" height="24" fill="#000"/><path d="M2.5,2 V22 M9.5,2 V22 M14.5,2 V22 M18.5,2 V22 M21.5,2 V22" stroke="#f0f0f0" stroke-width="1.2"/></g>
<rect x="545" y="186" width="1" height="31" fill="#b0b0b0" />
<g transform="translate(553,190)"><rect x="0.5" y="0.5" width="7.5" height="4" fill="#10e010" stroke="#107010" stroke-width="0.8"/><rect x="0.5" y="9.5" width="7.5" height="4" fill="#30e8f8" stroke="#108090" stroke-width="0.8"/><rect x="0.5" y="18.5" width="7.5" height="4" fill="#2070d0" stroke="#0a3a80" stroke-width="0.8"/><path d="M8,2.5 H24 M8,11.5 H24 M8,20.5 H24" stroke="#666" stroke-width="0.8"/><path d="M18.5,3 V20" stroke="#000" stroke-width="1"/><path d="M16.5,5.5 L18.5,3 L20.5,5.5 M16.5,9 L18.5,11.5 L20.5,9 M16.5,14 L18.5,11.5 L20.5,14 M16.5,17.5 L18.5,20 L20.5,17.5" fill="none" stroke="#000" stroke-width="1"/></g>
<g transform="translate(608,189)"><rect x="0.5" y="0.5" width="23" height="13" rx="2" fill="#f8f070" stroke="#000" stroke-width="1"/><text x="2.5" y="6" font-size="4.5" fill="#6a6a30">Comment</text><text x="2.5" y="11" font-size="4.5" fill="#6a6a30">Text</text><rect x="10" y="12.5" width="3" height="1.5" fill="#c03010"/><path d="M11.5,14 L21,22" stroke="#000" stroke-width="1.3"/><path d="M17,23.5 H23.5 V17 Z" fill="#000"/></g>
<g transform="translate(639,190)"><path d="M2,3 Q12,7 22,3 V19 Q12,15 2,19 Z" fill="#ececec" stroke="#c8c8c8" stroke-width="1.2"/><path d="M3,1 L21,21 M21,1 L3,21" stroke="#c4c4c4" stroke-width="2.5"/></g>
<rect x="670" y="186" width="1" height="31" fill="#b0b0b0" />
<g transform="translate(676,189)"><rect x="0" y="0" width="24" height="24" fill="#000"/><rect x="3" y="3.5" width="2.5" height="2.5" fill="#20d020"/><rect x="3" y="8" width="2.5" height="2.5" fill="#30d8e8"/><text x="6.5" y="7.2" font-size="6" fill="#c8c8c8">Ch1</text><text x="6.5" y="11.7" font-size="6" fill="#c8c8c8">Ch2</text></g>
<g transform="translate(707,189)"><rect x="0" y="0" width="24" height="24" fill="#000"/><path d="M1.5,12 Q5,-2 9,7 Q12,15 16,13 Q20,12 22,10 M22,17 Q19,13 15,13" fill="none" stroke="#20d020" stroke-width="1.6"/><path d="M1.5,14 Q6,22 11,17 Q14,12 18,13 Q21,14 23,16" fill="none" stroke="#30d8e8" stroke-width="1.6"/></g>
<g transform="translate(738,189)"><rect x="0.5" y="0.5" width="23" height="23" fill="#fff" stroke="#808080"/><rect x="1" y="1" width="22" height="3.5" fill="#d8d8d8"/><rect x="2" y="13" width="11" height="9" fill="#000"/><path d="M3.5,18 Q5.5,13 7.5,17.5 T11.5,17" fill="none" stroke="#30a030" stroke-width="0.8"/><path d="M14,14 L20.5,7.5" stroke="#000" stroke-width="1.3"/><path d="M16.5,6.5 H21.5 V11.5 Z" fill="#000"/></g>
<g transform="translate(768,189)"><path d="M2,1 L6,0.5 L12,7 L8,11 L1.5,4.5 Z" fill="#f0a020" stroke="#4a2a00" stroke-width="0.8"/><path d="M8,11 L12,7 L17,12.5 L13,16.5 Z" fill="#c8c8c8" stroke="#222" stroke-width="0.8"/><path d="M13,16.5 L17,12.5 L19,14.5 L15,18.5 Z" fill="#c03020" stroke="#401010" stroke-width="0.8"/><ellipse cx="17" cy="19.5" rx="5" ry="3" fill="none" stroke="#c8c8c8" stroke-width="0.8"/></g>
<g transform="translate(801,190)"><path d="M0,3.2 L3.2,0 L11,7.8 L18.8,0 L22,3.2 L14.2,11 L22,18.8 L18.8,22 L11,14.2 L3.2,22 L0,18.8 L7.8,11 Z" fill="#f58080" stroke="#7a1a1a" stroke-width="1"/></g>
<text x="827" y="207" font-size="17.5" fill="#000" text-anchor="start" font-family="Liberation Serif" font-weight="bold">2</text>
<g transform="translate(525,391)"><rect x="0.5" y="0.5" width="7.5" height="4" fill="#10e010" stroke="#107010" stroke-width="0.8"/><rect x="0.5" y="9.5" width="7.5" height="4" fill="#30e8f8" stroke="#108090" stroke-width="0.8"/><rect x="0.5" y="18.5" width="7.5" height="4" fill="#2070d0" stroke="#0a3a80" stroke-width="0.8"/><path d="M8,2.5 H24 M8,11.5 H24 M8,20.5 H24" stroke="#666" stroke-width="0.8"/><path d="M18.5,3 V20" stroke="#000" stroke-width="1"/><path d="M16.5,5.5 L18.5,3 L20.5,5.5 M16.5,9 L18.5,11.5 L20.5,9 M16.5,14 L18.5,11.5 L20.5,14 M16.5,17.5 L18.5,20 L20.5,17.5" fill="none" stroke="#000" stroke-width="1"/></g>
<rect x="554" y="387" width="1" height="31" fill="#b0b0b0" />
<g transform="translate(562,391)"><rect x="0.5" y="0.5" width="14" height="22" fill="#fff" stroke="#808080"/><rect x="1" y="1" width="13" height="3.5" fill="#c8c8c8"/><path d="M3,8 H9 M11,8 H14 M3,11 H9 M11,11 H14 M3,14 H9 M11,14 H14 M3,19.5 H6 M9,19.5 H12" stroke="#000" stroke-width="1.3"/><path d="M1,16.5 H14" stroke="#808080" stroke-width="0.8"/></g>
<g transform="translate(608,390)"><rect x="0.5" y="0.5" width="23" height="13" rx="2" fill="#f8f070" stroke="#000" stroke-width="1"/><text x="2.5" y="6" font-size="4.5" fill="#6a6a30">Comment</text><text x="2.5" y="11" font-size="4.5" fill="#6a6a30">Text</text><rect x="10" y="12.5" width="3" height="1.5" fill="#c03010"/><path d="M11.5,14 L21,22" stroke="#000" stroke-width="1.3"/><path d="M17,23.5 H23.5 V17 Z" fill="#000"/></g>
<g transform="translate(639,391)"><path d="M2,3 Q12,7 22,3 V19 Q12,15 2,19 Z" fill="#ececec" stroke="#c8c8c8" stroke-width="1.2"/><path d="M3,1 L21,21 M21,1 L3,21" stroke="#c4c4c4" stroke-width="2.5"/></g>
<rect x="668" y="387" width="1" height="31" fill="#b0b0b0" />
<g transform="translate(676,390)"><rect x="0" y="0" width="24" height="24" fill="#000"/><rect x="3" y="3.5" width="2.5" height="2.5" fill="#20d020"/><rect x="3" y="8" width="2.5" height="2.5" fill="#30d8e8"/><text x="6.5" y="7.2" font-size="6" fill="#c8c8c8">Ch1</text><text x="6.5" y="11.7" font-size="6" fill="#c8c8c8">Ch2</text></g>
<rect x="703.5" y="387.5" width="30" height="28" fill="#cce8fc" stroke="#99d0f4"/>
<g transform="translate(708,391)"><rect x="0" y="0" width="24" height="24" fill="#000"/><ellipse cx="8" cy="11" rx="5" ry="8.5" fill="none" stroke="#20d020" stroke-width="1.5"/><ellipse cx="15.5" cy="17" rx="8" ry="4.5" fill="none" stroke="#30d8e8" stroke-width="1.5"/></g>
<g transform="translate(738,390)"><rect x="0.5" y="0.5" width="23" height="23" fill="#fff" stroke="#808080"/><rect x="1" y="1" width="22" height="3.5" fill="#d8d8d8"/><rect x="2" y="13" width="11" height="9" fill="#000"/><path d="M3.5,18 Q5.5,13 7.5,17.5 T11.5,17" fill="none" stroke="#30a030" stroke-width="0.8"/><path d="M14,14 L20.5,7.5" stroke="#000" stroke-width="1.3"/><path d="M16.5,6.5 H21.5 V11.5 Z" fill="#000"/></g>
<g transform="translate(768,390)"><path d="M2,1 L6,0.5 L12,7 L8,11 L1.5,4.5 Z" fill="#f0a020" stroke="#4a2a00" stroke-width="0.8"/><path d="M8,11 L12,7 L17,12.5 L13,16.5 Z" fill="#c8c8c8" stroke="#222" stroke-width="0.8"/><path d="M13,16.5 L17,12.5 L19,14.5 L15,18.5 Z" fill="#c03020" stroke="#401010" stroke-width="0.8"/><ellipse cx="17" cy="19.5" rx="5" ry="3" fill="none" stroke="#c8c8c8" stroke-width="0.8"/></g>
<g transform="translate(801,391)"><path d="M0,3.2 L3.2,0 L11,7.8 L18.8,0 L22,3.2 L14.2,11 L22,18.8 L18.8,22 L11,14.2 L3.2,22 L0,18.8 L7.8,11 Z" fill="#f58080" stroke="#7a1a1a" stroke-width="1"/></g>
<text x="825" y="408" font-size="17.5" fill="#000" text-anchor="start" font-family="Liberation Serif" font-weight="bold">3</text>
<rect x="399.5" y="534.5" width="14" height="14" fill="none" stroke="#d8d8d8"/>
<rect x="828.5" y="338.5" width="14" height="14" fill="none" stroke="#d8d8d8"/>
<rect x="827.5" y="534.5" width="14" height="14" fill="none" stroke="#d8d8d8"/>
<rect x="881" y="587" width="2" height="2" fill="#b8b8b8" />
<rect x="877" y="587" width="2" height="2" fill="#b8b8b8" />
<rect x="873" y="587" width="2" height="2" fill="#b8b8b8" />
<rect x="881" y="583" width="2" height="2" fill="#b8b8b8" />
<rect x="877" y="583" width="2" height="2" fill="#b8b8b8" />
<rect x="881" y="579" width="2" height="2" fill="#b8b8b8" />
<rect x="0" y="0" width="886" height="1" fill="#3a74aa" />
<rect x="0" y="0" width="1" height="593" fill="#3a74aa" />
<rect x="1" y="1" width="1" height="590" fill="#80acd4" />
<rect x="885" y="0" width="1" height="593" fill="#3a74aa" />
<rect x="0" y="591" width="886" height="2" fill="#3a74aa" />
</svg></body></html>
